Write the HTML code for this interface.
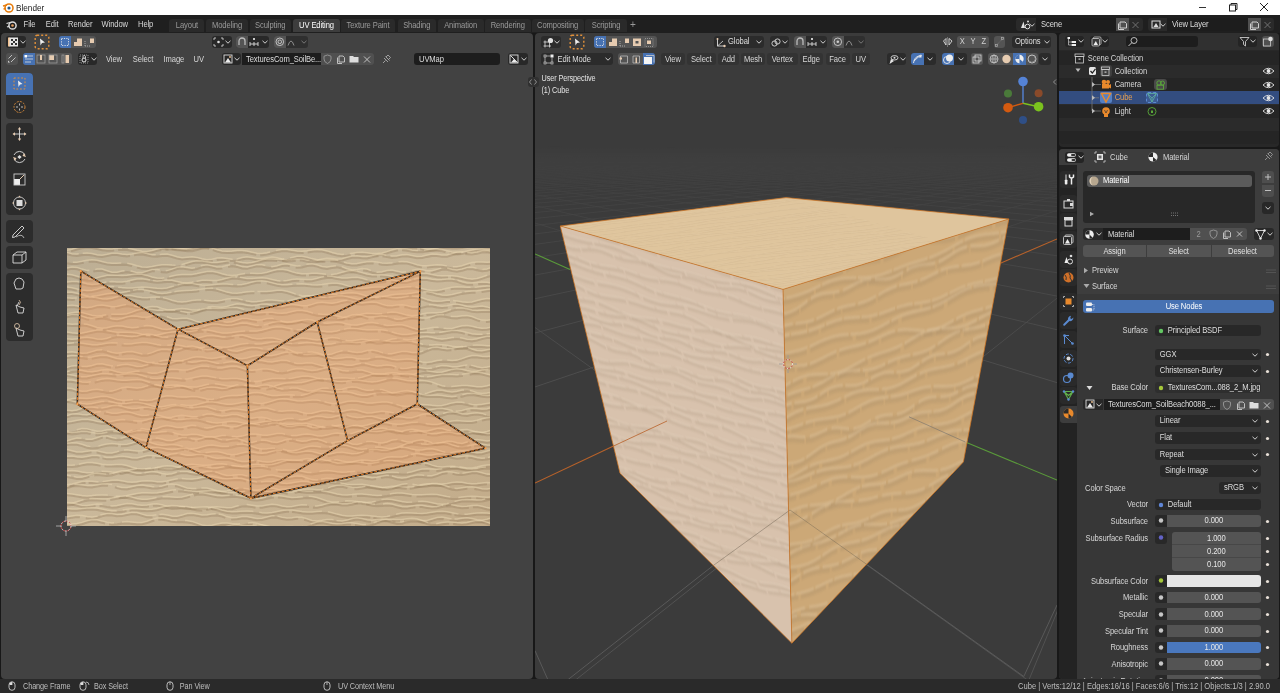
<!DOCTYPE html><html><head><meta charset="utf-8"><style>
html,body{margin:0;padding:0;width:1280px;height:693px;overflow:hidden;background:#181818}
#root{position:relative;width:1280px;height:693px;overflow:hidden;font-family:"Liberation Sans", sans-serif}
#root div{position:absolute;box-sizing:border-box}
.t{white-space:nowrap;font-family:"Liberation Sans", sans-serif;letter-spacing:-0.1px;transform:scaleY(1.13);transform-origin:50% 55%}
</style></head><body><div id="root">
<div style="left:0px;top:0px;width:1280px;height:15px;background:#ffffff;border-radius:0px;"></div>
<svg style="position:absolute;left:2px;top:2px;overflow:visible;" width="12" height="11" viewBox="0 0 12 11"><circle cx="7" cy="6" r="4" fill="none" stroke="#e87d0d" stroke-width="1.6"/><circle cx="7" cy="6" r="1.6" fill="#265787"/><path d="M1 4 L5 3 M1.5 7 L4 6.5" stroke="#e87d0d" stroke-width="1.4"/></svg>
<div class="t" style="left:16px;top:2.5px;height:11px;line-height:11px;font-size:8.2px;color:#1a1a1a;text-align:left;letter-spacing:0">Blender</div>
<div style="left:1199px;top:6.5px;width:7px;height:1px;background:#333;border-radius:0px;"></div>
<svg style="position:absolute;left:1228px;top:2px;overflow:visible;" width="10" height="10" viewBox="0 0 10 10"><rect x="1.5" y="3" width="6" height="6" fill="none" stroke="#222" stroke-width="1"/><path d="M3 3 V1.5 H9 V7.5 H7.5" fill="none" stroke="#222" stroke-width="1"/></svg>
<svg style="position:absolute;left:1259px;top:2px;overflow:visible;" width="10" height="10" viewBox="0 0 10 10"><path d="M1 1 L9 9 M9 1 L1 9" stroke="#222" stroke-width="1"/></svg>
<div style="left:0px;top:15px;width:1280px;height:18px;background:#1f1f1f;border-radius:0px;"></div>
<svg style="position:absolute;left:6px;top:19px;overflow:visible;" width="12" height="12" viewBox="0 0 12 12"><circle cx="6.5" cy="6.5" r="3.6" fill="none" stroke="#dcdcdc" stroke-width="1.5"/><circle cx="6.5" cy="6.5" r="1.3" fill="#e8a060"/><path d="M0.5 4.5 L4 3.5 M1 8 L3.5 7" stroke="#dcdcdc" stroke-width="1.3"/></svg>
<div class="t" style="left:23.6px;top:19.0px;height:12px;line-height:12px;font-size:7.6px;color:#d8d8d8;text-align:left;">File</div>
<div class="t" style="left:45.8px;top:19.0px;height:12px;line-height:12px;font-size:7.6px;color:#d8d8d8;text-align:left;">Edit</div>
<div class="t" style="left:68px;top:19.0px;height:12px;line-height:12px;font-size:7.6px;color:#d8d8d8;text-align:left;">Render</div>
<div class="t" style="left:101.6px;top:19.0px;height:12px;line-height:12px;font-size:7.6px;color:#d8d8d8;text-align:left;">Window</div>
<div class="t" style="left:138px;top:19.0px;height:12px;line-height:12px;font-size:7.6px;color:#d8d8d8;text-align:left;">Help</div>
<div style="left:169.4px;top:19.3px;width:35.099999999999994px;height:12.5px;background:#2a2a2a;border-radius:3px;border-bottom-left-radius:0;border-bottom-right-radius:0"></div>
<div class="t" style="left:169.4px;top:20.0px;width:35.099999999999994px;height:12.5px;line-height:12.5px;font-size:7.6px;color:#9a9a9a;text-align:center;">Layout</div>
<div style="left:206px;top:19.3px;width:42px;height:12.5px;background:#2a2a2a;border-radius:3px;border-bottom-left-radius:0;border-bottom-right-radius:0"></div>
<div class="t" style="left:206px;top:20.0px;width:42px;height:12.5px;line-height:12.5px;font-size:7.6px;color:#9a9a9a;text-align:center;">Modeling</div>
<div style="left:249.5px;top:19.3px;width:41.5px;height:12.5px;background:#2a2a2a;border-radius:3px;border-bottom-left-radius:0;border-bottom-right-radius:0"></div>
<div class="t" style="left:249.5px;top:20.0px;width:41.5px;height:12.5px;line-height:12.5px;font-size:7.6px;color:#9a9a9a;text-align:center;">Sculpting</div>
<div style="left:293px;top:19.3px;width:47px;height:12.5px;background:#3d3d3d;border-radius:3px;border-bottom-left-radius:0;border-bottom-right-radius:0"></div>
<div class="t" style="left:293px;top:20.0px;width:47px;height:12.5px;line-height:12.5px;font-size:7.6px;color:#ffffff;text-align:center;">UV Editing</div>
<div style="left:341px;top:19.3px;width:54px;height:12.5px;background:#2a2a2a;border-radius:3px;border-bottom-left-radius:0;border-bottom-right-radius:0"></div>
<div class="t" style="left:341px;top:20.0px;width:54px;height:12.5px;line-height:12.5px;font-size:7.6px;color:#9a9a9a;text-align:center;">Texture Paint</div>
<div style="left:398px;top:19.3px;width:37.5px;height:12.5px;background:#2a2a2a;border-radius:3px;border-bottom-left-radius:0;border-bottom-right-radius:0"></div>
<div class="t" style="left:398px;top:20.0px;width:37.5px;height:12.5px;line-height:12.5px;font-size:7.6px;color:#9a9a9a;text-align:center;">Shading</div>
<div style="left:437.5px;top:19.3px;width:46.19999999999999px;height:12.5px;background:#2a2a2a;border-radius:3px;border-bottom-left-radius:0;border-bottom-right-radius:0"></div>
<div class="t" style="left:437.5px;top:20.0px;width:46.19999999999999px;height:12.5px;line-height:12.5px;font-size:7.6px;color:#9a9a9a;text-align:center;">Animation</div>
<div style="left:485px;top:19.3px;width:45.5px;height:12.5px;background:#2a2a2a;border-radius:3px;border-bottom-left-radius:0;border-bottom-right-radius:0"></div>
<div class="t" style="left:485px;top:20.0px;width:45.5px;height:12.5px;line-height:12.5px;font-size:7.6px;color:#9a9a9a;text-align:center;">Rendering</div>
<div style="left:531.5px;top:19.3px;width:52.200000000000045px;height:12.5px;background:#2a2a2a;border-radius:3px;border-bottom-left-radius:0;border-bottom-right-radius:0"></div>
<div class="t" style="left:531.5px;top:20.0px;width:52.200000000000045px;height:12.5px;line-height:12.5px;font-size:7.6px;color:#9a9a9a;text-align:center;">Compositing</div>
<div style="left:585px;top:19.3px;width:42px;height:12.5px;background:#2a2a2a;border-radius:3px;border-bottom-left-radius:0;border-bottom-right-radius:0"></div>
<div class="t" style="left:585px;top:20.0px;width:42px;height:12.5px;line-height:12.5px;font-size:7.6px;color:#9a9a9a;text-align:center;">Scripting</div>
<div class="t" style="left:630px;top:19.0px;height:12px;line-height:12px;font-size:10px;color:#9a9a9a;text-align:left;">+</div>
<div style="left:1016px;top:18px;width:126.5px;height:12.5px;background:#2a2a2a;border-radius:3px;"></div>
<div style="left:1036.4px;top:18px;width:79.6px;height:12.5px;background:#1d1d1d;border-radius:0px;"></div>
<div style="left:1116px;top:18px;width:13px;height:12.5px;background:#505050;border-radius:0px;"></div>
<svg style="position:absolute;left:1019px;top:19px;overflow:visible;" width="14" height="11" viewBox="0 0 14 11"><path d="M2 9 L4.5 2.5 L6 9 Z" fill="#e0e0e0"/><circle cx="8.5" cy="7.5" r="2.3" fill="none" stroke="#e0e0e0" stroke-width="1"/><circle cx="9" cy="2.5" r="1" fill="#e0e0e0"/></svg>
<svg style="position:absolute;left:1029px;top:22.5px;overflow:visible;" width="6" height="4" viewBox="0 0 6 4"><path d="M0.5 0.8 L3 3.2 L5.5 0.8" fill="none" stroke="#cfcfcf" stroke-width="1"/></svg>
<div class="t" style="left:1041px;top:19.0px;height:12.5px;line-height:12.5px;font-size:7.6px;color:#dedede;text-align:left;">Scene</div>
<svg style="position:absolute;left:1117px;top:19px;overflow:visible;" width="11" height="11" viewBox="0 0 11 11"><path d="M3 3 H8 L9.5 4.5 V9 H3 Z" fill="none" stroke="#cfcfcf" stroke-width="1"/><path d="M1.5 4.5 V10.5 H7" fill="none" stroke="#cfcfcf" stroke-width="1"/></svg>
<svg style="position:absolute;left:1130px;top:19px;overflow:visible;" width="11" height="11" viewBox="0 0 11 11"><path d="M2.5 3 L8.5 9 M8.5 3 L2.5 9" stroke="#707070" stroke-width="1"/></svg>
<div style="left:1148px;top:18px;width:126px;height:12.5px;background:#2a2a2a;border-radius:3px;"></div>
<div style="left:1167px;top:18px;width:81px;height:12.5px;background:#1d1d1d;border-radius:0px;"></div>
<div style="left:1248px;top:18px;width:13px;height:12.5px;background:#505050;border-radius:0px;"></div>
<svg style="position:absolute;left:1150px;top:19px;overflow:visible;" width="14" height="11" viewBox="0 0 14 11"><rect x="2" y="2" width="8" height="7" fill="none" stroke="#dedede" stroke-width="1"/><path d="M3.5 8 L6 4 L8.5 8 Z" fill="#dedede"/></svg>
<svg style="position:absolute;left:1160px;top:22.5px;overflow:visible;" width="6" height="4" viewBox="0 0 6 4"><path d="M0.5 0.8 L3 3.2 L5.5 0.8" fill="none" stroke="#cfcfcf" stroke-width="1"/></svg>
<div class="t" style="left:1172px;top:19.0px;height:12.5px;line-height:12.5px;font-size:7.6px;color:#dedede;text-align:left;">View Layer</div>
<svg style="position:absolute;left:1249px;top:19px;overflow:visible;" width="11" height="11" viewBox="0 0 11 11"><path d="M3 3 H8 L9.5 4.5 V9 H3 Z" fill="none" stroke="#cfcfcf" stroke-width="1"/><path d="M1.5 4.5 V10.5 H7" fill="none" stroke="#cfcfcf" stroke-width="1"/></svg>
<svg style="position:absolute;left:1262px;top:19px;overflow:visible;" width="11" height="11" viewBox="0 0 11 11"><path d="M2.5 3 L8.5 9 M8.5 3 L2.5 9" stroke="#707070" stroke-width="1"/></svg>
<div style="left:1px;top:33px;width:532px;height:646px;background:#424242;border-radius:4px;"></div>
<div style="left:535px;top:33px;width:522px;height:646px;background:#3b3b3b;border-radius:4px;"></div>
<div style="left:1058.5px;top:33px;width:220.5px;height:113.5px;background:#282828;border-radius:4px;"></div>
<div style="left:1058.5px;top:148.5px;width:220.5px;height:530.5px;background:#3d3d3d;border-radius:4px;"></div>
<div style="left:0px;top:679px;width:1280px;height:14px;background:#2a2a2a;border-radius:0px;"></div>
<div style="left:6.4px;top:36px;width:19.4px;height:11.6px;background:#282828;border-radius:3px;"></div>
<svg style="position:absolute;left:8px;top:37px;overflow:visible;" width="11" height="10" viewBox="0 0 11 10"><rect x="1" y="0.5" width="9" height="9" fill="#e6e6e6"/><rect x="3" y="2" width="2" height="2" fill="#333"/><rect x="5" y="4" width="2" height="2" fill="#333"/><rect x="3" y="6" width="2" height="2" fill="#333"/><rect x="7" y="2" width="2" height="2" fill="#333"/><rect x="7" y="6" width="2" height="2" fill="#333"/><rect x="0" y="0.5" width="1.5" height="9" fill="#f0c090"/></svg>
<svg style="position:absolute;left:19.5px;top:40px;overflow:visible;" width="6" height="4" viewBox="0 0 6 4"><path d="M0.5 0.8 L3 3.2 L5.5 0.8" fill="none" stroke="#cfcfcf" stroke-width="1"/></svg>
<svg style="position:absolute;left:34px;top:34px;overflow:visible;" width="16" height="16" viewBox="0 0 16 16"><rect x="1.2" y="1.2" width="13.6" height="13.6" rx="2" fill="none" stroke="#e0903a" stroke-width="1.4" stroke-dasharray="2 2"/><path d="M6 4.5 L11 8.5 L8 9 L6.5 11.5 Z" fill="#eeeeee"/></svg>
<div style="left:59.3px;top:36px;width:37px;height:11.6px;background:#545454;border-radius:3px;"></div>
<div style="left:59.3px;top:36px;width:11.6px;height:11.6px;background:#4772b3;border-radius:3px;border-top-right-radius:0;border-bottom-right-radius:0"></div>
<svg style="position:absolute;left:59.3px;top:36px;overflow:visible;" width="37" height="12" viewBox="0 0 37 12"><rect x="2.5" y="2.5" width="7" height="7" fill="none" stroke="#e8e8e8" stroke-width="0.9" stroke-dasharray="1.2 1.2"/><path d="M15 10 V6 H18 V2.5 H23 V10 Z" fill="#e6cbb0"/><path d="M31 2.5 H35 V7 H31 Z" fill="#e6cbb0"/><path d="M26 10 H32 M26 5 V10" stroke="#bbb" stroke-width="0.8" stroke-dasharray="1 1"/></svg>
<div style="left:212px;top:36px;width:20px;height:11.6px;background:#282828;border-radius:3px;"></div>
<svg style="position:absolute;left:213px;top:37px;overflow:visible;" width="11" height="10" viewBox="0 0 11 10"><circle cx="5.5" cy="5" r="1.3" fill="#ddd"/><path d="M1 3 V1 H3 M8 1 H10 V3 M10 7 V9 H8 M3 9 H1 V7" fill="none" stroke="#ccc" stroke-width="0.9"/></svg>
<svg style="position:absolute;left:225px;top:40px;overflow:visible;" width="6" height="4" viewBox="0 0 6 4"><path d="M0.5 0.8 L3 3.2 L5.5 0.8" fill="none" stroke="#cfcfcf" stroke-width="1"/></svg>
<div style="left:236px;top:36px;width:33px;height:11.6px;background:#282828;border-radius:3px;"></div>
<div style="left:236px;top:36px;width:11.5px;height:11.6px;background:#545454;border-radius:3px;border-top-right-radius:0;border-bottom-right-radius:0"></div>
<svg style="position:absolute;left:236px;top:36px;overflow:visible;" width="33" height="12" viewBox="0 0 33 12"><path d="M3 9 V5 A3 3 0 0 1 9 5 V9" fill="none" stroke="#bbb" stroke-width="1.3"/><path d="M14 8 H22 M14 6 V10 M18 6 V10 M22 6 V10" stroke="#ddd" stroke-width="0.9"/><circle cx="18" cy="3" r="1" fill="#fff"/></svg>
<svg style="position:absolute;left:262px;top:40px;overflow:visible;" width="6" height="4" viewBox="0 0 6 4"><path d="M0.5 0.8 L3 3.2 L5.5 0.8" fill="none" stroke="#cfcfcf" stroke-width="1"/></svg>
<div style="left:274px;top:36px;width:34px;height:11.6px;background:#2f2f2f;border-radius:3px;"></div>
<div style="left:274px;top:36px;width:11.5px;height:11.6px;background:#545454;border-radius:3px;border-top-right-radius:0;border-bottom-right-radius:0"></div>
<svg style="position:absolute;left:274px;top:36px;overflow:visible;" width="34" height="12" viewBox="0 0 34 12"><circle cx="5.8" cy="5.8" r="3.8" fill="none" stroke="#ccc" stroke-width="0.9"/><circle cx="5.8" cy="5.8" r="1.8" fill="none" stroke="#ccc" stroke-width="0.9"/><path d="M14 9.5 Q17 0.5 20 9.5" fill="none" stroke="#999" stroke-width="0.9"/></svg>
<svg style="position:absolute;left:301px;top:40px;overflow:visible;" width="6" height="4" viewBox="0 0 6 4"><path d="M0.5 0.8 L3 3.2 L5.5 0.8" fill="none" stroke="#777" stroke-width="1"/></svg>
<div style="left:6.4px;top:53.2px;width:11.2px;height:11.6px;background:#505050;border-radius:3px;"></div>
<svg style="position:absolute;left:6.4px;top:53.2px;overflow:visible;" width="12" height="12" viewBox="0 0 12 12"><path d="M2.5 5.5 L6 2 M5 9 L9.5 4.5" stroke="#ccc" stroke-width="0.9"/><path d="M2 9.5 L4 9.5 L2 7.5 Z" fill="#ddd"/></svg>
<div style="left:23.2px;top:53.2px;width:48.5px;height:11.6px;background:#545454;border-radius:3px;"></div>
<div style="left:23.2px;top:53.2px;width:11.6px;height:11.6px;background:#4772b3;border-radius:3px;border-top-right-radius:0;border-bottom-right-radius:0"></div>
<svg style="position:absolute;left:23.2px;top:53.2px;overflow:visible;" width="49" height="12" viewBox="0 0 49 12"><rect x="1.5" y="2" width="2.5" height="2.5" fill="#fff"/><path d="M4 3 H10 M2 6 H10 M2 9 H8" stroke="#ddd" stroke-width="0.8"/><rect x="14" y="2" width="8" height="8" fill="none" stroke="#999" stroke-width="0.8"/><rect x="17" y="2" width="2" height="5" fill="#e6cbb0"/><rect x="26" y="2" width="5" height="5" fill="#e6cbb0"/><rect x="26" y="2" width="8" height="8" fill="none" stroke="#999" stroke-width="0.8"/><rect x="39" y="2" width="2" height="8" fill="none" stroke="#999" stroke-width="0.8"/><rect x="42.5" y="2" width="3.5" height="8" fill="#e6cbb0"/></svg>
<div style="left:77.7px;top:53.2px;width:19px;height:11.6px;background:#282828;border-radius:3px;"></div>
<svg style="position:absolute;left:79px;top:54px;overflow:visible;" width="11" height="10" viewBox="0 0 11 10"><rect x="1" y="1" width="8" height="8" fill="none" stroke="#aaa" stroke-width="0.8" stroke-dasharray="1 1"/><circle cx="5" cy="6" r="2" fill="none" stroke="#eee" stroke-width="1"/><path d="M4 4 V2.5 A1.3 1.3 0 0 1 6.5 2.5 V4" fill="none" stroke="#eee" stroke-width="0.8"/></svg>
<svg style="position:absolute;left:90.5px;top:57px;overflow:visible;" width="6" height="4" viewBox="0 0 6 4"><path d="M0.5 0.8 L3 3.2 L5.5 0.8" fill="none" stroke="#cfcfcf" stroke-width="1"/></svg>
<div class="t" style="left:106px;top:53.5px;height:12px;line-height:12px;font-size:7.6px;color:#d8d8d8;text-align:left;">View</div>
<div class="t" style="left:132.8px;top:53.5px;height:12px;line-height:12px;font-size:7.6px;color:#d8d8d8;text-align:left;">Select</div>
<div class="t" style="left:163.6px;top:53.5px;height:12px;line-height:12px;font-size:7.6px;color:#d8d8d8;text-align:left;">Image</div>
<div class="t" style="left:193.6px;top:53.5px;height:12px;line-height:12px;font-size:7.6px;color:#d8d8d8;text-align:left;">UV</div>
<div style="left:221.8px;top:53.2px;width:19px;height:11.6px;background:#282828;border-radius:3px;"></div>
<svg style="position:absolute;left:222.5px;top:54px;overflow:visible;" width="11" height="10" viewBox="0 0 11 10"><rect x="1" y="1" width="8" height="8" fill="none" stroke="#ddd" stroke-width="0.9"/><path d="M2 8.5 L5 4 L8 8.5 Z" fill="#eee"/><circle cx="7" cy="3" r="0.9" fill="#f0c090"/></svg>
<svg style="position:absolute;left:234px;top:57px;overflow:visible;" width="6" height="4" viewBox="0 0 6 4"><path d="M0.5 0.8 L3 3.2 L5.5 0.8" fill="none" stroke="#cfcfcf" stroke-width="1"/></svg>
<div style="left:242px;top:53.2px;width:79px;height:11.6px;background:#1d1d1d;border-radius:0px;"></div>
<div class="t" style="left:246px;top:53.5px;height:12px;line-height:12px;font-size:7.6px;color:#dedede;text-align:left;">TexturesCom_SoilBe...</div>
<div style="left:321px;top:53.2px;width:53px;height:11.6px;background:#505050;border-radius:3px;border-top-left-radius:0;border-bottom-left-radius:0"></div>
<svg style="position:absolute;left:321px;top:53.2px;overflow:visible;" width="53" height="12" viewBox="0 0 53 12"><path d="M6.5 2 L10 3.2 V6 Q10 9 6.5 10.5 Q3 9 3 6 V3.2 Z" fill="none" stroke="#999" stroke-width="0.9"/><path d="M18 3 H22 L23.5 4.5 V9 H18 Z" fill="none" stroke="#ccc" stroke-width="0.9"/><path d="M16.5 4.5 V10.5 H21" fill="none" stroke="#ccc" stroke-width="0.9"/><path d="M28.5 3 H32 L33 4 H37.5 V9.5 H28.5 Z" fill="#dddddd"/><path d="M43 3.5 L49 9.5 M49 3.5 L43 9.5" stroke="#ccc" stroke-width="0.9"/></svg>
<svg style="position:absolute;left:380px;top:53px;overflow:visible;" width="12" height="12" viewBox="0 0 12 12"><path d="M3 10 L5.5 7.5 M4 5 L8 9 M5.5 3.5 L9.5 7.5 M6 4 L8 2 L10.5 4.5 L8.5 6.5" fill="none" stroke="#aaa" stroke-width="0.9"/></svg>
<div style="left:413.8px;top:53.2px;width:86.2px;height:11.6px;background:#1d1d1d;border-radius:3px;"></div>
<div class="t" style="left:419px;top:53.5px;height:12px;line-height:12px;font-size:7.6px;color:#dedede;text-align:left;">UVMap</div>
<div style="left:508px;top:53.2px;width:20px;height:11.6px;background:#282828;border-radius:3px;"></div>
<svg style="position:absolute;left:509px;top:54px;overflow:visible;" width="11" height="10" viewBox="0 0 11 10"><rect x="1" y="1" width="8" height="8" fill="none" stroke="#ddd" stroke-width="0.9"/><path d="M1.5 1.5 L8.5 8.5" stroke="#eee" stroke-width="0.9"/><path d="M2 8.5 L5 5 L8 8.5 Z" fill="#eee"/></svg>
<svg style="position:absolute;left:521px;top:57px;overflow:visible;" width="6" height="4" viewBox="0 0 6 4"><path d="M0.5 0.8 L3 3.2 L5.5 0.8" fill="none" stroke="#cfcfcf" stroke-width="1"/></svg>
<div style="left:5.8px;top:73.2px;width:27px;height:45.39999999999999px;background:#2c2c2c;border-radius:4px;"></div>
<div style="left:5.8px;top:123px;width:27px;height:92px;background:#2c2c2c;border-radius:4px;"></div>
<div style="left:5.8px;top:219.5px;width:27px;height:23.099999999999994px;background:#2c2c2c;border-radius:4px;"></div>
<div style="left:5.8px;top:246px;width:27px;height:22.5px;background:#2c2c2c;border-radius:4px;"></div>
<div style="left:5.8px;top:273px;width:27px;height:68px;background:#2c2c2c;border-radius:4px;"></div>
<div style="left:5.8px;top:73.2px;width:27px;height:22px;background:#4772b3;border-radius:4px;border-bottom-left-radius:0;border-bottom-right-radius:0"></div>
<svg style="position:absolute;left:5.8px;top:73.2px;overflow:visible;" width="27" height="22" viewBox="0 0 27 22"><rect x="8" y="5" width="11" height="11" fill="none" stroke="#e0903a" stroke-width="1" stroke-dasharray="1.8 1.8"/><path d="M12 7.5 L16.5 11 L14 11.5 L12.5 14 Z" fill="#eee"/></svg>
<svg style="position:absolute;left:5.8px;top:96px;overflow:visible;" width="27" height="23" viewBox="0 0 27 23"><circle cx="13.5" cy="11" r="5.5" fill="none" stroke="#d0863a" stroke-width="1" stroke-dasharray="2 1.2"/><path d="M13.5 7.5 V9.5 M13.5 12.5 V14.5 M10 11 H12 M15 11 H17" stroke="#ccc" stroke-width="0.9"/></svg>
<svg style="position:absolute;left:5.8px;top:123px;overflow:visible;" width="27" height="23" viewBox="0 0 27 23"><path d="M13.5 5 V17 M7.5 11 H19.5" stroke="#ddd" stroke-width="0.9"/><path d="M13.5 4 L11.8 6.5 H15.2 Z M13.5 18 L11.8 15.5 H15.2 Z M6.5 11 L9 9.3 V12.7 Z M20.5 11 L18 9.3 V12.7 Z" fill="#e6cbb0"/></svg>
<svg style="position:absolute;left:5.8px;top:146px;overflow:visible;" width="27" height="23" viewBox="0 0 27 23"><path d="M8 9 A6 6 0 0 1 19 9 M19 13 A6 6 0 0 1 8 13" fill="none" stroke="#ddd" stroke-width="0.9"/><rect x="12" y="9.5" width="3" height="3" transform="rotate(45 13.5 11)" fill="#ddd"/><path d="M18 7 L20 11 L16.5 10 Z M9 15 L7 11 L10.5 12 Z" fill="#e6cbb0"/></svg>
<svg style="position:absolute;left:5.8px;top:169px;overflow:visible;" width="27" height="23" viewBox="0 0 27 23"><rect x="8" y="10" width="6" height="6" fill="#eee"/><rect x="8" y="5" width="11" height="11" fill="none" stroke="#ccc" stroke-width="0.9"/><path d="M14 10 L18 6" stroke="#e6cbb0" stroke-width="1"/></svg>
<svg style="position:absolute;left:5.8px;top:192px;overflow:visible;" width="27" height="23" viewBox="0 0 27 23"><circle cx="13.5" cy="11" r="6" fill="none" stroke="#ccc" stroke-width="0.9"/><rect x="10.5" y="8" width="6" height="6" fill="#ddd"/><path d="M13.5 3.5 L12.3 5.3 H14.7 Z M13.5 18.5 L12.3 16.7 H14.7 Z M6 11 L7.8 9.8 V12.2 Z M21 11 L19.2 9.8 V12.2 Z" fill="#e6cbb0"/></svg>
<svg style="position:absolute;left:5.8px;top:219.5px;overflow:visible;" width="27" height="23" viewBox="0 0 27 23"><path d="M7 15 L16 6 L18 8 L9 17 L6.5 17.5 Z" fill="none" stroke="#ddd" stroke-width="0.9"/><path d="M10 17 Q16 13 18 18" fill="none" stroke="#ccc" stroke-width="0.8"/></svg>
<svg style="position:absolute;left:5.8px;top:246px;overflow:visible;" width="27" height="23" viewBox="0 0 27 23"><path d="M7 9 L11 6 H20 V14 L16 17 H7 Z M7 9 H16 V17 M16 9 L20 6" fill="none" stroke="#ddd" stroke-width="0.9"/></svg>
<svg style="position:absolute;left:5.8px;top:273px;overflow:visible;" width="27" height="23" viewBox="0 0 27 23"><path d="M10 16 L8 10 L10 6 L13 5 L16 6 L18 9 L17 15 L15 16 Z" fill="none" stroke="#ddd" stroke-width="0.9"/></svg>
<svg style="position:absolute;left:5.8px;top:296px;overflow:visible;" width="27" height="23" viewBox="0 0 27 23"><path d="M11 10 L13 6 M11 13 L10 9 L14 11 L18 12 L17 17 L12 17 Z" fill="none" stroke="#ddd" stroke-width="0.9"/><path d="M13 4 Q16 6 13 9" fill="none" stroke="#e6cbb0" stroke-width="0.8"/></svg>
<svg style="position:absolute;left:5.8px;top:319px;overflow:visible;" width="27" height="23" viewBox="0 0 27 23"><path d="M11 13 L10 9 L14 11 L18 12 L17 17 L12 17 Z" fill="none" stroke="#ddd" stroke-width="0.9"/><circle cx="11" cy="7" r="2.5" fill="none" stroke="#e6cbb0" stroke-width="0.8"/></svg>
<svg style="position:absolute;left:66.5px;top:248px;overflow:visible;overflow:hidden" width="423.5" height="278" viewBox="0 0 423.5 278"><defs>
<linearGradient id="vig" x1="0" y1="0" x2="1" y2="1">
<stop offset="0" stop-color="#bcae94"/><stop offset="0.5" stop-color="#cab89a"/><stop offset="1" stop-color="#c2ab89"/></linearGradient>
<clipPath id="texclip"><rect x="0" y="0" width="423.5" height="278"/></clipPath>
<filter id="soft" x="-5%" y="-5%" width="110%" height="110%"><feGaussianBlur stdDeviation="0.5"/></filter><g id="rip" filter="url(#soft)"><path d="M-5.0 -6.6 L0.0 -7.6 L5.0 -7.6 L10.0 -6.3 L15.0 -4.9 L20.0 -4.2 L25.0 -4.2 L30.0 -3.9 L35.0 -2.8 L40.0 -1.4 L45.0 -0.9 L50.0 -1.5 L55.0 -2.4 L60.0 -2.4 L65.0 -1.7 L70.0 -1.3 L75.0 -1.7 L80.0 -2.3 L85.0 -2.1 L90.0 -0.7 L95.0 0.8 L100.0 1.4 L105.0 1.2 L110.0 1.3 L115.0 2.1 L120.0 3.1 L125.0 3.1 L130.0 2.0 L135.0 0.5 L140.0 -0.1 L145.0 0.0 L150.0 -0.1 L155.0 -1.1 L160.0 -2.4 L165.0 -2.8 L170.0 -2.1 L175.0 -1.2 L180.0 -1.1 L185.0 -1.8 L190.0 -2.4 L195.0 -2.1 L200.0 -1.5 L205.0 -1.9 L210.0 -3.3 L215.0 -5.0 L220.0 -5.7 L225.0 -5.6 L230.0 -5.7 L235.0 -6.5 L240.0 -7.6 L245.0 -7.6 L250.0 -6.5 L255.0 -5.2 L260.0 -4.7 L265.0 -4.9 L270.0 -4.9 L275.0 -4.0 L280.0 -2.9 L285.0 -2.6 L290.0 -3.4 L295.0 -4.4 L300.0 -4.5 L305.0 -3.8 L310.0 -3.2 L315.0 -3.4 L320.0 -3.9 L325.0 -3.5 L330.0 -1.9 L335.0 -0.2 L340.0 0.6 L345.0 0.6 L350.0 0.7 L355.0 1.5 L360.0 2.6 L365.0 2.7 L370.0 1.7 L375.0 0.4 L380.0 -0.0 L385.0 0.3 L390.0 0.5 L395.0 -0.2 L400.0 -1.1 L405.0 -1.3 L410.0 -0.4 L415.0 0.7 L420.0 0.9 L425.0 0.2" fill="none" stroke="#8e7658" stroke-width="2.2" stroke-opacity="0.33" stroke-dasharray="81 3" stroke-dashoffset="57"/><path d="M-5.0 -8.3 L0.0 -9.3 L5.0 -9.3 L10.0 -8.0 L15.0 -6.6 L20.0 -5.9 L25.0 -5.9 L30.0 -5.6 L35.0 -4.5 L40.0 -3.1 L45.0 -2.6 L50.0 -3.2 L55.0 -4.1 L60.0 -4.1 L65.0 -3.4 L70.0 -3.0 L75.0 -3.4 L80.0 -4.0 L85.0 -3.8 L90.0 -2.4 L95.0 -0.9 L100.0 -0.3 L105.0 -0.5 L110.0 -0.4 L115.0 0.4 L120.0 1.4 L125.0 1.4 L130.0 0.3 L135.0 -1.2 L140.0 -1.8 L145.0 -1.7 L150.0 -1.8 L155.0 -2.8 L160.0 -4.1 L165.0 -4.5 L170.0 -3.8 L175.0 -2.9 L180.0 -2.8 L185.0 -3.5 L190.0 -4.1 L195.0 -3.8 L200.0 -3.2 L205.0 -3.6 L210.0 -5.0 L215.0 -6.7 L220.0 -7.4 L225.0 -7.3 L230.0 -7.4 L235.0 -8.2 L240.0 -9.3 L245.0 -9.3 L250.0 -8.2 L255.0 -6.9 L260.0 -6.4 L265.0 -6.6 L270.0 -6.6 L275.0 -5.7 L280.0 -4.6 L285.0 -4.3 L290.0 -5.1 L295.0 -6.1 L300.0 -6.2 L305.0 -5.5 L310.0 -4.9 L315.0 -5.1 L320.0 -5.6 L325.0 -5.2 L330.0 -3.6 L335.0 -1.9 L340.0 -1.1 L345.0 -1.1 L350.0 -1.0 L355.0 -0.2 L360.0 0.9 L365.0 1.0 L370.0 -0.0 L375.0 -1.3 L380.0 -1.7 L385.0 -1.4 L390.0 -1.2 L395.0 -1.9 L400.0 -2.8 L405.0 -3.0 L410.0 -2.1 L415.0 -1.0 L420.0 -0.8 L425.0 -1.5" fill="none" stroke="#e6d3ae" stroke-width="1.5" stroke-opacity="0.55" stroke-dasharray="40 3" stroke-dashoffset="23"/><path d="M-5.0 4.1 L0.0 3.9 L5.0 2.9 L10.0 1.4 L15.0 0.1 L20.0 -0.5 L25.0 -0.1 L30.0 0.9 L35.0 2.1 L40.0 2.7 L45.0 2.6 L50.0 2.0 L55.0 1.6 L60.0 1.8 L65.0 2.8 L70.0 4.0 L75.0 5.0 L80.0 5.1 L85.0 4.2 L90.0 2.8 L95.0 1.7 L100.0 1.2 L105.0 1.5 L110.0 2.1 L115.0 2.5 L120.0 2.2 L125.0 1.3 L130.0 0.4 L135.0 -0.1 L140.0 0.4 L145.0 1.8 L150.0 3.4 L155.0 4.6 L160.0 5.0 L165.0 4.8 L170.0 4.3 L175.0 4.2 L180.0 4.8 L185.0 5.9 L190.0 6.9 L195.0 7.2 L200.0 6.5 L205.0 5.2 L210.0 3.9 L215.0 3.1 L220.0 3.2 L225.0 3.9 L230.0 4.7 L235.0 5.0 L240.0 4.5 L245.0 3.7 L250.0 3.2 L255.0 3.5 L260.0 4.6 L265.0 6.2 L270.0 7.5 L275.0 8.1 L280.0 7.8 L285.0 6.9 L290.0 6.1 L295.0 6.0 L300.0 6.4 L305.0 7.1 L310.0 7.3 L315.0 6.7 L320.0 5.3 L325.0 3.6 L330.0 2.4 L335.0 2.1 L340.0 2.7 L345.0 3.6 L350.0 4.2 L355.0 4.1 L360.0 3.4 L365.0 2.7 L370.0 2.6 L375.0 3.2 L380.0 4.5 L385.0 5.7 L390.0 6.3 L395.0 6.0 L400.0 4.8 L405.0 3.6 L410.0 2.8 L415.0 2.7 L420.0 3.1 L425.0 3.4" fill="none" stroke="#8e7658" stroke-width="2.2" stroke-opacity="0.33" stroke-dasharray="44 4" stroke-dashoffset="39"/><path d="M-5.0 2.4 L0.0 2.2 L5.0 1.2 L10.0 -0.3 L15.0 -1.6 L20.0 -2.2 L25.0 -1.8 L30.0 -0.8 L35.0 0.4 L40.0 1.0 L45.0 0.9 L50.0 0.3 L55.0 -0.1 L60.0 0.1 L65.0 1.1 L70.0 2.3 L75.0 3.3 L80.0 3.4 L85.0 2.5 L90.0 1.1 L95.0 -0.0 L100.0 -0.5 L105.0 -0.2 L110.0 0.4 L115.0 0.8 L120.0 0.5 L125.0 -0.4 L130.0 -1.3 L135.0 -1.8 L140.0 -1.3 L145.0 0.1 L150.0 1.7 L155.0 2.9 L160.0 3.3 L165.0 3.1 L170.0 2.6 L175.0 2.5 L180.0 3.1 L185.0 4.2 L190.0 5.2 L195.0 5.5 L200.0 4.8 L205.0 3.5 L210.0 2.2 L215.0 1.4 L220.0 1.5 L225.0 2.2 L230.0 3.0 L235.0 3.3 L240.0 2.8 L245.0 2.0 L250.0 1.5 L255.0 1.8 L260.0 2.9 L265.0 4.5 L270.0 5.8 L275.0 6.4 L280.0 6.1 L285.0 5.2 L290.0 4.4 L295.0 4.3 L300.0 4.7 L305.0 5.4 L310.0 5.6 L315.0 5.0 L320.0 3.6 L325.0 1.9 L330.0 0.7 L335.0 0.4 L340.0 1.0 L345.0 1.9 L350.0 2.5 L355.0 2.4 L360.0 1.7 L365.0 1.0 L370.0 0.9 L375.0 1.5 L380.0 2.8 L385.0 4.0 L390.0 4.6 L395.0 4.3 L400.0 3.1 L405.0 1.9 L410.0 1.1 L415.0 1.0 L420.0 1.4 L425.0 1.7" fill="none" stroke="#e6d3ae" stroke-width="1.5" stroke-opacity="0.55" stroke-dasharray="69 6" stroke-dashoffset="8"/><path d="M-5.0 5.0 L0.0 6.1 L5.0 7.5 L10.0 7.8 L15.0 7.1 L20.0 6.6 L25.0 7.3 L30.0 8.5 L35.0 8.9 L40.0 8.0 L45.0 6.9 L50.0 6.9 L55.0 7.8 L60.0 8.3 L65.0 7.7 L70.0 6.6 L75.0 6.3 L80.0 7.3 L85.0 8.4 L90.0 8.6 L95.0 8.0 L100.0 7.8 L105.0 8.9 L110.0 10.5 L115.0 11.4 L120.0 11.0 L125.0 10.5 L130.0 11.1 L135.0 12.5 L140.0 13.4 L145.0 12.9 L150.0 11.8 L155.0 11.5 L160.0 12.3 L165.0 13.0 L170.0 12.6 L175.0 11.3 L180.0 10.5 L185.0 11.1 L190.0 12.1 L195.0 12.3 L200.0 11.5 L205.0 10.8 L210.0 11.4 L215.0 12.7 L220.0 13.6 L225.0 13.2 L230.0 12.4 L235.0 12.5 L240.0 13.6 L245.0 14.5 L250.0 14.0 L255.0 12.8 L260.0 12.0 L265.0 12.3 L270.0 12.9 L275.0 12.5 L280.0 10.9 L285.0 9.6 L290.0 9.5 L295.0 10.2 L300.0 10.3 L305.0 9.3 L310.0 8.1 L315.0 8.0 L320.0 9.0 L325.0 9.8 L330.0 9.5 L335.0 8.5 L340.0 8.2 L345.0 9.1 L350.0 10.1 L355.0 10.0 L360.0 8.8 L365.0 7.8 L370.0 8.0 L375.0 8.7 L380.0 8.6 L385.0 7.2 L390.0 5.8 L395.0 5.4 L400.0 6.1 L405.0 6.5 L410.0 5.7 L415.0 4.5 L420.0 4.2 L425.0 5.1" fill="none" stroke="#8e7658" stroke-width="2.2" stroke-opacity="0.33" stroke-dasharray="80 4" stroke-dashoffset="11"/><path d="M-5.0 3.3 L0.0 4.4 L5.0 5.8 L10.0 6.1 L15.0 5.4 L20.0 4.9 L25.0 5.6 L30.0 6.8 L35.0 7.2 L40.0 6.3 L45.0 5.2 L50.0 5.2 L55.0 6.1 L60.0 6.6 L65.0 6.0 L70.0 4.9 L75.0 4.6 L80.0 5.6 L85.0 6.7 L90.0 6.9 L95.0 6.3 L100.0 6.1 L105.0 7.2 L110.0 8.8 L115.0 9.7 L120.0 9.3 L125.0 8.8 L130.0 9.4 L135.0 10.8 L140.0 11.7 L145.0 11.2 L150.0 10.1 L155.0 9.8 L160.0 10.6 L165.0 11.3 L170.0 10.9 L175.0 9.6 L180.0 8.8 L185.0 9.4 L190.0 10.4 L195.0 10.6 L200.0 9.8 L205.0 9.1 L210.0 9.7 L215.0 11.0 L220.0 11.9 L225.0 11.5 L230.0 10.7 L235.0 10.8 L240.0 11.9 L245.0 12.8 L250.0 12.3 L255.0 11.1 L260.0 10.3 L265.0 10.6 L270.0 11.2 L275.0 10.8 L280.0 9.2 L285.0 7.9 L290.0 7.8 L295.0 8.5 L300.0 8.6 L305.0 7.6 L310.0 6.4 L315.0 6.3 L320.0 7.3 L325.0 8.1 L330.0 7.8 L335.0 6.8 L340.0 6.5 L345.0 7.4 L350.0 8.4 L355.0 8.3 L360.0 7.1 L365.0 6.1 L370.0 6.3 L375.0 7.0 L380.0 6.9 L385.0 5.5 L390.0 4.1 L395.0 3.7 L400.0 4.4 L405.0 4.8 L410.0 4.0 L415.0 2.8 L420.0 2.5 L425.0 3.4" fill="none" stroke="#e6d3ae" stroke-width="1.5" stroke-opacity="0.55" stroke-dasharray="74 4" stroke-dashoffset="57"/><path d="M-5.0 14.4 L0.0 15.3 L5.0 16.0 L10.0 15.9 L15.0 15.0 L20.0 13.9 L25.0 13.4 L30.0 13.9 L35.0 15.2 L40.0 16.4 L45.0 17.0 L50.0 16.9 L55.0 16.6 L60.0 16.9 L65.0 18.0 L70.0 19.5 L75.0 20.7 L80.0 20.9 L85.0 20.2 L90.0 19.1 L95.0 18.4 L100.0 18.4 L105.0 18.8 L110.0 18.9 L115.0 18.1 L120.0 16.7 L125.0 15.2 L130.0 14.4 L135.0 14.7 L140.0 15.5 L145.0 16.2 L150.0 16.2 L155.0 15.4 L160.0 14.7 L165.0 14.5 L170.0 15.2 L175.0 16.2 L180.0 16.7 L185.0 16.2 L190.0 14.9 L195.0 13.5 L200.0 12.6 L205.0 12.6 L210.0 13.0 L215.0 13.0 L220.0 12.3 L225.0 11.1 L230.0 10.0 L235.0 9.9 L240.0 10.9 L245.0 12.3 L250.0 13.5 L255.0 13.8 L260.0 13.6 L265.0 13.4 L270.0 14.0 L275.0 15.3 L280.0 16.7 L285.0 17.5 L290.0 17.3 L295.0 16.3 L300.0 15.4 L305.0 15.2 L310.0 15.7 L315.0 16.6 L320.0 16.9 L325.0 16.5 L330.0 15.7 L335.0 15.2 L340.0 15.5 L345.0 16.8 L350.0 18.4 L355.0 19.4 L360.0 19.5 L365.0 18.9 L370.0 18.5 L375.0 18.8 L380.0 19.6 L385.0 20.4 L390.0 20.4 L395.0 19.4 L400.0 17.7 L405.0 16.3 L410.0 15.6 L415.0 15.7 L420.0 16.0 L425.0 15.7" fill="none" stroke="#8e7658" stroke-width="2.2" stroke-opacity="0.33" stroke-dasharray="44 5" stroke-dashoffset="22"/><path d="M-5.0 12.7 L0.0 13.6 L5.0 14.3 L10.0 14.2 L15.0 13.3 L20.0 12.2 L25.0 11.7 L30.0 12.2 L35.0 13.5 L40.0 14.7 L45.0 15.3 L50.0 15.2 L55.0 14.9 L60.0 15.2 L65.0 16.3 L70.0 17.8 L75.0 19.0 L80.0 19.2 L85.0 18.5 L90.0 17.4 L95.0 16.7 L100.0 16.7 L105.0 17.1 L110.0 17.2 L115.0 16.4 L120.0 15.0 L125.0 13.5 L130.0 12.7 L135.0 13.0 L140.0 13.8 L145.0 14.5 L150.0 14.5 L155.0 13.7 L160.0 13.0 L165.0 12.8 L170.0 13.5 L175.0 14.5 L180.0 15.0 L185.0 14.5 L190.0 13.2 L195.0 11.8 L200.0 10.9 L205.0 10.9 L210.0 11.3 L215.0 11.3 L220.0 10.6 L225.0 9.4 L230.0 8.3 L235.0 8.2 L240.0 9.2 L245.0 10.6 L250.0 11.8 L255.0 12.1 L260.0 11.9 L265.0 11.7 L270.0 12.3 L275.0 13.6 L280.0 15.0 L285.0 15.8 L290.0 15.6 L295.0 14.6 L300.0 13.7 L305.0 13.5 L310.0 14.0 L315.0 14.9 L320.0 15.2 L325.0 14.8 L330.0 14.0 L335.0 13.5 L340.0 13.8 L345.0 15.1 L350.0 16.7 L355.0 17.7 L360.0 17.8 L365.0 17.2 L370.0 16.8 L375.0 17.1 L380.0 17.9 L385.0 18.7 L390.0 18.7 L395.0 17.7 L400.0 16.0 L405.0 14.6 L410.0 13.9 L415.0 14.0 L420.0 14.3 L425.0 14.0" fill="none" stroke="#e6d3ae" stroke-width="1.5" stroke-opacity="0.55" stroke-dasharray="49 6" stroke-dashoffset="44"/><path d="M-5.0 22.5 L0.0 21.6 L5.0 20.6 L10.0 21.1 L15.0 22.8 L20.0 24.1 L25.0 23.8 L30.0 22.8 L35.0 22.8 L40.0 24.4 L45.0 26.0 L50.0 26.0 L55.0 24.8 L60.0 24.1 L65.0 24.9 L70.0 26.3 L75.0 26.3 L80.0 24.8 L85.0 23.2 L90.0 23.2 L95.0 24.2 L100.0 24.3 L105.0 22.8 L110.0 20.9 L115.0 20.4 L120.0 21.2 L125.0 21.9 L130.0 21.0 L135.0 19.2 L140.0 18.4 L145.0 19.4 L150.0 20.6 L155.0 20.5 L160.0 19.1 L165.0 18.1 L170.0 18.8 L175.0 20.3 L180.0 20.7 L185.0 19.5 L190.0 18.2 L195.0 18.4 L200.0 19.7 L205.0 20.4 L210.0 19.5 L215.0 17.9 L220.0 17.5 L225.0 18.6 L230.0 19.7 L235.0 19.4 L240.0 18.0 L245.0 17.4 L250.0 18.5 L255.0 20.2 L260.0 20.8 L265.0 19.9 L270.0 19.3 L275.0 20.4 L280.0 22.4 L285.0 23.6 L290.0 23.1 L295.0 22.3 L300.0 22.8 L305.0 24.6 L310.0 25.9 L315.0 25.5 L320.0 24.2 L325.0 23.8 L330.0 24.9 L335.0 26.0 L340.0 25.7 L345.0 24.1 L350.0 22.9 L355.0 23.3 L360.0 24.5 L365.0 24.5 L370.0 23.1 L375.0 21.6 L380.0 21.7 L385.0 23.0 L390.0 23.6 L395.0 22.7 L400.0 21.2 L405.0 20.9 L410.0 22.1 L415.0 23.2 L420.0 22.6 L425.0 21.0" fill="none" stroke="#8e7658" stroke-width="2.2" stroke-opacity="0.33" stroke-dasharray="63 6" stroke-dashoffset="37"/><path d="M-5.0 20.8 L0.0 19.9 L5.0 18.9 L10.0 19.4 L15.0 21.1 L20.0 22.4 L25.0 22.1 L30.0 21.1 L35.0 21.1 L40.0 22.7 L45.0 24.3 L50.0 24.3 L55.0 23.1 L60.0 22.4 L65.0 23.2 L70.0 24.6 L75.0 24.6 L80.0 23.1 L85.0 21.5 L90.0 21.5 L95.0 22.5 L100.0 22.6 L105.0 21.1 L110.0 19.2 L115.0 18.7 L120.0 19.5 L125.0 20.2 L130.0 19.3 L135.0 17.5 L140.0 16.7 L145.0 17.7 L150.0 18.9 L155.0 18.8 L160.0 17.4 L165.0 16.4 L170.0 17.1 L175.0 18.6 L180.0 19.0 L185.0 17.8 L190.0 16.5 L195.0 16.7 L200.0 18.0 L205.0 18.7 L210.0 17.8 L215.0 16.2 L220.0 15.8 L225.0 16.9 L230.0 18.0 L235.0 17.7 L240.0 16.3 L245.0 15.7 L250.0 16.8 L255.0 18.5 L260.0 19.1 L265.0 18.2 L270.0 17.6 L275.0 18.7 L280.0 20.7 L285.0 21.9 L290.0 21.4 L295.0 20.6 L300.0 21.1 L305.0 22.9 L310.0 24.2 L315.0 23.8 L320.0 22.5 L325.0 22.1 L330.0 23.2 L335.0 24.3 L340.0 24.0 L345.0 22.4 L350.0 21.2 L355.0 21.6 L360.0 22.8 L365.0 22.8 L370.0 21.4 L375.0 19.9 L380.0 20.0 L385.0 21.3 L390.0 21.9 L395.0 21.0 L400.0 19.5 L405.0 19.2 L410.0 20.4 L415.0 21.5 L420.0 20.9 L425.0 19.3" fill="none" stroke="#e6d3ae" stroke-width="1.5" stroke-opacity="0.55" stroke-dasharray="30 6" stroke-dashoffset="2"/><path d="M-5.0 28.0 L0.0 28.0 L5.0 28.5 L10.0 29.9 L15.0 31.5 L20.0 32.6 L25.0 32.6 L30.0 31.5 L35.0 30.1 L40.0 29.0 L45.0 28.8 L50.0 29.0 L55.0 29.2 L60.0 28.9 L65.0 28.2 L70.0 27.6 L75.0 27.9 L80.0 29.1 L85.0 30.7 L90.0 31.8 L95.0 31.9 L100.0 31.0 L105.0 29.7 L110.0 28.7 L115.0 28.3 L120.0 28.3 L125.0 28.1 L130.0 27.3 L135.0 26.1 L140.0 25.1 L145.0 25.0 L150.0 25.9 L155.0 27.5 L160.0 28.7 L165.0 29.1 L170.0 28.6 L175.0 27.6 L180.0 27.0 L185.0 26.9 L190.0 27.1 L195.0 26.9 L200.0 26.0 L205.0 24.5 L210.0 23.3 L215.0 23.0 L220.0 23.8 L225.0 25.4 L230.0 26.8 L235.0 27.5 L240.0 27.4 L245.0 27.0 L250.0 27.0 L255.0 27.5 L260.0 28.1 L265.0 28.2 L270.0 27.4 L275.0 26.0 L280.0 24.7 L285.0 24.2 L290.0 24.9 L295.0 26.3 L300.0 27.7 L305.0 28.4 L310.0 28.5 L315.0 28.5 L320.0 28.9 L325.0 29.9 L330.0 30.9 L335.0 31.3 L340.0 30.7 L345.0 29.2 L350.0 27.7 L355.0 26.9 L360.0 27.2 L365.0 28.2 L370.0 29.1 L375.0 29.5 L380.0 29.4 L385.0 29.4 L390.0 29.9 L395.0 31.0 L400.0 32.2 L405.0 32.8 L410.0 32.2 L415.0 30.7 L420.0 29.0 L425.0 27.9" fill="none" stroke="#8e7658" stroke-width="2.2" stroke-opacity="0.33" stroke-dasharray="69 3" stroke-dashoffset="37"/><path d="M-5.0 26.3 L0.0 26.3 L5.0 26.8 L10.0 28.2 L15.0 29.8 L20.0 30.9 L25.0 30.9 L30.0 29.8 L35.0 28.4 L40.0 27.3 L45.0 27.1 L50.0 27.3 L55.0 27.5 L60.0 27.2 L65.0 26.5 L70.0 25.9 L75.0 26.2 L80.0 27.4 L85.0 29.0 L90.0 30.1 L95.0 30.2 L100.0 29.3 L105.0 28.0 L110.0 27.0 L115.0 26.6 L120.0 26.6 L125.0 26.4 L130.0 25.6 L135.0 24.4 L140.0 23.4 L145.0 23.3 L150.0 24.2 L155.0 25.8 L160.0 27.0 L165.0 27.4 L170.0 26.9 L175.0 25.9 L180.0 25.3 L185.0 25.2 L190.0 25.4 L195.0 25.2 L200.0 24.3 L205.0 22.8 L210.0 21.6 L215.0 21.3 L220.0 22.1 L225.0 23.7 L230.0 25.1 L235.0 25.8 L240.0 25.7 L245.0 25.3 L250.0 25.3 L255.0 25.8 L260.0 26.4 L265.0 26.5 L270.0 25.7 L275.0 24.3 L280.0 23.0 L285.0 22.5 L290.0 23.2 L295.0 24.6 L300.0 26.0 L305.0 26.7 L310.0 26.8 L315.0 26.8 L320.0 27.2 L325.0 28.2 L330.0 29.2 L335.0 29.6 L340.0 29.0 L345.0 27.5 L350.0 26.0 L355.0 25.2 L360.0 25.5 L365.0 26.5 L370.0 27.4 L375.0 27.8 L380.0 27.7 L385.0 27.7 L390.0 28.2 L395.0 29.3 L400.0 30.5 L405.0 31.1 L410.0 30.5 L415.0 29.0 L420.0 27.3 L425.0 26.2" fill="none" stroke="#e6d3ae" stroke-width="1.5" stroke-opacity="0.55" stroke-dasharray="77 5" stroke-dashoffset="55"/><path d="M-5.0 35.6 L0.0 35.6 L5.0 35.2 L10.0 35.3 L15.0 36.2 L20.0 37.5 L25.0 38.1 L30.0 37.7 L35.0 36.6 L40.0 35.6 L45.0 35.3 L50.0 35.6 L55.0 35.7 L60.0 35.0 L65.0 33.7 L70.0 32.6 L75.0 32.4 L80.0 33.2 L85.0 34.2 L90.0 34.6 L95.0 34.3 L100.0 33.8 L105.0 34.0 L110.0 35.1 L115.0 36.2 L120.0 36.7 L125.0 36.0 L130.0 34.9 L135.0 34.0 L140.0 33.9 L145.0 34.3 L150.0 34.1 L155.0 33.1 L160.0 31.7 L165.0 30.6 L170.0 30.6 L175.0 31.3 L180.0 32.1 L185.0 32.2 L190.0 31.8 L195.0 31.4 L200.0 31.9 L205.0 33.1 L210.0 34.3 L215.0 34.7 L220.0 34.1 L225.0 33.1 L230.0 32.6 L235.0 32.9 L240.0 33.3 L245.0 33.1 L250.0 32.0 L255.0 30.6 L260.0 29.8 L265.0 30.0 L270.0 30.9 L275.0 31.6 L280.0 31.6 L285.0 31.1 L290.0 31.0 L295.0 31.9 L300.0 33.4 L305.0 34.6 L310.0 35.0 L315.0 34.4 L320.0 33.8 L325.0 33.8 L330.0 34.4 L335.0 34.9 L340.0 34.6 L345.0 33.5 L350.0 32.2 L355.0 31.6 L360.0 32.0 L365.0 32.9 L370.0 33.4 L375.0 33.1 L380.0 32.6 L385.0 32.7 L390.0 33.8 L395.0 35.4 L400.0 36.6 L405.0 36.7 L410.0 36.2 L415.0 35.8 L420.0 36.0 L425.0 36.8" fill="none" stroke="#8e7658" stroke-width="2.2" stroke-opacity="0.33" stroke-dasharray="83 5" stroke-dashoffset="19"/><path d="M-5.0 33.9 L0.0 33.9 L5.0 33.5 L10.0 33.6 L15.0 34.5 L20.0 35.8 L25.0 36.4 L30.0 36.0 L35.0 34.9 L40.0 33.9 L45.0 33.6 L50.0 33.9 L55.0 34.0 L60.0 33.3 L65.0 32.0 L70.0 30.9 L75.0 30.7 L80.0 31.5 L85.0 32.5 L90.0 32.9 L95.0 32.6 L100.0 32.1 L105.0 32.3 L110.0 33.4 L115.0 34.5 L120.0 35.0 L125.0 34.3 L130.0 33.2 L135.0 32.3 L140.0 32.2 L145.0 32.6 L150.0 32.4 L155.0 31.4 L160.0 30.0 L165.0 28.9 L170.0 28.9 L175.0 29.6 L180.0 30.4 L185.0 30.5 L190.0 30.1 L195.0 29.7 L200.0 30.2 L205.0 31.4 L210.0 32.6 L215.0 33.0 L220.0 32.4 L225.0 31.4 L230.0 30.9 L235.0 31.2 L240.0 31.6 L245.0 31.4 L250.0 30.3 L255.0 28.9 L260.0 28.1 L265.0 28.3 L270.0 29.2 L275.0 29.9 L280.0 29.9 L285.0 29.4 L290.0 29.3 L295.0 30.2 L300.0 31.7 L305.0 32.9 L310.0 33.3 L315.0 32.7 L320.0 32.1 L325.0 32.1 L330.0 32.7 L335.0 33.2 L340.0 32.9 L345.0 31.8 L350.0 30.5 L355.0 29.9 L360.0 30.3 L365.0 31.2 L370.0 31.7 L375.0 31.4 L380.0 30.9 L385.0 31.0 L390.0 32.1 L395.0 33.7 L400.0 34.9 L405.0 35.0 L410.0 34.5 L415.0 34.1 L420.0 34.3 L425.0 35.1" fill="none" stroke="#e6d3ae" stroke-width="1.5" stroke-opacity="0.55" stroke-dasharray="41 3" stroke-dashoffset="40"/><path d="M-5.0 40.6 L0.0 40.7 L5.0 41.4 L10.0 42.6 L15.0 43.7 L20.0 44.3 L25.0 44.0 L30.0 42.9 L35.0 41.5 L40.0 40.5 L45.0 40.3 L50.0 40.7 L55.0 41.3 L60.0 41.7 L65.0 41.6 L70.0 41.2 L75.0 40.8 L80.0 40.9 L85.0 41.4 L90.0 42.0 L95.0 42.2 L100.0 41.6 L105.0 40.3 L110.0 38.7 L115.0 37.4 L120.0 36.9 L125.0 37.2 L130.0 38.0 L135.0 38.7 L140.0 38.9 L145.0 38.5 L150.0 38.0 L155.0 37.6 L160.0 37.7 L165.0 38.1 L170.0 38.4 L175.0 38.1 L180.0 37.1 L185.0 35.8 L190.0 34.7 L195.0 34.5 L200.0 35.1 L205.0 36.4 L210.0 37.6 L215.0 38.4 L220.0 38.4 L225.0 38.0 L230.0 37.6 L235.0 37.5 L240.0 38.0 L245.0 38.5 L250.0 38.6 L255.0 38.3 L260.0 37.5 L265.0 36.9 L270.0 36.9 L275.0 37.8 L280.0 39.3 L285.0 40.9 L290.0 41.9 L295.0 42.1 L300.0 41.6 L305.0 41.0 L310.0 40.6 L315.0 40.7 L320.0 41.2 L325.0 41.5 L330.0 41.5 L335.0 41.0 L340.0 40.5 L345.0 40.4 L350.0 40.9 L355.0 42.2 L360.0 43.5 L365.0 44.3 L370.0 44.2 L375.0 43.3 L380.0 42.0 L385.0 41.0 L390.0 40.5 L395.0 40.7 L400.0 41.0 L405.0 41.0 L410.0 40.7 L415.0 40.1 L420.0 39.6 L425.0 39.7" fill="none" stroke="#8e7658" stroke-width="2.2" stroke-opacity="0.33" stroke-dasharray="56 6" stroke-dashoffset="41"/><path d="M-5.0 38.9 L0.0 39.0 L5.0 39.7 L10.0 40.9 L15.0 42.0 L20.0 42.6 L25.0 42.3 L30.0 41.2 L35.0 39.8 L40.0 38.8 L45.0 38.6 L50.0 39.0 L55.0 39.6 L60.0 40.0 L65.0 39.9 L70.0 39.5 L75.0 39.1 L80.0 39.2 L85.0 39.7 L90.0 40.3 L95.0 40.5 L100.0 39.9 L105.0 38.6 L110.0 37.0 L115.0 35.7 L120.0 35.2 L125.0 35.5 L130.0 36.3 L135.0 37.0 L140.0 37.2 L145.0 36.8 L150.0 36.3 L155.0 35.9 L160.0 36.0 L165.0 36.4 L170.0 36.7 L175.0 36.4 L180.0 35.4 L185.0 34.1 L190.0 33.0 L195.0 32.8 L200.0 33.4 L205.0 34.7 L210.0 35.9 L215.0 36.7 L220.0 36.7 L225.0 36.3 L230.0 35.9 L235.0 35.8 L240.0 36.3 L245.0 36.8 L250.0 36.9 L255.0 36.6 L260.0 35.8 L265.0 35.2 L270.0 35.2 L275.0 36.1 L280.0 37.6 L285.0 39.2 L290.0 40.2 L295.0 40.4 L300.0 39.9 L305.0 39.3 L310.0 38.9 L315.0 39.0 L320.0 39.5 L325.0 39.8 L330.0 39.8 L335.0 39.3 L340.0 38.8 L345.0 38.7 L350.0 39.2 L355.0 40.5 L360.0 41.8 L365.0 42.6 L370.0 42.5 L375.0 41.6 L380.0 40.3 L385.0 39.3 L390.0 38.8 L395.0 39.0 L400.0 39.3 L405.0 39.3 L410.0 39.0 L415.0 38.4 L420.0 37.9 L425.0 38.0" fill="none" stroke="#e6d3ae" stroke-width="1.5" stroke-opacity="0.55" stroke-dasharray="56 4" stroke-dashoffset="3"/><path d="M-5.0 46.6 L0.0 45.9 L5.0 46.0 L10.0 47.0 L15.0 48.5 L20.0 49.6 L25.0 49.9 L30.0 49.4 L35.0 48.4 L40.0 47.5 L45.0 47.0 L50.0 46.7 L55.0 46.2 L60.0 45.3 L65.0 44.2 L70.0 43.3 L75.0 43.2 L80.0 44.0 L85.0 45.3 L90.0 46.6 L95.0 47.1 L100.0 46.7 L105.0 45.8 L110.0 44.9 L115.0 44.4 L120.0 44.1 L125.0 43.9 L130.0 43.4 L135.0 42.6 L140.0 41.9 L145.0 41.8 L150.0 42.7 L155.0 44.2 L160.0 45.8 L165.0 46.8 L170.0 46.9 L175.0 46.3 L180.0 45.5 L185.0 45.1 L190.0 45.1 L195.0 45.2 L200.0 45.1 L205.0 44.6 L210.0 44.0 L215.0 44.0 L220.0 44.9 L225.0 46.5 L230.0 48.3 L235.0 49.5 L240.0 49.8 L245.0 49.3 L250.0 48.6 L255.0 48.0 L260.0 47.9 L265.0 48.0 L270.0 47.8 L275.0 47.3 L280.0 46.7 L285.0 46.4 L290.0 46.9 L295.0 48.2 L300.0 49.8 L305.0 51.0 L310.0 51.2 L315.0 50.5 L320.0 49.4 L325.0 48.5 L330.0 47.9 L335.0 47.7 L340.0 47.4 L345.0 46.8 L350.0 45.9 L355.0 45.3 L360.0 45.4 L365.0 46.3 L370.0 47.7 L375.0 48.7 L380.0 48.9 L385.0 48.2 L390.0 47.0 L395.0 45.8 L400.0 45.1 L405.0 44.7 L410.0 44.5 L415.0 43.9 L420.0 43.2 L425.0 42.5" fill="none" stroke="#8e7658" stroke-width="2.2" stroke-opacity="0.33" stroke-dasharray="50 6" stroke-dashoffset="23"/><path d="M-5.0 44.9 L0.0 44.2 L5.0 44.3 L10.0 45.3 L15.0 46.8 L20.0 47.9 L25.0 48.2 L30.0 47.7 L35.0 46.7 L40.0 45.8 L45.0 45.3 L50.0 45.0 L55.0 44.5 L60.0 43.6 L65.0 42.5 L70.0 41.6 L75.0 41.5 L80.0 42.3 L85.0 43.6 L90.0 44.9 L95.0 45.4 L100.0 45.0 L105.0 44.1 L110.0 43.2 L115.0 42.7 L120.0 42.4 L125.0 42.2 L130.0 41.7 L135.0 40.9 L140.0 40.2 L145.0 40.1 L150.0 41.0 L155.0 42.5 L160.0 44.1 L165.0 45.1 L170.0 45.2 L175.0 44.6 L180.0 43.8 L185.0 43.4 L190.0 43.4 L195.0 43.5 L200.0 43.4 L205.0 42.9 L210.0 42.3 L215.0 42.3 L220.0 43.2 L225.0 44.8 L230.0 46.6 L235.0 47.8 L240.0 48.1 L245.0 47.6 L250.0 46.9 L255.0 46.3 L260.0 46.2 L265.0 46.3 L270.0 46.1 L275.0 45.6 L280.0 45.0 L285.0 44.7 L290.0 45.2 L295.0 46.5 L300.0 48.1 L305.0 49.3 L310.0 49.5 L315.0 48.8 L320.0 47.7 L325.0 46.8 L330.0 46.2 L335.0 46.0 L340.0 45.7 L345.0 45.1 L350.0 44.2 L355.0 43.6 L360.0 43.7 L365.0 44.6 L370.0 46.0 L375.0 47.0 L380.0 47.2 L385.0 46.5 L390.0 45.3 L395.0 44.1 L400.0 43.4 L405.0 43.0 L410.0 42.8 L415.0 42.2 L420.0 41.5 L425.0 40.8" fill="none" stroke="#e6d3ae" stroke-width="1.5" stroke-opacity="0.55" stroke-dasharray="39 3" stroke-dashoffset="54"/><path d="M-5.0 50.3 L0.0 51.4 L5.0 51.9 L10.0 51.6 L15.0 50.9 L20.0 50.4 L25.0 50.7 L30.0 51.5 L35.0 52.4 L40.0 52.6 L45.0 51.9 L50.0 50.5 L55.0 49.3 L60.0 48.9 L65.0 49.4 L70.0 50.5 L75.0 51.3 L80.0 51.4 L85.0 51.0 L90.0 50.7 L95.0 51.1 L100.0 52.3 L105.0 54.0 L110.0 55.3 L115.0 55.7 L120.0 55.2 L125.0 54.2 L130.0 53.6 L135.0 53.7 L140.0 54.3 L145.0 54.8 L150.0 54.8 L155.0 53.9 L160.0 52.8 L165.0 52.1 L170.0 52.3 L175.0 53.4 L180.0 54.7 L185.0 55.5 L190.0 55.3 L195.0 54.6 L200.0 53.8 L205.0 53.6 L210.0 54.1 L215.0 54.7 L220.0 54.7 L225.0 53.8 L230.0 52.2 L235.0 50.5 L240.0 49.6 L245.0 49.7 L250.0 50.4 L255.0 51.0 L260.0 51.0 L265.0 50.4 L270.0 49.7 L275.0 49.5 L280.0 50.3 L285.0 51.5 L290.0 52.6 L295.0 52.9 L300.0 52.2 L305.0 51.1 L310.0 50.1 L315.0 50.0 L320.0 50.5 L325.0 51.2 L330.0 51.5 L335.0 51.0 L340.0 50.2 L345.0 49.7 L350.0 50.2 L355.0 51.5 L360.0 53.2 L365.0 54.5 L370.0 54.9 L375.0 54.6 L380.0 54.0 L385.0 54.0 L390.0 54.6 L395.0 55.5 L400.0 56.0 L405.0 55.6 L410.0 54.3 L415.0 53.0 L420.0 52.2 L425.0 52.4" fill="none" stroke="#8e7658" stroke-width="2.2" stroke-opacity="0.33" stroke-dasharray="70 6" stroke-dashoffset="57"/><path d="M-5.0 48.6 L0.0 49.7 L5.0 50.2 L10.0 49.9 L15.0 49.2 L20.0 48.7 L25.0 49.0 L30.0 49.8 L35.0 50.7 L40.0 50.9 L45.0 50.2 L50.0 48.8 L55.0 47.6 L60.0 47.2 L65.0 47.7 L70.0 48.8 L75.0 49.6 L80.0 49.7 L85.0 49.3 L90.0 49.0 L95.0 49.4 L100.0 50.6 L105.0 52.3 L110.0 53.6 L115.0 54.0 L120.0 53.5 L125.0 52.5 L130.0 51.9 L135.0 52.0 L140.0 52.6 L145.0 53.1 L150.0 53.1 L155.0 52.2 L160.0 51.1 L165.0 50.4 L170.0 50.6 L175.0 51.7 L180.0 53.0 L185.0 53.8 L190.0 53.6 L195.0 52.9 L200.0 52.1 L205.0 51.9 L210.0 52.4 L215.0 53.0 L220.0 53.0 L225.0 52.1 L230.0 50.5 L235.0 48.8 L240.0 47.9 L245.0 48.0 L250.0 48.7 L255.0 49.3 L260.0 49.3 L265.0 48.7 L270.0 48.0 L275.0 47.8 L280.0 48.6 L285.0 49.8 L290.0 50.9 L295.0 51.2 L300.0 50.5 L305.0 49.4 L310.0 48.4 L315.0 48.3 L320.0 48.8 L325.0 49.5 L330.0 49.8 L335.0 49.3 L340.0 48.5 L345.0 48.0 L350.0 48.5 L355.0 49.8 L360.0 51.5 L365.0 52.8 L370.0 53.2 L375.0 52.9 L380.0 52.3 L385.0 52.3 L390.0 52.9 L395.0 53.8 L400.0 54.3 L405.0 53.9 L410.0 52.6 L415.0 51.3 L420.0 50.5 L425.0 50.7" fill="none" stroke="#e6d3ae" stroke-width="1.5" stroke-opacity="0.55" stroke-dasharray="39 3" stroke-dashoffset="24"/><path d="M-5.0 60.1 L0.0 59.4 L5.0 58.9 L10.0 59.5 L15.0 60.8 L20.0 61.4 L25.0 60.6 L30.0 59.2 L35.0 58.8 L40.0 59.5 L45.0 60.4 L50.0 60.1 L55.0 58.9 L60.0 58.2 L65.0 58.8 L70.0 60.3 L75.0 61.2 L80.0 60.9 L85.0 60.2 L90.0 60.5 L95.0 62.1 L100.0 63.5 L105.0 63.7 L110.0 62.8 L115.0 62.1 L120.0 62.6 L125.0 63.6 L130.0 63.7 L135.0 62.5 L140.0 60.8 L145.0 60.1 L150.0 60.6 L155.0 61.0 L160.0 60.2 L165.0 58.6 L170.0 57.5 L175.0 57.9 L180.0 59.0 L185.0 59.4 L190.0 58.7 L195.0 57.7 L200.0 57.9 L205.0 59.2 L210.0 60.3 L215.0 60.1 L220.0 58.9 L225.0 58.2 L230.0 58.6 L235.0 59.5 L240.0 59.5 L245.0 58.1 L250.0 56.5 L255.0 56.0 L260.0 56.5 L265.0 57.0 L270.0 56.2 L275.0 54.8 L280.0 54.0 L285.0 54.7 L290.0 56.1 L295.0 56.7 L300.0 56.2 L305.0 55.6 L310.0 56.2 L315.0 57.9 L320.0 59.3 L325.0 59.4 L330.0 58.6 L335.0 58.4 L340.0 59.3 L345.0 60.6 L350.0 60.8 L355.0 59.7 L360.0 58.5 L365.0 58.4 L370.0 59.3 L375.0 60.0 L380.0 59.4 L385.0 58.1 L390.0 57.7 L395.0 58.7 L400.0 60.2 L405.0 60.8 L410.0 60.3 L415.0 59.8 L420.0 60.6 L425.0 62.3" fill="none" stroke="#8e7658" stroke-width="2.2" stroke-opacity="0.33" stroke-dasharray="44 5" stroke-dashoffset="44"/><path d="M-5.0 58.4 L0.0 57.7 L5.0 57.2 L10.0 57.8 L15.0 59.1 L20.0 59.7 L25.0 58.9 L30.0 57.5 L35.0 57.1 L40.0 57.8 L45.0 58.7 L50.0 58.4 L55.0 57.2 L60.0 56.5 L65.0 57.1 L70.0 58.6 L75.0 59.5 L80.0 59.2 L85.0 58.5 L90.0 58.8 L95.0 60.4 L100.0 61.8 L105.0 62.0 L110.0 61.1 L115.0 60.4 L120.0 60.9 L125.0 61.9 L130.0 62.0 L135.0 60.8 L140.0 59.1 L145.0 58.4 L150.0 58.9 L155.0 59.3 L160.0 58.5 L165.0 56.9 L170.0 55.8 L175.0 56.2 L180.0 57.3 L185.0 57.7 L190.0 57.0 L195.0 56.0 L200.0 56.2 L205.0 57.5 L210.0 58.6 L215.0 58.4 L220.0 57.2 L225.0 56.5 L230.0 56.9 L235.0 57.8 L240.0 57.8 L245.0 56.4 L250.0 54.8 L255.0 54.3 L260.0 54.8 L265.0 55.3 L270.0 54.5 L275.0 53.1 L280.0 52.3 L285.0 53.0 L290.0 54.4 L295.0 55.0 L300.0 54.5 L305.0 53.9 L310.0 54.5 L315.0 56.2 L320.0 57.6 L325.0 57.7 L330.0 56.9 L335.0 56.7 L340.0 57.6 L345.0 58.9 L350.0 59.1 L355.0 58.0 L360.0 56.8 L365.0 56.7 L370.0 57.6 L375.0 58.3 L380.0 57.7 L385.0 56.4 L390.0 56.0 L395.0 57.0 L400.0 58.5 L405.0 59.1 L410.0 58.6 L415.0 58.1 L420.0 58.9 L425.0 60.6" fill="none" stroke="#e6d3ae" stroke-width="1.5" stroke-opacity="0.55" stroke-dasharray="67 8" stroke-dashoffset="2"/><path d="M-5.0 68.0 L0.0 67.4 L5.0 66.4 L10.0 65.8 L15.0 66.2 L20.0 67.6 L25.0 69.0 L30.0 69.6 L35.0 69.3 L40.0 68.4 L45.0 67.9 L50.0 68.0 L55.0 68.0 L60.0 67.4 L65.0 65.8 L70.0 63.9 L75.0 62.6 L80.0 62.4 L85.0 63.2 L90.0 63.9 L95.0 64.0 L100.0 63.7 L105.0 63.5 L110.0 64.1 L115.0 65.2 L120.0 66.0 L125.0 65.8 L130.0 64.6 L135.0 63.0 L140.0 62.0 L145.0 61.9 L150.0 62.2 L155.0 62.3 L160.0 61.7 L165.0 61.1 L170.0 61.3 L175.0 62.6 L180.0 64.5 L185.0 66.1 L190.0 66.6 L195.0 66.3 L200.0 65.9 L205.0 66.0 L210.0 66.6 L215.0 67.0 L220.0 66.5 L225.0 65.3 L230.0 64.2 L235.0 64.1 L240.0 65.0 L245.0 66.5 L250.0 67.7 L255.0 68.0 L260.0 68.1 L265.0 68.5 L270.0 69.6 L275.0 70.8 L280.0 71.3 L285.0 70.7 L290.0 69.1 L295.0 67.7 L300.0 67.0 L305.0 67.2 L310.0 67.4 L315.0 67.1 L320.0 66.4 L325.0 65.8 L330.0 66.1 L335.0 67.4 L340.0 68.8 L345.0 69.4 L350.0 68.9 L355.0 67.8 L360.0 66.8 L365.0 66.5 L370.0 66.4 L375.0 65.9 L380.0 64.5 L385.0 62.8 L390.0 61.6 L395.0 61.5 L400.0 62.5 L405.0 63.6 L410.0 64.1 L415.0 63.9 L420.0 63.6 L425.0 63.9" fill="none" stroke="#8e7658" stroke-width="2.2" stroke-opacity="0.33" stroke-dasharray="77 3" stroke-dashoffset="30"/><path d="M-5.0 66.3 L0.0 65.7 L5.0 64.7 L10.0 64.1 L15.0 64.5 L20.0 65.9 L25.0 67.3 L30.0 67.9 L35.0 67.6 L40.0 66.7 L45.0 66.2 L50.0 66.3 L55.0 66.3 L60.0 65.7 L65.0 64.1 L70.0 62.2 L75.0 60.9 L80.0 60.7 L85.0 61.5 L90.0 62.2 L95.0 62.3 L100.0 62.0 L105.0 61.8 L110.0 62.4 L115.0 63.5 L120.0 64.3 L125.0 64.1 L130.0 62.9 L135.0 61.3 L140.0 60.3 L145.0 60.2 L150.0 60.5 L155.0 60.6 L160.0 60.0 L165.0 59.4 L170.0 59.6 L175.0 60.9 L180.0 62.8 L185.0 64.4 L190.0 64.9 L195.0 64.6 L200.0 64.2 L205.0 64.3 L210.0 64.9 L215.0 65.3 L220.0 64.8 L225.0 63.6 L230.0 62.5 L235.0 62.4 L240.0 63.3 L245.0 64.8 L250.0 66.0 L255.0 66.3 L260.0 66.4 L265.0 66.8 L270.0 67.9 L275.0 69.1 L280.0 69.6 L285.0 69.0 L290.0 67.4 L295.0 66.0 L300.0 65.3 L305.0 65.5 L310.0 65.7 L315.0 65.4 L320.0 64.7 L325.0 64.1 L330.0 64.4 L335.0 65.7 L340.0 67.1 L345.0 67.7 L350.0 67.2 L355.0 66.1 L360.0 65.1 L365.0 64.8 L370.0 64.7 L375.0 64.2 L380.0 62.8 L385.0 61.1 L390.0 59.9 L395.0 59.8 L400.0 60.8 L405.0 61.9 L410.0 62.4 L415.0 62.2 L420.0 61.9 L425.0 62.2" fill="none" stroke="#e6d3ae" stroke-width="1.5" stroke-opacity="0.55" stroke-dasharray="65 5" stroke-dashoffset="20"/><path d="M-5.0 70.1 L0.0 69.1 L5.0 68.1 L10.0 68.3 L15.0 69.8 L20.0 71.5 L25.0 71.9 L30.0 71.1 L35.0 70.5 L40.0 71.1 L45.0 72.5 L50.0 73.1 L55.0 72.2 L60.0 70.5 L65.0 69.6 L70.0 70.0 L75.0 70.9 L80.0 70.9 L85.0 69.7 L90.0 68.5 L95.0 68.8 L100.0 70.5 L105.0 72.1 L110.0 72.4 L115.0 71.9 L120.0 71.9 L125.0 73.3 L130.0 75.3 L135.0 76.3 L140.0 75.8 L145.0 74.6 L150.0 74.3 L155.0 75.1 L160.0 75.9 L165.0 75.4 L170.0 73.7 L175.0 72.2 L180.0 72.1 L185.0 73.1 L190.0 73.9 L195.0 73.4 L200.0 72.3 L205.0 72.0 L210.0 73.2 L215.0 75.0 L220.0 75.8 L225.0 75.1 L230.0 74.1 L235.0 74.1 L240.0 75.2 L245.0 75.9 L250.0 75.2 L255.0 73.3 L260.0 71.6 L265.0 71.3 L270.0 71.9 L275.0 71.8 L280.0 70.4 L285.0 68.7 L290.0 68.1 L295.0 69.0 L300.0 70.4 L305.0 70.8 L310.0 70.1 L315.0 69.5 L320.0 70.1 L325.0 71.7 L330.0 73.0 L335.0 72.6 L340.0 71.3 L345.0 70.5 L350.0 70.9 L355.0 71.8 L360.0 71.7 L365.0 70.3 L370.0 68.6 L375.0 68.1 L380.0 69.1 L385.0 70.2 L390.0 70.3 L395.0 69.5 L400.0 69.1 L405.0 70.2 L410.0 72.3 L415.0 73.8 L420.0 73.9 L425.0 73.3" fill="none" stroke="#8e7658" stroke-width="2.2" stroke-opacity="0.33" stroke-dasharray="51 6" stroke-dashoffset="23"/><path d="M-5.0 68.4 L0.0 67.4 L5.0 66.4 L10.0 66.6 L15.0 68.1 L20.0 69.8 L25.0 70.2 L30.0 69.4 L35.0 68.8 L40.0 69.4 L45.0 70.8 L50.0 71.4 L55.0 70.5 L60.0 68.8 L65.0 67.9 L70.0 68.3 L75.0 69.2 L80.0 69.2 L85.0 68.0 L90.0 66.8 L95.0 67.1 L100.0 68.8 L105.0 70.4 L110.0 70.7 L115.0 70.2 L120.0 70.2 L125.0 71.6 L130.0 73.6 L135.0 74.6 L140.0 74.1 L145.0 72.9 L150.0 72.6 L155.0 73.4 L160.0 74.2 L165.0 73.7 L170.0 72.0 L175.0 70.5 L180.0 70.4 L185.0 71.4 L190.0 72.2 L195.0 71.7 L200.0 70.6 L205.0 70.3 L210.0 71.5 L215.0 73.3 L220.0 74.1 L225.0 73.4 L230.0 72.4 L235.0 72.4 L240.0 73.5 L245.0 74.2 L250.0 73.5 L255.0 71.6 L260.0 69.9 L265.0 69.6 L270.0 70.2 L275.0 70.1 L280.0 68.7 L285.0 67.0 L290.0 66.4 L295.0 67.3 L300.0 68.7 L305.0 69.1 L310.0 68.4 L315.0 67.8 L320.0 68.4 L325.0 70.0 L330.0 71.3 L335.0 70.9 L340.0 69.6 L345.0 68.8 L350.0 69.2 L355.0 70.1 L360.0 70.0 L365.0 68.6 L370.0 66.9 L375.0 66.4 L380.0 67.4 L385.0 68.5 L390.0 68.6 L395.0 67.8 L400.0 67.4 L405.0 68.5 L410.0 70.6 L415.0 72.1 L420.0 72.2 L425.0 71.6" fill="none" stroke="#e6d3ae" stroke-width="1.5" stroke-opacity="0.55" stroke-dasharray="51 7" stroke-dashoffset="9"/><path d="M-5.0 75.9 L0.0 77.4 L5.0 78.0 L10.0 77.8 L15.0 77.5 L20.0 78.0 L25.0 79.5 L30.0 81.2 L35.0 82.0 L40.0 81.4 L45.0 80.3 L50.0 79.5 L55.0 79.8 L60.0 80.8 L65.0 81.4 L70.0 81.0 L75.0 80.0 L80.0 79.3 L85.0 79.8 L90.0 81.2 L95.0 82.7 L100.0 83.2 L105.0 82.5 L110.0 81.5 L115.0 81.2 L120.0 81.7 L125.0 82.4 L130.0 82.3 L135.0 80.9 L140.0 79.0 L145.0 77.7 L150.0 77.7 L155.0 78.5 L160.0 79.0 L165.0 78.6 L170.0 77.6 L175.0 76.8 L180.0 77.0 L185.0 78.1 L190.0 79.1 L195.0 79.0 L200.0 77.8 L205.0 76.2 L210.0 75.3 L215.0 75.5 L220.0 76.1 L225.0 76.0 L230.0 75.1 L235.0 73.7 L240.0 73.1 L245.0 73.8 L250.0 75.4 L255.0 76.7 L260.0 77.0 L265.0 76.5 L270.0 76.0 L275.0 76.4 L280.0 77.6 L285.0 78.7 L290.0 78.8 L295.0 77.7 L300.0 76.5 L305.0 76.1 L310.0 76.9 L315.0 78.2 L320.0 79.1 L325.0 79.0 L330.0 78.5 L335.0 78.5 L340.0 79.7 L345.0 81.5 L350.0 82.9 L355.0 83.0 L360.0 82.1 L365.0 81.1 L370.0 81.0 L375.0 81.7 L380.0 82.3 L385.0 82.1 L390.0 80.8 L395.0 79.5 L400.0 79.1 L405.0 79.9 L410.0 81.2 L415.0 82.0 L420.0 81.7 L425.0 80.7" fill="none" stroke="#8e7658" stroke-width="2.2" stroke-opacity="0.33" stroke-dasharray="77 7" stroke-dashoffset="42"/><path d="M-5.0 74.2 L0.0 75.7 L5.0 76.3 L10.0 76.1 L15.0 75.8 L20.0 76.3 L25.0 77.8 L30.0 79.5 L35.0 80.3 L40.0 79.7 L45.0 78.6 L50.0 77.8 L55.0 78.1 L60.0 79.1 L65.0 79.7 L70.0 79.3 L75.0 78.3 L80.0 77.6 L85.0 78.1 L90.0 79.5 L95.0 81.0 L100.0 81.5 L105.0 80.8 L110.0 79.8 L115.0 79.5 L120.0 80.0 L125.0 80.7 L130.0 80.6 L135.0 79.2 L140.0 77.3 L145.0 76.0 L150.0 76.0 L155.0 76.8 L160.0 77.3 L165.0 76.9 L170.0 75.9 L175.0 75.1 L180.0 75.3 L185.0 76.4 L190.0 77.4 L195.0 77.3 L200.0 76.1 L205.0 74.5 L210.0 73.6 L215.0 73.8 L220.0 74.4 L225.0 74.3 L230.0 73.4 L235.0 72.0 L240.0 71.4 L245.0 72.1 L250.0 73.7 L255.0 75.0 L260.0 75.3 L265.0 74.8 L270.0 74.3 L275.0 74.7 L280.0 75.9 L285.0 77.0 L290.0 77.1 L295.0 76.0 L300.0 74.8 L305.0 74.4 L310.0 75.2 L315.0 76.5 L320.0 77.4 L325.0 77.3 L330.0 76.8 L335.0 76.8 L340.0 78.0 L345.0 79.8 L350.0 81.2 L355.0 81.3 L360.0 80.4 L365.0 79.4 L370.0 79.3 L375.0 80.0 L380.0 80.6 L385.0 80.4 L390.0 79.1 L395.0 77.8 L400.0 77.4 L405.0 78.2 L410.0 79.5 L415.0 80.3 L420.0 80.0 L425.0 79.0" fill="none" stroke="#e6d3ae" stroke-width="1.5" stroke-opacity="0.55" stroke-dasharray="56 5" stroke-dashoffset="39"/><path d="M-5.0 85.4 L0.0 85.8 L5.0 86.5 L10.0 87.0 L15.0 86.8 L20.0 85.8 L25.0 84.6 L30.0 83.7 L35.0 83.6 L40.0 84.3 L45.0 85.2 L50.0 85.9 L55.0 86.0 L60.0 86.0 L65.0 86.1 L70.0 86.7 L75.0 87.9 L80.0 88.9 L85.0 89.3 L90.0 88.8 L95.0 87.6 L100.0 86.4 L105.0 85.6 L110.0 85.4 L115.0 85.5 L120.0 85.4 L125.0 84.9 L130.0 84.1 L135.0 83.5 L140.0 83.6 L145.0 84.5 L150.0 85.7 L155.0 86.6 L160.0 86.8 L165.0 86.3 L170.0 85.5 L175.0 84.9 L180.0 84.7 L185.0 84.8 L190.0 84.6 L195.0 83.8 L200.0 82.5 L205.0 81.2 L210.0 80.5 L215.0 80.7 L220.0 81.7 L225.0 82.7 L230.0 83.4 L235.0 83.5 L240.0 83.3 L245.0 83.4 L250.0 83.9 L255.0 84.8 L260.0 85.5 L265.0 85.4 L270.0 84.6 L275.0 83.3 L280.0 82.3 L285.0 81.9 L290.0 82.3 L295.0 83.0 L300.0 83.5 L305.0 83.5 L310.0 83.4 L315.0 83.5 L320.0 84.3 L325.0 85.7 L330.0 87.2 L335.0 88.1 L340.0 88.2 L345.0 87.5 L350.0 86.6 L355.0 86.1 L360.0 86.1 L365.0 86.4 L370.0 86.4 L375.0 85.8 L380.0 85.0 L385.0 84.2 L390.0 84.2 L395.0 85.0 L400.0 86.3 L405.0 87.5 L410.0 88.0 L415.0 87.9 L420.0 87.4 L425.0 87.1" fill="none" stroke="#8e7658" stroke-width="2.2" stroke-opacity="0.33" stroke-dasharray="85 3" stroke-dashoffset="30"/><path d="M-5.0 83.7 L0.0 84.1 L5.0 84.8 L10.0 85.3 L15.0 85.1 L20.0 84.1 L25.0 82.9 L30.0 82.0 L35.0 81.9 L40.0 82.6 L45.0 83.5 L50.0 84.2 L55.0 84.3 L60.0 84.3 L65.0 84.4 L70.0 85.0 L75.0 86.2 L80.0 87.2 L85.0 87.6 L90.0 87.1 L95.0 85.9 L100.0 84.7 L105.0 83.9 L110.0 83.7 L115.0 83.8 L120.0 83.7 L125.0 83.2 L130.0 82.4 L135.0 81.8 L140.0 81.9 L145.0 82.8 L150.0 84.0 L155.0 84.9 L160.0 85.1 L165.0 84.6 L170.0 83.8 L175.0 83.2 L180.0 83.0 L185.0 83.1 L190.0 82.9 L195.0 82.1 L200.0 80.8 L205.0 79.5 L210.0 78.8 L215.0 79.0 L220.0 80.0 L225.0 81.0 L230.0 81.7 L235.0 81.8 L240.0 81.6 L245.0 81.7 L250.0 82.2 L255.0 83.1 L260.0 83.8 L265.0 83.7 L270.0 82.9 L275.0 81.6 L280.0 80.6 L285.0 80.2 L290.0 80.6 L295.0 81.3 L300.0 81.8 L305.0 81.8 L310.0 81.7 L315.0 81.8 L320.0 82.6 L325.0 84.0 L330.0 85.5 L335.0 86.4 L340.0 86.5 L345.0 85.8 L350.0 84.9 L355.0 84.4 L360.0 84.4 L365.0 84.7 L370.0 84.7 L375.0 84.1 L380.0 83.3 L385.0 82.5 L390.0 82.5 L395.0 83.3 L400.0 84.6 L405.0 85.8 L410.0 86.3 L415.0 86.2 L420.0 85.7 L425.0 85.4" fill="none" stroke="#e6d3ae" stroke-width="1.5" stroke-opacity="0.55" stroke-dasharray="44 4" stroke-dashoffset="3"/><path d="M-5.0 91.1 L0.0 92.4 L5.0 93.0 L10.0 92.5 L15.0 91.4 L20.0 91.0 L25.0 91.6 L30.0 92.6 L35.0 92.9 L40.0 92.0 L45.0 90.3 L50.0 89.2 L55.0 89.2 L60.0 89.9 L65.0 90.3 L70.0 89.7 L75.0 88.5 L80.0 87.7 L85.0 88.1 L90.0 89.5 L95.0 90.7 L100.0 90.9 L105.0 90.1 L110.0 89.5 L115.0 89.8 L120.0 90.9 L125.0 91.9 L130.0 91.9 L135.0 90.7 L140.0 89.4 L145.0 89.1 L150.0 89.8 L155.0 90.7 L160.0 90.8 L165.0 89.9 L170.0 88.9 L175.0 88.8 L180.0 90.0 L185.0 91.6 L190.0 92.5 L195.0 92.3 L200.0 91.6 L205.0 91.5 L210.0 92.5 L215.0 93.9 L220.0 94.6 L225.0 94.0 L230.0 92.7 L235.0 91.8 L240.0 92.1 L245.0 93.0 L250.0 93.6 L255.0 93.1 L260.0 91.9 L265.0 91.1 L270.0 91.6 L275.0 93.0 L280.0 94.2 L285.0 94.4 L290.0 93.7 L295.0 93.0 L300.0 93.4 L305.0 94.6 L310.0 95.6 L315.0 95.4 L320.0 94.2 L325.0 92.8 L330.0 92.3 L335.0 92.8 L340.0 93.4 L345.0 93.2 L350.0 92.0 L355.0 90.6 L360.0 90.2 L365.0 91.0 L370.0 92.2 L375.0 92.8 L380.0 92.2 L385.0 91.3 L390.0 91.0 L395.0 91.7 L400.0 92.9 L405.0 93.3 L410.0 92.5 L415.0 91.0 L420.0 89.9 L425.0 90.0" fill="none" stroke="#8e7658" stroke-width="2.2" stroke-opacity="0.33" stroke-dasharray="85 5" stroke-dashoffset="0"/><path d="M-5.0 89.4 L0.0 90.7 L5.0 91.3 L10.0 90.8 L15.0 89.7 L20.0 89.3 L25.0 89.9 L30.0 90.9 L35.0 91.2 L40.0 90.3 L45.0 88.6 L50.0 87.5 L55.0 87.5 L60.0 88.2 L65.0 88.6 L70.0 88.0 L75.0 86.8 L80.0 86.0 L85.0 86.4 L90.0 87.8 L95.0 89.0 L100.0 89.2 L105.0 88.4 L110.0 87.8 L115.0 88.1 L120.0 89.2 L125.0 90.2 L130.0 90.2 L135.0 89.0 L140.0 87.7 L145.0 87.4 L150.0 88.1 L155.0 89.0 L160.0 89.1 L165.0 88.2 L170.0 87.2 L175.0 87.1 L180.0 88.3 L185.0 89.9 L190.0 90.8 L195.0 90.6 L200.0 89.9 L205.0 89.8 L210.0 90.8 L215.0 92.2 L220.0 92.9 L225.0 92.3 L230.0 91.0 L235.0 90.1 L240.0 90.4 L245.0 91.3 L250.0 91.9 L255.0 91.4 L260.0 90.2 L265.0 89.4 L270.0 89.9 L275.0 91.3 L280.0 92.5 L285.0 92.7 L290.0 92.0 L295.0 91.3 L300.0 91.7 L305.0 92.9 L310.0 93.9 L315.0 93.7 L320.0 92.5 L325.0 91.1 L330.0 90.6 L335.0 91.1 L340.0 91.7 L345.0 91.5 L350.0 90.3 L355.0 88.9 L360.0 88.5 L365.0 89.3 L370.0 90.5 L375.0 91.1 L380.0 90.5 L385.0 89.6 L390.0 89.3 L395.0 90.0 L400.0 91.2 L405.0 91.6 L410.0 90.8 L415.0 89.3 L420.0 88.2 L425.0 88.3" fill="none" stroke="#e6d3ae" stroke-width="1.5" stroke-opacity="0.55" stroke-dasharray="52 6" stroke-dashoffset="60"/><path d="M-5.0 97.0 L0.0 97.1 L5.0 96.6 L10.0 96.4 L15.0 96.9 L20.0 97.7 L25.0 98.4 L30.0 98.5 L35.0 97.8 L40.0 96.9 L45.0 96.4 L50.0 96.7 L55.0 97.3 L60.0 97.7 L65.0 97.4 L70.0 96.6 L75.0 96.1 L80.0 96.3 L85.0 97.2 L90.0 98.3 L95.0 99.0 L100.0 99.0 L105.0 98.7 L110.0 98.7 L115.0 99.5 L120.0 100.7 L125.0 101.6 L130.0 101.8 L135.0 101.2 L140.0 100.5 L145.0 100.2 L150.0 100.5 L155.0 100.9 L160.0 100.9 L165.0 100.0 L170.0 98.7 L175.0 97.6 L180.0 97.2 L185.0 97.4 L190.0 97.7 L195.0 97.4 L200.0 96.6 L205.0 95.7 L210.0 95.3 L215.0 95.7 L220.0 96.6 L225.0 97.3 L230.0 97.3 L235.0 96.8 L240.0 96.3 L245.0 96.4 L250.0 97.1 L255.0 97.8 L260.0 98.0 L265.0 97.5 L270.0 96.5 L275.0 95.7 L280.0 95.6 L285.0 95.9 L290.0 96.2 L295.0 95.8 L300.0 94.8 L305.0 93.8 L310.0 93.4 L315.0 93.8 L320.0 94.6 L325.0 95.2 L330.0 95.1 L335.0 94.8 L340.0 94.6 L345.0 95.2 L350.0 96.5 L355.0 97.8 L360.0 98.6 L365.0 98.6 L370.0 98.3 L375.0 98.4 L380.0 99.0 L385.0 100.0 L390.0 100.7 L395.0 100.6 L400.0 99.8 L405.0 98.9 L410.0 98.6 L415.0 98.9 L420.0 99.4 L425.0 99.4" fill="none" stroke="#8e7658" stroke-width="2.2" stroke-opacity="0.33" stroke-dasharray="77 5" stroke-dashoffset="22"/><path d="M-5.0 95.3 L0.0 95.4 L5.0 94.9 L10.0 94.7 L15.0 95.2 L20.0 96.0 L25.0 96.7 L30.0 96.8 L35.0 96.1 L40.0 95.2 L45.0 94.7 L50.0 95.0 L55.0 95.6 L60.0 96.0 L65.0 95.7 L70.0 94.9 L75.0 94.4 L80.0 94.6 L85.0 95.5 L90.0 96.6 L95.0 97.3 L100.0 97.3 L105.0 97.0 L110.0 97.0 L115.0 97.8 L120.0 99.0 L125.0 99.9 L130.0 100.1 L135.0 99.5 L140.0 98.8 L145.0 98.5 L150.0 98.8 L155.0 99.2 L160.0 99.2 L165.0 98.3 L170.0 97.0 L175.0 95.9 L180.0 95.5 L185.0 95.7 L190.0 96.0 L195.0 95.7 L200.0 94.9 L205.0 94.0 L210.0 93.6 L215.0 94.0 L220.0 94.9 L225.0 95.6 L230.0 95.6 L235.0 95.1 L240.0 94.6 L245.0 94.7 L250.0 95.4 L255.0 96.1 L260.0 96.3 L265.0 95.8 L270.0 94.8 L275.0 94.0 L280.0 93.9 L285.0 94.2 L290.0 94.5 L295.0 94.1 L300.0 93.1 L305.0 92.1 L310.0 91.7 L315.0 92.1 L320.0 92.9 L325.0 93.5 L330.0 93.4 L335.0 93.1 L340.0 92.9 L345.0 93.5 L350.0 94.8 L355.0 96.1 L360.0 96.9 L365.0 96.9 L370.0 96.6 L375.0 96.7 L380.0 97.3 L385.0 98.3 L390.0 99.0 L395.0 98.9 L400.0 98.1 L405.0 97.2 L410.0 96.9 L415.0 97.2 L420.0 97.7 L425.0 97.7" fill="none" stroke="#e6d3ae" stroke-width="1.5" stroke-opacity="0.55" stroke-dasharray="38 6" stroke-dashoffset="26"/><path d="M-5.0 107.4 L0.0 106.0 L5.0 105.5 L10.0 106.1 L15.0 106.9 L20.0 106.7 L25.0 105.3 L30.0 103.8 L35.0 103.4 L40.0 104.6 L45.0 106.2 L50.0 106.9 L55.0 106.3 L60.0 105.4 L65.0 105.3 L70.0 106.4 L75.0 107.6 L80.0 107.7 L85.0 106.3 L90.0 104.2 L95.0 103.0 L100.0 103.1 L105.0 103.6 L110.0 103.4 L115.0 102.0 L120.0 100.3 L125.0 99.7 L130.0 100.7 L135.0 102.4 L140.0 103.4 L145.0 103.0 L150.0 102.1 L155.0 102.0 L160.0 103.0 L165.0 104.4 L170.0 104.9 L175.0 103.8 L180.0 102.1 L185.0 101.1 L190.0 101.4 L195.0 102.5 L200.0 103.0 L205.0 102.4 L210.0 101.4 L215.0 101.2 L220.0 102.6 L225.0 104.7 L230.0 106.3 L235.0 106.5 L240.0 105.8 L245.0 105.6 L250.0 106.5 L255.0 107.9 L260.0 108.5 L265.0 107.6 L270.0 105.8 L275.0 104.5 L280.0 104.6 L285.0 105.5 L290.0 106.1 L295.0 105.6 L300.0 104.3 L305.0 103.7 L310.0 104.6 L315.0 106.3 L320.0 107.6 L325.0 107.4 L330.0 106.2 L335.0 105.2 L340.0 105.3 L345.0 106.1 L350.0 106.3 L355.0 105.1 L360.0 103.0 L365.0 101.2 L370.0 100.8 L375.0 101.7 L380.0 102.4 L385.0 102.0 L390.0 100.9 L395.0 100.2 L400.0 100.9 L405.0 102.7 L410.0 104.2 L415.0 104.4 L420.0 103.4 L425.0 102.4" fill="none" stroke="#8e7658" stroke-width="2.2" stroke-opacity="0.33" stroke-dasharray="82 3" stroke-dashoffset="24"/><path d="M-5.0 105.7 L0.0 104.3 L5.0 103.8 L10.0 104.4 L15.0 105.2 L20.0 105.0 L25.0 103.6 L30.0 102.1 L35.0 101.7 L40.0 102.9 L45.0 104.5 L50.0 105.2 L55.0 104.6 L60.0 103.7 L65.0 103.6 L70.0 104.7 L75.0 105.9 L80.0 106.0 L85.0 104.6 L90.0 102.5 L95.0 101.3 L100.0 101.4 L105.0 101.9 L110.0 101.7 L115.0 100.3 L120.0 98.6 L125.0 98.0 L130.0 99.0 L135.0 100.7 L140.0 101.7 L145.0 101.3 L150.0 100.4 L155.0 100.3 L160.0 101.3 L165.0 102.7 L170.0 103.2 L175.0 102.1 L180.0 100.4 L185.0 99.4 L190.0 99.7 L195.0 100.8 L200.0 101.3 L205.0 100.7 L210.0 99.7 L215.0 99.5 L220.0 100.9 L225.0 103.0 L230.0 104.6 L235.0 104.8 L240.0 104.1 L245.0 103.9 L250.0 104.8 L255.0 106.2 L260.0 106.8 L265.0 105.9 L270.0 104.1 L275.0 102.8 L280.0 102.9 L285.0 103.8 L290.0 104.4 L295.0 103.9 L300.0 102.6 L305.0 102.0 L310.0 102.9 L315.0 104.6 L320.0 105.9 L325.0 105.7 L330.0 104.5 L335.0 103.5 L340.0 103.6 L345.0 104.4 L350.0 104.6 L355.0 103.4 L360.0 101.3 L365.0 99.5 L370.0 99.1 L375.0 100.0 L380.0 100.7 L385.0 100.3 L390.0 99.2 L395.0 98.5 L400.0 99.2 L405.0 101.0 L410.0 102.5 L415.0 102.7 L420.0 101.7 L425.0 100.7" fill="none" stroke="#e6d3ae" stroke-width="1.5" stroke-opacity="0.55" stroke-dasharray="36 5" stroke-dashoffset="36"/><path d="M-5.0 111.0 L0.0 110.0 L5.0 109.2 L10.0 109.4 L15.0 110.2 L20.0 110.9 L25.0 110.6 L30.0 109.6 L35.0 108.9 L40.0 109.3 L45.0 110.7 L50.0 112.2 L55.0 112.8 L60.0 112.6 L65.0 112.4 L70.0 113.1 L75.0 114.6 L80.0 116.0 L85.0 116.3 L90.0 115.5 L95.0 114.4 L100.0 113.8 L105.0 114.1 L110.0 114.6 L115.0 114.2 L120.0 112.8 L125.0 111.2 L130.0 110.4 L135.0 110.8 L140.0 111.7 L145.0 112.1 L150.0 111.5 L155.0 110.5 L160.0 110.2 L165.0 110.9 L170.0 112.0 L175.0 112.4 L180.0 111.6 L185.0 110.2 L190.0 109.1 L195.0 108.9 L200.0 109.4 L205.0 109.3 L210.0 108.3 L215.0 106.7 L220.0 105.7 L225.0 105.9 L230.0 107.1 L235.0 108.1 L240.0 108.2 L245.0 107.8 L250.0 107.7 L255.0 108.7 L260.0 110.4 L265.0 111.9 L270.0 112.2 L275.0 111.6 L280.0 111.0 L285.0 111.1 L290.0 112.1 L295.0 112.8 L300.0 112.7 L305.0 111.6 L310.0 110.6 L315.0 110.6 L320.0 111.6 L325.0 112.9 L330.0 113.5 L335.0 113.1 L340.0 112.7 L345.0 113.0 L350.0 114.3 L355.0 115.7 L360.0 116.2 L365.0 115.5 L370.0 114.3 L375.0 113.6 L380.0 113.8 L385.0 114.1 L390.0 113.8 L395.0 112.3 L400.0 110.5 L405.0 109.3 L410.0 109.3 L415.0 110.0 L420.0 110.3 L425.0 109.7" fill="none" stroke="#8e7658" stroke-width="2.2" stroke-opacity="0.33" stroke-dasharray="64 4" stroke-dashoffset="38"/><path d="M-5.0 109.3 L0.0 108.3 L5.0 107.5 L10.0 107.7 L15.0 108.5 L20.0 109.2 L25.0 108.9 L30.0 107.9 L35.0 107.2 L40.0 107.6 L45.0 109.0 L50.0 110.5 L55.0 111.1 L60.0 110.9 L65.0 110.7 L70.0 111.4 L75.0 112.9 L80.0 114.3 L85.0 114.6 L90.0 113.8 L95.0 112.7 L100.0 112.1 L105.0 112.4 L110.0 112.9 L115.0 112.5 L120.0 111.1 L125.0 109.5 L130.0 108.7 L135.0 109.1 L140.0 110.0 L145.0 110.4 L150.0 109.8 L155.0 108.8 L160.0 108.5 L165.0 109.2 L170.0 110.3 L175.0 110.7 L180.0 109.9 L185.0 108.5 L190.0 107.4 L195.0 107.2 L200.0 107.7 L205.0 107.6 L210.0 106.6 L215.0 105.0 L220.0 104.0 L225.0 104.2 L230.0 105.4 L235.0 106.4 L240.0 106.5 L245.0 106.1 L250.0 106.0 L255.0 107.0 L260.0 108.7 L265.0 110.2 L270.0 110.5 L275.0 109.9 L280.0 109.3 L285.0 109.4 L290.0 110.4 L295.0 111.1 L300.0 111.0 L305.0 109.9 L310.0 108.9 L315.0 108.9 L320.0 109.9 L325.0 111.2 L330.0 111.8 L335.0 111.4 L340.0 111.0 L345.0 111.3 L350.0 112.6 L355.0 114.0 L360.0 114.5 L365.0 113.8 L370.0 112.6 L375.0 111.9 L380.0 112.1 L385.0 112.4 L390.0 112.1 L395.0 110.6 L400.0 108.8 L405.0 107.6 L410.0 107.6 L415.0 108.3 L420.0 108.6 L425.0 108.0" fill="none" stroke="#e6d3ae" stroke-width="1.5" stroke-opacity="0.55" stroke-dasharray="68 5" stroke-dashoffset="47"/><path d="M-5.0 122.5 L0.0 121.1 L5.0 119.6 L10.0 119.3 L15.0 120.0 L20.0 120.3 L25.0 119.2 L30.0 117.8 L35.0 117.5 L40.0 118.6 L45.0 119.6 L50.0 119.4 L55.0 118.4 L60.0 118.0 L65.0 118.9 L70.0 120.1 L75.0 119.9 L80.0 118.5 L85.0 117.3 L90.0 117.3 L95.0 117.9 L100.0 117.7 L105.0 116.2 L110.0 114.7 L115.0 114.4 L120.0 115.4 L125.0 116.0 L130.0 115.4 L135.0 114.4 L140.0 114.4 L145.0 115.7 L150.0 117.0 L155.0 116.9 L160.0 115.9 L165.0 115.3 L170.0 116.0 L175.0 117.0 L180.0 116.8 L185.0 115.4 L190.0 114.2 L195.0 114.3 L200.0 115.3 L205.0 115.6 L210.0 114.8 L215.0 113.9 L220.0 114.3 L225.0 115.9 L230.0 117.2 L235.0 117.1 L240.0 116.5 L245.0 116.7 L250.0 118.1 L255.0 119.4 L260.0 119.3 L265.0 118.2 L270.0 117.4 L275.0 118.0 L280.0 119.0 L285.0 119.0 L290.0 117.8 L295.0 116.9 L300.0 117.4 L305.0 118.8 L310.0 119.7 L315.0 119.3 L320.0 118.7 L325.0 119.3 L330.0 120.9 L335.0 122.2 L340.0 122.0 L345.0 121.0 L350.0 120.6 L355.0 121.5 L360.0 122.3 L365.0 121.8 L370.0 120.3 L375.0 119.2 L380.0 119.5 L385.0 120.4 L390.0 120.5 L395.0 119.5 L400.0 118.6 L405.0 119.1 L410.0 120.5 L415.0 121.4 L420.0 120.8 L425.0 119.8" fill="none" stroke="#8e7658" stroke-width="2.2" stroke-opacity="0.33" stroke-dasharray="68 4" stroke-dashoffset="18"/><path d="M-5.0 120.8 L0.0 119.4 L5.0 117.9 L10.0 117.6 L15.0 118.3 L20.0 118.6 L25.0 117.5 L30.0 116.1 L35.0 115.8 L40.0 116.9 L45.0 117.9 L50.0 117.7 L55.0 116.7 L60.0 116.3 L65.0 117.2 L70.0 118.4 L75.0 118.2 L80.0 116.8 L85.0 115.6 L90.0 115.6 L95.0 116.2 L100.0 116.0 L105.0 114.5 L110.0 113.0 L115.0 112.7 L120.0 113.7 L125.0 114.3 L130.0 113.7 L135.0 112.7 L140.0 112.7 L145.0 114.0 L150.0 115.3 L155.0 115.2 L160.0 114.2 L165.0 113.6 L170.0 114.3 L175.0 115.3 L180.0 115.1 L185.0 113.7 L190.0 112.5 L195.0 112.6 L200.0 113.6 L205.0 113.9 L210.0 113.1 L215.0 112.2 L220.0 112.6 L225.0 114.2 L230.0 115.5 L235.0 115.4 L240.0 114.8 L245.0 115.0 L250.0 116.4 L255.0 117.7 L260.0 117.6 L265.0 116.5 L270.0 115.7 L275.0 116.3 L280.0 117.3 L285.0 117.3 L290.0 116.1 L295.0 115.2 L300.0 115.7 L305.0 117.1 L310.0 118.0 L315.0 117.6 L320.0 117.0 L325.0 117.6 L330.0 119.2 L335.0 120.5 L340.0 120.3 L345.0 119.3 L350.0 118.9 L355.0 119.8 L360.0 120.6 L365.0 120.1 L370.0 118.6 L375.0 117.5 L380.0 117.8 L385.0 118.7 L390.0 118.8 L395.0 117.8 L400.0 116.9 L405.0 117.4 L410.0 118.8 L415.0 119.7 L420.0 119.1 L425.0 118.1" fill="none" stroke="#e6d3ae" stroke-width="1.5" stroke-opacity="0.55" stroke-dasharray="32 4" stroke-dashoffset="52"/><path d="M-5.0 127.1 L0.0 125.6 L5.0 124.1 L10.0 123.5 L15.0 124.1 L20.0 125.1 L25.0 125.5 L30.0 124.8 L35.0 123.7 L40.0 123.2 L45.0 124.0 L50.0 125.5 L55.0 126.6 L60.0 126.5 L65.0 125.6 L70.0 124.8 L75.0 125.0 L80.0 126.0 L85.0 127.0 L90.0 126.8 L95.0 125.4 L100.0 123.8 L105.0 123.0 L110.0 123.2 L115.0 123.8 L120.0 123.7 L125.0 122.5 L130.0 120.8 L135.0 119.7 L140.0 119.9 L145.0 120.9 L150.0 121.7 L155.0 121.6 L160.0 120.6 L165.0 119.9 L170.0 120.3 L175.0 121.8 L180.0 123.4 L185.0 124.0 L190.0 123.5 L195.0 122.7 L200.0 122.6 L205.0 123.5 L210.0 124.9 L215.0 125.4 L220.0 124.7 L225.0 123.3 L230.0 122.3 L235.0 122.4 L240.0 123.4 L245.0 124.1 L250.0 123.7 L255.0 122.4 L260.0 121.3 L265.0 121.4 L270.0 122.6 L275.0 124.1 L280.0 124.7 L285.0 124.3 L290.0 123.6 L295.0 123.8 L300.0 125.1 L305.0 126.9 L310.0 128.0 L315.0 127.9 L320.0 127.0 L325.0 126.4 L330.0 126.8 L335.0 128.0 L340.0 128.7 L345.0 128.3 L350.0 126.8 L355.0 125.3 L360.0 124.7 L365.0 125.3 L370.0 125.9 L375.0 125.8 L380.0 124.5 L385.0 123.1 L390.0 122.4 L395.0 123.0 L400.0 124.3 L405.0 125.1 L410.0 124.7 L415.0 123.7 L420.0 123.1 L425.0 123.7" fill="none" stroke="#8e7658" stroke-width="2.2" stroke-opacity="0.33" stroke-dasharray="71 7" stroke-dashoffset="30"/><path d="M-5.0 125.4 L0.0 123.9 L5.0 122.4 L10.0 121.8 L15.0 122.4 L20.0 123.4 L25.0 123.8 L30.0 123.1 L35.0 122.0 L40.0 121.5 L45.0 122.3 L50.0 123.8 L55.0 124.9 L60.0 124.8 L65.0 123.9 L70.0 123.1 L75.0 123.3 L80.0 124.3 L85.0 125.3 L90.0 125.1 L95.0 123.7 L100.0 122.1 L105.0 121.3 L110.0 121.5 L115.0 122.1 L120.0 122.0 L125.0 120.8 L130.0 119.1 L135.0 118.0 L140.0 118.2 L145.0 119.2 L150.0 120.0 L155.0 119.9 L160.0 118.9 L165.0 118.2 L170.0 118.6 L175.0 120.1 L180.0 121.7 L185.0 122.3 L190.0 121.8 L195.0 121.0 L200.0 120.9 L205.0 121.8 L210.0 123.2 L215.0 123.7 L220.0 123.0 L225.0 121.6 L230.0 120.6 L235.0 120.7 L240.0 121.7 L245.0 122.4 L250.0 122.0 L255.0 120.7 L260.0 119.6 L265.0 119.7 L270.0 120.9 L275.0 122.4 L280.0 123.0 L285.0 122.6 L290.0 121.9 L295.0 122.1 L300.0 123.4 L305.0 125.2 L310.0 126.3 L315.0 126.2 L320.0 125.3 L325.0 124.7 L330.0 125.1 L335.0 126.3 L340.0 127.0 L345.0 126.6 L350.0 125.1 L355.0 123.6 L360.0 123.0 L365.0 123.6 L370.0 124.2 L375.0 124.1 L380.0 122.8 L385.0 121.4 L390.0 120.7 L395.0 121.3 L400.0 122.6 L405.0 123.4 L410.0 123.0 L415.0 122.0 L420.0 121.4 L425.0 122.0" fill="none" stroke="#e6d3ae" stroke-width="1.5" stroke-opacity="0.55" stroke-dasharray="63 8" stroke-dashoffset="55"/><path d="M-5.0 128.0 L0.0 128.0 L5.0 128.7 L10.0 129.8 L15.0 130.5 L20.0 130.3 L25.0 129.3 L30.0 128.1 L35.0 127.3 L40.0 127.4 L45.0 128.0 L50.0 128.4 L55.0 128.3 L60.0 127.7 L65.0 127.4 L70.0 127.8 L75.0 129.1 L80.0 130.7 L85.0 131.9 L90.0 132.2 L95.0 131.8 L100.0 131.4 L105.0 131.4 L110.0 132.0 L115.0 132.6 L120.0 132.6 L125.0 131.8 L130.0 130.7 L135.0 129.8 L140.0 129.8 L145.0 130.7 L150.0 131.7 L155.0 132.4 L160.0 132.4 L165.0 132.1 L170.0 132.2 L175.0 133.0 L180.0 134.2 L185.0 135.2 L190.0 135.3 L195.0 134.4 L200.0 133.2 L205.0 132.3 L210.0 132.1 L215.0 132.3 L220.0 132.4 L225.0 131.9 L230.0 130.9 L235.0 130.0 L240.0 129.8 L245.0 130.5 L250.0 131.7 L255.0 132.6 L260.0 132.7 L265.0 132.2 L270.0 131.6 L275.0 131.4 L280.0 131.7 L285.0 132.1 L290.0 132.0 L295.0 130.9 L300.0 129.4 L305.0 128.0 L310.0 127.4 L315.0 127.6 L320.0 128.2 L325.0 128.4 L330.0 128.1 L335.0 127.5 L340.0 127.3 L345.0 127.9 L350.0 129.1 L355.0 130.2 L360.0 130.5 L365.0 130.0 L370.0 128.9 L375.0 128.1 L380.0 127.9 L385.0 128.2 L390.0 128.4 L395.0 128.0 L400.0 127.1 L405.0 126.1 L410.0 125.8 L415.0 126.4 L420.0 127.8 L425.0 129.0" fill="none" stroke="#8e7658" stroke-width="2.2" stroke-opacity="0.33" stroke-dasharray="63 7" stroke-dashoffset="8"/><path d="M-5.0 126.3 L0.0 126.3 L5.0 127.0 L10.0 128.1 L15.0 128.8 L20.0 128.6 L25.0 127.6 L30.0 126.4 L35.0 125.6 L40.0 125.7 L45.0 126.3 L50.0 126.7 L55.0 126.6 L60.0 126.0 L65.0 125.7 L70.0 126.1 L75.0 127.4 L80.0 129.0 L85.0 130.2 L90.0 130.5 L95.0 130.1 L100.0 129.7 L105.0 129.7 L110.0 130.3 L115.0 130.9 L120.0 130.9 L125.0 130.1 L130.0 129.0 L135.0 128.1 L140.0 128.1 L145.0 129.0 L150.0 130.0 L155.0 130.7 L160.0 130.7 L165.0 130.4 L170.0 130.5 L175.0 131.3 L180.0 132.5 L185.0 133.5 L190.0 133.6 L195.0 132.7 L200.0 131.5 L205.0 130.6 L210.0 130.4 L215.0 130.6 L220.0 130.7 L225.0 130.2 L230.0 129.2 L235.0 128.3 L240.0 128.1 L245.0 128.8 L250.0 130.0 L255.0 130.9 L260.0 131.0 L265.0 130.5 L270.0 129.9 L275.0 129.7 L280.0 130.0 L285.0 130.4 L290.0 130.3 L295.0 129.2 L300.0 127.7 L305.0 126.3 L310.0 125.7 L315.0 125.9 L320.0 126.5 L325.0 126.7 L330.0 126.4 L335.0 125.8 L340.0 125.6 L345.0 126.2 L350.0 127.4 L355.0 128.5 L360.0 128.8 L365.0 128.3 L370.0 127.2 L375.0 126.4 L380.0 126.2 L385.0 126.5 L390.0 126.7 L395.0 126.3 L400.0 125.4 L405.0 124.4 L410.0 124.1 L415.0 124.7 L420.0 126.1 L425.0 127.3" fill="none" stroke="#e6d3ae" stroke-width="1.5" stroke-opacity="0.55" stroke-dasharray="32 3" stroke-dashoffset="16"/><path d="M-5.0 133.9 L0.0 133.5 L5.0 133.8 L10.0 134.7 L15.0 135.7 L20.0 136.0 L25.0 135.3 L30.0 134.0 L35.0 132.8 L40.0 132.2 L45.0 132.6 L50.0 133.4 L55.0 134.0 L60.0 133.9 L65.0 133.5 L70.0 133.2 L75.0 133.7 L80.0 135.2 L85.0 137.1 L90.0 138.7 L95.0 139.4 L100.0 139.3 L105.0 138.9 L110.0 138.8 L115.0 139.4 L120.0 140.3 L125.0 140.8 L130.0 140.6 L135.0 139.5 L140.0 138.2 L145.0 137.4 L150.0 137.6 L155.0 138.5 L160.0 139.5 L165.0 139.9 L170.0 139.7 L175.0 139.1 L180.0 138.9 L185.0 139.4 L190.0 140.4 L195.0 141.3 L200.0 141.5 L205.0 140.6 L210.0 139.0 L215.0 137.5 L220.0 136.6 L225.0 136.4 L230.0 136.5 L235.0 136.1 L240.0 135.0 L245.0 133.5 L250.0 132.4 L255.0 132.1 L260.0 132.9 L265.0 134.1 L270.0 135.0 L275.0 135.1 L280.0 134.6 L285.0 133.9 L290.0 133.8 L295.0 134.4 L300.0 135.2 L305.0 135.7 L310.0 135.2 L315.0 134.0 L320.0 132.7 L325.0 131.9 L330.0 132.2 L335.0 133.1 L340.0 134.1 L345.0 134.6 L350.0 134.4 L355.0 134.2 L360.0 134.6 L365.0 135.8 L370.0 137.7 L375.0 139.4 L380.0 140.3 L385.0 140.2 L390.0 139.6 L395.0 139.1 L400.0 139.2 L405.0 139.8 L410.0 140.4 L415.0 140.4 L420.0 139.5 L425.0 138.3" fill="none" stroke="#8e7658" stroke-width="2.2" stroke-opacity="0.33" stroke-dasharray="81 6" stroke-dashoffset="54"/><path d="M-5.0 132.2 L0.0 131.8 L5.0 132.1 L10.0 133.0 L15.0 134.0 L20.0 134.3 L25.0 133.6 L30.0 132.3 L35.0 131.1 L40.0 130.5 L45.0 130.9 L50.0 131.7 L55.0 132.3 L60.0 132.2 L65.0 131.8 L70.0 131.5 L75.0 132.0 L80.0 133.5 L85.0 135.4 L90.0 137.0 L95.0 137.7 L100.0 137.6 L105.0 137.2 L110.0 137.1 L115.0 137.7 L120.0 138.6 L125.0 139.1 L130.0 138.9 L135.0 137.8 L140.0 136.5 L145.0 135.7 L150.0 135.9 L155.0 136.8 L160.0 137.8 L165.0 138.2 L170.0 138.0 L175.0 137.4 L180.0 137.2 L185.0 137.7 L190.0 138.7 L195.0 139.6 L200.0 139.8 L205.0 138.9 L210.0 137.3 L215.0 135.8 L220.0 134.9 L225.0 134.7 L230.0 134.8 L235.0 134.4 L240.0 133.3 L245.0 131.8 L250.0 130.7 L255.0 130.4 L260.0 131.2 L265.0 132.4 L270.0 133.3 L275.0 133.4 L280.0 132.9 L285.0 132.2 L290.0 132.1 L295.0 132.7 L300.0 133.5 L305.0 134.0 L310.0 133.5 L315.0 132.3 L320.0 131.0 L325.0 130.2 L330.0 130.5 L335.0 131.4 L340.0 132.4 L345.0 132.9 L350.0 132.7 L355.0 132.5 L360.0 132.9 L365.0 134.1 L370.0 136.0 L375.0 137.7 L380.0 138.6 L385.0 138.5 L390.0 137.9 L395.0 137.4 L400.0 137.5 L405.0 138.1 L410.0 138.7 L415.0 138.7 L420.0 137.8 L425.0 136.6" fill="none" stroke="#e6d3ae" stroke-width="1.5" stroke-opacity="0.55" stroke-dasharray="54 6" stroke-dashoffset="25"/><path d="M-5.0 142.3 L0.0 141.6 L5.0 142.3 L10.0 144.0 L15.0 145.0 L20.0 144.6 L25.0 143.5 L30.0 143.0 L35.0 143.8 L40.0 144.9 L45.0 144.8 L50.0 143.3 L55.0 141.5 L60.0 140.8 L65.0 141.3 L70.0 141.8 L75.0 141.2 L80.0 139.6 L85.0 138.4 L90.0 138.7 L95.0 140.0 L100.0 141.1 L105.0 140.9 L110.0 139.9 L115.0 139.7 L120.0 140.8 L125.0 142.5 L130.0 143.1 L135.0 142.3 L140.0 141.0 L145.0 140.6 L150.0 141.3 L155.0 142.1 L160.0 141.7 L165.0 140.0 L170.0 138.5 L175.0 138.4 L180.0 139.5 L185.0 140.3 L190.0 140.0 L195.0 138.9 L200.0 138.5 L205.0 139.7 L210.0 141.6 L215.0 142.7 L220.0 142.5 L225.0 141.7 L230.0 141.8 L235.0 143.1 L240.0 144.5 L245.0 144.6 L250.0 143.4 L255.0 142.0 L260.0 141.8 L265.0 142.7 L270.0 143.4 L275.0 142.9 L280.0 141.4 L285.0 140.6 L290.0 141.2 L295.0 142.9 L300.0 144.0 L305.0 143.8 L310.0 143.1 L315.0 143.2 L320.0 144.8 L325.0 146.6 L330.0 147.3 L335.0 146.6 L340.0 145.6 L345.0 145.5 L350.0 146.6 L355.0 147.4 L360.0 146.9 L365.0 145.2 L370.0 143.9 L375.0 143.9 L380.0 145.0 L385.0 145.6 L390.0 145.0 L395.0 143.8 L400.0 143.4 L405.0 144.6 L410.0 146.4 L415.0 147.2 L420.0 146.7 L425.0 145.9" fill="none" stroke="#8e7658" stroke-width="2.2" stroke-opacity="0.33" stroke-dasharray="70 5" stroke-dashoffset="9"/><path d="M-5.0 140.6 L0.0 139.9 L5.0 140.6 L10.0 142.3 L15.0 143.3 L20.0 142.9 L25.0 141.8 L30.0 141.3 L35.0 142.1 L40.0 143.2 L45.0 143.1 L50.0 141.6 L55.0 139.8 L60.0 139.1 L65.0 139.6 L70.0 140.1 L75.0 139.5 L80.0 137.9 L85.0 136.7 L90.0 137.0 L95.0 138.3 L100.0 139.4 L105.0 139.2 L110.0 138.2 L115.0 138.0 L120.0 139.1 L125.0 140.8 L130.0 141.4 L135.0 140.6 L140.0 139.3 L145.0 138.9 L150.0 139.6 L155.0 140.4 L160.0 140.0 L165.0 138.3 L170.0 136.8 L175.0 136.7 L180.0 137.8 L185.0 138.6 L190.0 138.3 L195.0 137.2 L200.0 136.8 L205.0 138.0 L210.0 139.9 L215.0 141.0 L220.0 140.8 L225.0 140.0 L230.0 140.1 L235.0 141.4 L240.0 142.8 L245.0 142.9 L250.0 141.7 L255.0 140.3 L260.0 140.1 L265.0 141.0 L270.0 141.7 L275.0 141.2 L280.0 139.7 L285.0 138.9 L290.0 139.5 L295.0 141.2 L300.0 142.3 L305.0 142.1 L310.0 141.4 L315.0 141.5 L320.0 143.1 L325.0 144.9 L330.0 145.6 L335.0 144.9 L340.0 143.9 L345.0 143.8 L350.0 144.9 L355.0 145.7 L360.0 145.2 L365.0 143.5 L370.0 142.2 L375.0 142.2 L380.0 143.3 L385.0 143.9 L390.0 143.3 L395.0 142.1 L400.0 141.7 L405.0 142.9 L410.0 144.7 L415.0 145.5 L420.0 145.0 L425.0 144.2" fill="none" stroke="#e6d3ae" stroke-width="1.5" stroke-opacity="0.55" stroke-dasharray="40 6" stroke-dashoffset="44"/><path d="M-5.0 154.5 L0.0 153.6 L5.0 152.4 L10.0 151.8 L15.0 151.9 L20.0 152.1 L25.0 151.7 L30.0 150.8 L35.0 150.0 L40.0 150.2 L45.0 151.6 L50.0 153.1 L55.0 154.0 L60.0 153.9 L65.0 153.4 L70.0 153.3 L75.0 153.8 L80.0 154.2 L85.0 153.7 L90.0 152.2 L95.0 150.5 L100.0 149.5 L105.0 149.7 L110.0 150.4 L115.0 150.8 L120.0 150.6 L125.0 150.2 L130.0 150.4 L135.0 151.5 L140.0 152.8 L145.0 153.1 L150.0 152.3 L155.0 150.8 L160.0 149.6 L165.0 149.3 L170.0 149.3 L175.0 148.8 L180.0 147.7 L185.0 146.5 L190.0 146.1 L195.0 146.8 L200.0 148.2 L205.0 149.3 L210.0 149.3 L215.0 148.8 L220.0 148.4 L225.0 148.7 L230.0 149.2 L235.0 149.0 L240.0 147.8 L245.0 146.0 L250.0 144.7 L255.0 144.5 L260.0 145.1 L265.0 145.8 L270.0 145.8 L275.0 145.5 L280.0 145.6 L285.0 146.5 L290.0 148.0 L295.0 149.0 L300.0 148.9 L305.0 147.8 L310.0 146.6 L315.0 146.2 L320.0 146.4 L325.0 146.5 L330.0 145.9 L335.0 144.9 L340.0 144.3 L345.0 145.0 L350.0 146.5 L355.0 148.1 L360.0 148.9 L365.0 148.9 L370.0 148.7 L375.0 149.1 L380.0 149.9 L385.0 150.4 L390.0 149.9 L395.0 148.6 L400.0 147.3 L405.0 146.9 L410.0 147.6 L415.0 148.6 L420.0 149.1 L425.0 149.0" fill="none" stroke="#8e7658" stroke-width="2.2" stroke-opacity="0.33" stroke-dasharray="82 3" stroke-dashoffset="21"/><path d="M-5.0 152.8 L0.0 151.9 L5.0 150.7 L10.0 150.1 L15.0 150.2 L20.0 150.4 L25.0 150.0 L30.0 149.1 L35.0 148.3 L40.0 148.5 L45.0 149.9 L50.0 151.4 L55.0 152.3 L60.0 152.2 L65.0 151.7 L70.0 151.6 L75.0 152.1 L80.0 152.5 L85.0 152.0 L90.0 150.5 L95.0 148.8 L100.0 147.8 L105.0 148.0 L110.0 148.7 L115.0 149.1 L120.0 148.9 L125.0 148.5 L130.0 148.7 L135.0 149.8 L140.0 151.1 L145.0 151.4 L150.0 150.6 L155.0 149.1 L160.0 147.9 L165.0 147.6 L170.0 147.6 L175.0 147.1 L180.0 146.0 L185.0 144.8 L190.0 144.4 L195.0 145.1 L200.0 146.5 L205.0 147.6 L210.0 147.6 L215.0 147.1 L220.0 146.7 L225.0 147.0 L230.0 147.5 L235.0 147.3 L240.0 146.1 L245.0 144.3 L250.0 143.0 L255.0 142.8 L260.0 143.4 L265.0 144.1 L270.0 144.1 L275.0 143.8 L280.0 143.9 L285.0 144.8 L290.0 146.3 L295.0 147.3 L300.0 147.2 L305.0 146.1 L310.0 144.9 L315.0 144.5 L320.0 144.7 L325.0 144.8 L330.0 144.2 L335.0 143.2 L340.0 142.6 L345.0 143.3 L350.0 144.8 L355.0 146.4 L360.0 147.2 L365.0 147.2 L370.0 147.0 L375.0 147.4 L380.0 148.2 L385.0 148.7 L390.0 148.2 L395.0 146.9 L400.0 145.6 L405.0 145.2 L410.0 145.9 L415.0 146.9 L420.0 147.4 L425.0 147.3" fill="none" stroke="#e6d3ae" stroke-width="1.5" stroke-opacity="0.55" stroke-dasharray="76 6" stroke-dashoffset="4"/><path d="M-5.0 154.1 L0.0 153.9 L5.0 154.6 L10.0 155.9 L15.0 157.2 L20.0 157.8 L25.0 157.3 L30.0 156.1 L35.0 155.2 L40.0 155.1 L45.0 155.8 L50.0 156.8 L55.0 157.3 L60.0 157.0 L65.0 156.3 L70.0 156.0 L75.0 156.6 L80.0 158.0 L85.0 159.5 L90.0 160.5 L95.0 160.4 L100.0 159.5 L105.0 158.5 L110.0 158.2 L115.0 158.5 L120.0 159.1 L125.0 159.1 L130.0 158.3 L135.0 156.9 L140.0 155.7 L145.0 155.4 L150.0 156.1 L155.0 157.2 L160.0 158.0 L165.0 157.9 L170.0 157.1 L175.0 156.2 L180.0 155.9 L185.0 156.3 L190.0 156.9 L195.0 157.1 L200.0 156.3 L205.0 154.8 L210.0 153.2 L215.0 152.5 L220.0 152.8 L225.0 153.7 L230.0 154.5 L235.0 154.7 L240.0 154.1 L245.0 153.6 L250.0 153.8 L255.0 154.8 L260.0 156.2 L265.0 157.2 L270.0 157.3 L275.0 156.4 L280.0 155.2 L285.0 154.6 L290.0 154.9 L295.0 155.8 L300.0 156.6 L305.0 156.8 L310.0 156.2 L315.0 155.6 L320.0 155.7 L325.0 156.7 L330.0 158.3 L335.0 159.8 L340.0 160.3 L345.0 159.8 L350.0 158.9 L355.0 158.3 L360.0 158.4 L365.0 159.0 L370.0 159.4 L375.0 159.1 L380.0 158.0 L385.0 156.6 L390.0 155.8 L395.0 156.0 L400.0 157.0 L405.0 158.1 L410.0 158.5 L415.0 158.0 L420.0 157.1 L425.0 156.4" fill="none" stroke="#8e7658" stroke-width="2.2" stroke-opacity="0.33" stroke-dasharray="68 4" stroke-dashoffset="11"/><path d="M-5.0 152.4 L0.0 152.2 L5.0 152.9 L10.0 154.2 L15.0 155.5 L20.0 156.1 L25.0 155.6 L30.0 154.4 L35.0 153.5 L40.0 153.4 L45.0 154.1 L50.0 155.1 L55.0 155.6 L60.0 155.3 L65.0 154.6 L70.0 154.3 L75.0 154.9 L80.0 156.3 L85.0 157.8 L90.0 158.8 L95.0 158.7 L100.0 157.8 L105.0 156.8 L110.0 156.5 L115.0 156.8 L120.0 157.4 L125.0 157.4 L130.0 156.6 L135.0 155.2 L140.0 154.0 L145.0 153.7 L150.0 154.4 L155.0 155.5 L160.0 156.3 L165.0 156.2 L170.0 155.4 L175.0 154.5 L180.0 154.2 L185.0 154.6 L190.0 155.2 L195.0 155.4 L200.0 154.6 L205.0 153.1 L210.0 151.5 L215.0 150.8 L220.0 151.1 L225.0 152.0 L230.0 152.8 L235.0 153.0 L240.0 152.4 L245.0 151.9 L250.0 152.1 L255.0 153.1 L260.0 154.5 L265.0 155.5 L270.0 155.6 L275.0 154.7 L280.0 153.5 L285.0 152.9 L290.0 153.2 L295.0 154.1 L300.0 154.9 L305.0 155.1 L310.0 154.5 L315.0 153.9 L320.0 154.0 L325.0 155.0 L330.0 156.6 L335.0 158.1 L340.0 158.6 L345.0 158.1 L350.0 157.2 L355.0 156.6 L360.0 156.7 L365.0 157.3 L370.0 157.7 L375.0 157.4 L380.0 156.3 L385.0 154.9 L390.0 154.1 L395.0 154.3 L400.0 155.3 L405.0 156.4 L410.0 156.8 L415.0 156.3 L420.0 155.4 L425.0 154.7" fill="none" stroke="#e6d3ae" stroke-width="1.5" stroke-opacity="0.55" stroke-dasharray="69 4" stroke-dashoffset="26"/><path d="M-5.0 162.7 L0.0 163.9 L5.0 164.4 L10.0 163.6 L15.0 162.0 L20.0 160.8 L25.0 160.8 L30.0 161.4 L35.0 161.6 L40.0 160.7 L45.0 159.4 L50.0 159.0 L55.0 159.9 L60.0 161.4 L65.0 162.3 L70.0 162.0 L75.0 161.1 L80.0 160.8 L85.0 161.6 L90.0 162.5 L95.0 162.6 L100.0 161.4 L105.0 159.9 L110.0 159.3 L115.0 160.0 L120.0 161.0 L125.0 161.5 L130.0 160.9 L135.0 160.3 L140.0 160.7 L145.0 162.2 L150.0 163.8 L155.0 164.4 L160.0 163.7 L165.0 162.7 L170.0 162.6 L175.0 163.4 L180.0 164.2 L185.0 163.9 L190.0 162.7 L195.0 161.7 L200.0 161.8 L205.0 163.1 L210.0 164.5 L215.0 164.9 L220.0 164.4 L225.0 164.1 L230.0 164.7 L235.0 166.2 L240.0 167.2 L245.0 167.0 L250.0 165.7 L255.0 164.5 L260.0 164.4 L265.0 165.2 L270.0 165.6 L275.0 165.1 L280.0 164.0 L285.0 163.3 L290.0 164.0 L295.0 165.5 L300.0 166.6 L305.0 166.5 L310.0 165.6 L315.0 165.0 L320.0 165.4 L325.0 166.3 L330.0 166.5 L335.0 165.4 L340.0 163.7 L345.0 162.5 L350.0 162.7 L355.0 163.5 L360.0 163.9 L365.0 163.2 L370.0 162.2 L375.0 162.0 L380.0 163.0 L385.0 164.3 L390.0 164.9 L395.0 164.1 L400.0 162.7 L405.0 162.0 L410.0 162.3 L415.0 162.8 L420.0 162.5 L425.0 161.2" fill="none" stroke="#8e7658" stroke-width="2.2" stroke-opacity="0.33" stroke-dasharray="79 4" stroke-dashoffset="0"/><path d="M-5.0 161.0 L0.0 162.2 L5.0 162.7 L10.0 161.9 L15.0 160.3 L20.0 159.1 L25.0 159.1 L30.0 159.7 L35.0 159.9 L40.0 159.0 L45.0 157.7 L50.0 157.3 L55.0 158.2 L60.0 159.7 L65.0 160.6 L70.0 160.3 L75.0 159.4 L80.0 159.1 L85.0 159.9 L90.0 160.8 L95.0 160.9 L100.0 159.7 L105.0 158.2 L110.0 157.6 L115.0 158.3 L120.0 159.3 L125.0 159.8 L130.0 159.2 L135.0 158.6 L140.0 159.0 L145.0 160.5 L150.0 162.1 L155.0 162.7 L160.0 162.0 L165.0 161.0 L170.0 160.9 L175.0 161.7 L180.0 162.5 L185.0 162.2 L190.0 161.0 L195.0 160.0 L200.0 160.1 L205.0 161.4 L210.0 162.8 L215.0 163.2 L220.0 162.7 L225.0 162.4 L230.0 163.0 L235.0 164.5 L240.0 165.5 L245.0 165.3 L250.0 164.0 L255.0 162.8 L260.0 162.7 L265.0 163.5 L270.0 163.9 L275.0 163.4 L280.0 162.3 L285.0 161.6 L290.0 162.3 L295.0 163.8 L300.0 164.9 L305.0 164.8 L310.0 163.9 L315.0 163.3 L320.0 163.7 L325.0 164.6 L330.0 164.8 L335.0 163.7 L340.0 162.0 L345.0 160.8 L350.0 161.0 L355.0 161.8 L360.0 162.2 L365.0 161.5 L370.0 160.5 L375.0 160.3 L380.0 161.3 L385.0 162.6 L390.0 163.2 L395.0 162.4 L400.0 161.0 L405.0 160.3 L410.0 160.6 L415.0 161.1 L420.0 160.8 L425.0 159.5" fill="none" stroke="#e6d3ae" stroke-width="1.5" stroke-opacity="0.55" stroke-dasharray="57 3" stroke-dashoffset="20"/><path d="M-5.0 170.6 L0.0 169.3 L5.0 167.8 L10.0 167.5 L15.0 168.2 L20.0 168.5 L25.0 167.4 L30.0 165.7 L35.0 165.0 L40.0 165.8 L45.0 166.9 L50.0 166.9 L55.0 166.0 L60.0 165.5 L65.0 166.4 L70.0 168.1 L75.0 169.2 L80.0 168.9 L85.0 168.2 L90.0 168.6 L95.0 170.0 L100.0 171.3 L105.0 171.0 L110.0 169.8 L115.0 169.0 L120.0 169.6 L125.0 170.5 L130.0 170.4 L135.0 169.1 L140.0 167.8 L145.0 167.8 L150.0 169.0 L155.0 169.7 L160.0 169.2 L165.0 168.2 L170.0 168.3 L175.0 169.7 L180.0 171.4 L185.0 171.9 L190.0 171.2 L195.0 170.9 L200.0 171.9 L205.0 173.6 L210.0 174.3 L215.0 173.5 L220.0 172.3 L225.0 172.1 L230.0 173.0 L235.0 173.5 L240.0 172.7 L245.0 170.9 L250.0 169.9 L255.0 170.2 L260.0 171.1 L265.0 170.9 L270.0 169.7 L275.0 168.6 L280.0 169.0 L285.0 170.4 L290.0 171.3 L295.0 170.9 L300.0 170.0 L305.0 170.0 L310.0 171.3 L315.0 172.6 L320.0 172.5 L325.0 171.3 L330.0 170.3 L335.0 170.6 L340.0 171.5 L345.0 171.4 L350.0 169.9 L355.0 168.1 L360.0 167.5 L365.0 168.1 L370.0 168.5 L375.0 167.6 L380.0 166.0 L385.0 165.4 L390.0 166.2 L395.0 167.5 L400.0 167.8 L405.0 166.9 L410.0 166.4 L415.0 167.1 L420.0 168.8 L425.0 169.8" fill="none" stroke="#8e7658" stroke-width="2.2" stroke-opacity="0.33" stroke-dasharray="75 7" stroke-dashoffset="39"/><path d="M-5.0 168.9 L0.0 167.6 L5.0 166.1 L10.0 165.8 L15.0 166.5 L20.0 166.8 L25.0 165.7 L30.0 164.0 L35.0 163.3 L40.0 164.1 L45.0 165.2 L50.0 165.2 L55.0 164.3 L60.0 163.8 L65.0 164.7 L70.0 166.4 L75.0 167.5 L80.0 167.2 L85.0 166.5 L90.0 166.9 L95.0 168.3 L100.0 169.6 L105.0 169.3 L110.0 168.1 L115.0 167.3 L120.0 167.9 L125.0 168.8 L130.0 168.7 L135.0 167.4 L140.0 166.1 L145.0 166.1 L150.0 167.3 L155.0 168.0 L160.0 167.5 L165.0 166.5 L170.0 166.6 L175.0 168.0 L180.0 169.7 L185.0 170.2 L190.0 169.5 L195.0 169.2 L200.0 170.2 L205.0 171.9 L210.0 172.6 L215.0 171.8 L220.0 170.6 L225.0 170.4 L230.0 171.3 L235.0 171.8 L240.0 171.0 L245.0 169.2 L250.0 168.2 L255.0 168.5 L260.0 169.4 L265.0 169.2 L270.0 168.0 L275.0 166.9 L280.0 167.3 L285.0 168.7 L290.0 169.6 L295.0 169.2 L300.0 168.3 L305.0 168.3 L310.0 169.6 L315.0 170.9 L320.0 170.8 L325.0 169.6 L330.0 168.6 L335.0 168.9 L340.0 169.8 L345.0 169.7 L350.0 168.2 L355.0 166.4 L360.0 165.8 L365.0 166.4 L370.0 166.8 L375.0 165.9 L380.0 164.3 L385.0 163.7 L390.0 164.5 L395.0 165.8 L400.0 166.1 L405.0 165.2 L410.0 164.7 L415.0 165.4 L420.0 167.1 L425.0 168.1" fill="none" stroke="#e6d3ae" stroke-width="1.5" stroke-opacity="0.55" stroke-dasharray="44 5" stroke-dashoffset="4"/><path d="M-5.0 175.6 L0.0 175.7 L5.0 175.0 L10.0 174.0 L15.0 173.1 L20.0 173.0 L25.0 173.8 L30.0 175.0 L35.0 175.8 L40.0 175.8 L45.0 174.9 L50.0 173.9 L55.0 173.3 L60.0 173.5 L65.0 174.2 L70.0 174.8 L75.0 174.6 L80.0 173.5 L85.0 172.1 L90.0 171.1 L95.0 171.0 L100.0 171.7 L105.0 172.7 L110.0 173.3 L115.0 173.2 L120.0 172.5 L125.0 172.1 L130.0 172.4 L135.0 173.5 L140.0 175.0 L145.0 176.2 L150.0 176.6 L155.0 176.1 L160.0 175.4 L165.0 175.0 L170.0 175.4 L175.0 176.4 L180.0 177.2 L185.0 177.4 L190.0 176.7 L195.0 175.6 L200.0 174.8 L205.0 174.9 L210.0 175.8 L215.0 177.1 L220.0 177.9 L225.0 178.0 L230.0 177.5 L235.0 177.1 L240.0 177.3 L245.0 178.3 L250.0 179.7 L255.0 180.8 L260.0 181.0 L265.0 180.4 L270.0 179.3 L275.0 178.6 L280.0 178.6 L285.0 179.2 L290.0 179.7 L295.0 179.6 L300.0 178.7 L305.0 177.3 L310.0 176.1 L315.0 175.9 L320.0 176.4 L325.0 177.4 L330.0 178.0 L335.0 177.8 L340.0 177.0 L345.0 176.2 L350.0 175.9 L355.0 176.5 L360.0 177.5 L365.0 178.2 L370.0 178.1 L375.0 177.1 L380.0 175.7 L385.0 174.6 L390.0 174.3 L395.0 174.6 L400.0 175.0 L405.0 174.9 L410.0 173.9 L415.0 172.5 L420.0 171.4 L425.0 171.1" fill="none" stroke="#8e7658" stroke-width="2.2" stroke-opacity="0.33" stroke-dasharray="81 5" stroke-dashoffset="5"/><path d="M-5.0 173.9 L0.0 174.0 L5.0 173.3 L10.0 172.3 L15.0 171.4 L20.0 171.3 L25.0 172.1 L30.0 173.3 L35.0 174.1 L40.0 174.1 L45.0 173.2 L50.0 172.2 L55.0 171.6 L60.0 171.8 L65.0 172.5 L70.0 173.1 L75.0 172.9 L80.0 171.8 L85.0 170.4 L90.0 169.4 L95.0 169.3 L100.0 170.0 L105.0 171.0 L110.0 171.6 L115.0 171.5 L120.0 170.8 L125.0 170.4 L130.0 170.7 L135.0 171.8 L140.0 173.3 L145.0 174.5 L150.0 174.9 L155.0 174.4 L160.0 173.7 L165.0 173.3 L170.0 173.7 L175.0 174.7 L180.0 175.5 L185.0 175.7 L190.0 175.0 L195.0 173.9 L200.0 173.1 L205.0 173.2 L210.0 174.1 L215.0 175.4 L220.0 176.2 L225.0 176.3 L230.0 175.8 L235.0 175.4 L240.0 175.6 L245.0 176.6 L250.0 178.0 L255.0 179.1 L260.0 179.3 L265.0 178.7 L270.0 177.6 L275.0 176.9 L280.0 176.9 L285.0 177.5 L290.0 178.0 L295.0 177.9 L300.0 177.0 L305.0 175.6 L310.0 174.4 L315.0 174.2 L320.0 174.7 L325.0 175.7 L330.0 176.3 L335.0 176.1 L340.0 175.3 L345.0 174.5 L350.0 174.2 L355.0 174.8 L360.0 175.8 L365.0 176.5 L370.0 176.4 L375.0 175.4 L380.0 174.0 L385.0 172.9 L390.0 172.6 L395.0 172.9 L400.0 173.3 L405.0 173.2 L410.0 172.2 L415.0 170.8 L420.0 169.7 L425.0 169.4" fill="none" stroke="#e6d3ae" stroke-width="1.5" stroke-opacity="0.55" stroke-dasharray="66 8" stroke-dashoffset="2"/><path d="M-5.0 183.7 L0.0 184.7 L5.0 184.8 L10.0 183.5 L15.0 182.2 L20.0 182.4 L25.0 183.8 L30.0 185.0 L35.0 184.6 L40.0 183.5 L45.0 183.1 L50.0 184.1 L55.0 185.4 L60.0 185.5 L65.0 184.0 L70.0 182.5 L75.0 182.3 L80.0 183.1 L85.0 183.3 L90.0 182.1 L95.0 180.2 L100.0 179.3 L105.0 180.0 L110.0 181.1 L115.0 181.1 L120.0 179.9 L125.0 179.0 L130.0 179.5 L135.0 181.0 L140.0 181.8 L145.0 181.0 L150.0 179.5 L155.0 179.0 L160.0 179.8 L165.0 180.6 L170.0 180.1 L175.0 178.3 L180.0 176.9 L185.0 177.1 L190.0 178.2 L195.0 178.8 L200.0 177.9 L205.0 176.8 L210.0 176.8 L215.0 178.4 L220.0 180.0 L225.0 180.2 L230.0 179.2 L235.0 178.7 L240.0 179.5 L245.0 181.1 L250.0 181.6 L255.0 180.5 L260.0 179.1 L265.0 178.9 L270.0 180.0 L275.0 181.0 L280.0 180.7 L285.0 179.4 L290.0 178.9 L295.0 180.1 L300.0 181.9 L305.0 182.9 L310.0 182.4 L315.0 181.7 L320.0 182.3 L325.0 184.0 L330.0 185.3 L335.0 185.0 L340.0 183.7 L345.0 183.0 L350.0 183.6 L355.0 184.8 L360.0 184.8 L365.0 183.5 L370.0 182.2 L375.0 182.3 L380.0 183.7 L385.0 184.8 L390.0 184.4 L395.0 183.4 L400.0 183.1 L405.0 184.4 L410.0 186.0 L415.0 186.2 L420.0 185.1 L425.0 183.8" fill="none" stroke="#8e7658" stroke-width="2.2" stroke-opacity="0.33" stroke-dasharray="43 4" stroke-dashoffset="60"/><path d="M-5.0 182.0 L0.0 183.0 L5.0 183.1 L10.0 181.8 L15.0 180.5 L20.0 180.7 L25.0 182.1 L30.0 183.3 L35.0 182.9 L40.0 181.8 L45.0 181.4 L50.0 182.4 L55.0 183.7 L60.0 183.8 L65.0 182.3 L70.0 180.8 L75.0 180.6 L80.0 181.4 L85.0 181.6 L90.0 180.4 L95.0 178.5 L100.0 177.6 L105.0 178.3 L110.0 179.4 L115.0 179.4 L120.0 178.2 L125.0 177.3 L130.0 177.8 L135.0 179.3 L140.0 180.1 L145.0 179.3 L150.0 177.8 L155.0 177.3 L160.0 178.1 L165.0 178.9 L170.0 178.4 L175.0 176.6 L180.0 175.2 L185.0 175.4 L190.0 176.5 L195.0 177.1 L200.0 176.2 L205.0 175.1 L210.0 175.1 L215.0 176.7 L220.0 178.3 L225.0 178.5 L230.0 177.5 L235.0 177.0 L240.0 177.8 L245.0 179.4 L250.0 179.9 L255.0 178.8 L260.0 177.4 L265.0 177.2 L270.0 178.3 L275.0 179.3 L280.0 179.0 L285.0 177.7 L290.0 177.2 L295.0 178.4 L300.0 180.2 L305.0 181.2 L310.0 180.7 L315.0 180.0 L320.0 180.6 L325.0 182.3 L330.0 183.6 L335.0 183.3 L340.0 182.0 L345.0 181.3 L350.0 181.9 L355.0 183.1 L360.0 183.1 L365.0 181.8 L370.0 180.5 L375.0 180.6 L380.0 182.0 L385.0 183.1 L390.0 182.7 L395.0 181.7 L400.0 181.4 L405.0 182.7 L410.0 184.3 L415.0 184.5 L420.0 183.4 L425.0 182.1" fill="none" stroke="#e6d3ae" stroke-width="1.5" stroke-opacity="0.55" stroke-dasharray="57 8" stroke-dashoffset="50"/><path d="M-5.0 184.5 L0.0 185.8 L5.0 186.4 L10.0 185.8 L15.0 185.0 L20.0 185.2 L25.0 186.3 L30.0 187.2 L35.0 187.0 L40.0 185.9 L45.0 185.1 L50.0 185.4 L55.0 186.3 L60.0 186.5 L65.0 185.6 L70.0 184.4 L75.0 184.1 L80.0 185.0 L85.0 186.1 L90.0 186.2 L95.0 185.5 L100.0 185.1 L105.0 185.9 L110.0 187.4 L115.0 188.6 L120.0 188.6 L125.0 188.0 L130.0 188.1 L135.0 189.3 L140.0 190.6 L145.0 190.9 L150.0 190.1 L155.0 189.2 L160.0 189.2 L165.0 190.0 L170.0 190.5 L175.0 189.8 L180.0 188.4 L185.0 187.6 L190.0 188.0 L195.0 188.8 L200.0 189.0 L205.0 188.1 L210.0 187.1 L215.0 187.2 L220.0 188.3 L225.0 189.3 L230.0 189.2 L235.0 188.3 L240.0 187.8 L245.0 188.3 L250.0 189.4 L255.0 189.7 L260.0 188.8 L265.0 187.4 L270.0 186.8 L275.0 187.3 L280.0 187.7 L285.0 187.1 L290.0 185.5 L295.0 184.3 L300.0 184.2 L305.0 184.9 L310.0 185.2 L315.0 184.5 L320.0 183.4 L325.0 183.1 L330.0 184.1 L335.0 185.4 L340.0 185.8 L345.0 185.2 L350.0 184.7 L355.0 185.2 L360.0 186.6 L365.0 187.5 L370.0 187.3 L375.0 186.3 L380.0 185.8 L385.0 186.4 L390.0 187.4 L395.0 187.5 L400.0 186.5 L405.0 185.4 L410.0 185.3 L415.0 186.3 L420.0 187.2 L425.0 187.0" fill="none" stroke="#8e7658" stroke-width="2.2" stroke-opacity="0.33" stroke-dasharray="79 5" stroke-dashoffset="50"/><path d="M-5.0 182.8 L0.0 184.1 L5.0 184.7 L10.0 184.1 L15.0 183.3 L20.0 183.5 L25.0 184.6 L30.0 185.5 L35.0 185.3 L40.0 184.2 L45.0 183.4 L50.0 183.7 L55.0 184.6 L60.0 184.8 L65.0 183.9 L70.0 182.7 L75.0 182.4 L80.0 183.3 L85.0 184.4 L90.0 184.5 L95.0 183.8 L100.0 183.4 L105.0 184.2 L110.0 185.7 L115.0 186.9 L120.0 186.9 L125.0 186.3 L130.0 186.4 L135.0 187.6 L140.0 188.9 L145.0 189.2 L150.0 188.4 L155.0 187.5 L160.0 187.5 L165.0 188.3 L170.0 188.8 L175.0 188.1 L180.0 186.7 L185.0 185.9 L190.0 186.3 L195.0 187.1 L200.0 187.3 L205.0 186.4 L210.0 185.4 L215.0 185.5 L220.0 186.6 L225.0 187.6 L230.0 187.5 L235.0 186.6 L240.0 186.1 L245.0 186.6 L250.0 187.7 L255.0 188.0 L260.0 187.1 L265.0 185.7 L270.0 185.1 L275.0 185.6 L280.0 186.0 L285.0 185.4 L290.0 183.8 L295.0 182.6 L300.0 182.5 L305.0 183.2 L310.0 183.5 L315.0 182.8 L320.0 181.7 L325.0 181.4 L330.0 182.4 L335.0 183.7 L340.0 184.1 L345.0 183.5 L350.0 183.0 L355.0 183.5 L360.0 184.9 L365.0 185.8 L370.0 185.6 L375.0 184.6 L380.0 184.1 L385.0 184.7 L390.0 185.7 L395.0 185.8 L400.0 184.8 L405.0 183.7 L410.0 183.6 L415.0 184.6 L420.0 185.5 L425.0 185.3" fill="none" stroke="#e6d3ae" stroke-width="1.5" stroke-opacity="0.55" stroke-dasharray="54 6" stroke-dashoffset="8"/><path d="M-5.0 194.9 L0.0 194.7 L5.0 192.9 L10.0 191.6 L15.0 191.9 L20.0 193.0 L25.0 193.0 L30.0 191.4 L35.0 189.7 L40.0 189.8 L45.0 191.2 L50.0 192.2 L55.0 191.6 L60.0 190.3 L65.0 190.3 L70.0 192.0 L75.0 193.7 L80.0 193.8 L85.0 192.5 L90.0 191.8 L95.0 192.8 L100.0 194.2 L105.0 194.3 L110.0 192.8 L115.0 191.2 L120.0 191.3 L125.0 192.5 L130.0 193.1 L135.0 192.0 L140.0 190.5 L145.0 190.4 L150.0 192.0 L155.0 193.6 L160.0 193.6 L165.0 192.6 L170.0 192.3 L175.0 193.8 L180.0 195.7 L185.0 196.1 L190.0 194.9 L195.0 193.8 L200.0 194.3 L205.0 195.7 L210.0 196.1 L215.0 194.7 L220.0 193.0 L225.0 192.7 L230.0 194.0 L235.0 195.0 L240.0 194.5 L245.0 193.1 L250.0 192.8 L255.0 194.3 L260.0 196.2 L265.0 196.6 L270.0 195.6 L275.0 194.9 L280.0 195.8 L285.0 197.6 L290.0 198.1 L295.0 196.9 L300.0 195.3 L305.0 195.1 L310.0 196.2 L315.0 196.8 L320.0 195.7 L325.0 193.8 L330.0 193.2 L335.0 194.3 L340.0 195.6 L345.0 195.5 L350.0 194.2 L355.0 193.5 L360.0 194.7 L365.0 196.5 L370.0 197.1 L375.0 196.1 L380.0 194.9 L385.0 195.1 L390.0 196.5 L395.0 197.1 L400.0 195.8 L405.0 193.9 L410.0 193.1 L415.0 193.9 L420.0 194.7 L425.0 194.0" fill="none" stroke="#8e7658" stroke-width="2.2" stroke-opacity="0.33" stroke-dasharray="44 3" stroke-dashoffset="2"/><path d="M-5.0 193.2 L0.0 193.0 L5.0 191.2 L10.0 189.9 L15.0 190.2 L20.0 191.3 L25.0 191.3 L30.0 189.7 L35.0 188.0 L40.0 188.1 L45.0 189.5 L50.0 190.5 L55.0 189.9 L60.0 188.6 L65.0 188.6 L70.0 190.3 L75.0 192.0 L80.0 192.1 L85.0 190.8 L90.0 190.1 L95.0 191.1 L100.0 192.5 L105.0 192.6 L110.0 191.1 L115.0 189.5 L120.0 189.6 L125.0 190.8 L130.0 191.4 L135.0 190.3 L140.0 188.8 L145.0 188.7 L150.0 190.3 L155.0 191.9 L160.0 191.9 L165.0 190.9 L170.0 190.6 L175.0 192.1 L180.0 194.0 L185.0 194.4 L190.0 193.2 L195.0 192.1 L200.0 192.6 L205.0 194.0 L210.0 194.4 L215.0 193.0 L220.0 191.3 L225.0 191.0 L230.0 192.3 L235.0 193.3 L240.0 192.8 L245.0 191.4 L250.0 191.1 L255.0 192.6 L260.0 194.5 L265.0 194.9 L270.0 193.9 L275.0 193.2 L280.0 194.1 L285.0 195.9 L290.0 196.4 L295.0 195.2 L300.0 193.6 L305.0 193.4 L310.0 194.5 L315.0 195.1 L320.0 194.0 L325.0 192.1 L330.0 191.5 L335.0 192.6 L340.0 193.9 L345.0 193.8 L350.0 192.5 L355.0 191.8 L360.0 193.0 L365.0 194.8 L370.0 195.4 L375.0 194.4 L380.0 193.2 L385.0 193.4 L390.0 194.8 L395.0 195.4 L400.0 194.1 L405.0 192.2 L410.0 191.4 L415.0 192.2 L420.0 193.0 L425.0 192.3" fill="none" stroke="#e6d3ae" stroke-width="1.5" stroke-opacity="0.55" stroke-dasharray="32 4" stroke-dashoffset="12"/><path d="M-5.0 197.6 L0.0 197.0 L5.0 196.4 L10.0 196.7 L15.0 198.0 L20.0 199.7 L25.0 200.6 L30.0 200.2 L35.0 198.8 L40.0 197.6 L45.0 197.2 L50.0 197.6 L55.0 198.2 L60.0 197.9 L65.0 196.7 L70.0 195.2 L75.0 194.5 L80.0 195.1 L85.0 196.7 L90.0 198.2 L95.0 198.9 L100.0 198.6 L105.0 198.2 L110.0 198.6 L115.0 199.9 L120.0 201.5 L125.0 202.4 L130.0 202.0 L135.0 200.6 L140.0 199.3 L145.0 198.8 L150.0 199.4 L155.0 200.1 L160.0 200.2 L165.0 199.3 L170.0 198.1 L175.0 197.6 L180.0 198.5 L185.0 200.2 L190.0 201.9 L195.0 202.7 L200.0 202.4 L205.0 201.9 L210.0 201.9 L215.0 202.8 L220.0 204.0 L225.0 204.6 L230.0 203.8 L235.0 202.1 L240.0 200.5 L245.0 199.7 L250.0 200.1 L255.0 200.8 L260.0 200.9 L265.0 200.2 L270.0 199.0 L275.0 198.5 L280.0 199.2 L285.0 200.8 L290.0 202.4 L295.0 202.9 L300.0 202.3 L305.0 201.3 L310.0 200.8 L315.0 201.1 L320.0 201.9 L325.0 202.1 L330.0 201.1 L335.0 199.2 L340.0 197.3 L345.0 196.4 L350.0 196.8 L355.0 197.6 L360.0 198.0 L365.0 197.5 L370.0 196.6 L375.0 196.1 L380.0 196.8 L385.0 198.5 L390.0 200.0 L395.0 200.5 L400.0 199.9 L405.0 198.6 L410.0 197.9 L415.0 198.0 L420.0 198.7 L425.0 199.0" fill="none" stroke="#8e7658" stroke-width="2.2" stroke-opacity="0.33" stroke-dasharray="69 3" stroke-dashoffset="12"/><path d="M-5.0 195.9 L0.0 195.3 L5.0 194.7 L10.0 195.0 L15.0 196.3 L20.0 198.0 L25.0 198.9 L30.0 198.5 L35.0 197.1 L40.0 195.9 L45.0 195.5 L50.0 195.9 L55.0 196.5 L60.0 196.2 L65.0 195.0 L70.0 193.5 L75.0 192.8 L80.0 193.4 L85.0 195.0 L90.0 196.5 L95.0 197.2 L100.0 196.9 L105.0 196.5 L110.0 196.9 L115.0 198.2 L120.0 199.8 L125.0 200.7 L130.0 200.3 L135.0 198.9 L140.0 197.6 L145.0 197.1 L150.0 197.7 L155.0 198.4 L160.0 198.5 L165.0 197.6 L170.0 196.4 L175.0 195.9 L180.0 196.8 L185.0 198.5 L190.0 200.2 L195.0 201.0 L200.0 200.7 L205.0 200.2 L210.0 200.2 L215.0 201.1 L220.0 202.3 L225.0 202.9 L230.0 202.1 L235.0 200.4 L240.0 198.8 L245.0 198.0 L250.0 198.4 L255.0 199.1 L260.0 199.2 L265.0 198.5 L270.0 197.3 L275.0 196.8 L280.0 197.5 L285.0 199.1 L290.0 200.7 L295.0 201.2 L300.0 200.6 L305.0 199.6 L310.0 199.1 L315.0 199.4 L320.0 200.2 L325.0 200.4 L330.0 199.4 L335.0 197.5 L340.0 195.6 L345.0 194.7 L350.0 195.1 L355.0 195.9 L360.0 196.3 L365.0 195.8 L370.0 194.9 L375.0 194.4 L380.0 195.1 L385.0 196.8 L390.0 198.3 L395.0 198.8 L400.0 198.2 L405.0 196.9 L410.0 196.2 L415.0 196.3 L420.0 197.0 L425.0 197.3" fill="none" stroke="#e6d3ae" stroke-width="1.5" stroke-opacity="0.55" stroke-dasharray="39 8" stroke-dashoffset="10"/><path d="M-5.0 202.8 L0.0 203.2 L5.0 204.5 L10.0 205.7 L15.0 205.7 L20.0 204.9 L25.0 204.2 L30.0 204.4 L35.0 205.6 L40.0 206.7 L45.0 206.6 L50.0 205.4 L55.0 204.0 L60.0 203.5 L65.0 204.1 L70.0 204.7 L75.0 204.4 L80.0 203.1 L85.0 201.5 L90.0 201.0 L95.0 201.7 L100.0 202.8 L105.0 203.3 L110.0 202.8 L115.0 201.9 L120.0 201.9 L125.0 203.2 L130.0 205.0 L135.0 206.2 L140.0 206.2 L145.0 205.5 L150.0 205.3 L155.0 206.2 L160.0 207.6 L165.0 208.5 L170.0 208.0 L175.0 206.6 L180.0 205.6 L185.0 205.6 L190.0 206.5 L195.0 207.0 L200.0 206.4 L205.0 205.0 L210.0 203.8 L215.0 203.9 L220.0 205.0 L225.0 206.1 L230.0 206.3 L235.0 205.4 L240.0 204.7 L245.0 205.1 L250.0 206.4 L255.0 207.8 L260.0 208.2 L265.0 207.3 L270.0 206.2 L275.0 205.9 L280.0 206.6 L285.0 207.4 L290.0 207.2 L295.0 205.8 L300.0 204.0 L305.0 203.0 L310.0 203.2 L315.0 203.9 L320.0 203.9 L325.0 202.8 L330.0 201.4 L335.0 200.7 L340.0 201.4 L345.0 202.8 L350.0 203.7 L355.0 203.6 L360.0 202.8 L365.0 202.5 L370.0 203.5 L375.0 205.1 L380.0 206.3 L385.0 206.2 L390.0 205.2 L395.0 204.5 L400.0 204.7 L405.0 205.7 L410.0 206.5 L415.0 206.1 L420.0 204.7 L425.0 203.4" fill="none" stroke="#8e7658" stroke-width="2.2" stroke-opacity="0.33" stroke-dasharray="42 5" stroke-dashoffset="59"/><path d="M-5.0 201.1 L0.0 201.5 L5.0 202.8 L10.0 204.0 L15.0 204.0 L20.0 203.2 L25.0 202.5 L30.0 202.7 L35.0 203.9 L40.0 205.0 L45.0 204.9 L50.0 203.7 L55.0 202.3 L60.0 201.8 L65.0 202.4 L70.0 203.0 L75.0 202.7 L80.0 201.4 L85.0 199.8 L90.0 199.3 L95.0 200.0 L100.0 201.1 L105.0 201.6 L110.0 201.1 L115.0 200.2 L120.0 200.2 L125.0 201.5 L130.0 203.3 L135.0 204.5 L140.0 204.5 L145.0 203.8 L150.0 203.6 L155.0 204.5 L160.0 205.9 L165.0 206.8 L170.0 206.3 L175.0 204.9 L180.0 203.9 L185.0 203.9 L190.0 204.8 L195.0 205.3 L200.0 204.7 L205.0 203.3 L210.0 202.1 L215.0 202.2 L220.0 203.3 L225.0 204.4 L230.0 204.6 L235.0 203.7 L240.0 203.0 L245.0 203.4 L250.0 204.7 L255.0 206.1 L260.0 206.5 L265.0 205.6 L270.0 204.5 L275.0 204.2 L280.0 204.9 L285.0 205.7 L290.0 205.5 L295.0 204.1 L300.0 202.3 L305.0 201.3 L310.0 201.5 L315.0 202.2 L320.0 202.2 L325.0 201.1 L330.0 199.7 L335.0 199.0 L340.0 199.7 L345.0 201.1 L350.0 202.0 L355.0 201.9 L360.0 201.1 L365.0 200.8 L370.0 201.8 L375.0 203.4 L380.0 204.6 L385.0 204.5 L390.0 203.5 L395.0 202.8 L400.0 203.0 L405.0 204.0 L410.0 204.8 L415.0 204.4 L420.0 203.0 L425.0 201.7" fill="none" stroke="#e6d3ae" stroke-width="1.5" stroke-opacity="0.55" stroke-dasharray="78 5" stroke-dashoffset="20"/><path d="M-5.0 211.5 L0.0 210.0 L5.0 209.8 L10.0 210.5 L15.0 210.9 L20.0 210.2 L25.0 209.2 L30.0 209.1 L35.0 210.1 L40.0 211.2 L45.0 211.2 L50.0 210.4 L55.0 209.9 L60.0 210.5 L65.0 211.5 L70.0 211.6 L75.0 210.5 L80.0 209.3 L85.0 209.1 L90.0 209.8 L95.0 210.0 L100.0 209.0 L105.0 207.6 L110.0 207.2 L115.0 208.0 L120.0 209.0 L125.0 208.9 L130.0 208.2 L135.0 208.1 L140.0 209.3 L145.0 211.0 L150.0 212.0 L155.0 211.8 L160.0 211.7 L165.0 212.6 L170.0 214.2 L175.0 215.3 L180.0 215.1 L185.0 214.3 L190.0 214.2 L195.0 215.1 L200.0 215.8 L205.0 215.4 L210.0 214.0 L215.0 213.1 L220.0 213.4 L225.0 214.2 L230.0 214.2 L235.0 213.2 L240.0 212.3 L245.0 212.6 L250.0 213.8 L255.0 214.6 L260.0 214.3 L265.0 213.5 L270.0 213.5 L275.0 214.7 L280.0 215.7 L285.0 215.6 L290.0 214.4 L295.0 213.6 L300.0 213.9 L305.0 214.5 L310.0 214.1 L315.0 212.6 L320.0 211.0 L325.0 210.4 L330.0 210.7 L335.0 210.6 L340.0 209.4 L345.0 207.9 L350.0 207.3 L355.0 208.0 L360.0 208.8 L365.0 208.6 L370.0 207.8 L375.0 207.5 L380.0 208.4 L385.0 209.9 L390.0 210.6 L395.0 210.1 L400.0 209.5 L405.0 210.0 L410.0 211.3 L415.0 212.0 L420.0 211.4 L425.0 210.3" fill="none" stroke="#8e7658" stroke-width="2.2" stroke-opacity="0.33" stroke-dasharray="50 3" stroke-dashoffset="12"/><path d="M-5.0 209.8 L0.0 208.3 L5.0 208.1 L10.0 208.8 L15.0 209.2 L20.0 208.5 L25.0 207.5 L30.0 207.4 L35.0 208.4 L40.0 209.5 L45.0 209.5 L50.0 208.7 L55.0 208.2 L60.0 208.8 L65.0 209.8 L70.0 209.9 L75.0 208.8 L80.0 207.6 L85.0 207.4 L90.0 208.1 L95.0 208.3 L100.0 207.3 L105.0 205.9 L110.0 205.5 L115.0 206.3 L120.0 207.3 L125.0 207.2 L130.0 206.5 L135.0 206.4 L140.0 207.6 L145.0 209.3 L150.0 210.3 L155.0 210.1 L160.0 210.0 L165.0 210.9 L170.0 212.5 L175.0 213.6 L180.0 213.4 L185.0 212.6 L190.0 212.5 L195.0 213.4 L200.0 214.1 L205.0 213.7 L210.0 212.3 L215.0 211.4 L220.0 211.7 L225.0 212.5 L230.0 212.5 L235.0 211.5 L240.0 210.6 L245.0 210.9 L250.0 212.1 L255.0 212.9 L260.0 212.6 L265.0 211.8 L270.0 211.8 L275.0 213.0 L280.0 214.0 L285.0 213.9 L290.0 212.7 L295.0 211.9 L300.0 212.2 L305.0 212.8 L310.0 212.4 L315.0 210.9 L320.0 209.3 L325.0 208.7 L330.0 209.0 L335.0 208.9 L340.0 207.7 L345.0 206.2 L350.0 205.6 L355.0 206.3 L360.0 207.1 L365.0 206.9 L370.0 206.1 L375.0 205.8 L380.0 206.7 L385.0 208.2 L390.0 208.9 L395.0 208.4 L400.0 207.8 L405.0 208.3 L410.0 209.6 L415.0 210.3 L420.0 209.7 L425.0 208.6" fill="none" stroke="#e6d3ae" stroke-width="1.5" stroke-opacity="0.55" stroke-dasharray="75 3" stroke-dashoffset="36"/><path d="M-5.0 217.9 L0.0 218.6 L5.0 218.9 L10.0 218.4 L15.0 217.3 L20.0 216.3 L25.0 216.3 L30.0 217.0 L35.0 218.0 L40.0 218.5 L45.0 218.4 L50.0 218.1 L55.0 218.3 L60.0 219.3 L65.0 220.9 L70.0 222.2 L75.0 222.6 L80.0 222.2 L85.0 221.5 L90.0 221.3 L95.0 221.7 L100.0 222.2 L105.0 222.1 L110.0 221.2 L115.0 219.7 L120.0 218.5 L125.0 218.0 L130.0 218.4 L135.0 218.9 L140.0 219.0 L145.0 218.4 L150.0 217.7 L155.0 217.5 L160.0 218.2 L165.0 219.3 L170.0 220.2 L175.0 220.2 L180.0 219.5 L185.0 218.5 L190.0 218.1 L195.0 218.2 L200.0 218.5 L205.0 218.2 L210.0 217.0 L215.0 215.4 L220.0 214.0 L225.0 213.6 L230.0 213.9 L235.0 214.4 L240.0 214.4 L245.0 213.8 L250.0 213.2 L255.0 213.2 L260.0 214.1 L265.0 215.5 L270.0 216.6 L275.0 216.8 L280.0 216.3 L285.0 215.8 L290.0 215.7 L295.0 216.3 L300.0 216.9 L305.0 217.0 L310.0 216.2 L315.0 214.9 L320.0 214.1 L325.0 214.1 L330.0 214.8 L335.0 215.7 L340.0 216.0 L345.0 215.8 L350.0 215.5 L355.0 215.9 L360.0 217.1 L365.0 218.8 L370.0 220.2 L375.0 220.6 L380.0 220.3 L385.0 220.0 L390.0 220.2 L395.0 220.9 L400.0 221.6 L405.0 221.6 L410.0 220.8 L415.0 219.5 L420.0 218.6 L425.0 218.5" fill="none" stroke="#8e7658" stroke-width="2.2" stroke-opacity="0.33" stroke-dasharray="50 4" stroke-dashoffset="11"/><path d="M-5.0 216.2 L0.0 216.9 L5.0 217.2 L10.0 216.7 L15.0 215.6 L20.0 214.6 L25.0 214.6 L30.0 215.3 L35.0 216.3 L40.0 216.8 L45.0 216.7 L50.0 216.4 L55.0 216.6 L60.0 217.6 L65.0 219.2 L70.0 220.5 L75.0 220.9 L80.0 220.5 L85.0 219.8 L90.0 219.6 L95.0 220.0 L100.0 220.5 L105.0 220.4 L110.0 219.5 L115.0 218.0 L120.0 216.8 L125.0 216.3 L130.0 216.7 L135.0 217.2 L140.0 217.3 L145.0 216.7 L150.0 216.0 L155.0 215.8 L160.0 216.5 L165.0 217.6 L170.0 218.5 L175.0 218.5 L180.0 217.8 L185.0 216.8 L190.0 216.4 L195.0 216.5 L200.0 216.8 L205.0 216.5 L210.0 215.3 L215.0 213.7 L220.0 212.3 L225.0 211.9 L230.0 212.2 L235.0 212.7 L240.0 212.7 L245.0 212.1 L250.0 211.5 L255.0 211.5 L260.0 212.4 L265.0 213.8 L270.0 214.9 L275.0 215.1 L280.0 214.6 L285.0 214.1 L290.0 214.0 L295.0 214.6 L300.0 215.2 L305.0 215.3 L310.0 214.5 L315.0 213.2 L320.0 212.4 L325.0 212.4 L330.0 213.1 L335.0 214.0 L340.0 214.3 L345.0 214.1 L350.0 213.8 L355.0 214.2 L360.0 215.4 L365.0 217.1 L370.0 218.5 L375.0 218.9 L380.0 218.6 L385.0 218.3 L390.0 218.5 L395.0 219.2 L400.0 219.9 L405.0 219.9 L410.0 219.1 L415.0 217.8 L420.0 216.9 L425.0 216.8" fill="none" stroke="#e6d3ae" stroke-width="1.5" stroke-opacity="0.55" stroke-dasharray="73 4" stroke-dashoffset="60"/><path d="M-5.0 225.7 L0.0 224.7 L5.0 224.3 L10.0 224.8 L15.0 225.8 L20.0 226.4 L25.0 226.2 L30.0 225.5 L35.0 225.0 L40.0 225.1 L45.0 225.8 L50.0 226.2 L55.0 225.8 L60.0 224.5 L65.0 223.1 L70.0 222.3 L75.0 222.3 L80.0 222.5 L85.0 222.2 L90.0 221.2 L95.0 220.0 L100.0 219.4 L105.0 219.7 L110.0 220.6 L115.0 221.3 L120.0 221.2 L125.0 220.6 L130.0 220.1 L135.0 220.2 L140.0 221.0 L145.0 221.7 L150.0 221.7 L155.0 220.8 L160.0 219.8 L165.0 219.3 L170.0 219.6 L175.0 220.4 L180.0 220.8 L185.0 220.5 L190.0 219.9 L195.0 219.8 L200.0 220.6 L205.0 222.1 L210.0 223.4 L215.0 223.9 L220.0 223.8 L225.0 223.6 L230.0 224.0 L235.0 225.0 L240.0 226.0 L245.0 226.3 L250.0 225.7 L255.0 224.8 L260.0 224.3 L265.0 224.7 L270.0 225.4 L275.0 225.9 L280.0 225.7 L285.0 225.1 L290.0 224.7 L295.0 225.1 L300.0 226.2 L305.0 227.2 L310.0 227.5 L315.0 226.9 L320.0 226.2 L325.0 225.9 L330.0 226.2 L335.0 226.7 L340.0 226.5 L345.0 225.4 L350.0 223.9 L355.0 222.8 L360.0 222.5 L365.0 222.8 L370.0 223.0 L375.0 222.5 L380.0 221.5 L385.0 220.8 L390.0 220.8 L395.0 221.6 L400.0 222.4 L405.0 222.6 L410.0 221.9 L415.0 221.0 L420.0 220.5 L425.0 220.8" fill="none" stroke="#8e7658" stroke-width="2.2" stroke-opacity="0.33" stroke-dasharray="73 7" stroke-dashoffset="22"/><path d="M-5.0 224.0 L0.0 223.0 L5.0 222.6 L10.0 223.1 L15.0 224.1 L20.0 224.7 L25.0 224.5 L30.0 223.8 L35.0 223.3 L40.0 223.4 L45.0 224.1 L50.0 224.5 L55.0 224.1 L60.0 222.8 L65.0 221.4 L70.0 220.6 L75.0 220.6 L80.0 220.8 L85.0 220.5 L90.0 219.5 L95.0 218.3 L100.0 217.7 L105.0 218.0 L110.0 218.9 L115.0 219.6 L120.0 219.5 L125.0 218.9 L130.0 218.4 L135.0 218.5 L140.0 219.3 L145.0 220.0 L150.0 220.0 L155.0 219.1 L160.0 218.1 L165.0 217.6 L170.0 217.9 L175.0 218.7 L180.0 219.1 L185.0 218.8 L190.0 218.2 L195.0 218.1 L200.0 218.9 L205.0 220.4 L210.0 221.7 L215.0 222.2 L220.0 222.1 L225.0 221.9 L230.0 222.3 L235.0 223.3 L240.0 224.3 L245.0 224.6 L250.0 224.0 L255.0 223.1 L260.0 222.6 L265.0 223.0 L270.0 223.7 L275.0 224.2 L280.0 224.0 L285.0 223.4 L290.0 223.0 L295.0 223.4 L300.0 224.5 L305.0 225.5 L310.0 225.8 L315.0 225.2 L320.0 224.5 L325.0 224.2 L330.0 224.5 L335.0 225.0 L340.0 224.8 L345.0 223.7 L350.0 222.2 L355.0 221.1 L360.0 220.8 L365.0 221.1 L370.0 221.3 L375.0 220.8 L380.0 219.8 L385.0 219.1 L390.0 219.1 L395.0 219.9 L400.0 220.7 L405.0 220.9 L410.0 220.2 L415.0 219.3 L420.0 218.8 L425.0 219.1" fill="none" stroke="#e6d3ae" stroke-width="1.5" stroke-opacity="0.55" stroke-dasharray="36 8" stroke-dashoffset="4"/><path d="M-5.0 229.1 L0.0 228.9 L5.0 229.9 L10.0 230.9 L15.0 230.8 L20.0 229.4 L25.0 227.6 L30.0 227.0 L35.0 227.4 L40.0 227.9 L45.0 227.3 L50.0 225.7 L55.0 224.4 L60.0 224.4 L65.0 225.7 L70.0 226.9 L75.0 226.9 L80.0 226.0 L85.0 225.3 L90.0 225.8 L95.0 227.2 L100.0 228.0 L105.0 227.4 L110.0 225.9 L115.0 224.9 L120.0 225.1 L125.0 226.2 L130.0 226.8 L135.0 226.2 L140.0 225.1 L145.0 224.9 L150.0 226.1 L155.0 228.0 L160.0 229.2 L165.0 229.0 L170.0 228.4 L175.0 228.4 L180.0 229.6 L185.0 231.0 L190.0 231.4 L195.0 230.4 L200.0 229.1 L205.0 228.7 L210.0 229.7 L215.0 230.9 L220.0 231.2 L225.0 230.4 L230.0 229.6 L235.0 230.0 L240.0 231.7 L245.0 233.3 L250.0 233.7 L255.0 232.8 L260.0 232.0 L265.0 232.1 L270.0 233.1 L275.0 233.8 L280.0 233.1 L285.0 231.4 L290.0 230.0 L295.0 229.9 L300.0 230.8 L305.0 231.5 L310.0 230.9 L315.0 229.7 L320.0 229.0 L325.0 229.7 L330.0 231.1 L335.0 231.8 L340.0 231.1 L345.0 229.6 L350.0 228.6 L355.0 228.8 L360.0 229.5 L365.0 229.4 L370.0 227.9 L375.0 226.0 L380.0 225.1 L385.0 225.6 L390.0 226.7 L395.0 227.0 L400.0 226.1 L405.0 225.1 L410.0 225.1 L415.0 226.4 L420.0 227.8 L425.0 228.0" fill="none" stroke="#8e7658" stroke-width="2.2" stroke-opacity="0.33" stroke-dasharray="68 5" stroke-dashoffset="40"/><path d="M-5.0 227.4 L0.0 227.2 L5.0 228.2 L10.0 229.2 L15.0 229.1 L20.0 227.7 L25.0 225.9 L30.0 225.3 L35.0 225.7 L40.0 226.2 L45.0 225.6 L50.0 224.0 L55.0 222.7 L60.0 222.7 L65.0 224.0 L70.0 225.2 L75.0 225.2 L80.0 224.3 L85.0 223.6 L90.0 224.1 L95.0 225.5 L100.0 226.3 L105.0 225.7 L110.0 224.2 L115.0 223.2 L120.0 223.4 L125.0 224.5 L130.0 225.1 L135.0 224.5 L140.0 223.4 L145.0 223.2 L150.0 224.4 L155.0 226.3 L160.0 227.5 L165.0 227.3 L170.0 226.7 L175.0 226.7 L180.0 227.9 L185.0 229.3 L190.0 229.7 L195.0 228.7 L200.0 227.4 L205.0 227.0 L210.0 228.0 L215.0 229.2 L220.0 229.5 L225.0 228.7 L230.0 227.9 L235.0 228.3 L240.0 230.0 L245.0 231.6 L250.0 232.0 L255.0 231.1 L260.0 230.3 L265.0 230.4 L270.0 231.4 L275.0 232.1 L280.0 231.4 L285.0 229.7 L290.0 228.3 L295.0 228.2 L300.0 229.1 L305.0 229.8 L310.0 229.2 L315.0 228.0 L320.0 227.3 L325.0 228.0 L330.0 229.4 L335.0 230.1 L340.0 229.4 L345.0 227.9 L350.0 226.9 L355.0 227.1 L360.0 227.8 L365.0 227.7 L370.0 226.2 L375.0 224.3 L380.0 223.4 L385.0 223.9 L390.0 225.0 L395.0 225.3 L400.0 224.4 L405.0 223.4 L410.0 223.4 L415.0 224.7 L420.0 226.1 L425.0 226.3" fill="none" stroke="#e6d3ae" stroke-width="1.5" stroke-opacity="0.55" stroke-dasharray="33 3" stroke-dashoffset="60"/><path d="M-5.0 238.4 L0.0 238.5 L5.0 237.8 L10.0 236.5 L15.0 235.2 L20.0 234.7 L25.0 235.0 L30.0 235.5 L35.0 235.4 L40.0 234.7 L45.0 233.9 L50.0 233.8 L55.0 234.5 L60.0 235.5 L65.0 235.9 L70.0 235.5 L75.0 234.7 L80.0 234.4 L85.0 234.7 L90.0 235.4 L95.0 235.5 L100.0 234.8 L105.0 233.5 L110.0 232.5 L115.0 232.3 L120.0 232.6 L125.0 232.8 L130.0 232.2 L135.0 231.1 L140.0 230.3 L145.0 230.3 L150.0 231.2 L155.0 232.1 L160.0 232.4 L165.0 232.1 L170.0 231.8 L175.0 232.3 L180.0 233.6 L185.0 234.9 L190.0 235.6 L195.0 235.5 L200.0 235.0 L205.0 235.1 L210.0 235.8 L215.0 236.8 L220.0 237.1 L225.0 236.5 L230.0 235.6 L235.0 235.0 L240.0 235.3 L245.0 236.1 L250.0 236.5 L255.0 236.2 L260.0 235.4 L265.0 235.1 L270.0 235.7 L275.0 236.9 L280.0 238.0 L285.0 238.3 L290.0 238.1 L295.0 238.0 L300.0 238.6 L305.0 239.9 L310.0 241.0 L315.0 241.3 L320.0 240.7 L325.0 240.0 L330.0 239.9 L335.0 240.3 L340.0 240.8 L345.0 240.5 L350.0 239.5 L355.0 238.2 L360.0 237.4 L365.0 237.5 L370.0 237.9 L375.0 237.8 L380.0 237.1 L385.0 236.1 L390.0 235.6 L395.0 236.0 L400.0 236.9 L405.0 237.5 L410.0 237.3 L415.0 236.7 L420.0 236.2 L425.0 236.5" fill="none" stroke="#8e7658" stroke-width="2.2" stroke-opacity="0.33" stroke-dasharray="78 3" stroke-dashoffset="54"/><path d="M-5.0 236.7 L0.0 236.8 L5.0 236.1 L10.0 234.8 L15.0 233.5 L20.0 233.0 L25.0 233.3 L30.0 233.8 L35.0 233.7 L40.0 233.0 L45.0 232.2 L50.0 232.1 L55.0 232.8 L60.0 233.8 L65.0 234.2 L70.0 233.8 L75.0 233.0 L80.0 232.7 L85.0 233.0 L90.0 233.7 L95.0 233.8 L100.0 233.1 L105.0 231.8 L110.0 230.8 L115.0 230.6 L120.0 230.9 L125.0 231.1 L130.0 230.5 L135.0 229.4 L140.0 228.6 L145.0 228.6 L150.0 229.5 L155.0 230.4 L160.0 230.7 L165.0 230.4 L170.0 230.1 L175.0 230.6 L180.0 231.9 L185.0 233.2 L190.0 233.9 L195.0 233.8 L200.0 233.3 L205.0 233.4 L210.0 234.1 L215.0 235.1 L220.0 235.4 L225.0 234.8 L230.0 233.9 L235.0 233.3 L240.0 233.6 L245.0 234.4 L250.0 234.8 L255.0 234.5 L260.0 233.7 L265.0 233.4 L270.0 234.0 L275.0 235.2 L280.0 236.3 L285.0 236.6 L290.0 236.4 L295.0 236.3 L300.0 236.9 L305.0 238.2 L310.0 239.3 L315.0 239.6 L320.0 239.0 L325.0 238.3 L330.0 238.2 L335.0 238.6 L340.0 239.1 L345.0 238.8 L350.0 237.8 L355.0 236.5 L360.0 235.7 L365.0 235.8 L370.0 236.2 L375.0 236.1 L380.0 235.4 L385.0 234.4 L390.0 233.9 L395.0 234.3 L400.0 235.2 L405.0 235.8 L410.0 235.6 L415.0 235.0 L420.0 234.5 L425.0 234.8" fill="none" stroke="#e6d3ae" stroke-width="1.5" stroke-opacity="0.55" stroke-dasharray="76 4" stroke-dashoffset="39"/><path d="M-5.0 242.0 L0.0 240.1 L5.0 238.4 L10.0 237.9 L15.0 238.5 L20.0 239.2 L25.0 239.3 L30.0 238.5 L35.0 237.6 L40.0 237.4 L45.0 238.3 L50.0 240.0 L55.0 241.2 L60.0 241.3 L65.0 240.2 L70.0 239.1 L75.0 238.8 L80.0 239.5 L85.0 240.3 L90.0 240.5 L95.0 239.6 L100.0 238.3 L105.0 237.7 L110.0 238.3 L115.0 239.9 L120.0 241.6 L125.0 242.3 L130.0 242.1 L135.0 241.6 L140.0 241.8 L145.0 243.0 L150.0 244.4 L155.0 245.2 L160.0 244.6 L165.0 243.2 L170.0 241.9 L175.0 241.6 L180.0 242.4 L185.0 243.4 L190.0 243.7 L195.0 243.0 L200.0 242.0 L205.0 241.8 L210.0 242.8 L215.0 244.4 L220.0 245.6 L225.0 245.6 L230.0 244.5 L235.0 243.2 L240.0 242.6 L245.0 242.9 L250.0 243.5 L255.0 243.3 L260.0 242.0 L265.0 240.1 L270.0 238.9 L275.0 238.8 L280.0 239.9 L285.0 241.0 L290.0 241.2 L295.0 240.5 L300.0 239.6 L305.0 239.4 L310.0 240.1 L315.0 241.3 L320.0 241.8 L325.0 241.1 L330.0 239.4 L335.0 237.9 L340.0 237.4 L345.0 237.9 L350.0 238.8 L355.0 239.0 L360.0 238.3 L365.0 237.3 L370.0 237.1 L375.0 238.2 L380.0 240.0 L385.0 241.6 L390.0 242.1 L395.0 241.4 L400.0 240.6 L405.0 240.5 L410.0 241.3 L415.0 242.4 L420.0 242.7 L425.0 241.9" fill="none" stroke="#8e7658" stroke-width="2.2" stroke-opacity="0.33" stroke-dasharray="54 7" stroke-dashoffset="7"/><path d="M-5.0 240.3 L0.0 238.4 L5.0 236.7 L10.0 236.2 L15.0 236.8 L20.0 237.5 L25.0 237.6 L30.0 236.8 L35.0 235.9 L40.0 235.7 L45.0 236.6 L50.0 238.3 L55.0 239.5 L60.0 239.6 L65.0 238.5 L70.0 237.4 L75.0 237.1 L80.0 237.8 L85.0 238.6 L90.0 238.8 L95.0 237.9 L100.0 236.6 L105.0 236.0 L110.0 236.6 L115.0 238.2 L120.0 239.9 L125.0 240.6 L130.0 240.4 L135.0 239.9 L140.0 240.1 L145.0 241.3 L150.0 242.7 L155.0 243.5 L160.0 242.9 L165.0 241.5 L170.0 240.2 L175.0 239.9 L180.0 240.7 L185.0 241.7 L190.0 242.0 L195.0 241.3 L200.0 240.3 L205.0 240.1 L210.0 241.1 L215.0 242.7 L220.0 243.9 L225.0 243.9 L230.0 242.8 L235.0 241.5 L240.0 240.9 L245.0 241.2 L250.0 241.8 L255.0 241.6 L260.0 240.3 L265.0 238.4 L270.0 237.2 L275.0 237.1 L280.0 238.2 L285.0 239.3 L290.0 239.5 L295.0 238.8 L300.0 237.9 L305.0 237.7 L310.0 238.4 L315.0 239.6 L320.0 240.1 L325.0 239.4 L330.0 237.7 L335.0 236.2 L340.0 235.7 L345.0 236.2 L350.0 237.1 L355.0 237.3 L360.0 236.6 L365.0 235.6 L370.0 235.4 L375.0 236.5 L380.0 238.3 L385.0 239.9 L390.0 240.4 L395.0 239.7 L400.0 238.9 L405.0 238.8 L410.0 239.6 L415.0 240.7 L420.0 241.0 L425.0 240.2" fill="none" stroke="#e6d3ae" stroke-width="1.5" stroke-opacity="0.55" stroke-dasharray="38 5" stroke-dashoffset="30"/><path d="M-5.0 247.3 L0.0 247.2 L5.0 247.7 L10.0 248.5 L15.0 249.3 L20.0 249.6 L25.0 249.3 L30.0 248.8 L35.0 248.6 L40.0 248.8 L45.0 249.4 L50.0 250.0 L55.0 250.0 L60.0 249.3 L65.0 248.2 L70.0 247.1 L75.0 246.5 L80.0 246.5 L85.0 246.6 L90.0 246.5 L95.0 245.8 L100.0 244.8 L105.0 243.8 L110.0 243.3 L115.0 243.5 L120.0 244.2 L125.0 244.8 L130.0 245.1 L135.0 244.8 L140.0 244.4 L145.0 244.2 L150.0 244.5 L155.0 245.3 L160.0 246.1 L165.0 246.5 L170.0 246.2 L175.0 245.5 L180.0 244.7 L185.0 244.3 L190.0 244.4 L195.0 244.8 L200.0 245.0 L205.0 244.6 L210.0 243.8 L215.0 242.9 L220.0 242.5 L225.0 242.7 L230.0 243.5 L235.0 244.4 L240.0 244.9 L245.0 244.9 L250.0 244.7 L255.0 244.7 L260.0 245.3 L265.0 246.4 L270.0 247.6 L275.0 248.5 L280.0 248.6 L285.0 248.3 L290.0 247.8 L295.0 247.7 L300.0 248.1 L305.0 248.7 L310.0 249.1 L315.0 248.9 L320.0 248.2 L325.0 247.3 L330.0 246.7 L335.0 246.8 L340.0 247.4 L345.0 248.1 L350.0 248.5 L355.0 248.4 L360.0 248.1 L365.0 247.9 L370.0 248.2 L375.0 249.1 L380.0 250.2 L385.0 251.0 L390.0 251.2 L395.0 250.8 L400.0 250.3 L405.0 250.0 L410.0 250.2 L415.0 250.6 L420.0 250.9 L425.0 250.6" fill="none" stroke="#8e7658" stroke-width="2.2" stroke-opacity="0.33" stroke-dasharray="55 5" stroke-dashoffset="3"/><path d="M-5.0 245.6 L0.0 245.5 L5.0 246.0 L10.0 246.8 L15.0 247.6 L20.0 247.9 L25.0 247.6 L30.0 247.1 L35.0 246.9 L40.0 247.1 L45.0 247.7 L50.0 248.3 L55.0 248.3 L60.0 247.6 L65.0 246.5 L70.0 245.4 L75.0 244.8 L80.0 244.8 L85.0 244.9 L90.0 244.8 L95.0 244.1 L100.0 243.1 L105.0 242.1 L110.0 241.6 L115.0 241.8 L120.0 242.5 L125.0 243.1 L130.0 243.4 L135.0 243.1 L140.0 242.7 L145.0 242.5 L150.0 242.8 L155.0 243.6 L160.0 244.4 L165.0 244.8 L170.0 244.5 L175.0 243.8 L180.0 243.0 L185.0 242.6 L190.0 242.7 L195.0 243.1 L200.0 243.3 L205.0 242.9 L210.0 242.1 L215.0 241.2 L220.0 240.8 L225.0 241.0 L230.0 241.8 L235.0 242.7 L240.0 243.2 L245.0 243.2 L250.0 243.0 L255.0 243.0 L260.0 243.6 L265.0 244.7 L270.0 245.9 L275.0 246.8 L280.0 246.9 L285.0 246.6 L290.0 246.1 L295.0 246.0 L300.0 246.4 L305.0 247.0 L310.0 247.4 L315.0 247.2 L320.0 246.5 L325.0 245.6 L330.0 245.0 L335.0 245.1 L340.0 245.7 L345.0 246.4 L350.0 246.8 L355.0 246.7 L360.0 246.4 L365.0 246.2 L370.0 246.5 L375.0 247.4 L380.0 248.5 L385.0 249.3 L390.0 249.5 L395.0 249.1 L400.0 248.6 L405.0 248.3 L410.0 248.5 L415.0 248.9 L420.0 249.2 L425.0 248.9" fill="none" stroke="#e6d3ae" stroke-width="1.5" stroke-opacity="0.55" stroke-dasharray="61 8" stroke-dashoffset="15"/><path d="M-5.0 256.9 L0.0 257.4 L5.0 256.9 L10.0 255.5 L15.0 253.8 L20.0 252.6 L25.0 252.2 L30.0 252.4 L35.0 252.7 L40.0 252.6 L45.0 251.7 L50.0 250.6 L55.0 249.8 L60.0 249.9 L65.0 250.8 L70.0 252.1 L75.0 253.0 L80.0 253.0 L85.0 252.2 L90.0 251.1 L95.0 250.4 L100.0 250.3 L105.0 250.7 L110.0 251.0 L115.0 250.6 L120.0 249.4 L125.0 247.9 L130.0 246.7 L135.0 246.4 L140.0 247.1 L145.0 248.2 L150.0 249.2 L155.0 249.5 L160.0 249.2 L165.0 248.8 L170.0 248.9 L175.0 249.7 L180.0 251.0 L185.0 252.2 L190.0 252.5 L195.0 251.8 L200.0 250.6 L205.0 249.6 L210.0 249.2 L215.0 249.7 L220.0 250.5 L225.0 251.1 L230.0 251.0 L235.0 250.5 L240.0 249.9 L245.0 250.1 L250.0 251.2 L255.0 252.9 L260.0 254.6 L265.0 255.6 L270.0 255.6 L275.0 255.0 L280.0 254.5 L285.0 254.6 L290.0 255.2 L295.0 256.0 L300.0 256.3 L305.0 255.8 L310.0 254.5 L315.0 253.3 L320.0 252.7 L325.0 253.1 L330.0 254.2 L335.0 255.3 L340.0 255.9 L345.0 255.8 L350.0 255.3 L355.0 255.0 L360.0 255.4 L365.0 256.4 L370.0 257.5 L375.0 257.9 L380.0 257.4 L385.0 256.0 L390.0 254.5 L395.0 253.4 L400.0 253.1 L405.0 253.4 L410.0 253.7 L415.0 253.4 L420.0 252.4 L425.0 251.2" fill="none" stroke="#8e7658" stroke-width="2.2" stroke-opacity="0.33" stroke-dasharray="81 4" stroke-dashoffset="36"/><path d="M-5.0 255.2 L0.0 255.7 L5.0 255.2 L10.0 253.8 L15.0 252.1 L20.0 250.9 L25.0 250.5 L30.0 250.7 L35.0 251.0 L40.0 250.9 L45.0 250.0 L50.0 248.9 L55.0 248.1 L60.0 248.2 L65.0 249.1 L70.0 250.4 L75.0 251.3 L80.0 251.3 L85.0 250.5 L90.0 249.4 L95.0 248.7 L100.0 248.6 L105.0 249.0 L110.0 249.3 L115.0 248.9 L120.0 247.7 L125.0 246.2 L130.0 245.0 L135.0 244.7 L140.0 245.4 L145.0 246.5 L150.0 247.5 L155.0 247.8 L160.0 247.5 L165.0 247.1 L170.0 247.2 L175.0 248.0 L180.0 249.3 L185.0 250.5 L190.0 250.8 L195.0 250.1 L200.0 248.9 L205.0 247.9 L210.0 247.5 L215.0 248.0 L220.0 248.8 L225.0 249.4 L230.0 249.3 L235.0 248.8 L240.0 248.2 L245.0 248.4 L250.0 249.5 L255.0 251.2 L260.0 252.9 L265.0 253.9 L270.0 253.9 L275.0 253.3 L280.0 252.8 L285.0 252.9 L290.0 253.5 L295.0 254.3 L300.0 254.6 L305.0 254.1 L310.0 252.8 L315.0 251.6 L320.0 251.0 L325.0 251.4 L330.0 252.5 L335.0 253.6 L340.0 254.2 L345.0 254.1 L350.0 253.6 L355.0 253.3 L360.0 253.7 L365.0 254.7 L370.0 255.8 L375.0 256.2 L380.0 255.7 L385.0 254.3 L390.0 252.8 L395.0 251.7 L400.0 251.4 L405.0 251.7 L410.0 252.0 L415.0 251.7 L420.0 250.7 L425.0 249.5" fill="none" stroke="#e6d3ae" stroke-width="1.5" stroke-opacity="0.55" stroke-dasharray="31 6" stroke-dashoffset="9"/><path d="M-5.0 256.9 L0.0 256.2 L5.0 256.5 L10.0 257.8 L15.0 259.0 L20.0 259.2 L25.0 258.5 L30.0 257.8 L35.0 258.0 L40.0 259.0 L45.0 259.7 L50.0 259.3 L55.0 258.1 L60.0 257.2 L65.0 257.4 L70.0 258.4 L75.0 259.0 L80.0 258.6 L85.0 257.8 L90.0 257.5 L95.0 258.4 L100.0 259.9 L105.0 260.8 L110.0 260.7 L115.0 260.1 L120.0 260.1 L125.0 261.2 L130.0 262.4 L135.0 262.7 L140.0 261.9 L145.0 260.8 L150.0 260.4 L155.0 260.9 L160.0 261.4 L165.0 261.1 L170.0 259.8 L175.0 258.5 L180.0 258.3 L185.0 259.0 L190.0 259.8 L195.0 259.6 L200.0 258.6 L205.0 258.0 L210.0 258.4 L215.0 259.6 L220.0 260.4 L225.0 260.1 L230.0 259.1 L235.0 258.4 L240.0 258.7 L245.0 259.5 L250.0 259.7 L255.0 258.8 L260.0 257.3 L265.0 256.4 L270.0 256.7 L275.0 257.4 L280.0 257.5 L285.0 256.6 L290.0 255.5 L295.0 255.4 L300.0 256.4 L305.0 257.7 L310.0 258.2 L315.0 257.8 L320.0 257.3 L325.0 257.8 L330.0 259.1 L335.0 260.3 L340.0 260.5 L345.0 259.7 L350.0 258.9 L355.0 259.0 L360.0 259.9 L365.0 260.5 L370.0 260.1 L375.0 258.9 L380.0 258.1 L385.0 258.4 L390.0 259.5 L395.0 260.2 L400.0 259.9 L405.0 259.2 L410.0 259.0 L415.0 259.9 L420.0 261.3 L425.0 262.1" fill="none" stroke="#8e7658" stroke-width="2.2" stroke-opacity="0.33" stroke-dasharray="50 4" stroke-dashoffset="16"/><path d="M-5.0 255.2 L0.0 254.5 L5.0 254.8 L10.0 256.1 L15.0 257.3 L20.0 257.5 L25.0 256.8 L30.0 256.1 L35.0 256.3 L40.0 257.3 L45.0 258.0 L50.0 257.6 L55.0 256.4 L60.0 255.5 L65.0 255.7 L70.0 256.7 L75.0 257.3 L80.0 256.9 L85.0 256.1 L90.0 255.8 L95.0 256.7 L100.0 258.2 L105.0 259.1 L110.0 259.0 L115.0 258.4 L120.0 258.4 L125.0 259.5 L130.0 260.7 L135.0 261.0 L140.0 260.2 L145.0 259.1 L150.0 258.7 L155.0 259.2 L160.0 259.7 L165.0 259.4 L170.0 258.1 L175.0 256.8 L180.0 256.6 L185.0 257.3 L190.0 258.1 L195.0 257.9 L200.0 256.9 L205.0 256.3 L210.0 256.7 L215.0 257.9 L220.0 258.7 L225.0 258.4 L230.0 257.4 L235.0 256.7 L240.0 257.0 L245.0 257.8 L250.0 258.0 L255.0 257.1 L260.0 255.6 L265.0 254.7 L270.0 255.0 L275.0 255.7 L280.0 255.8 L285.0 254.9 L290.0 253.8 L295.0 253.7 L300.0 254.7 L305.0 256.0 L310.0 256.5 L315.0 256.1 L320.0 255.6 L325.0 256.1 L330.0 257.4 L335.0 258.6 L340.0 258.8 L345.0 258.0 L350.0 257.2 L355.0 257.3 L360.0 258.2 L365.0 258.8 L370.0 258.4 L375.0 257.2 L380.0 256.4 L385.0 256.7 L390.0 257.8 L395.0 258.5 L400.0 258.2 L405.0 257.5 L410.0 257.3 L415.0 258.2 L420.0 259.6 L425.0 260.4" fill="none" stroke="#e6d3ae" stroke-width="1.5" stroke-opacity="0.55" stroke-dasharray="61 8" stroke-dashoffset="20"/><path d="M-5.0 261.7 L0.0 262.2 L5.0 262.7 L10.0 262.7 L15.0 262.2 L20.0 261.6 L25.0 261.4 L30.0 261.8 L35.0 262.8 L40.0 263.8 L45.0 264.5 L50.0 264.4 L55.0 263.8 L60.0 262.9 L65.0 262.4 L70.0 262.4 L75.0 262.8 L80.0 263.1 L85.0 262.9 L90.0 262.1 L95.0 260.8 L100.0 259.7 L105.0 259.2 L110.0 259.4 L115.0 260.1 L120.0 260.8 L125.0 261.1 L130.0 260.9 L135.0 260.6 L140.0 260.5 L145.0 261.1 L150.0 262.3 L155.0 263.7 L160.0 264.9 L165.0 265.4 L170.0 265.3 L175.0 264.9 L180.0 264.7 L185.0 265.0 L190.0 265.7 L195.0 266.4 L200.0 266.6 L205.0 266.2 L210.0 265.3 L215.0 264.3 L220.0 263.7 L225.0 263.8 L230.0 264.5 L235.0 265.3 L240.0 265.7 L245.0 265.6 L250.0 265.2 L255.0 265.0 L260.0 265.3 L265.0 266.4 L270.0 267.8 L275.0 269.0 L280.0 269.7 L285.0 269.7 L290.0 269.3 L295.0 269.0 L300.0 269.1 L305.0 269.6 L310.0 270.3 L315.0 270.6 L320.0 270.2 L325.0 269.1 L330.0 267.8 L335.0 266.8 L340.0 266.4 L345.0 266.6 L350.0 267.0 L355.0 267.1 L360.0 266.7 L365.0 265.9 L370.0 265.1 L375.0 264.9 L380.0 265.4 L385.0 266.4 L390.0 267.4 L395.0 268.0 L400.0 267.9 L405.0 267.3 L410.0 266.7 L415.0 266.5 L420.0 266.8 L425.0 267.3" fill="none" stroke="#8e7658" stroke-width="2.2" stroke-opacity="0.33" stroke-dasharray="79 3" stroke-dashoffset="14"/><path d="M-5.0 260.0 L0.0 260.5 L5.0 261.0 L10.0 261.0 L15.0 260.5 L20.0 259.9 L25.0 259.7 L30.0 260.1 L35.0 261.1 L40.0 262.1 L45.0 262.8 L50.0 262.7 L55.0 262.1 L60.0 261.2 L65.0 260.7 L70.0 260.7 L75.0 261.1 L80.0 261.4 L85.0 261.2 L90.0 260.4 L95.0 259.1 L100.0 258.0 L105.0 257.5 L110.0 257.7 L115.0 258.4 L120.0 259.1 L125.0 259.4 L130.0 259.2 L135.0 258.9 L140.0 258.8 L145.0 259.4 L150.0 260.6 L155.0 262.0 L160.0 263.2 L165.0 263.7 L170.0 263.6 L175.0 263.2 L180.0 263.0 L185.0 263.3 L190.0 264.0 L195.0 264.7 L200.0 264.9 L205.0 264.5 L210.0 263.6 L215.0 262.6 L220.0 262.0 L225.0 262.1 L230.0 262.8 L235.0 263.6 L240.0 264.0 L245.0 263.9 L250.0 263.5 L255.0 263.3 L260.0 263.6 L265.0 264.7 L270.0 266.1 L275.0 267.3 L280.0 268.0 L285.0 268.0 L290.0 267.6 L295.0 267.3 L300.0 267.4 L305.0 267.9 L310.0 268.6 L315.0 268.9 L320.0 268.5 L325.0 267.4 L330.0 266.1 L335.0 265.1 L340.0 264.7 L345.0 264.9 L350.0 265.3 L355.0 265.4 L360.0 265.0 L365.0 264.2 L370.0 263.4 L375.0 263.2 L380.0 263.7 L385.0 264.7 L390.0 265.7 L395.0 266.3 L400.0 266.2 L405.0 265.6 L410.0 265.0 L415.0 264.8 L420.0 265.1 L425.0 265.6" fill="none" stroke="#e6d3ae" stroke-width="1.5" stroke-opacity="0.55" stroke-dasharray="63 6" stroke-dashoffset="8"/><path d="M-5.0 270.1 L0.0 270.5 L5.0 269.7 L10.0 268.9 L15.0 269.2 L20.0 270.3 L25.0 270.8 L30.0 269.9 L35.0 268.2 L40.0 267.1 L45.0 267.3 L50.0 268.1 L55.0 268.0 L60.0 266.9 L65.0 266.0 L70.0 266.3 L75.0 267.8 L80.0 269.2 L85.0 269.3 L90.0 268.4 L95.0 268.0 L100.0 268.7 L105.0 269.8 L110.0 270.0 L115.0 268.8 L120.0 267.3 L125.0 266.9 L130.0 267.7 L135.0 268.6 L140.0 268.5 L145.0 267.7 L150.0 267.4 L155.0 268.4 L160.0 270.3 L165.0 271.4 L170.0 271.1 L175.0 270.3 L180.0 270.3 L185.0 271.3 L190.0 272.2 L195.0 271.9 L200.0 270.6 L205.0 269.4 L210.0 269.7 L215.0 270.9 L220.0 271.7 L225.0 271.4 L230.0 270.7 L235.0 271.0 L240.0 272.5 L245.0 274.2 L250.0 274.7 L255.0 274.0 L260.0 273.1 L265.0 273.3 L270.0 274.2 L275.0 274.7 L280.0 273.8 L285.0 272.3 L290.0 271.5 L295.0 272.2 L300.0 273.4 L305.0 273.9 L310.0 273.3 L315.0 272.6 L320.0 273.2 L325.0 274.7 L330.0 275.8 L335.0 275.6 L340.0 274.3 L345.0 273.4 L350.0 273.6 L355.0 274.3 L360.0 274.1 L365.0 272.7 L370.0 271.2 L375.0 270.8 L380.0 271.7 L385.0 272.8 L390.0 272.8 L395.0 271.9 L400.0 271.4 L405.0 272.1 L410.0 273.4 L415.0 273.9 L420.0 272.9 L425.0 271.3" fill="none" stroke="#8e7658" stroke-width="2.2" stroke-opacity="0.33" stroke-dasharray="68 6" stroke-dashoffset="50"/><path d="M-5.0 268.4 L0.0 268.8 L5.0 268.0 L10.0 267.2 L15.0 267.5 L20.0 268.6 L25.0 269.1 L30.0 268.2 L35.0 266.5 L40.0 265.4 L45.0 265.6 L50.0 266.4 L55.0 266.3 L60.0 265.2 L65.0 264.3 L70.0 264.6 L75.0 266.1 L80.0 267.5 L85.0 267.6 L90.0 266.7 L95.0 266.3 L100.0 267.0 L105.0 268.1 L110.0 268.3 L115.0 267.1 L120.0 265.6 L125.0 265.2 L130.0 266.0 L135.0 266.9 L140.0 266.8 L145.0 266.0 L150.0 265.7 L155.0 266.7 L160.0 268.6 L165.0 269.7 L170.0 269.4 L175.0 268.6 L180.0 268.6 L185.0 269.6 L190.0 270.5 L195.0 270.2 L200.0 268.9 L205.0 267.7 L210.0 268.0 L215.0 269.2 L220.0 270.0 L225.0 269.7 L230.0 269.0 L235.0 269.3 L240.0 270.8 L245.0 272.5 L250.0 273.0 L255.0 272.3 L260.0 271.4 L265.0 271.6 L270.0 272.5 L275.0 273.0 L280.0 272.1 L285.0 270.6 L290.0 269.8 L295.0 270.5 L300.0 271.7 L305.0 272.2 L310.0 271.6 L315.0 270.9 L320.0 271.5 L325.0 273.0 L330.0 274.1 L335.0 273.9 L340.0 272.6 L345.0 271.7 L350.0 271.9 L355.0 272.6 L360.0 272.4 L365.0 271.0 L370.0 269.5 L375.0 269.1 L380.0 270.0 L385.0 271.1 L390.0 271.1 L395.0 270.2 L400.0 269.7 L405.0 270.4 L410.0 271.7 L415.0 272.2 L420.0 271.2 L425.0 269.6" fill="none" stroke="#e6d3ae" stroke-width="1.5" stroke-opacity="0.55" stroke-dasharray="57 3" stroke-dashoffset="21"/><path d="M-5.0 278.2 L0.0 277.8 L5.0 277.7 L10.0 277.3 L15.0 276.1 L20.0 274.4 L25.0 273.3 L30.0 273.4 L35.0 274.6 L40.0 276.0 L45.0 276.6 L50.0 276.3 L55.0 275.6 L60.0 275.3 L65.0 275.8 L70.0 276.3 L75.0 276.1 L80.0 274.9 L85.0 273.1 L90.0 271.7 L95.0 271.6 L100.0 272.5 L105.0 273.7 L110.0 274.2 L115.0 274.2 L120.0 274.3 L125.0 275.1 L130.0 276.8 L135.0 278.6 L140.0 279.4 L145.0 278.9 L150.0 277.7 L155.0 276.8 L160.0 276.7 L165.0 277.3 L170.0 277.7 L175.0 277.4 L180.0 276.7 L185.0 276.3 L190.0 276.9 L195.0 278.6 L200.0 280.5 L205.0 281.6 L210.0 281.5 L215.0 280.8 L220.0 280.2 L225.0 280.3 L230.0 280.7 L235.0 280.4 L240.0 279.1 L245.0 277.2 L250.0 275.7 L255.0 275.2 L260.0 276.0 L265.0 277.0 L270.0 277.4 L275.0 277.1 L280.0 276.5 L285.0 276.5 L290.0 277.3 L295.0 278.2 L300.0 278.3 L305.0 277.1 L310.0 275.2 L315.0 273.5 L320.0 272.8 L325.0 273.0 L330.0 273.3 L335.0 273.1 L340.0 272.5 L345.0 272.0 L350.0 272.5 L355.0 274.1 L360.0 276.0 L365.0 277.2 L370.0 277.2 L375.0 276.3 L380.0 275.7 L385.0 275.8 L390.0 276.3 L395.0 276.6 L400.0 276.1 L405.0 274.9 L410.0 274.1 L415.0 274.4 L420.0 275.8 L425.0 277.7" fill="none" stroke="#8e7658" stroke-width="2.2" stroke-opacity="0.33" stroke-dasharray="46 4" stroke-dashoffset="52"/><path d="M-5.0 276.5 L0.0 276.1 L5.0 276.0 L10.0 275.6 L15.0 274.4 L20.0 272.7 L25.0 271.6 L30.0 271.7 L35.0 272.9 L40.0 274.3 L45.0 274.9 L50.0 274.6 L55.0 273.9 L60.0 273.6 L65.0 274.1 L70.0 274.6 L75.0 274.4 L80.0 273.2 L85.0 271.4 L90.0 270.0 L95.0 269.9 L100.0 270.8 L105.0 272.0 L110.0 272.5 L115.0 272.5 L120.0 272.6 L125.0 273.4 L130.0 275.1 L135.0 276.9 L140.0 277.7 L145.0 277.2 L150.0 276.0 L155.0 275.1 L160.0 275.0 L165.0 275.6 L170.0 276.0 L175.0 275.7 L180.0 275.0 L185.0 274.6 L190.0 275.2 L195.0 276.9 L200.0 278.8 L205.0 279.9 L210.0 279.8 L215.0 279.1 L220.0 278.5 L225.0 278.6 L230.0 279.0 L235.0 278.7 L240.0 277.4 L245.0 275.5 L250.0 274.0 L255.0 273.5 L260.0 274.3 L265.0 275.3 L270.0 275.7 L275.0 275.4 L280.0 274.8 L285.0 274.8 L290.0 275.6 L295.0 276.5 L300.0 276.6 L305.0 275.4 L310.0 273.5 L315.0 271.8 L320.0 271.1 L325.0 271.3 L330.0 271.6 L335.0 271.4 L340.0 270.8 L345.0 270.3 L350.0 270.8 L355.0 272.4 L360.0 274.3 L365.0 275.5 L370.0 275.5 L375.0 274.6 L380.0 274.0 L385.0 274.1 L390.0 274.6 L395.0 274.9 L400.0 274.4 L405.0 273.2 L410.0 272.4 L415.0 272.7 L420.0 274.1 L425.0 276.0" fill="none" stroke="#e6d3ae" stroke-width="1.5" stroke-opacity="0.55" stroke-dasharray="56 8" stroke-dashoffset="3"/><path d="M-5.0 282.3 L0.0 283.6 L5.0 285.0 L10.0 285.5 L15.0 285.2 L20.0 284.9 L25.0 285.3 L30.0 286.4 L35.0 287.0 L40.0 286.5 L45.0 285.1 L50.0 283.9 L55.0 283.6 L60.0 283.8 L65.0 283.6 L70.0 282.5 L75.0 281.1 L80.0 280.2 L85.0 280.6 L90.0 281.5 L95.0 282.1 L100.0 281.7 L105.0 281.2 L110.0 281.3 L115.0 282.4 L120.0 283.5 L125.0 283.9 L130.0 283.1 L135.0 282.1 L140.0 281.6 L145.0 281.9 L150.0 282.2 L155.0 281.5 L160.0 280.0 L165.0 278.6 L170.0 278.3 L175.0 278.9 L180.0 279.5 L185.0 279.3 L190.0 278.7 L195.0 278.5 L200.0 279.4 L205.0 281.0 L210.0 282.2 L215.0 282.4 L220.0 282.0 L225.0 281.9 L230.0 282.6 L235.0 283.6 L240.0 283.9 L245.0 283.0 L250.0 281.7 L255.0 281.0 L260.0 281.3 L265.0 281.9 L270.0 281.9 L275.0 281.2 L280.0 280.5 L285.0 280.7 L290.0 282.0 L295.0 283.5 L300.0 284.2 L305.0 284.1 L310.0 284.0 L315.0 284.7 L320.0 286.0 L325.0 287.0 L330.0 286.9 L335.0 285.9 L340.0 284.9 L345.0 284.7 L350.0 285.1 L355.0 285.1 L360.0 284.2 L365.0 282.8 L370.0 281.9 L375.0 282.2 L380.0 283.1 L385.0 283.7 L390.0 283.4 L395.0 282.8 L400.0 282.9 L405.0 284.0 L410.0 285.3 L415.0 285.8 L420.0 285.2 L425.0 284.2" fill="none" stroke="#8e7658" stroke-width="2.2" stroke-opacity="0.33" stroke-dasharray="73 5" stroke-dashoffset="48"/><path d="M-5.0 280.6 L0.0 281.9 L5.0 283.3 L10.0 283.8 L15.0 283.5 L20.0 283.2 L25.0 283.6 L30.0 284.7 L35.0 285.3 L40.0 284.8 L45.0 283.4 L50.0 282.2 L55.0 281.9 L60.0 282.1 L65.0 281.9 L70.0 280.8 L75.0 279.4 L80.0 278.5 L85.0 278.9 L90.0 279.8 L95.0 280.4 L100.0 280.0 L105.0 279.5 L110.0 279.6 L115.0 280.7 L120.0 281.8 L125.0 282.2 L130.0 281.4 L135.0 280.4 L140.0 279.9 L145.0 280.2 L150.0 280.5 L155.0 279.8 L160.0 278.3 L165.0 276.9 L170.0 276.6 L175.0 277.2 L180.0 277.8 L185.0 277.6 L190.0 277.0 L195.0 276.8 L200.0 277.7 L205.0 279.3 L210.0 280.5 L215.0 280.7 L220.0 280.3 L225.0 280.2 L230.0 280.9 L235.0 281.9 L240.0 282.2 L245.0 281.3 L250.0 280.0 L255.0 279.3 L260.0 279.6 L265.0 280.2 L270.0 280.2 L275.0 279.5 L280.0 278.8 L285.0 279.0 L290.0 280.3 L295.0 281.8 L300.0 282.5 L305.0 282.4 L310.0 282.3 L315.0 283.0 L320.0 284.3 L325.0 285.3 L330.0 285.2 L335.0 284.2 L340.0 283.2 L345.0 283.0 L350.0 283.4 L355.0 283.4 L360.0 282.5 L365.0 281.1 L370.0 280.2 L375.0 280.5 L380.0 281.4 L385.0 282.0 L390.0 281.7 L395.0 281.1 L400.0 281.2 L405.0 282.3 L410.0 283.6 L415.0 284.1 L420.0 283.5 L425.0 282.5" fill="none" stroke="#e6d3ae" stroke-width="1.5" stroke-opacity="0.55" stroke-dasharray="78 4" stroke-dashoffset="23"/></g>
</defs>
<g clip-path="url(#texclip)">
<rect x="0" y="0" width="423.5" height="278" fill="url(#vig)"/>
<use href="#rip"/>
<polygon points="13.8,23.2 111.0,81.2 79.0,199.6 10.3,156.2" fill="#ff9c5c" fill-opacity="0.32"/><polygon points="111.0,81.2 180.4,117.7 183.9,250.3 79.0,199.6" fill="#ff9c5c" fill-opacity="0.32"/><polygon points="111.0,81.2 353.3,23.3 250.2,74.0 180.4,117.7" fill="#ff9c5c" fill-opacity="0.32"/><polygon points="180.4,117.7 250.2,74.0 280.6,192.6 183.9,250.3" fill="#ff9c5c" fill-opacity="0.32"/><polygon points="250.2,74.0 353.3,23.3 350.3,156.0 280.6,192.6" fill="#ff9c5c" fill-opacity="0.32"/><polygon points="183.9,250.3 280.6,192.6 350.3,156.0 418.4,200.2" fill="#ff9c5c" fill-opacity="0.32"/><line x1="280.6" y1="192.6" x2="350.3" y2="156.0" stroke="#222222" stroke-width="1.5"/><line x1="280.6" y1="192.6" x2="350.3" y2="156.0" stroke="#e07820" stroke-width="1.0" stroke-dasharray="3 1.5"/><line x1="180.4" y1="117.7" x2="183.9" y2="250.3" stroke="#222222" stroke-width="1.5"/><line x1="180.4" y1="117.7" x2="183.9" y2="250.3" stroke="#e07820" stroke-width="1.0" stroke-dasharray="3 1.5"/><line x1="13.8" y1="23.2" x2="111.0" y2="81.2" stroke="#222222" stroke-width="1.5"/><line x1="13.8" y1="23.2" x2="111.0" y2="81.2" stroke="#e07820" stroke-width="1.0" stroke-dasharray="3 1.5"/><line x1="350.3" y1="156.0" x2="418.4" y2="200.2" stroke="#222222" stroke-width="1.5"/><line x1="350.3" y1="156.0" x2="418.4" y2="200.2" stroke="#e07820" stroke-width="1.0" stroke-dasharray="3 1.5"/><line x1="180.4" y1="117.7" x2="250.2" y2="74.0" stroke="#222222" stroke-width="1.5"/><line x1="180.4" y1="117.7" x2="250.2" y2="74.0" stroke="#e07820" stroke-width="1.0" stroke-dasharray="3 1.5"/><line x1="111.0" y1="81.2" x2="79.0" y2="199.6" stroke="#222222" stroke-width="1.5"/><line x1="111.0" y1="81.2" x2="79.0" y2="199.6" stroke="#e07820" stroke-width="1.0" stroke-dasharray="3 1.5"/><line x1="250.2" y1="74.0" x2="280.6" y2="192.6" stroke="#222222" stroke-width="1.5"/><line x1="250.2" y1="74.0" x2="280.6" y2="192.6" stroke="#e07820" stroke-width="1.0" stroke-dasharray="3 1.5"/><line x1="111.0" y1="81.2" x2="180.4" y2="117.7" stroke="#222222" stroke-width="1.5"/><line x1="111.0" y1="81.2" x2="180.4" y2="117.7" stroke="#e07820" stroke-width="1.0" stroke-dasharray="3 1.5"/><line x1="10.3" y1="156.2" x2="79.0" y2="199.6" stroke="#222222" stroke-width="1.5"/><line x1="10.3" y1="156.2" x2="79.0" y2="199.6" stroke="#e07820" stroke-width="1.0" stroke-dasharray="3 1.5"/><line x1="250.2" y1="74.0" x2="353.3" y2="23.3" stroke="#222222" stroke-width="1.5"/><line x1="250.2" y1="74.0" x2="353.3" y2="23.3" stroke="#e07820" stroke-width="1.0" stroke-dasharray="3 1.5"/><line x1="183.9" y1="250.3" x2="280.6" y2="192.6" stroke="#222222" stroke-width="1.5"/><line x1="183.9" y1="250.3" x2="280.6" y2="192.6" stroke="#e07820" stroke-width="1.0" stroke-dasharray="3 1.5"/><line x1="353.3" y1="23.3" x2="350.3" y2="156.0" stroke="#222222" stroke-width="1.5"/><line x1="353.3" y1="23.3" x2="350.3" y2="156.0" stroke="#e07820" stroke-width="1.0" stroke-dasharray="3 1.5"/><line x1="183.9" y1="250.3" x2="418.4" y2="200.2" stroke="#222222" stroke-width="1.5"/><line x1="183.9" y1="250.3" x2="418.4" y2="200.2" stroke="#e07820" stroke-width="1.0" stroke-dasharray="3 1.5"/><line x1="13.8" y1="23.2" x2="10.3" y2="156.2" stroke="#222222" stroke-width="1.5"/><line x1="13.8" y1="23.2" x2="10.3" y2="156.2" stroke="#e07820" stroke-width="1.0" stroke-dasharray="3 1.5"/><line x1="111.0" y1="81.2" x2="353.3" y2="23.3" stroke="#222222" stroke-width="1.5"/><line x1="111.0" y1="81.2" x2="353.3" y2="23.3" stroke="#e07820" stroke-width="1.0" stroke-dasharray="3 1.5"/><line x1="79.0" y1="199.6" x2="183.9" y2="250.3" stroke="#222222" stroke-width="1.5"/><line x1="79.0" y1="199.6" x2="183.9" y2="250.3" stroke="#e07820" stroke-width="1.0" stroke-dasharray="3 1.5"/><circle cx="13.8" cy="23.2" r="1.1" fill="#f5a050"/><circle cx="111.0" cy="81.2" r="1.1" fill="#f5a050"/><circle cx="180.4" cy="117.7" r="1.1" fill="#f5a050"/><circle cx="250.2" cy="74.0" r="1.1" fill="#f5a050"/><circle cx="353.3" cy="23.3" r="1.1" fill="#f5a050"/><circle cx="10.3" cy="156.2" r="1.1" fill="#f5a050"/><circle cx="79.0" cy="199.6" r="1.1" fill="#f5a050"/><circle cx="183.9" cy="250.3" r="1.1" fill="#f5a050"/><circle cx="280.6" cy="192.6" r="1.1" fill="#f5a050"/><circle cx="350.3" cy="156.0" r="1.1" fill="#f5a050"/><circle cx="418.4" cy="200.2" r="1.1" fill="#f5a050"/></g></svg>
<svg style="position:absolute;left:52px;top:512px;overflow:visible;" width="28" height="28" viewBox="0 0 28 28"><circle cx="14" cy="14" r="5" fill="none" stroke="#e8e8e8" stroke-width="0.9" stroke-dasharray="2 1.5"/><circle cx="14" cy="14" r="5" fill="none" stroke="#d04040" stroke-width="0.9" stroke-dasharray="2 1.5" stroke-dashoffset="2"/><path d="M14 4 V9 M14 19 V24 M4 14 H9 M19 14 H24" stroke="#bbb" stroke-width="0.8"/></svg>
<div style="left:527.5px;top:76.5px;width:11px;height:10px;background:#303030;border-radius:3px;"></div>
<svg style="position:absolute;left:528px;top:77px;overflow:visible;" width="10" height="10" viewBox="0 0 10 10"><path d="M3.5 2.5 L1.5 5 L3.5 7.5 M6.5 2.5 L8.5 5 L6.5 7.5" fill="none" stroke="#999" stroke-width="0.9"/></svg>
<div style="left:541.3px;top:36px;width:19.3px;height:11.5px;background:#2b2b2b;border-radius:3px;"></div>
<svg style="position:absolute;left:542px;top:36.5px;overflow:visible;" width="13" height="11" viewBox="0 0 13 11"><path d="M1.5 5 H9 M1.5 9 H9 M3 3.5 V10.5 M7.5 3.5 V10.5" stroke="#ddd" stroke-width="0.8"/><circle cx="8.5" cy="3.5" r="2.6" fill="#e0e0e0"/></svg>
<svg style="position:absolute;left:554px;top:40px;overflow:visible;" width="6" height="4" viewBox="0 0 6 4"><path d="M0.5 0.8 L3 3.2 L5.5 0.8" fill="none" stroke="#cfcfcf" stroke-width="1"/></svg>
<svg style="position:absolute;left:568.8px;top:34.2px;overflow:visible;" width="16" height="16" viewBox="0 0 16 16"><rect x="1.2" y="1.2" width="13.6" height="13.6" rx="2" fill="none" stroke="#e0903a" stroke-width="1.4" stroke-dasharray="2 2"/><path d="M6 4.5 L11 8.5 L8 9 L6.5 11.5 Z" fill="#eeeeee"/></svg>
<div style="left:594px;top:36px;width:63px;height:11.5px;background:#545454;border-radius:3px;"></div>
<div style="left:594px;top:36px;width:12px;height:11.5px;background:#4772b3;border-radius:3px;border-top-right-radius:0;border-bottom-right-radius:0"></div>
<svg style="position:absolute;left:594px;top:36px;overflow:visible;" width="63" height="12" viewBox="0 0 63 12"><rect x="2.5" y="2.5" width="7" height="7" fill="none" stroke="#e8e8e8" stroke-width="0.9" stroke-dasharray="1.2 1.2"/><path d="M15 10 V6 H18 V2.5 H23 V10 Z" fill="#e6cbb0"/><path d="M31 2.5 H35 V7 H31 Z" fill="#e6cbb0"/><path d="M26 10 H32 M26 5 V10" stroke="#bbb" stroke-width="0.8" stroke-dasharray="1 1"/><path d="M39 2.5 H47 V10 H39 Z M41.5 5 V7.5 H44.5 V5 Z" fill="#e6cbb0" fill-rule="evenodd"/><rect x="53" y="4.5" width="4" height="3.5" fill="#e6cbb0"/><rect x="51" y="2.5" width="8" height="8" fill="none" stroke="#aaa" stroke-width="0.7" stroke-dasharray="1 1"/></svg>
<div style="left:713.5px;top:36px;width:50.5px;height:11.5px;background:#2b2b2b;border-radius:3px;"></div>
<svg style="position:absolute;left:715px;top:36.5px;overflow:visible;" width="12" height="11" viewBox="0 0 12 11"><path d="M2.5 1.5 V9 H10" fill="none" stroke="#ddd" stroke-width="0.9"/><path d="M2.5 9 L8 4" stroke="#ddd" stroke-width="0.8"/><circle cx="9.5" cy="9" r="1.2" fill="#e6cbb0"/><circle cx="2.5" cy="2" r="1" fill="#e6cbb0"/></svg>
<div class="t" style="left:728px;top:36.3px;height:12px;line-height:12px;font-size:7.6px;color:#dedede;text-align:left;">Global</div>
<svg style="position:absolute;left:756px;top:40px;overflow:visible;" width="6" height="4" viewBox="0 0 6 4"><path d="M0.5 0.8 L3 3.2 L5.5 0.8" fill="none" stroke="#cfcfcf" stroke-width="1"/></svg>
<div style="left:769.5px;top:36px;width:19.5px;height:11.5px;background:#2b2b2b;border-radius:3px;"></div>
<svg style="position:absolute;left:770px;top:36.5px;overflow:visible;" width="13" height="11" viewBox="0 0 13 11"><circle cx="4.5" cy="6.5" r="2.6" fill="none" stroke="#ddd" stroke-width="0.9"/><circle cx="7.5" cy="4.5" r="2.6" fill="none" stroke="#ddd" stroke-width="0.9"/></svg>
<svg style="position:absolute;left:782px;top:40px;overflow:visible;" width="6" height="4" viewBox="0 0 6 4"><path d="M0.5 0.8 L3 3.2 L5.5 0.8" fill="none" stroke="#cfcfcf" stroke-width="1"/></svg>
<div style="left:794px;top:36px;width:33px;height:11.5px;background:#2b2b2b;border-radius:3px;"></div>
<div style="left:794px;top:36px;width:11.5px;height:11.5px;background:#545454;border-radius:3px;border-top-right-radius:0;border-bottom-right-radius:0"></div>
<svg style="position:absolute;left:794px;top:36px;overflow:visible;" width="33" height="12" viewBox="0 0 33 12"><path d="M3 9 V5 A3 3 0 0 1 9 5 V9" fill="none" stroke="#bbb" stroke-width="1.3"/><path d="M14 8 H22 M14 6 V10 M18 6 V10 M22 6 V10" stroke="#ddd" stroke-width="0.9"/><circle cx="18" cy="3" r="1" fill="#fff"/></svg>
<svg style="position:absolute;left:820px;top:40px;overflow:visible;" width="6" height="4" viewBox="0 0 6 4"><path d="M0.5 0.8 L3 3.2 L5.5 0.8" fill="none" stroke="#cfcfcf" stroke-width="1"/></svg>
<div style="left:832px;top:36px;width:33px;height:11.5px;background:#2f2f2f;border-radius:3px;"></div>
<div style="left:832px;top:36px;width:11.5px;height:11.5px;background:#545454;border-radius:3px;border-top-right-radius:0;border-bottom-right-radius:0"></div>
<svg style="position:absolute;left:832px;top:36px;overflow:visible;" width="33" height="12" viewBox="0 0 33 12"><circle cx="5.8" cy="5.8" r="3.8" fill="none" stroke="#ccc" stroke-width="0.9"/><circle cx="5.8" cy="5.8" r="1.3" fill="#ccc"/><path d="M14 9.5 Q17 0.5 20 9.5" fill="none" stroke="#999" stroke-width="0.9"/></svg>
<svg style="position:absolute;left:858px;top:40px;overflow:visible;" width="6" height="4" viewBox="0 0 6 4"><path d="M0.5 0.8 L3 3.2 L5.5 0.8" fill="none" stroke="#777" stroke-width="1"/></svg>
<svg style="position:absolute;left:942px;top:36px;overflow:visible;" width="12" height="12" viewBox="0 0 12 12"><path d="M5.5 1.5 V10.5" stroke="#ddd" stroke-width="0.7" stroke-dasharray="1 1"/><path d="M4 2.5 L1.5 5 L4 9 Z M7 2.5 L10 5 L7 9 Z" fill="none" stroke="#ddd" stroke-width="0.9"/></svg>
<div style="left:957px;top:36px;width:32px;height:11.5px;background:#545454;border-radius:3px;"></div>
<div class="t" style="left:957.0px;top:36.3px;width:10.7px;height:12px;line-height:12px;font-size:7.6px;color:#d0d0d0;text-align:center;">X</div>
<div class="t" style="left:967.7px;top:36.3px;width:10.7px;height:12px;line-height:12px;font-size:7.6px;color:#d0d0d0;text-align:center;">Y</div>
<div class="t" style="left:978.4px;top:36.3px;width:10.7px;height:12px;line-height:12px;font-size:7.6px;color:#d0d0d0;text-align:center;">Z</div>
<div style="left:994px;top:36px;width:11px;height:11.5px;background:#545454;border-radius:3px;"></div>
<svg style="position:absolute;left:994px;top:36px;overflow:visible;" width="11" height="12" viewBox="0 0 11 12"><path d="M2 9.5 L9 2.5" stroke="#888" stroke-width="0.8" stroke-dasharray="1 1.2"/><rect x="7.5" y="1.5" width="2" height="2" fill="none" stroke="#aaa" stroke-width="0.7"/><rect x="1.5" y="8.5" width="2" height="2" fill="none" stroke="#aaa" stroke-width="0.7"/></svg>
<div style="left:1011.5px;top:36px;width:39.5px;height:11.5px;background:#2b2b2b;border-radius:3px;"></div>
<div class="t" style="left:1015px;top:36.3px;height:12px;line-height:12px;font-size:7.6px;color:#dedede;text-align:left;">Options</div>
<svg style="position:absolute;left:1044px;top:40px;overflow:visible;" width="6" height="4" viewBox="0 0 6 4"><path d="M0.5 0.8 L3 3.2 L5.5 0.8" fill="none" stroke="#cfcfcf" stroke-width="1"/></svg>
<div style="left:541.3px;top:53.2px;width:71.3px;height:11.6px;background:#2b2b2b;border-radius:3px;"></div>
<svg style="position:absolute;left:543px;top:54px;overflow:visible;" width="12" height="11" viewBox="0 0 12 11"><rect x="1" y="1" width="2" height="2" fill="none" stroke="#ccc" stroke-width="0.7"/><rect x="1" y="8" width="2" height="2" fill="none" stroke="#ccc" stroke-width="0.7"/><rect x="8" y="8" width="2" height="2" fill="none" stroke="#ccc" stroke-width="0.7"/><rect x="7.5" y="0.5" width="3" height="3" fill="#eee"/><path d="M2 3 V8 M3 9 H8 M9 3.5 V8 M3 2 H7.5" stroke="#ccc" stroke-width="0.7"/></svg>
<div class="t" style="left:557.5px;top:53.5px;height:12px;line-height:12px;font-size:7.6px;color:#dedede;text-align:left;">Edit Mode</div>
<svg style="position:absolute;left:605px;top:57px;overflow:visible;" width="6" height="4" viewBox="0 0 6 4"><path d="M0.5 0.8 L3 3.2 L5.5 0.8" fill="none" stroke="#cfcfcf" stroke-width="1"/></svg>
<div style="left:618px;top:53.2px;width:37.3px;height:11.6px;background:#545454;border-radius:3px;"></div>
<div style="left:643.2px;top:53.2px;width:12.1px;height:11.6px;background:#4772b3;border-radius:3px;border-top-left-radius:0;border-bottom-left-radius:0"></div>
<svg style="position:absolute;left:618px;top:53.2px;overflow:visible;" width="38" height="12" viewBox="0 0 38 12"><path d="M2.5 3 H9.5 V10 H2.5 Z" fill="none" stroke="#bbb" stroke-width="0.8"/><rect x="1.5" y="4.5" width="2.5" height="2" fill="#e6cbb0"/><path d="M15 3 H21.5 V10 H15 Z" fill="none" stroke="#bbb" stroke-width="0.8"/><rect x="17.5" y="4.5" width="1.5" height="5.5" fill="#e6cbb0"/><path d="M28 2.5 H36 V9.5" fill="none" stroke="#ccc" stroke-width="0.8"/><rect x="26" y="4" width="8" height="7" fill="#f5f5f5"/></svg>
<div style="left:660.8px;top:53.2px;width:24.200000000000045px;height:11.6px;background:#333333;border-radius:3px;"></div>
<div class="t" style="left:660.8px;top:53.5px;width:24.200000000000045px;height:12px;line-height:12px;font-size:7.6px;color:#d8d8d8;text-align:center;">View</div>
<div style="left:687px;top:53.2px;width:28.600000000000023px;height:11.6px;background:#333333;border-radius:3px;"></div>
<div class="t" style="left:687px;top:53.5px;width:28.600000000000023px;height:12px;line-height:12px;font-size:7.6px;color:#d8d8d8;text-align:center;">Select</div>
<div style="left:717.8px;top:53.2px;width:21.200000000000045px;height:11.6px;background:#333333;border-radius:3px;"></div>
<div class="t" style="left:717.8px;top:53.5px;width:21.200000000000045px;height:12px;line-height:12px;font-size:7.6px;color:#d8d8d8;text-align:center;">Add</div>
<div style="left:741px;top:53.2px;width:24px;height:11.6px;background:#333333;border-radius:3px;"></div>
<div class="t" style="left:741px;top:53.5px;width:24px;height:12px;line-height:12px;font-size:7.6px;color:#d8d8d8;text-align:center;">Mesh</div>
<div style="left:767px;top:53.2px;width:30.5px;height:11.6px;background:#333333;border-radius:3px;"></div>
<div class="t" style="left:767px;top:53.5px;width:30.5px;height:12px;line-height:12px;font-size:7.6px;color:#d8d8d8;text-align:center;">Vertex</div>
<div style="left:799.7px;top:53.2px;width:23.0px;height:11.6px;background:#333333;border-radius:3px;"></div>
<div class="t" style="left:799.7px;top:53.5px;width:23.0px;height:12px;line-height:12px;font-size:7.6px;color:#d8d8d8;text-align:center;">Edge</div>
<div style="left:825.5px;top:53.2px;width:24.100000000000023px;height:11.6px;background:#333333;border-radius:3px;"></div>
<div class="t" style="left:825.5px;top:53.5px;width:24.100000000000023px;height:12px;line-height:12px;font-size:7.6px;color:#d8d8d8;text-align:center;">Face</div>
<div style="left:851.8px;top:53.2px;width:17.90000000000009px;height:11.6px;background:#333333;border-radius:3px;"></div>
<div class="t" style="left:851.8px;top:53.5px;width:17.90000000000009px;height:12px;line-height:12px;font-size:7.6px;color:#d8d8d8;text-align:center;">UV</div>
<div style="left:887px;top:53.2px;width:19.4px;height:11.6px;background:#2b2b2b;border-radius:3px;"></div>
<svg style="position:absolute;left:888px;top:54px;overflow:visible;" width="12" height="11" viewBox="0 0 12 11"><path d="M1.5 10 L3 5 L6 7 Z" fill="#e6e6e6"/><ellipse cx="6.5" cy="3.8" rx="3.5" ry="2.2" fill="none" stroke="#ddd" stroke-width="0.9"/><circle cx="6.5" cy="3.8" r="1" fill="#ddd"/></svg>
<svg style="position:absolute;left:899.5px;top:57px;overflow:visible;" width="6" height="4" viewBox="0 0 6 4"><path d="M0.5 0.8 L3 3.2 L5.5 0.8" fill="none" stroke="#cfcfcf" stroke-width="1"/></svg>
<div style="left:911px;top:53.2px;width:25.4px;height:11.6px;background:#2b2b2b;border-radius:3px;"></div>
<div style="left:911px;top:53.2px;width:12.5px;height:11.6px;background:#4772b3;border-radius:3px;border-top-right-radius:0;border-bottom-right-radius:0"></div>
<svg style="position:absolute;left:911px;top:53.2px;overflow:visible;" width="13" height="12" viewBox="0 0 13 12"><path d="M2.5 10 Q3 3 10.5 2.5" fill="none" stroke="#eee" stroke-width="0.9"/><path d="M3 8 L9.5 2" stroke="#eee" stroke-width="0.9"/><path d="M10.5 1.5 V4.5 H7.5 Z" fill="#eee"/></svg>
<svg style="position:absolute;left:927px;top:57px;overflow:visible;" width="6" height="4" viewBox="0 0 6 4"><path d="M0.5 0.8 L3 3.2 L5.5 0.8" fill="none" stroke="#cfcfcf" stroke-width="1"/></svg>
<div style="left:941.5px;top:53.2px;width:25px;height:11.6px;background:#2b2b2b;border-radius:3px;"></div>
<div style="left:941.5px;top:53.2px;width:12.5px;height:11.6px;background:#4772b3;border-radius:3px;border-top-right-radius:0;border-bottom-right-radius:0"></div>
<svg style="position:absolute;left:941.5px;top:53.2px;overflow:visible;" width="13" height="12" viewBox="0 0 13 12"><circle cx="5" cy="7" r="3.5" fill="none" stroke="#eee" stroke-width="0.9"/><circle cx="7.5" cy="5" r="3.5" fill="#eee"/></svg>
<svg style="position:absolute;left:957.5px;top:57px;overflow:visible;" width="6" height="4" viewBox="0 0 6 4"><path d="M0.5 0.8 L3 3.2 L5.5 0.8" fill="none" stroke="#cfcfcf" stroke-width="1"/></svg>
<div style="left:971.4px;top:53.2px;width:11.6px;height:11.6px;background:#545454;border-radius:3px;"></div>
<svg style="position:absolute;left:971.4px;top:53.2px;overflow:visible;" width="12" height="12" viewBox="0 0 12 12"><rect x="2" y="4" width="6" height="6" fill="none" stroke="#ddd" stroke-width="0.8"/><rect x="4" y="2" width="6" height="6" fill="none" stroke="#ddd" stroke-width="0.8"/></svg>
<div style="left:987.8px;top:53.2px;width:50.2px;height:11.6px;background:#545454;border-radius:3px;"></div>
<div style="left:1013px;top:53.2px;width:12.5px;height:11.6px;background:#4772b3;border-radius:0px;"></div>
<svg style="position:absolute;left:987.8px;top:53.2px;overflow:visible;" width="51" height="12" viewBox="0 0 51 12"><circle cx="6" cy="6" r="4" fill="none" stroke="#ccc" stroke-width="0.8"/><path d="M2 6 H10 M6 2 V10" stroke="#ccc" stroke-width="0.6"/><ellipse cx="6" cy="6" rx="2" ry="4" fill="none" stroke="#ccc" stroke-width="0.6"/><circle cx="18.5" cy="6" r="4.2" fill="#e6cbb0"/><circle cx="31.5" cy="6" r="4.2" fill="#eee"/><path d="M31.5 1.8 A4.2 4.2 0 0 0 27.3 6 H31.5 Z M31.5 6 L35 9 A4.2 4.2 0 0 1 31.5 10.2 Z" fill="#4772b3"/><circle cx="44" cy="6" r="4" fill="none" stroke="#ccc" stroke-width="0.9"/><path d="M41.5 8 A3 3 0 0 0 46.5 3.5" fill="none" stroke="#999" stroke-width="0.8"/></svg>
<div style="left:1039px;top:53.2px;width:12px;height:11.6px;background:#2b2b2b;border-radius:3px;"></div>
<svg style="position:absolute;left:1042px;top:57px;overflow:visible;" width="6" height="4" viewBox="0 0 6 4"><path d="M0.5 0.8 L3 3.2 L5.5 0.8" fill="none" stroke="#cfcfcf" stroke-width="1"/></svg>
<div class="t" style="left:541.5px;top:73.0px;height:11px;line-height:11px;font-size:7.3px;color:#e4e4e4;text-align:left;">User Perspective</div>
<div class="t" style="left:541.5px;top:85.0px;height:11px;line-height:11px;font-size:7.3px;color:#e4e4e4;text-align:left;">(1) Cube</div>
<svg style="position:absolute;left:1051px;top:77px;overflow:visible;" width="8" height="10" viewBox="0 0 8 10"><path d="M5 2.5 L2.5 5 L5 7.5" fill="none" stroke="#999" stroke-width="0.9"/></svg>
<svg style="position:absolute;left:535px;top:33px;overflow:visible;" width="522" height="646" viewBox="0 0 522 646"><defs><clipPath id="vpclip"><rect x="0" y="0" width="522" height="646" rx="4"/></clipPath><clipPath id="fL"><polygon points="25.3,193.0 248.0,256.4 256.9,610.2 85.0,440.2"/></clipPath><clipPath id="fR"><polygon points="248.0,256.4 473.8,186.0 428.4,428.9 256.9,610.2"/></clipPath><clipPath id="fT"><polygon points="25.3,193.0 251.0,164.6 473.8,186.0 248.0,256.4"/></clipPath></defs><g clip-path="url(#vpclip)"><defs><linearGradient id="gfade" gradientUnits="userSpaceOnUse" x1="0" y1="112" x2="0" y2="527">
<stop offset="0" stop-color="#fff" stop-opacity="0"/><stop offset="0.03" stop-color="#fff" stop-opacity="0.12"/><stop offset="0.25" stop-color="#fff" stop-opacity="0.45"/><stop offset="0.6" stop-color="#fff" stop-opacity="0.85"/><stop offset="1" stop-color="#fff" stop-opacity="1"/></linearGradient>
<mask id="gmask" maskUnits="userSpaceOnUse" x="0" y="0" width="522" height="646"><rect x="0" y="0" width="522" height="646" fill="url(#gfade)"/></mask></defs>
<path d="M583.7 1932.0L-253.7 114.8M-37.1 1932.0L713.9 114.6M786.0 857.1L-251.0 114.8M-339.4 948.4L711.8 114.6M744.1 417.6L-245.8 114.8M-289.3 451.8L707.5 114.6M737.5 348.0L-243.2 114.8M-281.4 374.0L705.3 114.5M733.3 304.2L-240.6 114.8M-276.5 325.2L703.2 114.5M730.4 274.1L-238.0 114.8M-273.1 291.7L701.1 114.5M728.3 252.2L-235.5 114.8M-270.7 267.3L698.9 114.5M726.8 235.5L-232.9 114.8M-268.8 248.8L696.8 114.5M725.5 222.3L-230.4 114.8M-267.3 234.2L694.7 114.5M724.5 211.7L-227.8 114.8M-266.1 222.4L692.7 114.5M723.7 203.0L-225.3 114.8M-265.2 212.7L690.6 114.5M723.0 195.6L-222.8 114.7M-264.3 204.5L688.5 114.5M722.4 189.4L-220.4 114.7M-263.6 197.6L686.4 114.5M721.9 184.0L-217.9 114.7M-263.0 191.7L684.4 114.5M721.4 179.3L-215.4 114.7M-262.5 186.5L682.4 114.5M721.0 175.2L-213.0 114.7M-262.1 181.9L680.3 114.5M720.7 171.6L-210.6 114.7M-261.7 177.9L678.3 114.5M720.4 168.3L-208.1 114.7M-261.3 174.3L676.3 114.5M720.1 165.4L-205.7 114.7M-261.0 171.1L674.3 114.5M719.8 162.8L-203.3 114.7M-260.7 168.2L672.3 114.5M719.6 160.4L-201.0 114.7M-260.4 165.6L670.3 114.5M719.4 158.3L-198.6 114.7M-260.2 163.2L668.3 114.5M719.2 156.3L-196.2 114.7M-259.9 161.0L666.3 114.4M719.0 154.5L-193.9 114.7M-259.7 159.0L664.4 114.4M718.9 152.8L-191.6 114.7M-259.6 157.1L662.4 114.4M718.7 151.3L-189.2 114.7M-259.4 155.4L660.5 114.4M718.6 149.8L-186.9 114.6M-259.2 153.8L658.5 114.4M718.5 148.5L-184.6 114.6M-259.1 152.3L656.6 114.4M718.4 147.3L-182.4 114.6M-258.9 151.0L654.7 114.4M718.2 146.1L-180.1 114.6M-258.8 149.7L652.8 114.4M718.1 145.0L-177.8 114.6M-258.7 148.5L650.9 114.4M718.0 144.0L-175.6 114.6M-258.6 147.4L649.0 114.4M718.0 143.0L-173.3 114.6M-258.5 146.3L647.1 114.4M717.9 142.1L-171.1 114.6M-258.4 145.3L645.2 114.4M717.8 141.3L-168.9 114.6M-258.3 144.4L643.3 114.4M717.7 140.5L-166.7 114.6M-258.2 143.5L641.4 114.4M717.6 139.7L-164.5 114.6M-258.1 142.6L639.6 114.4M717.6 139.0L-162.3 114.6M-258.0 141.8L637.7 114.4M717.5 138.3L-160.1 114.6M-257.9 141.1L635.9 114.4M717.4 137.7L-158.0 114.6M-257.9 140.4L634.1 114.4M717.4 137.0L-155.8 114.6M-257.8 139.7L632.2 114.4M717.3 136.4L-153.7 114.5M-257.7 139.0L630.4 114.3M717.3 135.9L-151.5 114.5M-257.7 138.4L628.6 114.3M717.2 135.3L-149.4 114.5M-257.6 137.8L626.8 114.3M717.2 134.8L-147.3 114.5M-257.5 137.2L625.0 114.3M717.1 134.3L-145.2 114.5M-257.5 136.7L623.2 114.3M717.1 133.9L-143.1 114.5M-257.4 136.2L621.4 114.3M717.0 133.4L-141.1 114.5M-257.4 135.7L619.6 114.3M717.0 133.0L-139.0 114.5M-257.3 135.2L617.9 114.3M717.0 132.6L-136.9 114.5M-257.3 134.7L616.1 114.3M716.9 132.2L-134.9 114.5M-257.2 134.3L614.3 114.3M716.9 131.8L-132.8 114.5M-257.2 133.9L612.6 114.3M716.8 131.4L-130.8 114.5M-257.2 133.4L610.9 114.3M716.8 131.0L-128.8 114.5M-257.1 133.1L609.1 114.3M716.8 130.7L-126.8 114.5M-257.1 132.7L607.4 114.3M716.7 130.4L-124.8 114.5M-257.0 132.3L605.7 114.3M716.7 130.1L-122.8 114.5M-257.0 132.0L604.0 114.3M716.7 129.7L-120.8 114.5M-257.0 131.6L602.2 114.3M716.7 129.4L-118.8 114.4M-256.9 131.3L600.5 114.3M716.6 129.2L-116.9 114.4M-256.9 131.0L598.9 114.3M716.6 128.9L-114.9 114.4M-256.9 130.7L597.2 114.3M716.6 128.6L-113.0 114.4M-256.9 130.4L595.5 114.3M716.6 128.3L-111.0 114.4M-256.8 130.1L593.8 114.3M716.5 128.1L-109.1 114.4M-256.8 129.8L592.1 114.2M716.5 127.8L-107.2 114.4M-256.8 129.5L590.5 114.2M716.5 127.6L-105.3 114.4M-256.7 129.2L588.8 114.2M716.5 127.4L-103.4 114.4M-256.7 129.0L587.2 114.2M716.4 127.1L-101.5 114.4M-256.7 128.7L585.5 114.2M716.4 126.9L-99.6 114.4M-256.7 128.5L583.9 114.2M716.4 126.7L-97.7 114.4M-256.6 128.3L582.3 114.2M716.4 126.5L-95.9 114.4M-256.6 128.0L580.7 114.2M716.4 126.3L-94.0 114.4M-256.6 127.8L579.0 114.2M716.3 126.1L-92.2 114.4M-256.6 127.6L577.4 114.2M716.3 125.9L-90.3 114.4M-256.6 127.4L575.8 114.2M716.3 125.7L-88.5 114.4M-256.5 127.2L574.2 114.2M716.3 125.6L-86.7 114.4M-256.5 127.0L572.6 114.2M716.3 125.4L-84.9 114.3M-256.5 126.8L571.1 114.2M716.3 125.2L-83.1 114.3M-256.5 126.6L569.5 114.2M716.2 125.1L-81.3 114.3M-256.5 126.4L567.9 114.2M716.2 124.9L-79.5 114.3M-256.4 126.2L566.3 114.2M716.2 124.7L-77.7 114.3M-256.4 126.1L564.8 114.2M716.2 124.6L-75.9 114.3M-256.4 125.9L563.2 114.2M716.2 124.4L-74.1 114.3M-256.4 125.7L561.7 114.2M716.2 124.3L-72.4 114.3M-256.4 125.6L560.1 114.2M716.2 124.1L-70.6 114.3M-256.4 125.4L558.6 114.2M716.1 124.0L-68.9 114.3M-256.3 125.3L557.1 114.2M716.1 123.9L-67.2 114.3M-256.3 125.1L555.5 114.2M716.1 123.7L-65.4 114.3M-256.3 125.0L554.0 114.1M716.1 123.6L-63.7 114.3M-256.3 124.8L552.5 114.1M716.1 123.5L-62.0 114.3M-256.3 124.7L551.0 114.1M716.1 123.3L-60.3 114.3M-256.3 124.5L549.5 114.1M716.1 123.2L-58.6 114.3M-256.3 124.4L548.0 114.1M716.1 123.1L-56.9 114.3M-256.2 124.3L546.5 114.1M716.0 123.0L-55.2 114.3M-256.2 124.1L545.0 114.1M716.0 122.9L-53.5 114.3M-256.2 124.0L543.5 114.1M716.0 122.7L-51.9 114.2M-256.2 123.9L542.1 114.1M716.0 122.6L-50.2 114.2M-256.2 123.8L540.6 114.1M716.0 122.5L-48.6 114.2M-256.2 123.6L539.1 114.1M716.0 122.4L-46.9 114.2M-256.2 123.5L537.7 114.1M716.0 122.3L-45.3 114.2M-256.2 123.4L536.2 114.1M716.0 122.2L-43.6 114.2M-256.1 123.3L534.8 114.1M716.0 122.1L-42.0 114.2M-256.1 123.2L533.3 114.1M716.0 122.0L-40.4 114.2M-256.1 123.1L531.9 114.1M715.9 121.9L-38.8 114.2M-256.1 123.0L530.4 114.1M715.9 121.8L-37.2 114.2M-256.1 122.9L529.0 114.1M715.9 121.7L-35.6 114.2M-256.1 122.8L527.6 114.1M715.9 121.6L-34.0 114.2M-256.1 122.7L526.2 114.1M715.9 121.6L-32.4 114.2M-256.1 122.6L524.8 114.1M715.9 121.5L-30.8 114.2M-256.1 122.5L523.4 114.1M715.9 121.4L-29.3 114.2M-256.0 122.4L522.0 114.1M715.9 121.3L-27.7 114.2M-256.0 122.3L520.6 114.1M715.9 121.2L-26.1 114.2M-256.0 122.2L519.2 114.1M715.9 121.1L-24.6 114.2M-256.0 122.1L517.8 114.1M715.9 121.1L-23.0 114.2M-256.0 122.0L516.4 114.0M715.9 121.0L-21.5 114.2M-256.0 121.9L515.0 114.0M715.8 120.9L-20.0 114.2M-256.0 121.8L513.6 114.0M715.8 120.8L-18.5 114.2M-256.0 121.8L512.3 114.0M715.8 120.8L-16.9 114.1M-256.0 121.7L510.9 114.0M715.8 120.7L-15.4 114.1M-256.0 121.6L509.6 114.0M715.8 120.6L-13.9 114.1M-256.0 121.5L508.2 114.0M715.8 120.5L-12.4 114.1M-256.0 121.4L506.9 114.0" stroke="#585858" stroke-width="0.8" fill="none" mask="url(#gmask)"/><line x1="32.5" y1="647.0" x2="177.6" y2="533.0" stroke="#5c5c5c" stroke-width="0.9"/><line x1="333.0" y1="532.3" x2="488.8" y2="643.5" stroke="#5c5c5c" stroke-width="0.9"/><line x1="488.8" y1="643.5" x2="522.0" y2="572.0" stroke="#5c5c5c" stroke-width="0.9"/><line x1="0.0" y1="617.7" x2="13.0" y2="647.0" stroke="#5c5c5c" stroke-width="0.9"/><line x1="0" y1="450" x2="78" y2="413.3" stroke="#b8622a" stroke-width="1.1"/><line x1="466" y1="230" x2="522" y2="206" stroke="#b8622a" stroke-width="1.1"/><line x1="430.29999999999995" y1="409" x2="522" y2="447" stroke="#5a9a3a" stroke-width="1.1"/><line x1="0" y1="220.9" x2="35" y2="236.5" stroke="#5a9a3a" stroke-width="1.1"/><polygon points="25.3,193.0 248.0,256.4 256.9,610.2 85.0,440.2" fill="#d8c2ad"/><polygon points="248.0,256.4 473.8,186.0 428.4,428.9 256.9,610.2" fill="#cca877"/><polygon points="25.3,193.0 251.0,164.6 473.8,186.0 248.0,256.4" fill="#dfc59d"/><defs><filter id="soft2" x="-5%" y="-5%" width="110%" height="110%"><feGaussianBlur stdDeviation="0.8"/></filter><g id="rip2" filter="url(#soft2)"><path d="M-5.0 -3.1 L0.0 -3.3 L5.0 -3.6 L10.0 -3.8 L15.0 -3.9 L20.0 -3.9 L25.0 -3.8 L30.0 -3.6 L35.0 -3.3 L40.0 -2.8 L45.0 -2.4 L50.0 -1.8 L55.0 -1.3 L60.0 -0.7 L65.0 -0.2 L70.0 0.3 L75.0 0.7 L80.0 0.9 L85.0 1.1 L90.0 1.2 L95.0 1.1 L100.0 1.0 L105.0 0.8 L110.0 0.5 L115.0 0.2 L120.0 -0.1 L125.0 -0.4 L130.0 -0.6 L135.0 -0.8 L140.0 -0.9 L145.0 -0.9 L150.0 -0.8 L155.0 -0.7 L160.0 -0.5 L165.0 -0.2 L170.0 0.0 L175.0 0.3 L180.0 0.5 L185.0 0.6 L190.0 0.7 L195.0 0.7 L200.0 0.6 L205.0 0.4 L210.0 0.1 L215.0 -0.2 L220.0 -0.6 L225.0 -1.0 L230.0 -1.4 L235.0 -1.8 L240.0 -2.1 L245.0 -2.3 L250.0 -2.4 L255.0 -2.4 L260.0 -2.3 L265.0 -2.1 L270.0 -1.8 L275.0 -1.4 L280.0 -0.9 L285.0 -0.5 L290.0 0.0 L295.0 0.5 L300.0 0.9 L305.0 1.2 L310.0 1.4 L315.0 1.5 L320.0 1.6 L325.0 1.5 L330.0 1.3 L335.0 1.1 L340.0 0.9 L345.0 0.6 L350.0 0.3 L355.0 0.1 L360.0 -0.1 L365.0 -0.2 L370.0 -0.2 L375.0 -0.2 L380.0 -0.1 L385.0 0.1 L390.0 0.4 L395.0 0.6 L400.0 0.9 L405.0 1.1 L410.0 1.2 L415.0 1.3 L420.0 1.3 L425.0 1.2" fill="none" stroke="#8f7a5e" stroke-width="3.2" stroke-opacity="0.38" stroke-dasharray="64 6" stroke-dashoffset="16"/><path d="M-5.0 -5.5 L0.0 -5.7 L5.0 -6.0 L10.0 -6.2 L15.0 -6.3 L20.0 -6.3 L25.0 -6.2 L30.0 -6.0 L35.0 -5.7 L40.0 -5.2 L45.0 -4.8 L50.0 -4.2 L55.0 -3.7 L60.0 -3.1 L65.0 -2.6 L70.0 -2.1 L75.0 -1.7 L80.0 -1.5 L85.0 -1.3 L90.0 -1.2 L95.0 -1.3 L100.0 -1.4 L105.0 -1.6 L110.0 -1.9 L115.0 -2.2 L120.0 -2.5 L125.0 -2.8 L130.0 -3.0 L135.0 -3.2 L140.0 -3.3 L145.0 -3.3 L150.0 -3.2 L155.0 -3.1 L160.0 -2.9 L165.0 -2.6 L170.0 -2.4 L175.0 -2.1 L180.0 -1.9 L185.0 -1.8 L190.0 -1.7 L195.0 -1.7 L200.0 -1.8 L205.0 -2.0 L210.0 -2.3 L215.0 -2.6 L220.0 -3.0 L225.0 -3.4 L230.0 -3.8 L235.0 -4.2 L240.0 -4.5 L245.0 -4.7 L250.0 -4.8 L255.0 -4.8 L260.0 -4.7 L265.0 -4.5 L270.0 -4.2 L275.0 -3.8 L280.0 -3.3 L285.0 -2.9 L290.0 -2.4 L295.0 -1.9 L300.0 -1.5 L305.0 -1.2 L310.0 -1.0 L315.0 -0.9 L320.0 -0.8 L325.0 -0.9 L330.0 -1.1 L335.0 -1.3 L340.0 -1.5 L345.0 -1.8 L350.0 -2.1 L355.0 -2.3 L360.0 -2.5 L365.0 -2.6 L370.0 -2.6 L375.0 -2.6 L380.0 -2.5 L385.0 -2.3 L390.0 -2.0 L395.0 -1.8 L400.0 -1.5 L405.0 -1.3 L410.0 -1.2 L415.0 -1.1 L420.0 -1.1 L425.0 -1.2" fill="none" stroke="#f4ead8" stroke-width="1.8" stroke-opacity="0.4" stroke-dasharray="62 5" stroke-dashoffset="40"/><path d="M-5.0 8.0 L0.0 8.2 L5.0 8.3 L10.0 8.4 L15.0 8.6 L20.0 8.6 L25.0 8.7 L30.0 8.7 L35.0 8.6 L40.0 8.5 L45.0 8.4 L50.0 8.2 L55.0 7.9 L60.0 7.7 L65.0 7.4 L70.0 7.1 L75.0 6.9 L80.0 6.7 L85.0 6.5 L90.0 6.4 L95.0 6.4 L100.0 6.5 L105.0 6.7 L110.0 6.9 L115.0 7.2 L120.0 7.6 L125.0 8.1 L130.0 8.5 L135.0 9.1 L140.0 9.6 L145.0 10.1 L150.0 10.5 L155.0 11.0 L160.0 11.3 L165.0 11.6 L170.0 11.9 L175.0 12.0 L180.0 12.1 L185.0 12.2 L190.0 12.1 L195.0 12.0 L200.0 11.9 L205.0 11.8 L210.0 11.6 L215.0 11.5 L220.0 11.3 L225.0 11.2 L230.0 11.1 L235.0 11.0 L240.0 11.0 L245.0 11.0 L250.0 11.0 L255.0 11.0 L260.0 11.1 L265.0 11.1 L270.0 11.0 L275.0 11.0 L280.0 10.9 L285.0 10.7 L290.0 10.5 L295.0 10.2 L300.0 9.9 L305.0 9.6 L310.0 9.2 L315.0 8.8 L320.0 8.3 L325.0 7.9 L330.0 7.5 L335.0 7.2 L340.0 6.9 L345.0 6.7 L350.0 6.5 L355.0 6.5 L360.0 6.5 L365.0 6.6 L370.0 6.8 L375.0 7.0 L380.0 7.3 L385.0 7.7 L390.0 8.0 L395.0 8.4 L400.0 8.7 L405.0 9.0 L410.0 9.3 L415.0 9.5 L420.0 9.7 L425.0 9.8" fill="none" stroke="#8f7a5e" stroke-width="3.2" stroke-opacity="0.38" stroke-dasharray="83 4" stroke-dashoffset="21"/><path d="M-5.0 5.6 L0.0 5.8 L5.0 5.9 L10.0 6.0 L15.0 6.2 L20.0 6.2 L25.0 6.3 L30.0 6.3 L35.0 6.2 L40.0 6.1 L45.0 6.0 L50.0 5.8 L55.0 5.5 L60.0 5.3 L65.0 5.0 L70.0 4.7 L75.0 4.5 L80.0 4.3 L85.0 4.1 L90.0 4.0 L95.0 4.0 L100.0 4.1 L105.0 4.3 L110.0 4.5 L115.0 4.8 L120.0 5.2 L125.0 5.7 L130.0 6.1 L135.0 6.7 L140.0 7.2 L145.0 7.7 L150.0 8.1 L155.0 8.6 L160.0 8.9 L165.0 9.2 L170.0 9.5 L175.0 9.6 L180.0 9.7 L185.0 9.8 L190.0 9.7 L195.0 9.6 L200.0 9.5 L205.0 9.4 L210.0 9.2 L215.0 9.1 L220.0 8.9 L225.0 8.8 L230.0 8.7 L235.0 8.6 L240.0 8.6 L245.0 8.6 L250.0 8.6 L255.0 8.6 L260.0 8.7 L265.0 8.7 L270.0 8.6 L275.0 8.6 L280.0 8.5 L285.0 8.3 L290.0 8.1 L295.0 7.8 L300.0 7.5 L305.0 7.2 L310.0 6.8 L315.0 6.4 L320.0 5.9 L325.0 5.5 L330.0 5.1 L335.0 4.8 L340.0 4.5 L345.0 4.3 L350.0 4.1 L355.0 4.1 L360.0 4.1 L365.0 4.2 L370.0 4.4 L375.0 4.6 L380.0 4.9 L385.0 5.3 L390.0 5.6 L395.0 6.0 L400.0 6.3 L405.0 6.6 L410.0 6.9 L415.0 7.1 L420.0 7.3 L425.0 7.4" fill="none" stroke="#f4ead8" stroke-width="1.8" stroke-opacity="0.4" stroke-dasharray="64 3" stroke-dashoffset="56"/><path d="M-5.0 17.4 L0.0 17.6 L5.0 17.7 L10.0 17.7 L15.0 17.6 L20.0 17.3 L25.0 16.9 L30.0 16.3 L35.0 15.7 L40.0 15.0 L45.0 14.3 L50.0 13.7 L55.0 13.2 L60.0 12.8 L65.0 12.6 L70.0 12.6 L75.0 12.7 L80.0 13.0 L85.0 13.3 L90.0 13.7 L95.0 14.0 L100.0 14.2 L105.0 14.4 L110.0 14.4 L115.0 14.3 L120.0 14.0 L125.0 13.7 L130.0 13.3 L135.0 12.9 L140.0 12.6 L145.0 12.4 L150.0 12.3 L155.0 12.4 L160.0 12.6 L165.0 13.0 L170.0 13.5 L175.0 14.1 L180.0 14.7 L185.0 15.2 L190.0 15.7 L195.0 16.0 L200.0 16.2 L205.0 16.2 L210.0 16.0 L215.0 15.7 L220.0 15.3 L225.0 14.9 L230.0 14.5 L235.0 14.1 L240.0 13.8 L245.0 13.7 L250.0 13.7 L255.0 13.8 L260.0 14.1 L265.0 14.4 L270.0 14.7 L275.0 15.0 L280.0 15.3 L285.0 15.4 L290.0 15.3 L295.0 15.1 L300.0 14.8 L305.0 14.3 L310.0 13.8 L315.0 13.2 L320.0 12.6 L325.0 12.1 L330.0 11.7 L335.0 11.5 L340.0 11.4 L345.0 11.5 L350.0 11.7 L355.0 12.1 L360.0 12.5 L365.0 13.0 L370.0 13.4 L375.0 13.8 L380.0 14.0 L385.0 14.1 L390.0 14.1 L395.0 14.0 L400.0 13.8 L405.0 13.5 L410.0 13.2 L415.0 13.0 L420.0 12.9 L425.0 13.0" fill="none" stroke="#8f7a5e" stroke-width="3.2" stroke-opacity="0.38" stroke-dasharray="61 3" stroke-dashoffset="27"/><path d="M-5.0 15.0 L0.0 15.2 L5.0 15.3 L10.0 15.3 L15.0 15.2 L20.0 14.9 L25.0 14.5 L30.0 13.9 L35.0 13.3 L40.0 12.6 L45.0 11.9 L50.0 11.3 L55.0 10.8 L60.0 10.4 L65.0 10.2 L70.0 10.2 L75.0 10.3 L80.0 10.6 L85.0 10.9 L90.0 11.3 L95.0 11.6 L100.0 11.8 L105.0 12.0 L110.0 12.0 L115.0 11.9 L120.0 11.6 L125.0 11.3 L130.0 10.9 L135.0 10.5 L140.0 10.2 L145.0 10.0 L150.0 9.9 L155.0 10.0 L160.0 10.2 L165.0 10.6 L170.0 11.1 L175.0 11.7 L180.0 12.3 L185.0 12.8 L190.0 13.3 L195.0 13.6 L200.0 13.8 L205.0 13.8 L210.0 13.6 L215.0 13.3 L220.0 12.9 L225.0 12.5 L230.0 12.1 L235.0 11.7 L240.0 11.4 L245.0 11.3 L250.0 11.3 L255.0 11.4 L260.0 11.7 L265.0 12.0 L270.0 12.3 L275.0 12.6 L280.0 12.9 L285.0 13.0 L290.0 12.9 L295.0 12.7 L300.0 12.4 L305.0 11.9 L310.0 11.4 L315.0 10.8 L320.0 10.2 L325.0 9.7 L330.0 9.3 L335.0 9.1 L340.0 9.0 L345.0 9.1 L350.0 9.3 L355.0 9.7 L360.0 10.1 L365.0 10.6 L370.0 11.0 L375.0 11.4 L380.0 11.6 L385.0 11.7 L390.0 11.7 L395.0 11.6 L400.0 11.4 L405.0 11.1 L410.0 10.8 L415.0 10.6 L420.0 10.5 L425.0 10.6" fill="none" stroke="#f4ead8" stroke-width="1.8" stroke-opacity="0.4" stroke-dasharray="53 7" stroke-dashoffset="3"/><path d="M-5.0 25.2 L0.0 25.2 L5.0 25.3 L10.0 25.4 L15.0 25.6 L20.0 25.9 L25.0 26.2 L30.0 26.5 L35.0 26.8 L40.0 27.1 L45.0 27.2 L50.0 27.3 L55.0 27.3 L60.0 27.2 L65.0 27.0 L70.0 26.7 L75.0 26.4 L80.0 26.0 L85.0 25.7 L90.0 25.4 L95.0 25.1 L100.0 25.0 L105.0 24.9 L110.0 24.9 L115.0 25.0 L120.0 25.1 L125.0 25.3 L130.0 25.5 L135.0 25.6 L140.0 25.8 L145.0 25.8 L150.0 25.8 L155.0 25.7 L160.0 25.5 L165.0 25.2 L170.0 24.8 L175.0 24.4 L180.0 24.0 L185.0 23.5 L190.0 23.1 L195.0 22.8 L200.0 22.6 L205.0 22.4 L210.0 22.3 L215.0 22.3 L220.0 22.4 L225.0 22.6 L230.0 22.8 L235.0 23.0 L240.0 23.1 L245.0 23.2 L250.0 23.3 L255.0 23.2 L260.0 23.1 L265.0 22.9 L270.0 22.6 L275.0 22.3 L280.0 22.0 L285.0 21.7 L290.0 21.4 L295.0 21.2 L300.0 21.0 L305.0 21.0 L310.0 21.0 L315.0 21.2 L320.0 21.4 L325.0 21.7 L330.0 22.1 L335.0 22.4 L340.0 22.7 L345.0 23.0 L350.0 23.3 L355.0 23.4 L360.0 23.5 L365.0 23.5 L370.0 23.4 L375.0 23.3 L380.0 23.1 L385.0 22.9 L390.0 22.7 L395.0 22.6 L400.0 22.6 L405.0 22.6 L410.0 22.8 L415.0 23.0 L420.0 23.3 L425.0 23.6" fill="none" stroke="#8f7a5e" stroke-width="3.2" stroke-opacity="0.38" stroke-dasharray="63 3" stroke-dashoffset="17"/><path d="M-5.0 22.8 L0.0 22.8 L5.0 22.9 L10.0 23.0 L15.0 23.2 L20.0 23.5 L25.0 23.8 L30.0 24.1 L35.0 24.4 L40.0 24.7 L45.0 24.8 L50.0 24.9 L55.0 24.9 L60.0 24.8 L65.0 24.6 L70.0 24.3 L75.0 24.0 L80.0 23.6 L85.0 23.3 L90.0 23.0 L95.0 22.7 L100.0 22.6 L105.0 22.5 L110.0 22.5 L115.0 22.6 L120.0 22.7 L125.0 22.9 L130.0 23.1 L135.0 23.2 L140.0 23.4 L145.0 23.4 L150.0 23.4 L155.0 23.3 L160.0 23.1 L165.0 22.8 L170.0 22.4 L175.0 22.0 L180.0 21.6 L185.0 21.1 L190.0 20.7 L195.0 20.4 L200.0 20.2 L205.0 20.0 L210.0 19.9 L215.0 19.9 L220.0 20.0 L225.0 20.2 L230.0 20.4 L235.0 20.6 L240.0 20.7 L245.0 20.8 L250.0 20.9 L255.0 20.8 L260.0 20.7 L265.0 20.5 L270.0 20.2 L275.0 19.9 L280.0 19.6 L285.0 19.3 L290.0 19.0 L295.0 18.8 L300.0 18.6 L305.0 18.6 L310.0 18.6 L315.0 18.8 L320.0 19.0 L325.0 19.3 L330.0 19.7 L335.0 20.0 L340.0 20.3 L345.0 20.6 L350.0 20.9 L355.0 21.0 L360.0 21.1 L365.0 21.1 L370.0 21.0 L375.0 20.9 L380.0 20.7 L385.0 20.5 L390.0 20.3 L395.0 20.2 L400.0 20.2 L405.0 20.2 L410.0 20.4 L415.0 20.6 L420.0 20.9 L425.0 21.2" fill="none" stroke="#f4ead8" stroke-width="1.8" stroke-opacity="0.4" stroke-dasharray="34 5" stroke-dashoffset="12"/><path d="M-5.0 31.5 L0.0 31.5 L5.0 31.6 L10.0 31.8 L15.0 32.0 L20.0 32.2 L25.0 32.5 L30.0 32.7 L35.0 32.9 L40.0 33.0 L45.0 33.1 L50.0 33.2 L55.0 33.1 L60.0 33.1 L65.0 32.9 L70.0 32.8 L75.0 32.6 L80.0 32.4 L85.0 32.2 L90.0 32.1 L95.0 32.0 L100.0 32.0 L105.0 32.1 L110.0 32.2 L115.0 32.4 L120.0 32.7 L125.0 33.1 L130.0 33.5 L135.0 33.9 L140.0 34.4 L145.0 34.8 L150.0 35.2 L155.0 35.6 L160.0 35.8 L165.0 36.1 L170.0 36.2 L175.0 36.3 L180.0 36.3 L185.0 36.3 L190.0 36.2 L195.0 36.1 L200.0 36.0 L205.0 35.9 L210.0 35.8 L215.0 35.8 L220.0 35.8 L225.0 35.9 L230.0 36.0 L235.0 36.2 L240.0 36.5 L245.0 36.8 L250.0 37.1 L255.0 37.4 L260.0 37.6 L265.0 37.9 L270.0 38.1 L275.0 38.2 L280.0 38.2 L285.0 38.2 L290.0 38.1 L295.0 37.9 L300.0 37.6 L305.0 37.3 L310.0 37.0 L315.0 36.7 L320.0 36.4 L325.0 36.1 L330.0 35.8 L335.0 35.7 L340.0 35.6 L345.0 35.5 L350.0 35.6 L355.0 35.7 L360.0 35.8 L365.0 36.0 L370.0 36.2 L375.0 36.4 L380.0 36.6 L385.0 36.8 L390.0 36.9 L395.0 37.0 L400.0 37.0 L405.0 36.9 L410.0 36.8 L415.0 36.6 L420.0 36.4 L425.0 36.2" fill="none" stroke="#8f7a5e" stroke-width="3.2" stroke-opacity="0.38" stroke-dasharray="90 5" stroke-dashoffset="21"/><path d="M-5.0 29.1 L0.0 29.1 L5.0 29.2 L10.0 29.4 L15.0 29.6 L20.0 29.8 L25.0 30.1 L30.0 30.3 L35.0 30.5 L40.0 30.6 L45.0 30.7 L50.0 30.8 L55.0 30.7 L60.0 30.7 L65.0 30.5 L70.0 30.4 L75.0 30.2 L80.0 30.0 L85.0 29.8 L90.0 29.7 L95.0 29.6 L100.0 29.6 L105.0 29.7 L110.0 29.8 L115.0 30.0 L120.0 30.3 L125.0 30.7 L130.0 31.1 L135.0 31.5 L140.0 32.0 L145.0 32.4 L150.0 32.8 L155.0 33.2 L160.0 33.4 L165.0 33.7 L170.0 33.8 L175.0 33.9 L180.0 33.9 L185.0 33.9 L190.0 33.8 L195.0 33.7 L200.0 33.6 L205.0 33.5 L210.0 33.4 L215.0 33.4 L220.0 33.4 L225.0 33.5 L230.0 33.6 L235.0 33.8 L240.0 34.1 L245.0 34.4 L250.0 34.7 L255.0 35.0 L260.0 35.2 L265.0 35.5 L270.0 35.7 L275.0 35.8 L280.0 35.8 L285.0 35.8 L290.0 35.7 L295.0 35.5 L300.0 35.2 L305.0 34.9 L310.0 34.6 L315.0 34.3 L320.0 34.0 L325.0 33.7 L330.0 33.4 L335.0 33.3 L340.0 33.2 L345.0 33.1 L350.0 33.2 L355.0 33.3 L360.0 33.4 L365.0 33.6 L370.0 33.8 L375.0 34.0 L380.0 34.2 L385.0 34.4 L390.0 34.5 L395.0 34.6 L400.0 34.6 L405.0 34.5 L410.0 34.4 L415.0 34.2 L420.0 34.0 L425.0 33.8" fill="none" stroke="#f4ead8" stroke-width="1.8" stroke-opacity="0.4" stroke-dasharray="30 3" stroke-dashoffset="48"/><path d="M-5.0 42.1 L0.0 42.3 L5.0 42.6 L10.0 42.9 L15.0 43.1 L20.0 43.2 L25.0 43.4 L30.0 43.4 L35.0 43.4 L40.0 43.3 L45.0 43.1 L50.0 42.9 L55.0 42.7 L60.0 42.4 L65.0 42.1 L70.0 41.9 L75.0 41.7 L80.0 41.6 L85.0 41.5 L90.0 41.5 L95.0 41.6 L100.0 41.8 L105.0 42.0 L110.0 42.3 L115.0 42.7 L120.0 43.1 L125.0 43.5 L130.0 44.0 L135.0 44.3 L140.0 44.7 L145.0 44.9 L150.0 45.1 L155.0 45.2 L160.0 45.2 L165.0 45.2 L170.0 45.0 L175.0 44.7 L180.0 44.4 L185.0 44.0 L190.0 43.6 L195.0 43.2 L200.0 42.8 L205.0 42.5 L210.0 42.2 L215.0 41.9 L220.0 41.7 L225.0 41.6 L230.0 41.6 L235.0 41.6 L240.0 41.7 L245.0 41.8 L250.0 41.9 L255.0 42.1 L260.0 42.2 L265.0 42.3 L270.0 42.4 L275.0 42.4 L280.0 42.3 L285.0 42.1 L290.0 41.9 L295.0 41.6 L300.0 41.2 L305.0 40.8 L310.0 40.3 L315.0 39.8 L320.0 39.4 L325.0 38.9 L330.0 38.5 L335.0 38.2 L340.0 37.9 L345.0 37.8 L350.0 37.7 L355.0 37.8 L360.0 37.9 L365.0 38.1 L370.0 38.4 L375.0 38.7 L380.0 39.1 L385.0 39.5 L390.0 39.9 L395.0 40.2 L400.0 40.5 L405.0 40.8 L410.0 41.0 L415.0 41.1 L420.0 41.2 L425.0 41.1" fill="none" stroke="#8f7a5e" stroke-width="3.2" stroke-opacity="0.38" stroke-dasharray="79 7" stroke-dashoffset="33"/><path d="M-5.0 39.7 L0.0 39.9 L5.0 40.2 L10.0 40.5 L15.0 40.7 L20.0 40.8 L25.0 41.0 L30.0 41.0 L35.0 41.0 L40.0 40.9 L45.0 40.7 L50.0 40.5 L55.0 40.3 L60.0 40.0 L65.0 39.7 L70.0 39.5 L75.0 39.3 L80.0 39.2 L85.0 39.1 L90.0 39.1 L95.0 39.2 L100.0 39.4 L105.0 39.6 L110.0 39.9 L115.0 40.3 L120.0 40.7 L125.0 41.1 L130.0 41.6 L135.0 41.9 L140.0 42.3 L145.0 42.5 L150.0 42.7 L155.0 42.8 L160.0 42.8 L165.0 42.8 L170.0 42.6 L175.0 42.3 L180.0 42.0 L185.0 41.6 L190.0 41.2 L195.0 40.8 L200.0 40.4 L205.0 40.1 L210.0 39.8 L215.0 39.5 L220.0 39.3 L225.0 39.2 L230.0 39.2 L235.0 39.2 L240.0 39.3 L245.0 39.4 L250.0 39.5 L255.0 39.7 L260.0 39.8 L265.0 39.9 L270.0 40.0 L275.0 40.0 L280.0 39.9 L285.0 39.7 L290.0 39.5 L295.0 39.2 L300.0 38.8 L305.0 38.4 L310.0 37.9 L315.0 37.4 L320.0 37.0 L325.0 36.5 L330.0 36.1 L335.0 35.8 L340.0 35.5 L345.0 35.4 L350.0 35.3 L355.0 35.4 L360.0 35.5 L365.0 35.7 L370.0 36.0 L375.0 36.3 L380.0 36.7 L385.0 37.1 L390.0 37.5 L395.0 37.8 L400.0 38.1 L405.0 38.4 L410.0 38.6 L415.0 38.7 L420.0 38.8 L425.0 38.7" fill="none" stroke="#f4ead8" stroke-width="1.8" stroke-opacity="0.4" stroke-dasharray="73 4" stroke-dashoffset="25"/><path d="M-5.0 49.2 L0.0 49.8 L5.0 50.4 L10.0 51.1 L15.0 51.7 L20.0 52.3 L25.0 52.8 L30.0 53.2 L35.0 53.6 L40.0 53.7 L45.0 53.8 L50.0 53.8 L55.0 53.6 L60.0 53.4 L65.0 53.1 L70.0 52.8 L75.0 52.5 L80.0 52.1 L85.0 51.8 L90.0 51.6 L95.0 51.4 L100.0 51.2 L105.0 51.2 L110.0 51.2 L115.0 51.2 L120.0 51.3 L125.0 51.4 L130.0 51.6 L135.0 51.7 L140.0 51.8 L145.0 51.8 L150.0 51.8 L155.0 51.7 L160.0 51.6 L165.0 51.4 L170.0 51.2 L175.0 50.9 L180.0 50.7 L185.0 50.4 L190.0 50.2 L195.0 50.0 L200.0 49.9 L205.0 49.9 L210.0 50.0 L215.0 50.3 L220.0 50.6 L225.0 51.0 L230.0 51.5 L235.0 52.2 L240.0 52.8 L245.0 53.5 L250.0 54.1 L255.0 54.8 L260.0 55.4 L265.0 55.8 L270.0 56.2 L275.0 56.5 L280.0 56.7 L285.0 56.7 L290.0 56.6 L295.0 56.4 L300.0 56.1 L305.0 55.7 L310.0 55.3 L315.0 54.9 L320.0 54.5 L325.0 54.1 L330.0 53.8 L335.0 53.5 L340.0 53.3 L345.0 53.2 L350.0 53.1 L355.0 53.1 L360.0 53.2 L365.0 53.2 L370.0 53.3 L375.0 53.4 L380.0 53.4 L385.0 53.4 L390.0 53.4 L395.0 53.3 L400.0 53.1 L405.0 52.9 L410.0 52.7 L415.0 52.4 L420.0 52.1 L425.0 51.8" fill="none" stroke="#8f7a5e" stroke-width="3.2" stroke-opacity="0.38" stroke-dasharray="74 5" stroke-dashoffset="51"/><path d="M-5.0 46.8 L0.0 47.4 L5.0 48.0 L10.0 48.7 L15.0 49.3 L20.0 49.9 L25.0 50.4 L30.0 50.8 L35.0 51.2 L40.0 51.3 L45.0 51.4 L50.0 51.4 L55.0 51.2 L60.0 51.0 L65.0 50.7 L70.0 50.4 L75.0 50.1 L80.0 49.7 L85.0 49.4 L90.0 49.2 L95.0 49.0 L100.0 48.8 L105.0 48.8 L110.0 48.8 L115.0 48.8 L120.0 48.9 L125.0 49.0 L130.0 49.2 L135.0 49.3 L140.0 49.4 L145.0 49.4 L150.0 49.4 L155.0 49.3 L160.0 49.2 L165.0 49.0 L170.0 48.8 L175.0 48.5 L180.0 48.3 L185.0 48.0 L190.0 47.8 L195.0 47.6 L200.0 47.5 L205.0 47.5 L210.0 47.6 L215.0 47.9 L220.0 48.2 L225.0 48.6 L230.0 49.1 L235.0 49.8 L240.0 50.4 L245.0 51.1 L250.0 51.7 L255.0 52.4 L260.0 53.0 L265.0 53.4 L270.0 53.8 L275.0 54.1 L280.0 54.3 L285.0 54.3 L290.0 54.2 L295.0 54.0 L300.0 53.7 L305.0 53.3 L310.0 52.9 L315.0 52.5 L320.0 52.1 L325.0 51.7 L330.0 51.4 L335.0 51.1 L340.0 50.9 L345.0 50.8 L350.0 50.7 L355.0 50.7 L360.0 50.8 L365.0 50.8 L370.0 50.9 L375.0 51.0 L380.0 51.0 L385.0 51.0 L390.0 51.0 L395.0 50.9 L400.0 50.7 L405.0 50.5 L410.0 50.3 L415.0 50.0 L420.0 49.7 L425.0 49.4" fill="none" stroke="#f4ead8" stroke-width="1.8" stroke-opacity="0.4" stroke-dasharray="50 5" stroke-dashoffset="3"/><path d="M-5.0 63.0 L0.0 62.6 L5.0 62.2 L10.0 61.8 L15.0 61.4 L20.0 61.1 L25.0 60.8 L30.0 60.6 L35.0 60.6 L40.0 60.7 L45.0 60.8 L50.0 61.1 L55.0 61.5 L60.0 61.9 L65.0 62.4 L70.0 62.8 L75.0 63.3 L80.0 63.8 L85.0 64.1 L90.0 64.4 L95.0 64.6 L100.0 64.7 L105.0 64.7 L110.0 64.5 L115.0 64.3 L120.0 64.0 L125.0 63.6 L130.0 63.2 L135.0 62.8 L140.0 62.4 L145.0 62.0 L150.0 61.7 L155.0 61.4 L160.0 61.2 L165.0 61.1 L170.0 61.0 L175.0 60.9 L180.0 60.9 L185.0 60.9 L190.0 60.9 L195.0 60.9 L200.0 60.8 L205.0 60.7 L210.0 60.5 L215.0 60.2 L220.0 59.8 L225.0 59.4 L230.0 59.0 L235.0 58.5 L240.0 58.0 L245.0 57.6 L250.0 57.1 L255.0 56.8 L260.0 56.5 L265.0 56.4 L270.0 56.3 L275.0 56.4 L280.0 56.6 L285.0 56.9 L290.0 57.2 L295.0 57.7 L300.0 58.1 L305.0 58.6 L310.0 59.0 L315.0 59.4 L320.0 59.8 L325.0 60.0 L330.0 60.1 L335.0 60.2 L340.0 60.1 L345.0 59.9 L350.0 59.6 L355.0 59.3 L360.0 58.9 L365.0 58.5 L370.0 58.2 L375.0 57.8 L380.0 57.5 L385.0 57.2 L390.0 57.0 L395.0 56.9 L400.0 56.8 L405.0 56.8 L410.0 56.8 L415.0 56.9 L420.0 56.9 L425.0 57.0" fill="none" stroke="#8f7a5e" stroke-width="3.2" stroke-opacity="0.38" stroke-dasharray="54 7" stroke-dashoffset="16"/><path d="M-5.0 60.6 L0.0 60.2 L5.0 59.8 L10.0 59.4 L15.0 59.0 L20.0 58.7 L25.0 58.4 L30.0 58.2 L35.0 58.2 L40.0 58.3 L45.0 58.4 L50.0 58.7 L55.0 59.1 L60.0 59.5 L65.0 60.0 L70.0 60.4 L75.0 60.9 L80.0 61.4 L85.0 61.7 L90.0 62.0 L95.0 62.2 L100.0 62.3 L105.0 62.3 L110.0 62.1 L115.0 61.9 L120.0 61.6 L125.0 61.2 L130.0 60.8 L135.0 60.4 L140.0 60.0 L145.0 59.6 L150.0 59.3 L155.0 59.0 L160.0 58.8 L165.0 58.7 L170.0 58.6 L175.0 58.5 L180.0 58.5 L185.0 58.5 L190.0 58.5 L195.0 58.5 L200.0 58.4 L205.0 58.3 L210.0 58.1 L215.0 57.8 L220.0 57.4 L225.0 57.0 L230.0 56.6 L235.0 56.1 L240.0 55.6 L245.0 55.2 L250.0 54.7 L255.0 54.4 L260.0 54.1 L265.0 54.0 L270.0 53.9 L275.0 54.0 L280.0 54.2 L285.0 54.5 L290.0 54.8 L295.0 55.3 L300.0 55.7 L305.0 56.2 L310.0 56.6 L315.0 57.0 L320.0 57.4 L325.0 57.6 L330.0 57.7 L335.0 57.8 L340.0 57.7 L345.0 57.5 L350.0 57.2 L355.0 56.9 L360.0 56.5 L365.0 56.1 L370.0 55.8 L375.0 55.4 L380.0 55.1 L385.0 54.8 L390.0 54.6 L395.0 54.5 L400.0 54.4 L405.0 54.4 L410.0 54.4 L415.0 54.5 L420.0 54.5 L425.0 54.6" fill="none" stroke="#f4ead8" stroke-width="1.8" stroke-opacity="0.4" stroke-dasharray="66 4" stroke-dashoffset="51"/><path d="M-5.0 69.7 L0.0 69.3 L5.0 69.0 L10.0 68.8 L15.0 68.7 L20.0 68.6 L25.0 68.7 L30.0 68.7 L35.0 68.8 L40.0 68.9 L45.0 68.9 L50.0 68.8 L55.0 68.6 L60.0 68.4 L65.0 68.1 L70.0 67.8 L75.0 67.3 L80.0 66.9 L85.0 66.5 L90.0 66.1 L95.0 65.9 L100.0 65.7 L105.0 65.6 L110.0 65.6 L115.0 65.8 L120.0 66.1 L125.0 66.4 L130.0 66.9 L135.0 67.4 L140.0 67.8 L145.0 68.3 L150.0 68.7 L155.0 69.0 L160.0 69.2 L165.0 69.3 L170.0 69.3 L175.0 69.1 L180.0 69.0 L185.0 68.7 L190.0 68.4 L195.0 68.1 L200.0 67.9 L205.0 67.7 L210.0 67.6 L215.0 67.5 L220.0 67.6 L225.0 67.7 L230.0 67.8 L235.0 68.0 L240.0 68.2 L245.0 68.4 L250.0 68.5 L255.0 68.5 L260.0 68.4 L265.0 68.3 L270.0 68.0 L275.0 67.6 L280.0 67.1 L285.0 66.5 L290.0 65.9 L295.0 65.2 L300.0 64.6 L305.0 64.1 L310.0 63.6 L315.0 63.2 L320.0 62.9 L325.0 62.8 L330.0 62.7 L335.0 62.8 L340.0 63.0 L345.0 63.2 L350.0 63.4 L355.0 63.6 L360.0 63.8 L365.0 63.9 L370.0 64.0 L375.0 64.0 L380.0 63.9 L385.0 63.7 L390.0 63.5 L395.0 63.3 L400.0 63.1 L405.0 62.9 L410.0 62.8 L415.0 62.8 L420.0 62.9 L425.0 63.1" fill="none" stroke="#8f7a5e" stroke-width="3.2" stroke-opacity="0.38" stroke-dasharray="54 6" stroke-dashoffset="20"/><path d="M-5.0 67.3 L0.0 66.9 L5.0 66.6 L10.0 66.4 L15.0 66.3 L20.0 66.2 L25.0 66.3 L30.0 66.3 L35.0 66.4 L40.0 66.5 L45.0 66.5 L50.0 66.4 L55.0 66.2 L60.0 66.0 L65.0 65.7 L70.0 65.4 L75.0 64.9 L80.0 64.5 L85.0 64.1 L90.0 63.7 L95.0 63.5 L100.0 63.3 L105.0 63.2 L110.0 63.2 L115.0 63.4 L120.0 63.7 L125.0 64.0 L130.0 64.5 L135.0 65.0 L140.0 65.4 L145.0 65.9 L150.0 66.3 L155.0 66.6 L160.0 66.8 L165.0 66.9 L170.0 66.9 L175.0 66.7 L180.0 66.6 L185.0 66.3 L190.0 66.0 L195.0 65.7 L200.0 65.5 L205.0 65.3 L210.0 65.2 L215.0 65.1 L220.0 65.2 L225.0 65.3 L230.0 65.4 L235.0 65.6 L240.0 65.8 L245.0 66.0 L250.0 66.1 L255.0 66.1 L260.0 66.0 L265.0 65.9 L270.0 65.6 L275.0 65.2 L280.0 64.7 L285.0 64.1 L290.0 63.5 L295.0 62.8 L300.0 62.2 L305.0 61.7 L310.0 61.2 L315.0 60.8 L320.0 60.5 L325.0 60.4 L330.0 60.3 L335.0 60.4 L340.0 60.6 L345.0 60.8 L350.0 61.0 L355.0 61.2 L360.0 61.4 L365.0 61.5 L370.0 61.6 L375.0 61.6 L380.0 61.5 L385.0 61.3 L390.0 61.1 L395.0 60.9 L400.0 60.7 L405.0 60.5 L410.0 60.4 L415.0 60.4 L420.0 60.5 L425.0 60.7" fill="none" stroke="#f4ead8" stroke-width="1.8" stroke-opacity="0.4" stroke-dasharray="42 5" stroke-dashoffset="38"/><path d="M-5.0 75.5 L0.0 75.2 L5.0 75.0 L10.0 75.0 L15.0 75.2 L20.0 75.5 L25.0 75.8 L30.0 76.1 L35.0 76.4 L40.0 76.5 L45.0 76.5 L50.0 76.3 L55.0 76.0 L60.0 75.5 L65.0 74.9 L70.0 74.3 L75.0 73.8 L80.0 73.3 L85.0 73.0 L90.0 72.9 L95.0 73.0 L100.0 73.2 L105.0 73.6 L110.0 74.1 L115.0 74.7 L120.0 75.2 L125.0 75.7 L130.0 76.1 L135.0 76.3 L140.0 76.3 L145.0 76.2 L150.0 75.9 L155.0 75.5 L160.0 75.1 L165.0 74.6 L170.0 74.3 L175.0 74.1 L180.0 74.0 L185.0 74.0 L190.0 74.3 L195.0 74.7 L200.0 75.2 L205.0 75.7 L210.0 76.2 L215.0 76.6 L220.0 76.8 L225.0 76.9 L230.0 76.9 L235.0 76.6 L240.0 76.1 L245.0 75.6 L250.0 75.0 L255.0 74.3 L260.0 73.8 L265.0 73.3 L270.0 73.0 L275.0 72.8 L280.0 72.9 L285.0 73.0 L290.0 73.3 L295.0 73.6 L300.0 73.9 L305.0 74.2 L310.0 74.3 L315.0 74.3 L320.0 74.1 L325.0 73.8 L330.0 73.3 L335.0 72.7 L340.0 72.0 L345.0 71.4 L350.0 70.8 L355.0 70.4 L360.0 70.1 L365.0 70.0 L370.0 70.1 L375.0 70.4 L380.0 70.8 L385.0 71.3 L390.0 71.8 L395.0 72.3 L400.0 72.7 L405.0 72.9 L410.0 73.0 L415.0 72.9 L420.0 72.7 L425.0 72.4" fill="none" stroke="#8f7a5e" stroke-width="3.2" stroke-opacity="0.38" stroke-dasharray="63 4" stroke-dashoffset="48"/><path d="M-5.0 73.1 L0.0 72.8 L5.0 72.6 L10.0 72.6 L15.0 72.8 L20.0 73.1 L25.0 73.4 L30.0 73.7 L35.0 74.0 L40.0 74.1 L45.0 74.1 L50.0 73.9 L55.0 73.6 L60.0 73.1 L65.0 72.5 L70.0 71.9 L75.0 71.4 L80.0 70.9 L85.0 70.6 L90.0 70.5 L95.0 70.6 L100.0 70.8 L105.0 71.2 L110.0 71.7 L115.0 72.3 L120.0 72.8 L125.0 73.3 L130.0 73.7 L135.0 73.9 L140.0 73.9 L145.0 73.8 L150.0 73.5 L155.0 73.1 L160.0 72.7 L165.0 72.2 L170.0 71.9 L175.0 71.7 L180.0 71.6 L185.0 71.6 L190.0 71.9 L195.0 72.3 L200.0 72.8 L205.0 73.3 L210.0 73.8 L215.0 74.2 L220.0 74.4 L225.0 74.5 L230.0 74.5 L235.0 74.2 L240.0 73.7 L245.0 73.2 L250.0 72.6 L255.0 71.9 L260.0 71.4 L265.0 70.9 L270.0 70.6 L275.0 70.4 L280.0 70.5 L285.0 70.6 L290.0 70.9 L295.0 71.2 L300.0 71.5 L305.0 71.8 L310.0 71.9 L315.0 71.9 L320.0 71.7 L325.0 71.4 L330.0 70.9 L335.0 70.3 L340.0 69.6 L345.0 69.0 L350.0 68.4 L355.0 68.0 L360.0 67.7 L365.0 67.6 L370.0 67.7 L375.0 68.0 L380.0 68.4 L385.0 68.9 L390.0 69.4 L395.0 69.9 L400.0 70.3 L405.0 70.5 L410.0 70.6 L415.0 70.5 L420.0 70.3 L425.0 70.0" fill="none" stroke="#f4ead8" stroke-width="1.8" stroke-opacity="0.4" stroke-dasharray="43 5" stroke-dashoffset="27"/><path d="M-5.0 83.5 L0.0 82.9 L5.0 82.4 L10.0 81.9 L15.0 81.6 L20.0 81.3 L25.0 81.2 L30.0 81.1 L35.0 81.1 L40.0 81.3 L45.0 81.4 L50.0 81.7 L55.0 81.9 L60.0 82.1 L65.0 82.3 L70.0 82.4 L75.0 82.5 L80.0 82.5 L85.0 82.4 L90.0 82.3 L95.0 82.1 L100.0 81.8 L105.0 81.5 L110.0 81.2 L115.0 81.0 L120.0 80.8 L125.0 80.6 L130.0 80.5 L135.0 80.5 L140.0 80.7 L145.0 80.9 L150.0 81.2 L155.0 81.5 L160.0 82.0 L165.0 82.4 L170.0 82.9 L175.0 83.4 L180.0 83.8 L185.0 84.1 L190.0 84.4 L195.0 84.5 L200.0 84.6 L205.0 84.5 L210.0 84.3 L215.0 84.1 L220.0 83.7 L225.0 83.3 L230.0 82.9 L235.0 82.5 L240.0 82.1 L245.0 81.7 L250.0 81.4 L255.0 81.2 L260.0 81.0 L265.0 81.0 L270.0 81.0 L275.0 81.1 L280.0 81.3 L285.0 81.5 L290.0 81.7 L295.0 81.9 L300.0 82.1 L305.0 82.2 L310.0 82.3 L315.0 82.3 L320.0 82.3 L325.0 82.1 L330.0 81.9 L335.0 81.6 L340.0 81.3 L345.0 80.9 L350.0 80.6 L355.0 80.3 L360.0 80.1 L365.0 79.9 L370.0 79.9 L375.0 79.9 L380.0 80.1 L385.0 80.4 L390.0 80.7 L395.0 81.2 L400.0 81.7 L405.0 82.3 L410.0 82.9 L415.0 83.5 L420.0 84.1 L425.0 84.6" fill="none" stroke="#8f7a5e" stroke-width="3.2" stroke-opacity="0.38" stroke-dasharray="72 4" stroke-dashoffset="34"/><path d="M-5.0 81.1 L0.0 80.5 L5.0 80.0 L10.0 79.5 L15.0 79.2 L20.0 78.9 L25.0 78.8 L30.0 78.7 L35.0 78.7 L40.0 78.9 L45.0 79.0 L50.0 79.3 L55.0 79.5 L60.0 79.7 L65.0 79.9 L70.0 80.0 L75.0 80.1 L80.0 80.1 L85.0 80.0 L90.0 79.9 L95.0 79.7 L100.0 79.4 L105.0 79.1 L110.0 78.8 L115.0 78.6 L120.0 78.4 L125.0 78.2 L130.0 78.1 L135.0 78.1 L140.0 78.3 L145.0 78.5 L150.0 78.8 L155.0 79.1 L160.0 79.6 L165.0 80.0 L170.0 80.5 L175.0 81.0 L180.0 81.4 L185.0 81.7 L190.0 82.0 L195.0 82.1 L200.0 82.2 L205.0 82.1 L210.0 81.9 L215.0 81.7 L220.0 81.3 L225.0 80.9 L230.0 80.5 L235.0 80.1 L240.0 79.7 L245.0 79.3 L250.0 79.0 L255.0 78.8 L260.0 78.6 L265.0 78.6 L270.0 78.6 L275.0 78.7 L280.0 78.9 L285.0 79.1 L290.0 79.3 L295.0 79.5 L300.0 79.7 L305.0 79.8 L310.0 79.9 L315.0 79.9 L320.0 79.9 L325.0 79.7 L330.0 79.5 L335.0 79.2 L340.0 78.9 L345.0 78.5 L350.0 78.2 L355.0 77.9 L360.0 77.7 L365.0 77.5 L370.0 77.5 L375.0 77.5 L380.0 77.7 L385.0 78.0 L390.0 78.3 L395.0 78.8 L400.0 79.3 L405.0 79.9 L410.0 80.5 L415.0 81.1 L420.0 81.7 L425.0 82.2" fill="none" stroke="#f4ead8" stroke-width="1.8" stroke-opacity="0.4" stroke-dasharray="65 6" stroke-dashoffset="28"/><path d="M-5.0 89.8 L0.0 90.0 L5.0 90.2 L10.0 90.3 L15.0 90.3 L20.0 90.2 L25.0 90.1 L30.0 90.0 L35.0 89.9 L40.0 89.9 L45.0 89.9 L50.0 90.0 L55.0 90.1 L60.0 90.3 L65.0 90.6 L70.0 90.9 L75.0 91.2 L80.0 91.5 L85.0 91.8 L90.0 92.0 L95.0 92.2 L100.0 92.3 L105.0 92.2 L110.0 92.1 L115.0 91.8 L120.0 91.5 L125.0 91.1 L130.0 90.6 L135.0 90.2 L140.0 89.7 L145.0 89.4 L150.0 89.1 L155.0 88.8 L160.0 88.7 L165.0 88.7 L170.0 88.8 L175.0 89.0 L180.0 89.3 L185.0 89.6 L190.0 89.9 L195.0 90.2 L200.0 90.5 L205.0 90.7 L210.0 90.9 L215.0 91.0 L220.0 91.0 L225.0 91.0 L230.0 90.9 L235.0 90.8 L240.0 90.7 L245.0 90.7 L250.0 90.7 L255.0 90.8 L260.0 90.9 L265.0 91.2 L270.0 91.5 L275.0 91.9 L280.0 92.4 L285.0 92.9 L290.0 93.5 L295.0 94.0 L300.0 94.5 L305.0 94.9 L310.0 95.3 L315.0 95.5 L320.0 95.6 L325.0 95.6 L330.0 95.5 L335.0 95.3 L340.0 95.1 L345.0 94.8 L350.0 94.4 L355.0 94.1 L360.0 93.9 L365.0 93.7 L370.0 93.5 L375.0 93.4 L380.0 93.5 L385.0 93.5 L390.0 93.7 L395.0 93.8 L400.0 94.0 L405.0 94.1 L410.0 94.3 L415.0 94.3 L420.0 94.3 L425.0 94.2" fill="none" stroke="#8f7a5e" stroke-width="3.2" stroke-opacity="0.38" stroke-dasharray="41 3" stroke-dashoffset="30"/><path d="M-5.0 87.4 L0.0 87.6 L5.0 87.8 L10.0 87.9 L15.0 87.9 L20.0 87.8 L25.0 87.7 L30.0 87.6 L35.0 87.5 L40.0 87.5 L45.0 87.5 L50.0 87.6 L55.0 87.7 L60.0 87.9 L65.0 88.2 L70.0 88.5 L75.0 88.8 L80.0 89.1 L85.0 89.4 L90.0 89.6 L95.0 89.8 L100.0 89.9 L105.0 89.8 L110.0 89.7 L115.0 89.4 L120.0 89.1 L125.0 88.7 L130.0 88.2 L135.0 87.8 L140.0 87.3 L145.0 87.0 L150.0 86.7 L155.0 86.4 L160.0 86.3 L165.0 86.3 L170.0 86.4 L175.0 86.6 L180.0 86.9 L185.0 87.2 L190.0 87.5 L195.0 87.8 L200.0 88.1 L205.0 88.3 L210.0 88.5 L215.0 88.6 L220.0 88.6 L225.0 88.6 L230.0 88.5 L235.0 88.4 L240.0 88.3 L245.0 88.3 L250.0 88.3 L255.0 88.4 L260.0 88.5 L265.0 88.8 L270.0 89.1 L275.0 89.5 L280.0 90.0 L285.0 90.5 L290.0 91.1 L295.0 91.6 L300.0 92.1 L305.0 92.5 L310.0 92.9 L315.0 93.1 L320.0 93.2 L325.0 93.2 L330.0 93.1 L335.0 92.9 L340.0 92.7 L345.0 92.4 L350.0 92.0 L355.0 91.7 L360.0 91.5 L365.0 91.3 L370.0 91.1 L375.0 91.0 L380.0 91.1 L385.0 91.1 L390.0 91.3 L395.0 91.4 L400.0 91.6 L405.0 91.7 L410.0 91.9 L415.0 91.9 L420.0 91.9 L425.0 91.8" fill="none" stroke="#f4ead8" stroke-width="1.8" stroke-opacity="0.4" stroke-dasharray="75 5" stroke-dashoffset="39"/><path d="M-5.0 94.9 L0.0 94.9 L5.0 95.2 L10.0 95.6 L15.0 96.2 L20.0 96.9 L25.0 97.6 L30.0 98.2 L35.0 98.7 L40.0 99.0 L45.0 99.2 L50.0 99.2 L55.0 99.1 L60.0 98.8 L65.0 98.6 L70.0 98.3 L75.0 98.1 L80.0 98.1 L85.0 98.3 L90.0 98.6 L95.0 99.1 L100.0 99.8 L105.0 100.5 L110.0 101.2 L115.0 101.9 L120.0 102.4 L125.0 102.8 L130.0 103.0 L135.0 103.0 L140.0 102.8 L145.0 102.4 L150.0 101.9 L155.0 101.4 L160.0 101.0 L165.0 100.6 L170.0 100.4 L175.0 100.3 L180.0 100.4 L185.0 100.6 L190.0 101.0 L195.0 101.4 L200.0 101.8 L205.0 102.1 L210.0 102.3 L215.0 102.3 L220.0 102.1 L225.0 101.7 L230.0 101.2 L235.0 100.6 L240.0 99.9 L245.0 99.3 L250.0 98.7 L255.0 98.3 L260.0 98.1 L265.0 98.0 L270.0 98.2 L275.0 98.6 L280.0 99.0 L285.0 99.5 L290.0 100.0 L295.0 100.4 L300.0 100.7 L305.0 100.8 L310.0 100.8 L315.0 100.6 L320.0 100.3 L325.0 99.9 L330.0 99.5 L335.0 99.2 L340.0 99.0 L345.0 98.9 L350.0 99.1 L355.0 99.5 L360.0 100.0 L365.0 100.7 L370.0 101.4 L375.0 102.2 L380.0 102.9 L385.0 103.4 L390.0 103.8 L395.0 104.0 L400.0 103.9 L405.0 103.8 L410.0 103.4 L415.0 103.1 L420.0 102.7 L425.0 102.4" fill="none" stroke="#8f7a5e" stroke-width="3.2" stroke-opacity="0.38" stroke-dasharray="65 3" stroke-dashoffset="27"/><path d="M-5.0 92.5 L0.0 92.5 L5.0 92.8 L10.0 93.2 L15.0 93.8 L20.0 94.5 L25.0 95.2 L30.0 95.8 L35.0 96.3 L40.0 96.6 L45.0 96.8 L50.0 96.8 L55.0 96.7 L60.0 96.4 L65.0 96.2 L70.0 95.9 L75.0 95.7 L80.0 95.7 L85.0 95.9 L90.0 96.2 L95.0 96.7 L100.0 97.4 L105.0 98.1 L110.0 98.8 L115.0 99.5 L120.0 100.0 L125.0 100.4 L130.0 100.6 L135.0 100.6 L140.0 100.4 L145.0 100.0 L150.0 99.5 L155.0 99.0 L160.0 98.6 L165.0 98.2 L170.0 98.0 L175.0 97.9 L180.0 98.0 L185.0 98.2 L190.0 98.6 L195.0 99.0 L200.0 99.4 L205.0 99.7 L210.0 99.9 L215.0 99.9 L220.0 99.7 L225.0 99.3 L230.0 98.8 L235.0 98.2 L240.0 97.5 L245.0 96.9 L250.0 96.3 L255.0 95.9 L260.0 95.7 L265.0 95.6 L270.0 95.8 L275.0 96.2 L280.0 96.6 L285.0 97.1 L290.0 97.6 L295.0 98.0 L300.0 98.3 L305.0 98.4 L310.0 98.4 L315.0 98.2 L320.0 97.9 L325.0 97.5 L330.0 97.1 L335.0 96.8 L340.0 96.6 L345.0 96.5 L350.0 96.7 L355.0 97.1 L360.0 97.6 L365.0 98.3 L370.0 99.0 L375.0 99.8 L380.0 100.5 L385.0 101.0 L390.0 101.4 L395.0 101.6 L400.0 101.5 L405.0 101.4 L410.0 101.0 L415.0 100.7 L420.0 100.3 L425.0 100.0" fill="none" stroke="#f4ead8" stroke-width="1.8" stroke-opacity="0.4" stroke-dasharray="33 8" stroke-dashoffset="34"/><path d="M-5.0 111.6 L0.0 111.9 L5.0 112.2 L10.0 112.4 L15.0 112.6 L20.0 112.6 L25.0 112.5 L30.0 112.2 L35.0 111.7 L40.0 111.1 L45.0 110.4 L50.0 109.7 L55.0 109.1 L60.0 108.4 L65.0 107.9 L70.0 107.6 L75.0 107.3 L80.0 107.2 L85.0 107.2 L90.0 107.3 L95.0 107.4 L100.0 107.5 L105.0 107.5 L110.0 107.4 L115.0 107.2 L120.0 106.9 L125.0 106.5 L130.0 106.0 L135.0 105.4 L140.0 104.9 L145.0 104.5 L150.0 104.1 L155.0 103.9 L160.0 103.9 L165.0 104.0 L170.0 104.3 L175.0 104.7 L180.0 105.2 L185.0 105.7 L190.0 106.2 L195.0 106.6 L200.0 106.8 L205.0 107.0 L210.0 107.0 L215.0 106.9 L220.0 106.7 L225.0 106.4 L230.0 106.2 L235.0 106.0 L240.0 105.8 L245.0 105.8 L250.0 105.9 L255.0 106.1 L260.0 106.5 L265.0 106.9 L270.0 107.3 L275.0 107.7 L280.0 108.0 L285.0 108.3 L290.0 108.3 L295.0 108.2 L300.0 108.0 L305.0 107.6 L310.0 107.1 L315.0 106.5 L320.0 105.9 L325.0 105.4 L330.0 105.0 L335.0 104.7 L340.0 104.5 L345.0 104.5 L350.0 104.5 L355.0 104.7 L360.0 104.9 L365.0 105.1 L370.0 105.2 L375.0 105.3 L380.0 105.2 L385.0 105.0 L390.0 104.7 L395.0 104.3 L400.0 103.8 L405.0 103.3 L410.0 102.9 L415.0 102.6 L420.0 102.4 L425.0 102.4" fill="none" stroke="#8f7a5e" stroke-width="3.2" stroke-opacity="0.38" stroke-dasharray="61 3" stroke-dashoffset="48"/><path d="M-5.0 109.2 L0.0 109.5 L5.0 109.8 L10.0 110.0 L15.0 110.2 L20.0 110.2 L25.0 110.1 L30.0 109.8 L35.0 109.3 L40.0 108.7 L45.0 108.0 L50.0 107.3 L55.0 106.7 L60.0 106.0 L65.0 105.5 L70.0 105.2 L75.0 104.9 L80.0 104.8 L85.0 104.8 L90.0 104.9 L95.0 105.0 L100.0 105.1 L105.0 105.1 L110.0 105.0 L115.0 104.8 L120.0 104.5 L125.0 104.1 L130.0 103.6 L135.0 103.0 L140.0 102.5 L145.0 102.1 L150.0 101.7 L155.0 101.5 L160.0 101.5 L165.0 101.6 L170.0 101.9 L175.0 102.3 L180.0 102.8 L185.0 103.3 L190.0 103.8 L195.0 104.2 L200.0 104.4 L205.0 104.6 L210.0 104.6 L215.0 104.5 L220.0 104.3 L225.0 104.0 L230.0 103.8 L235.0 103.6 L240.0 103.4 L245.0 103.4 L250.0 103.5 L255.0 103.7 L260.0 104.1 L265.0 104.5 L270.0 104.9 L275.0 105.3 L280.0 105.6 L285.0 105.9 L290.0 105.9 L295.0 105.8 L300.0 105.6 L305.0 105.2 L310.0 104.7 L315.0 104.1 L320.0 103.5 L325.0 103.0 L330.0 102.6 L335.0 102.3 L340.0 102.1 L345.0 102.1 L350.0 102.1 L355.0 102.3 L360.0 102.5 L365.0 102.7 L370.0 102.8 L375.0 102.9 L380.0 102.8 L385.0 102.6 L390.0 102.3 L395.0 101.9 L400.0 101.4 L405.0 100.9 L410.0 100.5 L415.0 100.2 L420.0 100.0 L425.0 100.0" fill="none" stroke="#f4ead8" stroke-width="1.8" stroke-opacity="0.4" stroke-dasharray="77 3" stroke-dashoffset="40"/><path d="M-5.0 120.8 L0.0 120.7 L5.0 120.5 L10.0 120.2 L15.0 119.8 L20.0 119.4 L25.0 119.0 L30.0 118.5 L35.0 118.1 L40.0 117.8 L45.0 117.5 L50.0 117.4 L55.0 117.3 L60.0 117.3 L65.0 117.4 L70.0 117.6 L75.0 117.7 L80.0 117.9 L85.0 118.0 L90.0 118.1 L95.0 118.1 L100.0 118.0 L105.0 117.8 L110.0 117.5 L115.0 117.1 L120.0 116.7 L125.0 116.3 L130.0 115.9 L135.0 115.5 L140.0 115.2 L145.0 114.9 L150.0 114.8 L155.0 114.8 L160.0 114.9 L165.0 115.0 L170.0 115.3 L175.0 115.6 L180.0 115.9 L185.0 116.2 L190.0 116.5 L195.0 116.7 L200.0 116.8 L205.0 116.8 L210.0 116.8 L215.0 116.6 L220.0 116.4 L225.0 116.1 L230.0 115.9 L235.0 115.6 L240.0 115.4 L245.0 115.2 L250.0 115.1 L255.0 115.2 L260.0 115.3 L265.0 115.5 L270.0 115.7 L275.0 116.1 L280.0 116.4 L285.0 116.8 L290.0 117.1 L295.0 117.3 L300.0 117.5 L305.0 117.5 L310.0 117.5 L315.0 117.4 L320.0 117.1 L325.0 116.8 L330.0 116.4 L335.0 116.1 L340.0 115.7 L345.0 115.4 L350.0 115.1 L355.0 114.9 L360.0 114.8 L365.0 114.8 L370.0 114.9 L375.0 115.0 L380.0 115.2 L385.0 115.4 L390.0 115.6 L395.0 115.7 L400.0 115.8 L405.0 115.8 L410.0 115.7 L415.0 115.5 L420.0 115.2 L425.0 114.9" fill="none" stroke="#8f7a5e" stroke-width="3.2" stroke-opacity="0.38" stroke-dasharray="83 6" stroke-dashoffset="19"/><path d="M-5.0 118.4 L0.0 118.3 L5.0 118.1 L10.0 117.8 L15.0 117.4 L20.0 117.0 L25.0 116.6 L30.0 116.1 L35.0 115.7 L40.0 115.4 L45.0 115.1 L50.0 115.0 L55.0 114.9 L60.0 114.9 L65.0 115.0 L70.0 115.2 L75.0 115.3 L80.0 115.5 L85.0 115.6 L90.0 115.7 L95.0 115.7 L100.0 115.6 L105.0 115.4 L110.0 115.1 L115.0 114.7 L120.0 114.3 L125.0 113.9 L130.0 113.5 L135.0 113.1 L140.0 112.8 L145.0 112.5 L150.0 112.4 L155.0 112.4 L160.0 112.5 L165.0 112.6 L170.0 112.9 L175.0 113.2 L180.0 113.5 L185.0 113.8 L190.0 114.1 L195.0 114.3 L200.0 114.4 L205.0 114.4 L210.0 114.4 L215.0 114.2 L220.0 114.0 L225.0 113.7 L230.0 113.5 L235.0 113.2 L240.0 113.0 L245.0 112.8 L250.0 112.7 L255.0 112.8 L260.0 112.9 L265.0 113.1 L270.0 113.3 L275.0 113.7 L280.0 114.0 L285.0 114.4 L290.0 114.7 L295.0 114.9 L300.0 115.1 L305.0 115.1 L310.0 115.1 L315.0 115.0 L320.0 114.7 L325.0 114.4 L330.0 114.0 L335.0 113.7 L340.0 113.3 L345.0 113.0 L350.0 112.7 L355.0 112.5 L360.0 112.4 L365.0 112.4 L370.0 112.5 L375.0 112.6 L380.0 112.8 L385.0 113.0 L390.0 113.2 L395.0 113.3 L400.0 113.4 L405.0 113.4 L410.0 113.3 L415.0 113.1 L420.0 112.8 L425.0 112.5" fill="none" stroke="#f4ead8" stroke-width="1.8" stroke-opacity="0.4" stroke-dasharray="73 4" stroke-dashoffset="30"/><path d="M-5.0 123.0 L0.0 123.2 L5.0 123.4 L10.0 123.6 L15.0 123.6 L20.0 123.5 L25.0 123.5 L30.0 123.3 L35.0 123.2 L40.0 123.0 L45.0 122.8 L50.0 122.7 L55.0 122.7 L60.0 122.7 L65.0 122.7 L70.0 122.9 L75.0 123.1 L80.0 123.3 L85.0 123.6 L90.0 124.0 L95.0 124.3 L100.0 124.7 L105.0 125.0 L110.0 125.3 L115.0 125.5 L120.0 125.6 L125.0 125.6 L130.0 125.6 L135.0 125.4 L140.0 125.2 L145.0 124.9 L150.0 124.6 L155.0 124.2 L160.0 123.8 L165.0 123.4 L170.0 123.1 L175.0 122.8 L180.0 122.6 L185.0 122.4 L190.0 122.4 L195.0 122.4 L200.0 122.5 L205.0 122.7 L210.0 122.9 L215.0 123.2 L220.0 123.5 L225.0 123.8 L230.0 124.0 L235.0 124.3 L240.0 124.4 L245.0 124.6 L250.0 124.6 L255.0 124.6 L260.0 124.5 L265.0 124.4 L270.0 124.2 L275.0 124.0 L280.0 123.8 L285.0 123.6 L290.0 123.5 L295.0 123.4 L300.0 123.4 L305.0 123.5 L310.0 123.6 L315.0 123.9 L320.0 124.2 L325.0 124.6 L330.0 125.1 L335.0 125.6 L340.0 126.1 L345.0 126.6 L350.0 127.1 L355.0 127.6 L360.0 128.0 L365.0 128.3 L370.0 128.5 L375.0 128.6 L380.0 128.7 L385.0 128.6 L390.0 128.5 L395.0 128.4 L400.0 128.2 L405.0 128.0 L410.0 127.8 L415.0 127.7 L420.0 127.5 L425.0 127.5" fill="none" stroke="#8f7a5e" stroke-width="3.2" stroke-opacity="0.38" stroke-dasharray="88 4" stroke-dashoffset="42"/><path d="M-5.0 120.6 L0.0 120.8 L5.0 121.0 L10.0 121.2 L15.0 121.2 L20.0 121.1 L25.0 121.1 L30.0 120.9 L35.0 120.8 L40.0 120.6 L45.0 120.4 L50.0 120.3 L55.0 120.3 L60.0 120.3 L65.0 120.3 L70.0 120.5 L75.0 120.7 L80.0 120.9 L85.0 121.2 L90.0 121.6 L95.0 121.9 L100.0 122.3 L105.0 122.6 L110.0 122.9 L115.0 123.1 L120.0 123.2 L125.0 123.2 L130.0 123.2 L135.0 123.0 L140.0 122.8 L145.0 122.5 L150.0 122.2 L155.0 121.8 L160.0 121.4 L165.0 121.0 L170.0 120.7 L175.0 120.4 L180.0 120.2 L185.0 120.0 L190.0 120.0 L195.0 120.0 L200.0 120.1 L205.0 120.3 L210.0 120.5 L215.0 120.8 L220.0 121.1 L225.0 121.4 L230.0 121.6 L235.0 121.9 L240.0 122.0 L245.0 122.2 L250.0 122.2 L255.0 122.2 L260.0 122.1 L265.0 122.0 L270.0 121.8 L275.0 121.6 L280.0 121.4 L285.0 121.2 L290.0 121.1 L295.0 121.0 L300.0 121.0 L305.0 121.1 L310.0 121.2 L315.0 121.5 L320.0 121.8 L325.0 122.2 L330.0 122.7 L335.0 123.2 L340.0 123.7 L345.0 124.2 L350.0 124.7 L355.0 125.2 L360.0 125.6 L365.0 125.9 L370.0 126.1 L375.0 126.2 L380.0 126.3 L385.0 126.2 L390.0 126.1 L395.0 126.0 L400.0 125.8 L405.0 125.6 L410.0 125.4 L415.0 125.3 L420.0 125.1 L425.0 125.1" fill="none" stroke="#f4ead8" stroke-width="1.8" stroke-opacity="0.4" stroke-dasharray="65 4" stroke-dashoffset="10"/><path d="M-5.0 131.8 L0.0 131.8 L5.0 131.9 L10.0 131.9 L15.0 131.9 L20.0 132.0 L25.0 131.9 L30.0 131.9 L35.0 131.8 L40.0 131.6 L45.0 131.4 L50.0 131.2 L55.0 130.9 L60.0 130.7 L65.0 130.4 L70.0 130.2 L75.0 130.1 L80.0 130.0 L85.0 130.0 L90.0 130.1 L95.0 130.4 L100.0 130.7 L105.0 131.1 L110.0 131.6 L115.0 132.1 L120.0 132.7 L125.0 133.3 L130.0 133.9 L135.0 134.4 L140.0 134.9 L145.0 135.3 L150.0 135.6 L155.0 135.8 L160.0 135.9 L165.0 135.9 L170.0 135.8 L175.0 135.6 L180.0 135.4 L185.0 135.2 L190.0 134.9 L195.0 134.7 L200.0 134.4 L205.0 134.2 L210.0 134.1 L215.0 134.0 L220.0 134.0 L225.0 134.0 L230.0 134.0 L235.0 134.0 L240.0 134.1 L245.0 134.1 L250.0 134.1 L255.0 134.1 L260.0 134.0 L265.0 133.8 L270.0 133.6 L275.0 133.4 L280.0 133.1 L285.0 132.8 L290.0 132.4 L295.0 132.1 L300.0 131.9 L305.0 131.6 L310.0 131.5 L315.0 131.5 L320.0 131.5 L325.0 131.7 L330.0 132.0 L335.0 132.4 L340.0 132.8 L345.0 133.3 L350.0 133.9 L355.0 134.5 L360.0 135.0 L365.0 135.6 L370.0 136.1 L375.0 136.5 L380.0 136.8 L385.0 137.0 L390.0 137.2 L395.0 137.2 L400.0 137.2 L405.0 137.1 L410.0 136.9 L415.0 136.7 L420.0 136.5 L425.0 136.3" fill="none" stroke="#8f7a5e" stroke-width="3.2" stroke-opacity="0.38" stroke-dasharray="55 6" stroke-dashoffset="35"/><path d="M-5.0 129.4 L0.0 129.4 L5.0 129.5 L10.0 129.5 L15.0 129.5 L20.0 129.6 L25.0 129.5 L30.0 129.5 L35.0 129.4 L40.0 129.2 L45.0 129.0 L50.0 128.8 L55.0 128.5 L60.0 128.3 L65.0 128.0 L70.0 127.8 L75.0 127.7 L80.0 127.6 L85.0 127.6 L90.0 127.7 L95.0 128.0 L100.0 128.3 L105.0 128.7 L110.0 129.2 L115.0 129.7 L120.0 130.3 L125.0 130.9 L130.0 131.5 L135.0 132.0 L140.0 132.5 L145.0 132.9 L150.0 133.2 L155.0 133.4 L160.0 133.5 L165.0 133.5 L170.0 133.4 L175.0 133.2 L180.0 133.0 L185.0 132.8 L190.0 132.5 L195.0 132.3 L200.0 132.0 L205.0 131.8 L210.0 131.7 L215.0 131.6 L220.0 131.6 L225.0 131.6 L230.0 131.6 L235.0 131.6 L240.0 131.7 L245.0 131.7 L250.0 131.7 L255.0 131.7 L260.0 131.6 L265.0 131.4 L270.0 131.2 L275.0 131.0 L280.0 130.7 L285.0 130.4 L290.0 130.0 L295.0 129.7 L300.0 129.5 L305.0 129.2 L310.0 129.1 L315.0 129.1 L320.0 129.1 L325.0 129.3 L330.0 129.6 L335.0 130.0 L340.0 130.4 L345.0 130.9 L350.0 131.5 L355.0 132.1 L360.0 132.6 L365.0 133.2 L370.0 133.7 L375.0 134.1 L380.0 134.4 L385.0 134.6 L390.0 134.8 L395.0 134.8 L400.0 134.8 L405.0 134.7 L410.0 134.5 L415.0 134.3 L420.0 134.1 L425.0 133.9" fill="none" stroke="#f4ead8" stroke-width="1.8" stroke-opacity="0.4" stroke-dasharray="50 7" stroke-dashoffset="48"/><path d="M-5.0 142.6 L0.0 142.3 L5.0 142.1 L10.0 141.9 L15.0 141.7 L20.0 141.6 L25.0 141.6 L30.0 141.7 L35.0 141.9 L40.0 142.2 L45.0 142.6 L50.0 143.0 L55.0 143.3 L60.0 143.7 L65.0 144.0 L70.0 144.2 L75.0 144.2 L80.0 144.2 L85.0 144.0 L90.0 143.7 L95.0 143.3 L100.0 142.9 L105.0 142.4 L110.0 141.9 L115.0 141.5 L120.0 141.1 L125.0 140.8 L130.0 140.6 L135.0 140.5 L140.0 140.6 L145.0 140.8 L150.0 141.0 L155.0 141.3 L160.0 141.7 L165.0 142.0 L170.0 142.3 L175.0 142.6 L180.0 142.7 L185.0 142.7 L190.0 142.7 L195.0 142.6 L200.0 142.3 L205.0 142.1 L210.0 141.8 L215.0 141.5 L220.0 141.3 L225.0 141.2 L230.0 141.2 L235.0 141.2 L240.0 141.4 L245.0 141.8 L250.0 142.2 L255.0 142.7 L260.0 143.3 L265.0 143.8 L270.0 144.4 L275.0 144.9 L280.0 145.3 L285.0 145.6 L290.0 145.7 L295.0 145.8 L300.0 145.7 L305.0 145.5 L310.0 145.3 L315.0 145.0 L320.0 144.7 L325.0 144.4 L330.0 144.1 L335.0 144.0 L340.0 143.9 L345.0 143.9 L350.0 144.1 L355.0 144.3 L360.0 144.5 L365.0 144.8 L370.0 145.1 L375.0 145.4 L380.0 145.6 L385.0 145.7 L390.0 145.7 L395.0 145.5 L400.0 145.3 L405.0 144.9 L410.0 144.5 L415.0 144.0 L420.0 143.4 L425.0 142.9" fill="none" stroke="#8f7a5e" stroke-width="3.2" stroke-opacity="0.38" stroke-dasharray="45 7" stroke-dashoffset="24"/><path d="M-5.0 140.2 L0.0 139.9 L5.0 139.7 L10.0 139.5 L15.0 139.3 L20.0 139.2 L25.0 139.2 L30.0 139.3 L35.0 139.5 L40.0 139.8 L45.0 140.2 L50.0 140.6 L55.0 140.9 L60.0 141.3 L65.0 141.6 L70.0 141.8 L75.0 141.8 L80.0 141.8 L85.0 141.6 L90.0 141.3 L95.0 140.9 L100.0 140.5 L105.0 140.0 L110.0 139.5 L115.0 139.1 L120.0 138.7 L125.0 138.4 L130.0 138.2 L135.0 138.1 L140.0 138.2 L145.0 138.4 L150.0 138.6 L155.0 138.9 L160.0 139.3 L165.0 139.6 L170.0 139.9 L175.0 140.2 L180.0 140.3 L185.0 140.3 L190.0 140.3 L195.0 140.2 L200.0 139.9 L205.0 139.7 L210.0 139.4 L215.0 139.1 L220.0 138.9 L225.0 138.8 L230.0 138.8 L235.0 138.8 L240.0 139.0 L245.0 139.4 L250.0 139.8 L255.0 140.3 L260.0 140.9 L265.0 141.4 L270.0 142.0 L275.0 142.5 L280.0 142.9 L285.0 143.2 L290.0 143.3 L295.0 143.4 L300.0 143.3 L305.0 143.1 L310.0 142.9 L315.0 142.6 L320.0 142.3 L325.0 142.0 L330.0 141.7 L335.0 141.6 L340.0 141.5 L345.0 141.5 L350.0 141.7 L355.0 141.9 L360.0 142.1 L365.0 142.4 L370.0 142.7 L375.0 143.0 L380.0 143.2 L385.0 143.3 L390.0 143.3 L395.0 143.1 L400.0 142.9 L405.0 142.5 L410.0 142.1 L415.0 141.6 L420.0 141.0 L425.0 140.5" fill="none" stroke="#f4ead8" stroke-width="1.8" stroke-opacity="0.4" stroke-dasharray="45 4" stroke-dashoffset="4"/><path d="M-5.0 149.6 L0.0 149.7 L5.0 149.8 L10.0 149.8 L15.0 149.8 L20.0 149.6 L25.0 149.3 L30.0 149.0 L35.0 148.6 L40.0 148.1 L45.0 147.6 L50.0 147.0 L55.0 146.5 L60.0 146.1 L65.0 145.7 L70.0 145.5 L75.0 145.3 L80.0 145.2 L85.0 145.3 L90.0 145.5 L95.0 145.8 L100.0 146.1 L105.0 146.5 L110.0 147.0 L115.0 147.5 L120.0 147.9 L125.0 148.3 L130.0 148.7 L135.0 149.0 L140.0 149.3 L145.0 149.5 L150.0 149.7 L155.0 149.8 L160.0 149.8 L165.0 149.9 L170.0 150.0 L175.0 150.1 L180.0 150.3 L185.0 150.5 L190.0 150.8 L195.0 151.1 L200.0 151.5 L205.0 151.9 L210.0 152.3 L215.0 152.7 L220.0 153.1 L225.0 153.5 L230.0 153.8 L235.0 154.0 L240.0 154.1 L245.0 154.1 L250.0 154.0 L255.0 153.7 L260.0 153.4 L265.0 153.0 L270.0 152.6 L275.0 152.1 L280.0 151.7 L285.0 151.3 L290.0 150.9 L295.0 150.6 L300.0 150.4 L305.0 150.4 L310.0 150.4 L315.0 150.5 L320.0 150.7 L325.0 151.0 L330.0 151.4 L335.0 151.8 L340.0 152.1 L345.0 152.5 L350.0 152.9 L355.0 153.2 L360.0 153.5 L365.0 153.6 L370.0 153.8 L375.0 153.9 L380.0 153.9 L385.0 154.0 L390.0 154.0 L395.0 154.0 L400.0 154.1 L405.0 154.2 L410.0 154.4 L415.0 154.7 L420.0 155.0 L425.0 155.3" fill="none" stroke="#8f7a5e" stroke-width="3.2" stroke-opacity="0.38" stroke-dasharray="72 4" stroke-dashoffset="27"/><path d="M-5.0 147.2 L0.0 147.3 L5.0 147.4 L10.0 147.4 L15.0 147.4 L20.0 147.2 L25.0 146.9 L30.0 146.6 L35.0 146.2 L40.0 145.7 L45.0 145.2 L50.0 144.6 L55.0 144.1 L60.0 143.7 L65.0 143.3 L70.0 143.1 L75.0 142.9 L80.0 142.8 L85.0 142.9 L90.0 143.1 L95.0 143.4 L100.0 143.7 L105.0 144.1 L110.0 144.6 L115.0 145.1 L120.0 145.5 L125.0 145.9 L130.0 146.3 L135.0 146.6 L140.0 146.9 L145.0 147.1 L150.0 147.3 L155.0 147.4 L160.0 147.4 L165.0 147.5 L170.0 147.6 L175.0 147.7 L180.0 147.9 L185.0 148.1 L190.0 148.4 L195.0 148.7 L200.0 149.1 L205.0 149.5 L210.0 149.9 L215.0 150.3 L220.0 150.7 L225.0 151.1 L230.0 151.4 L235.0 151.6 L240.0 151.7 L245.0 151.7 L250.0 151.6 L255.0 151.3 L260.0 151.0 L265.0 150.6 L270.0 150.2 L275.0 149.7 L280.0 149.3 L285.0 148.9 L290.0 148.5 L295.0 148.2 L300.0 148.0 L305.0 148.0 L310.0 148.0 L315.0 148.1 L320.0 148.3 L325.0 148.6 L330.0 149.0 L335.0 149.4 L340.0 149.7 L345.0 150.1 L350.0 150.5 L355.0 150.8 L360.0 151.1 L365.0 151.2 L370.0 151.4 L375.0 151.5 L380.0 151.5 L385.0 151.6 L390.0 151.6 L395.0 151.6 L400.0 151.7 L405.0 151.8 L410.0 152.0 L415.0 152.3 L420.0 152.6 L425.0 152.9" fill="none" stroke="#f4ead8" stroke-width="1.8" stroke-opacity="0.4" stroke-dasharray="36 8" stroke-dashoffset="40"/><path d="M-5.0 162.7 L0.0 162.7 L5.0 162.9 L10.0 163.2 L15.0 163.5 L20.0 163.8 L25.0 164.1 L30.0 164.3 L35.0 164.4 L40.0 164.4 L45.0 164.3 L50.0 164.0 L55.0 163.6 L60.0 163.1 L65.0 162.6 L70.0 162.1 L75.0 161.6 L80.0 161.3 L85.0 161.0 L90.0 160.9 L95.0 160.8 L100.0 161.0 L105.0 161.2 L110.0 161.4 L115.0 161.7 L120.0 161.9 L125.0 162.1 L130.0 162.2 L135.0 162.2 L140.0 162.1 L145.0 161.9 L150.0 161.6 L155.0 161.3 L160.0 161.0 L165.0 160.8 L170.0 160.6 L175.0 160.6 L180.0 160.6 L185.0 160.8 L190.0 161.1 L195.0 161.5 L200.0 162.0 L205.0 162.4 L210.0 162.8 L215.0 163.2 L220.0 163.4 L225.0 163.5 L230.0 163.5 L235.0 163.3 L240.0 163.0 L245.0 162.6 L250.0 162.2 L255.0 161.9 L260.0 161.5 L265.0 161.2 L270.0 161.1 L275.0 161.0 L280.0 161.0 L285.0 161.1 L290.0 161.3 L295.0 161.5 L300.0 161.6 L305.0 161.7 L310.0 161.7 L315.0 161.5 L320.0 161.3 L325.0 160.9 L330.0 160.4 L335.0 159.9 L340.0 159.3 L345.0 158.8 L350.0 158.3 L355.0 158.0 L360.0 157.7 L365.0 157.6 L370.0 157.7 L375.0 157.8 L380.0 158.1 L385.0 158.4 L390.0 158.7 L395.0 159.0 L400.0 159.2 L405.0 159.4 L410.0 159.4 L415.0 159.3 L420.0 159.1 L425.0 158.9" fill="none" stroke="#8f7a5e" stroke-width="3.2" stroke-opacity="0.38" stroke-dasharray="81 4" stroke-dashoffset="56"/><path d="M-5.0 160.3 L0.0 160.3 L5.0 160.5 L10.0 160.8 L15.0 161.1 L20.0 161.4 L25.0 161.7 L30.0 161.9 L35.0 162.0 L40.0 162.0 L45.0 161.9 L50.0 161.6 L55.0 161.2 L60.0 160.7 L65.0 160.2 L70.0 159.7 L75.0 159.2 L80.0 158.9 L85.0 158.6 L90.0 158.5 L95.0 158.4 L100.0 158.6 L105.0 158.8 L110.0 159.0 L115.0 159.3 L120.0 159.5 L125.0 159.7 L130.0 159.8 L135.0 159.8 L140.0 159.7 L145.0 159.5 L150.0 159.2 L155.0 158.9 L160.0 158.6 L165.0 158.4 L170.0 158.2 L175.0 158.2 L180.0 158.2 L185.0 158.4 L190.0 158.7 L195.0 159.1 L200.0 159.6 L205.0 160.0 L210.0 160.4 L215.0 160.8 L220.0 161.0 L225.0 161.1 L230.0 161.1 L235.0 160.9 L240.0 160.6 L245.0 160.2 L250.0 159.8 L255.0 159.5 L260.0 159.1 L265.0 158.8 L270.0 158.7 L275.0 158.6 L280.0 158.6 L285.0 158.7 L290.0 158.9 L295.0 159.1 L300.0 159.2 L305.0 159.3 L310.0 159.3 L315.0 159.1 L320.0 158.9 L325.0 158.5 L330.0 158.0 L335.0 157.5 L340.0 156.9 L345.0 156.4 L350.0 155.9 L355.0 155.6 L360.0 155.3 L365.0 155.2 L370.0 155.3 L375.0 155.4 L380.0 155.7 L385.0 156.0 L390.0 156.3 L395.0 156.6 L400.0 156.8 L405.0 157.0 L410.0 157.0 L415.0 156.9 L420.0 156.7 L425.0 156.5" fill="none" stroke="#f4ead8" stroke-width="1.8" stroke-opacity="0.4" stroke-dasharray="50 3" stroke-dashoffset="2"/><path d="M-5.0 169.0 L0.0 168.6 L5.0 168.1 L10.0 167.7 L15.0 167.4 L20.0 167.2 L25.0 167.0 L30.0 167.0 L35.0 167.0 L40.0 167.0 L45.0 167.1 L50.0 167.2 L55.0 167.3 L60.0 167.4 L65.0 167.3 L70.0 167.2 L75.0 167.1 L80.0 166.8 L85.0 166.5 L90.0 166.1 L95.0 165.7 L100.0 165.3 L105.0 164.9 L110.0 164.6 L115.0 164.4 L120.0 164.2 L125.0 164.2 L130.0 164.3 L135.0 164.5 L140.0 164.8 L145.0 165.2 L150.0 165.7 L155.0 166.2 L160.0 166.8 L165.0 167.3 L170.0 167.8 L175.0 168.2 L180.0 168.5 L185.0 168.7 L190.0 168.9 L195.0 168.9 L200.0 168.9 L205.0 168.8 L210.0 168.7 L215.0 168.6 L220.0 168.5 L225.0 168.4 L230.0 168.4 L235.0 168.5 L240.0 168.6 L245.0 168.9 L250.0 169.1 L255.0 169.5 L260.0 169.8 L265.0 170.2 L270.0 170.5 L275.0 170.7 L280.0 170.9 L285.0 171.0 L290.0 170.9 L295.0 170.8 L300.0 170.5 L305.0 170.2 L310.0 169.8 L315.0 169.3 L320.0 168.8 L325.0 168.3 L330.0 167.9 L335.0 167.5 L340.0 167.2 L345.0 167.0 L350.0 167.0 L355.0 167.0 L360.0 167.1 L365.0 167.3 L370.0 167.6 L375.0 167.9 L380.0 168.2 L385.0 168.5 L390.0 168.8 L395.0 168.9 L400.0 169.1 L405.0 169.1 L410.0 169.1 L415.0 169.0 L420.0 168.9 L425.0 168.7" fill="none" stroke="#8f7a5e" stroke-width="3.2" stroke-opacity="0.38" stroke-dasharray="66 4" stroke-dashoffset="12"/><path d="M-5.0 166.6 L0.0 166.2 L5.0 165.7 L10.0 165.3 L15.0 165.0 L20.0 164.8 L25.0 164.6 L30.0 164.6 L35.0 164.6 L40.0 164.6 L45.0 164.7 L50.0 164.8 L55.0 164.9 L60.0 165.0 L65.0 164.9 L70.0 164.8 L75.0 164.7 L80.0 164.4 L85.0 164.1 L90.0 163.7 L95.0 163.3 L100.0 162.9 L105.0 162.5 L110.0 162.2 L115.0 162.0 L120.0 161.8 L125.0 161.8 L130.0 161.9 L135.0 162.1 L140.0 162.4 L145.0 162.8 L150.0 163.3 L155.0 163.8 L160.0 164.4 L165.0 164.9 L170.0 165.4 L175.0 165.8 L180.0 166.1 L185.0 166.3 L190.0 166.5 L195.0 166.5 L200.0 166.5 L205.0 166.4 L210.0 166.3 L215.0 166.2 L220.0 166.1 L225.0 166.0 L230.0 166.0 L235.0 166.1 L240.0 166.2 L245.0 166.5 L250.0 166.7 L255.0 167.1 L260.0 167.4 L265.0 167.8 L270.0 168.1 L275.0 168.3 L280.0 168.5 L285.0 168.6 L290.0 168.5 L295.0 168.4 L300.0 168.1 L305.0 167.8 L310.0 167.4 L315.0 166.9 L320.0 166.4 L325.0 165.9 L330.0 165.5 L335.0 165.1 L340.0 164.8 L345.0 164.6 L350.0 164.6 L355.0 164.6 L360.0 164.7 L365.0 164.9 L370.0 165.2 L375.0 165.5 L380.0 165.8 L385.0 166.1 L390.0 166.4 L395.0 166.5 L400.0 166.7 L405.0 166.7 L410.0 166.7 L415.0 166.6 L420.0 166.5 L425.0 166.3" fill="none" stroke="#f4ead8" stroke-width="1.8" stroke-opacity="0.4" stroke-dasharray="43 5" stroke-dashoffset="47"/><path d="M-5.0 176.7 L0.0 177.0 L5.0 177.3 L10.0 177.7 L15.0 178.0 L20.0 178.2 L25.0 178.3 L30.0 178.3 L35.0 178.2 L40.0 177.9 L45.0 177.6 L50.0 177.1 L55.0 176.6 L60.0 176.0 L65.0 175.4 L70.0 174.8 L75.0 174.2 L80.0 173.8 L85.0 173.4 L90.0 173.2 L95.0 173.0 L100.0 173.0 L105.0 173.0 L110.0 173.2 L115.0 173.4 L120.0 173.6 L125.0 173.8 L130.0 174.0 L135.0 174.1 L140.0 174.1 L145.0 174.1 L150.0 173.9 L155.0 173.7 L160.0 173.4 L165.0 173.1 L170.0 172.8 L175.0 172.4 L180.0 172.2 L185.0 171.9 L190.0 171.8 L195.0 171.8 L200.0 171.9 L205.0 172.2 L210.0 172.5 L215.0 173.0 L220.0 173.5 L225.0 174.1 L230.0 174.7 L235.0 175.3 L240.0 175.9 L245.0 176.3 L250.0 176.7 L255.0 176.9 L260.0 177.1 L265.0 177.1 L270.0 177.0 L275.0 176.9 L280.0 176.6 L285.0 176.4 L290.0 176.2 L295.0 176.0 L300.0 175.9 L305.0 175.8 L310.0 175.9 L315.0 176.0 L320.0 176.2 L325.0 176.5 L330.0 176.8 L335.0 177.2 L340.0 177.5 L345.0 177.8 L350.0 178.1 L355.0 178.2 L360.0 178.3 L365.0 178.2 L370.0 178.0 L375.0 177.7 L380.0 177.3 L385.0 176.8 L390.0 176.3 L395.0 175.8 L400.0 175.3 L405.0 174.9 L410.0 174.5 L415.0 174.3 L420.0 174.1 L425.0 174.1" fill="none" stroke="#8f7a5e" stroke-width="3.2" stroke-opacity="0.38" stroke-dasharray="70 6" stroke-dashoffset="52"/><path d="M-5.0 174.3 L0.0 174.6 L5.0 174.9 L10.0 175.3 L15.0 175.6 L20.0 175.8 L25.0 175.9 L30.0 175.9 L35.0 175.8 L40.0 175.5 L45.0 175.2 L50.0 174.7 L55.0 174.2 L60.0 173.6 L65.0 173.0 L70.0 172.4 L75.0 171.8 L80.0 171.4 L85.0 171.0 L90.0 170.8 L95.0 170.6 L100.0 170.6 L105.0 170.6 L110.0 170.8 L115.0 171.0 L120.0 171.2 L125.0 171.4 L130.0 171.6 L135.0 171.7 L140.0 171.7 L145.0 171.7 L150.0 171.5 L155.0 171.3 L160.0 171.0 L165.0 170.7 L170.0 170.4 L175.0 170.0 L180.0 169.8 L185.0 169.5 L190.0 169.4 L195.0 169.4 L200.0 169.5 L205.0 169.8 L210.0 170.1 L215.0 170.6 L220.0 171.1 L225.0 171.7 L230.0 172.3 L235.0 172.9 L240.0 173.5 L245.0 173.9 L250.0 174.3 L255.0 174.5 L260.0 174.7 L265.0 174.7 L270.0 174.6 L275.0 174.5 L280.0 174.2 L285.0 174.0 L290.0 173.8 L295.0 173.6 L300.0 173.5 L305.0 173.4 L310.0 173.5 L315.0 173.6 L320.0 173.8 L325.0 174.1 L330.0 174.4 L335.0 174.8 L340.0 175.1 L345.0 175.4 L350.0 175.7 L355.0 175.8 L360.0 175.9 L365.0 175.8 L370.0 175.6 L375.0 175.3 L380.0 174.9 L385.0 174.4 L390.0 173.9 L395.0 173.4 L400.0 172.9 L405.0 172.5 L410.0 172.1 L415.0 171.9 L420.0 171.7 L425.0 171.7" fill="none" stroke="#f4ead8" stroke-width="1.8" stroke-opacity="0.4" stroke-dasharray="71 3" stroke-dashoffset="8"/><path d="M-5.0 186.0 L0.0 185.5 L5.0 185.0 L10.0 184.5 L15.0 183.9 L20.0 183.4 L25.0 183.0 L30.0 182.7 L35.0 182.5 L40.0 182.4 L45.0 182.5 L50.0 182.6 L55.0 182.8 L60.0 183.0 L65.0 183.3 L70.0 183.6 L75.0 183.8 L80.0 184.0 L85.0 184.1 L90.0 184.1 L95.0 184.0 L100.0 183.8 L105.0 183.5 L110.0 183.2 L115.0 182.8 L120.0 182.4 L125.0 182.1 L130.0 181.8 L135.0 181.6 L140.0 181.6 L145.0 181.6 L150.0 181.8 L155.0 182.2 L160.0 182.6 L165.0 183.1 L170.0 183.6 L175.0 184.2 L180.0 184.8 L185.0 185.3 L190.0 185.8 L195.0 186.1 L200.0 186.4 L205.0 186.5 L210.0 186.6 L215.0 186.5 L220.0 186.4 L225.0 186.2 L230.0 186.0 L235.0 185.8 L240.0 185.7 L245.0 185.6 L250.0 185.6 L255.0 185.7 L260.0 186.0 L265.0 186.3 L270.0 186.7 L275.0 187.1 L280.0 187.6 L285.0 188.1 L290.0 188.5 L295.0 188.9 L300.0 189.3 L305.0 189.4 L310.0 189.5 L315.0 189.5 L320.0 189.3 L325.0 189.0 L330.0 188.7 L335.0 188.3 L340.0 187.8 L345.0 187.4 L350.0 187.0 L355.0 186.7 L360.0 186.5 L365.0 186.3 L370.0 186.3 L375.0 186.4 L380.0 186.6 L385.0 186.9 L390.0 187.2 L395.0 187.6 L400.0 187.9 L405.0 188.2 L410.0 188.4 L415.0 188.5 L420.0 188.6 L425.0 188.5" fill="none" stroke="#8f7a5e" stroke-width="3.2" stroke-opacity="0.38" stroke-dasharray="53 4" stroke-dashoffset="31"/><path d="M-5.0 183.6 L0.0 183.1 L5.0 182.6 L10.0 182.1 L15.0 181.5 L20.0 181.0 L25.0 180.6 L30.0 180.3 L35.0 180.1 L40.0 180.0 L45.0 180.1 L50.0 180.2 L55.0 180.4 L60.0 180.6 L65.0 180.9 L70.0 181.2 L75.0 181.4 L80.0 181.6 L85.0 181.7 L90.0 181.7 L95.0 181.6 L100.0 181.4 L105.0 181.1 L110.0 180.8 L115.0 180.4 L120.0 180.0 L125.0 179.7 L130.0 179.4 L135.0 179.2 L140.0 179.2 L145.0 179.2 L150.0 179.4 L155.0 179.8 L160.0 180.2 L165.0 180.7 L170.0 181.2 L175.0 181.8 L180.0 182.4 L185.0 182.9 L190.0 183.4 L195.0 183.7 L200.0 184.0 L205.0 184.1 L210.0 184.2 L215.0 184.1 L220.0 184.0 L225.0 183.8 L230.0 183.6 L235.0 183.4 L240.0 183.3 L245.0 183.2 L250.0 183.2 L255.0 183.3 L260.0 183.6 L265.0 183.9 L270.0 184.3 L275.0 184.7 L280.0 185.2 L285.0 185.7 L290.0 186.1 L295.0 186.5 L300.0 186.9 L305.0 187.0 L310.0 187.1 L315.0 187.1 L320.0 186.9 L325.0 186.6 L330.0 186.3 L335.0 185.9 L340.0 185.4 L345.0 185.0 L350.0 184.6 L355.0 184.3 L360.0 184.1 L365.0 183.9 L370.0 183.9 L375.0 184.0 L380.0 184.2 L385.0 184.5 L390.0 184.8 L395.0 185.2 L400.0 185.5 L405.0 185.8 L410.0 186.0 L415.0 186.1 L420.0 186.2 L425.0 186.1" fill="none" stroke="#f4ead8" stroke-width="1.8" stroke-opacity="0.4" stroke-dasharray="30 6" stroke-dashoffset="6"/><path d="M-5.0 194.1 L0.0 194.3 L5.0 194.5 L10.0 194.7 L15.0 194.9 L20.0 195.0 L25.0 195.1 L30.0 195.1 L35.0 195.1 L40.0 194.9 L45.0 194.8 L50.0 194.5 L55.0 194.3 L60.0 194.0 L65.0 193.7 L70.0 193.4 L75.0 193.2 L80.0 193.0 L85.0 192.9 L90.0 192.8 L95.0 192.8 L100.0 192.9 L105.0 193.1 L110.0 193.3 L115.0 193.6 L120.0 193.9 L125.0 194.2 L130.0 194.5 L135.0 194.9 L140.0 195.1 L145.0 195.3 L150.0 195.5 L155.0 195.6 L160.0 195.7 L165.0 195.6 L170.0 195.6 L175.0 195.5 L180.0 195.3 L185.0 195.2 L190.0 195.1 L195.0 195.0 L200.0 194.9 L205.0 194.9 L210.0 195.0 L215.0 195.2 L220.0 195.4 L225.0 195.6 L230.0 195.9 L235.0 196.3 L240.0 196.7 L245.0 197.0 L250.0 197.4 L255.0 197.8 L260.0 198.0 L265.0 198.3 L270.0 198.4 L275.0 198.5 L280.0 198.5 L285.0 198.4 L290.0 198.3 L295.0 198.1 L300.0 197.9 L305.0 197.7 L310.0 197.4 L315.0 197.2 L320.0 197.0 L325.0 196.9 L330.0 196.8 L335.0 196.8 L340.0 196.8 L345.0 196.9 L350.0 197.0 L355.0 197.2 L360.0 197.4 L365.0 197.6 L370.0 197.7 L375.0 197.9 L380.0 198.0 L385.0 198.0 L390.0 197.9 L395.0 197.8 L400.0 197.6 L405.0 197.4 L410.0 197.1 L415.0 196.7 L420.0 196.3 L425.0 195.9" fill="none" stroke="#8f7a5e" stroke-width="3.2" stroke-opacity="0.38" stroke-dasharray="47 5" stroke-dashoffset="28"/><path d="M-5.0 191.7 L0.0 191.9 L5.0 192.1 L10.0 192.3 L15.0 192.5 L20.0 192.6 L25.0 192.7 L30.0 192.7 L35.0 192.7 L40.0 192.5 L45.0 192.4 L50.0 192.1 L55.0 191.9 L60.0 191.6 L65.0 191.3 L70.0 191.0 L75.0 190.8 L80.0 190.6 L85.0 190.5 L90.0 190.4 L95.0 190.4 L100.0 190.5 L105.0 190.7 L110.0 190.9 L115.0 191.2 L120.0 191.5 L125.0 191.8 L130.0 192.1 L135.0 192.5 L140.0 192.7 L145.0 192.9 L150.0 193.1 L155.0 193.2 L160.0 193.3 L165.0 193.2 L170.0 193.2 L175.0 193.1 L180.0 192.9 L185.0 192.8 L190.0 192.7 L195.0 192.6 L200.0 192.5 L205.0 192.5 L210.0 192.6 L215.0 192.8 L220.0 193.0 L225.0 193.2 L230.0 193.5 L235.0 193.9 L240.0 194.3 L245.0 194.6 L250.0 195.0 L255.0 195.4 L260.0 195.6 L265.0 195.9 L270.0 196.0 L275.0 196.1 L280.0 196.1 L285.0 196.0 L290.0 195.9 L295.0 195.7 L300.0 195.5 L305.0 195.3 L310.0 195.0 L315.0 194.8 L320.0 194.6 L325.0 194.5 L330.0 194.4 L335.0 194.4 L340.0 194.4 L345.0 194.5 L350.0 194.6 L355.0 194.8 L360.0 195.0 L365.0 195.2 L370.0 195.3 L375.0 195.5 L380.0 195.6 L385.0 195.6 L390.0 195.5 L395.0 195.4 L400.0 195.2 L405.0 195.0 L410.0 194.7 L415.0 194.3 L420.0 193.9 L425.0 193.5" fill="none" stroke="#f4ead8" stroke-width="1.8" stroke-opacity="0.4" stroke-dasharray="33 3" stroke-dashoffset="57"/><path d="M-5.0 206.1 L0.0 205.8 L5.0 205.4 L10.0 205.2 L15.0 205.1 L20.0 205.1 L25.0 205.2 L30.0 205.3 L35.0 205.5 L40.0 205.8 L45.0 206.1 L50.0 206.3 L55.0 206.5 L60.0 206.6 L65.0 206.6 L70.0 206.6 L75.0 206.3 L80.0 206.0 L85.0 205.6 L90.0 205.1 L95.0 204.6 L100.0 204.0 L105.0 203.4 L110.0 202.9 L115.0 202.5 L120.0 202.2 L125.0 202.0 L130.0 201.9 L135.0 201.9 L140.0 202.0 L145.0 202.2 L150.0 202.5 L155.0 202.8 L160.0 203.1 L165.0 203.3 L170.0 203.5 L175.0 203.6 L180.0 203.6 L185.0 203.5 L190.0 203.3 L195.0 203.0 L200.0 202.6 L205.0 202.2 L210.0 201.8 L215.0 201.4 L220.0 201.1 L225.0 200.8 L230.0 200.6 L235.0 200.6 L240.0 200.7 L245.0 200.8 L250.0 201.1 L255.0 201.5 L260.0 201.9 L265.0 202.3 L270.0 202.7 L275.0 203.0 L280.0 203.3 L285.0 203.5 L290.0 203.6 L295.0 203.6 L300.0 203.4 L305.0 203.2 L310.0 202.8 L315.0 202.4 L320.0 202.0 L325.0 201.6 L330.0 201.2 L335.0 200.9 L340.0 200.7 L345.0 200.6 L350.0 200.6 L355.0 200.7 L360.0 200.8 L365.0 201.1 L370.0 201.4 L375.0 201.6 L380.0 201.9 L385.0 202.2 L390.0 202.3 L395.0 202.4 L400.0 202.3 L405.0 202.1 L410.0 201.8 L415.0 201.5 L420.0 201.0 L425.0 200.5" fill="none" stroke="#8f7a5e" stroke-width="3.2" stroke-opacity="0.38" stroke-dasharray="74 7" stroke-dashoffset="58"/><path d="M-5.0 203.7 L0.0 203.4 L5.0 203.0 L10.0 202.8 L15.0 202.7 L20.0 202.7 L25.0 202.8 L30.0 202.9 L35.0 203.1 L40.0 203.4 L45.0 203.7 L50.0 203.9 L55.0 204.1 L60.0 204.2 L65.0 204.2 L70.0 204.2 L75.0 203.9 L80.0 203.6 L85.0 203.2 L90.0 202.7 L95.0 202.2 L100.0 201.6 L105.0 201.0 L110.0 200.5 L115.0 200.1 L120.0 199.8 L125.0 199.6 L130.0 199.5 L135.0 199.5 L140.0 199.6 L145.0 199.8 L150.0 200.1 L155.0 200.4 L160.0 200.7 L165.0 200.9 L170.0 201.1 L175.0 201.2 L180.0 201.2 L185.0 201.1 L190.0 200.9 L195.0 200.6 L200.0 200.2 L205.0 199.8 L210.0 199.4 L215.0 199.0 L220.0 198.7 L225.0 198.4 L230.0 198.2 L235.0 198.2 L240.0 198.3 L245.0 198.4 L250.0 198.7 L255.0 199.1 L260.0 199.5 L265.0 199.9 L270.0 200.3 L275.0 200.6 L280.0 200.9 L285.0 201.1 L290.0 201.2 L295.0 201.2 L300.0 201.0 L305.0 200.8 L310.0 200.4 L315.0 200.0 L320.0 199.6 L325.0 199.2 L330.0 198.8 L335.0 198.5 L340.0 198.3 L345.0 198.2 L350.0 198.2 L355.0 198.3 L360.0 198.4 L365.0 198.7 L370.0 199.0 L375.0 199.2 L380.0 199.5 L385.0 199.8 L390.0 199.9 L395.0 200.0 L400.0 199.9 L405.0 199.7 L410.0 199.4 L415.0 199.1 L420.0 198.6 L425.0 198.1" fill="none" stroke="#f4ead8" stroke-width="1.8" stroke-opacity="0.4" stroke-dasharray="34 8" stroke-dashoffset="3"/><path d="M-5.0 208.5 L0.0 208.4 L5.0 208.3 L10.0 208.4 L15.0 208.5 L20.0 208.9 L25.0 209.3 L30.0 209.8 L35.0 210.4 L40.0 211.0 L45.0 211.6 L50.0 212.1 L55.0 212.5 L60.0 212.7 L65.0 212.8 L70.0 212.8 L75.0 212.7 L80.0 212.6 L85.0 212.3 L90.0 212.1 L95.0 212.0 L100.0 211.9 L105.0 211.9 L110.0 212.0 L115.0 212.3 L120.0 212.6 L125.0 213.1 L130.0 213.6 L135.0 214.0 L140.0 214.5 L145.0 214.8 L150.0 215.0 L155.0 215.1 L160.0 215.1 L165.0 214.9 L170.0 214.6 L175.0 214.3 L180.0 213.9 L185.0 213.5 L190.0 213.1 L195.0 212.9 L200.0 212.7 L205.0 212.7 L210.0 212.8 L215.0 213.0 L220.0 213.3 L225.0 213.6 L230.0 213.9 L235.0 214.2 L240.0 214.4 L245.0 214.5 L250.0 214.5 L255.0 214.4 L260.0 214.1 L265.0 213.7 L270.0 213.3 L275.0 212.8 L280.0 212.4 L285.0 212.1 L290.0 211.8 L295.0 211.7 L300.0 211.7 L305.0 211.8 L310.0 212.0 L315.0 212.4 L320.0 212.8 L325.0 213.2 L330.0 213.6 L335.0 213.8 L340.0 214.0 L345.0 214.1 L350.0 214.1 L355.0 213.9 L360.0 213.7 L365.0 213.3 L370.0 213.0 L375.0 212.7 L380.0 212.5 L385.0 212.4 L390.0 212.4 L395.0 212.5 L400.0 212.8 L405.0 213.1 L410.0 213.6 L415.0 214.1 L420.0 214.6 L425.0 215.0" fill="none" stroke="#8f7a5e" stroke-width="3.2" stroke-opacity="0.38" stroke-dasharray="71 5" stroke-dashoffset="14"/><path d="M-5.0 206.1 L0.0 206.0 L5.0 205.9 L10.0 206.0 L15.0 206.1 L20.0 206.5 L25.0 206.9 L30.0 207.4 L35.0 208.0 L40.0 208.6 L45.0 209.2 L50.0 209.7 L55.0 210.1 L60.0 210.3 L65.0 210.4 L70.0 210.4 L75.0 210.3 L80.0 210.2 L85.0 209.9 L90.0 209.7 L95.0 209.6 L100.0 209.5 L105.0 209.5 L110.0 209.6 L115.0 209.9 L120.0 210.2 L125.0 210.7 L130.0 211.2 L135.0 211.6 L140.0 212.1 L145.0 212.4 L150.0 212.6 L155.0 212.7 L160.0 212.7 L165.0 212.5 L170.0 212.2 L175.0 211.9 L180.0 211.5 L185.0 211.1 L190.0 210.7 L195.0 210.5 L200.0 210.3 L205.0 210.3 L210.0 210.4 L215.0 210.6 L220.0 210.9 L225.0 211.2 L230.0 211.5 L235.0 211.8 L240.0 212.0 L245.0 212.1 L250.0 212.1 L255.0 212.0 L260.0 211.7 L265.0 211.3 L270.0 210.9 L275.0 210.4 L280.0 210.0 L285.0 209.7 L290.0 209.4 L295.0 209.3 L300.0 209.3 L305.0 209.4 L310.0 209.6 L315.0 210.0 L320.0 210.4 L325.0 210.8 L330.0 211.2 L335.0 211.4 L340.0 211.6 L345.0 211.7 L350.0 211.7 L355.0 211.5 L360.0 211.3 L365.0 210.9 L370.0 210.6 L375.0 210.3 L380.0 210.1 L385.0 210.0 L390.0 210.0 L395.0 210.1 L400.0 210.4 L405.0 210.7 L410.0 211.2 L415.0 211.7 L420.0 212.2 L425.0 212.6" fill="none" stroke="#f4ead8" stroke-width="1.8" stroke-opacity="0.4" stroke-dasharray="30 7" stroke-dashoffset="51"/><path d="M-5.0 216.6 L0.0 216.5 L5.0 216.4 L10.0 216.2 L15.0 216.1 L20.0 215.9 L25.0 215.7 L30.0 215.6 L35.0 215.6 L40.0 215.7 L45.0 215.8 L50.0 216.0 L55.0 216.3 L60.0 216.7 L65.0 217.2 L70.0 217.8 L75.0 218.4 L80.0 219.0 L85.0 219.6 L90.0 220.1 L95.0 220.6 L100.0 221.1 L105.0 221.4 L110.0 221.7 L115.0 221.8 L120.0 221.9 L125.0 221.8 L130.0 221.6 L135.0 221.4 L140.0 221.1 L145.0 220.8 L150.0 220.4 L155.0 220.1 L160.0 219.8 L165.0 219.6 L170.0 219.4 L175.0 219.2 L180.0 219.2 L185.0 219.2 L190.0 219.2 L195.0 219.4 L200.0 219.5 L205.0 219.7 L210.0 219.9 L215.0 220.0 L220.0 220.1 L225.0 220.2 L230.0 220.2 L235.0 220.1 L240.0 219.9 L245.0 219.7 L250.0 219.4 L255.0 219.1 L260.0 218.7 L265.0 218.4 L270.0 218.0 L275.0 217.7 L280.0 217.5 L285.0 217.4 L290.0 217.3 L295.0 217.3 L300.0 217.5 L305.0 217.8 L310.0 218.1 L315.0 218.6 L320.0 219.1 L325.0 219.7 L330.0 220.3 L335.0 220.9 L340.0 221.5 L345.0 222.0 L350.0 222.5 L355.0 222.9 L360.0 223.2 L365.0 223.4 L370.0 223.5 L375.0 223.6 L380.0 223.6 L385.0 223.5 L390.0 223.4 L395.0 223.2 L400.0 223.1 L405.0 222.9 L410.0 222.9 L415.0 222.8 L420.0 222.8 L425.0 222.9" fill="none" stroke="#8f7a5e" stroke-width="3.2" stroke-opacity="0.38" stroke-dasharray="69 4" stroke-dashoffset="41"/><path d="M-5.0 214.2 L0.0 214.1 L5.0 214.0 L10.0 213.8 L15.0 213.7 L20.0 213.5 L25.0 213.3 L30.0 213.2 L35.0 213.2 L40.0 213.3 L45.0 213.4 L50.0 213.6 L55.0 213.9 L60.0 214.3 L65.0 214.8 L70.0 215.4 L75.0 216.0 L80.0 216.6 L85.0 217.2 L90.0 217.7 L95.0 218.2 L100.0 218.7 L105.0 219.0 L110.0 219.3 L115.0 219.4 L120.0 219.5 L125.0 219.4 L130.0 219.2 L135.0 219.0 L140.0 218.7 L145.0 218.4 L150.0 218.0 L155.0 217.7 L160.0 217.4 L165.0 217.2 L170.0 217.0 L175.0 216.8 L180.0 216.8 L185.0 216.8 L190.0 216.8 L195.0 217.0 L200.0 217.1 L205.0 217.3 L210.0 217.5 L215.0 217.6 L220.0 217.7 L225.0 217.8 L230.0 217.8 L235.0 217.7 L240.0 217.5 L245.0 217.3 L250.0 217.0 L255.0 216.7 L260.0 216.3 L265.0 216.0 L270.0 215.6 L275.0 215.3 L280.0 215.1 L285.0 215.0 L290.0 214.9 L295.0 214.9 L300.0 215.1 L305.0 215.4 L310.0 215.7 L315.0 216.2 L320.0 216.7 L325.0 217.3 L330.0 217.9 L335.0 218.5 L340.0 219.1 L345.0 219.6 L350.0 220.1 L355.0 220.5 L360.0 220.8 L365.0 221.0 L370.0 221.1 L375.0 221.2 L380.0 221.2 L385.0 221.1 L390.0 221.0 L395.0 220.8 L400.0 220.7 L405.0 220.5 L410.0 220.5 L415.0 220.4 L420.0 220.4 L425.0 220.5" fill="none" stroke="#f4ead8" stroke-width="1.8" stroke-opacity="0.4" stroke-dasharray="42 7" stroke-dashoffset="51"/><path d="M-5.0 226.1 L0.0 226.1 L5.0 226.2 L10.0 226.4 L15.0 226.8 L20.0 227.2 L25.0 227.7 L30.0 228.3 L35.0 228.9 L40.0 229.5 L45.0 230.0 L50.0 230.5 L55.0 230.9 L60.0 231.1 L65.0 231.3 L70.0 231.3 L75.0 231.3 L80.0 231.2 L85.0 231.1 L90.0 230.9 L95.0 230.7 L100.0 230.6 L105.0 230.6 L110.0 230.6 L115.0 230.7 L120.0 230.8 L125.0 231.0 L130.0 231.2 L135.0 231.5 L140.0 231.6 L145.0 231.8 L150.0 231.8 L155.0 231.7 L160.0 231.6 L165.0 231.3 L170.0 230.9 L175.0 230.5 L180.0 230.0 L185.0 229.5 L190.0 229.0 L195.0 228.5 L200.0 228.1 L205.0 227.9 L210.0 227.7 L215.0 227.7 L220.0 227.8 L225.0 227.9 L230.0 228.2 L235.0 228.5 L240.0 228.9 L245.0 229.2 L250.0 229.5 L255.0 229.8 L260.0 230.0 L265.0 230.1 L270.0 230.1 L275.0 230.1 L280.0 230.0 L285.0 229.9 L290.0 229.9 L295.0 229.8 L300.0 229.9 L305.0 230.0 L310.0 230.2 L315.0 230.4 L320.0 230.8 L325.0 231.2 L330.0 231.7 L335.0 232.2 L340.0 232.6 L345.0 233.1 L350.0 233.4 L355.0 233.6 L360.0 233.7 L365.0 233.7 L370.0 233.5 L375.0 233.3 L380.0 232.9 L385.0 232.5 L390.0 232.0 L395.0 231.6 L400.0 231.2 L405.0 230.8 L410.0 230.5 L415.0 230.3 L420.0 230.2 L425.0 230.2" fill="none" stroke="#8f7a5e" stroke-width="3.2" stroke-opacity="0.38" stroke-dasharray="78 5" stroke-dashoffset="35"/><path d="M-5.0 223.7 L0.0 223.7 L5.0 223.8 L10.0 224.0 L15.0 224.4 L20.0 224.8 L25.0 225.3 L30.0 225.9 L35.0 226.5 L40.0 227.1 L45.0 227.6 L50.0 228.1 L55.0 228.5 L60.0 228.7 L65.0 228.9 L70.0 228.9 L75.0 228.9 L80.0 228.8 L85.0 228.7 L90.0 228.5 L95.0 228.3 L100.0 228.2 L105.0 228.2 L110.0 228.2 L115.0 228.3 L120.0 228.4 L125.0 228.6 L130.0 228.8 L135.0 229.1 L140.0 229.2 L145.0 229.4 L150.0 229.4 L155.0 229.3 L160.0 229.2 L165.0 228.9 L170.0 228.5 L175.0 228.1 L180.0 227.6 L185.0 227.1 L190.0 226.6 L195.0 226.1 L200.0 225.7 L205.0 225.5 L210.0 225.3 L215.0 225.3 L220.0 225.4 L225.0 225.5 L230.0 225.8 L235.0 226.1 L240.0 226.5 L245.0 226.8 L250.0 227.1 L255.0 227.4 L260.0 227.6 L265.0 227.7 L270.0 227.7 L275.0 227.7 L280.0 227.6 L285.0 227.5 L290.0 227.5 L295.0 227.4 L300.0 227.5 L305.0 227.6 L310.0 227.8 L315.0 228.0 L320.0 228.4 L325.0 228.8 L330.0 229.3 L335.0 229.8 L340.0 230.2 L345.0 230.7 L350.0 231.0 L355.0 231.2 L360.0 231.3 L365.0 231.3 L370.0 231.1 L375.0 230.9 L380.0 230.5 L385.0 230.1 L390.0 229.6 L395.0 229.2 L400.0 228.8 L405.0 228.4 L410.0 228.1 L415.0 227.9 L420.0 227.8 L425.0 227.8" fill="none" stroke="#f4ead8" stroke-width="1.8" stroke-opacity="0.4" stroke-dasharray="31 6" stroke-dashoffset="5"/><path d="M-5.0 239.7 L0.0 239.6 L5.0 239.5 L10.0 239.5 L15.0 239.6 L20.0 239.7 L25.0 240.0 L30.0 240.2 L35.0 240.5 L40.0 240.7 L45.0 240.9 L50.0 241.0 L55.0 240.9 L60.0 240.8 L65.0 240.5 L70.0 240.2 L75.0 239.7 L80.0 239.2 L85.0 238.6 L90.0 238.1 L95.0 237.5 L100.0 237.1 L105.0 236.7 L110.0 236.5 L115.0 236.3 L120.0 236.2 L125.0 236.2 L130.0 236.2 L135.0 236.3 L140.0 236.3 L145.0 236.3 L150.0 236.2 L155.0 236.0 L160.0 235.8 L165.0 235.5 L170.0 235.2 L175.0 234.8 L180.0 234.4 L185.0 234.1 L190.0 233.8 L195.0 233.7 L200.0 233.6 L205.0 233.7 L210.0 233.8 L215.0 234.1 L220.0 234.5 L225.0 234.9 L230.0 235.3 L235.0 235.6 L240.0 236.0 L245.0 236.2 L250.0 236.3 L255.0 236.4 L260.0 236.3 L265.0 236.1 L270.0 235.9 L275.0 235.7 L280.0 235.5 L285.0 235.2 L290.0 235.1 L295.0 235.0 L300.0 235.0 L305.0 235.1 L310.0 235.2 L315.0 235.4 L320.0 235.6 L325.0 235.7 L330.0 235.9 L335.0 235.9 L340.0 235.9 L345.0 235.7 L350.0 235.5 L355.0 235.1 L360.0 234.7 L365.0 234.2 L370.0 233.7 L375.0 233.2 L380.0 232.8 L385.0 232.4 L390.0 232.2 L395.0 232.1 L400.0 232.1 L405.0 232.2 L410.0 232.3 L415.0 232.6 L420.0 232.8 L425.0 233.1" fill="none" stroke="#8f7a5e" stroke-width="3.2" stroke-opacity="0.38" stroke-dasharray="69 5" stroke-dashoffset="38"/><path d="M-5.0 237.3 L0.0 237.2 L5.0 237.1 L10.0 237.1 L15.0 237.2 L20.0 237.3 L25.0 237.6 L30.0 237.8 L35.0 238.1 L40.0 238.3 L45.0 238.5 L50.0 238.6 L55.0 238.5 L60.0 238.4 L65.0 238.1 L70.0 237.8 L75.0 237.3 L80.0 236.8 L85.0 236.2 L90.0 235.7 L95.0 235.1 L100.0 234.7 L105.0 234.3 L110.0 234.1 L115.0 233.9 L120.0 233.8 L125.0 233.8 L130.0 233.8 L135.0 233.9 L140.0 233.9 L145.0 233.9 L150.0 233.8 L155.0 233.6 L160.0 233.4 L165.0 233.1 L170.0 232.8 L175.0 232.4 L180.0 232.0 L185.0 231.7 L190.0 231.4 L195.0 231.3 L200.0 231.2 L205.0 231.3 L210.0 231.4 L215.0 231.7 L220.0 232.1 L225.0 232.5 L230.0 232.9 L235.0 233.2 L240.0 233.6 L245.0 233.8 L250.0 233.9 L255.0 234.0 L260.0 233.9 L265.0 233.7 L270.0 233.5 L275.0 233.3 L280.0 233.1 L285.0 232.8 L290.0 232.7 L295.0 232.6 L300.0 232.6 L305.0 232.7 L310.0 232.8 L315.0 233.0 L320.0 233.2 L325.0 233.3 L330.0 233.5 L335.0 233.5 L340.0 233.5 L345.0 233.3 L350.0 233.1 L355.0 232.7 L360.0 232.3 L365.0 231.8 L370.0 231.3 L375.0 230.8 L380.0 230.4 L385.0 230.0 L390.0 229.8 L395.0 229.7 L400.0 229.7 L405.0 229.8 L410.0 229.9 L415.0 230.2 L420.0 230.4 L425.0 230.7" fill="none" stroke="#f4ead8" stroke-width="1.8" stroke-opacity="0.4" stroke-dasharray="37 8" stroke-dashoffset="55"/><path d="M-5.0 243.5 L0.0 243.3 L5.0 243.2 L10.0 243.2 L15.0 243.3 L20.0 243.6 L25.0 244.0 L30.0 244.4 L35.0 244.9 L40.0 245.4 L45.0 246.0 L50.0 246.5 L55.0 246.9 L60.0 247.2 L65.0 247.4 L70.0 247.5 L75.0 247.6 L80.0 247.5 L85.0 247.3 L90.0 247.1 L95.0 246.8 L100.0 246.6 L105.0 246.4 L110.0 246.2 L115.0 246.2 L120.0 246.2 L125.0 246.4 L130.0 246.6 L135.0 247.0 L140.0 247.4 L145.0 247.9 L150.0 248.5 L155.0 249.0 L160.0 249.5 L165.0 249.9 L170.0 250.2 L175.0 250.4 L180.0 250.5 L185.0 250.4 L190.0 250.3 L195.0 250.0 L200.0 249.7 L205.0 249.3 L210.0 248.8 L215.0 248.4 L220.0 248.1 L225.0 247.8 L230.0 247.5 L235.0 247.4 L240.0 247.4 L245.0 247.5 L250.0 247.7 L255.0 247.9 L260.0 248.2 L265.0 248.5 L270.0 248.8 L275.0 249.0 L280.0 249.2 L285.0 249.3 L290.0 249.2 L295.0 249.0 L300.0 248.8 L305.0 248.4 L310.0 247.9 L315.0 247.4 L320.0 246.9 L325.0 246.3 L330.0 245.8 L335.0 245.4 L340.0 245.0 L345.0 244.8 L350.0 244.7 L355.0 244.7 L360.0 244.8 L365.0 245.0 L370.0 245.3 L375.0 245.6 L380.0 245.9 L385.0 246.3 L390.0 246.6 L395.0 246.8 L400.0 246.9 L405.0 246.9 L410.0 246.8 L415.0 246.6 L420.0 246.3 L425.0 246.0" fill="none" stroke="#8f7a5e" stroke-width="3.2" stroke-opacity="0.38" stroke-dasharray="58 6" stroke-dashoffset="50"/><path d="M-5.0 241.1 L0.0 240.9 L5.0 240.8 L10.0 240.8 L15.0 240.9 L20.0 241.2 L25.0 241.6 L30.0 242.0 L35.0 242.5 L40.0 243.0 L45.0 243.6 L50.0 244.1 L55.0 244.5 L60.0 244.8 L65.0 245.0 L70.0 245.1 L75.0 245.2 L80.0 245.1 L85.0 244.9 L90.0 244.7 L95.0 244.4 L100.0 244.2 L105.0 244.0 L110.0 243.8 L115.0 243.8 L120.0 243.8 L125.0 244.0 L130.0 244.2 L135.0 244.6 L140.0 245.0 L145.0 245.5 L150.0 246.1 L155.0 246.6 L160.0 247.1 L165.0 247.5 L170.0 247.8 L175.0 248.0 L180.0 248.1 L185.0 248.0 L190.0 247.9 L195.0 247.6 L200.0 247.3 L205.0 246.9 L210.0 246.4 L215.0 246.0 L220.0 245.7 L225.0 245.4 L230.0 245.1 L235.0 245.0 L240.0 245.0 L245.0 245.1 L250.0 245.3 L255.0 245.5 L260.0 245.8 L265.0 246.1 L270.0 246.4 L275.0 246.6 L280.0 246.8 L285.0 246.9 L290.0 246.8 L295.0 246.6 L300.0 246.4 L305.0 246.0 L310.0 245.5 L315.0 245.0 L320.0 244.5 L325.0 243.9 L330.0 243.4 L335.0 243.0 L340.0 242.6 L345.0 242.4 L350.0 242.3 L355.0 242.3 L360.0 242.4 L365.0 242.6 L370.0 242.9 L375.0 243.2 L380.0 243.5 L385.0 243.9 L390.0 244.2 L395.0 244.4 L400.0 244.5 L405.0 244.5 L410.0 244.4 L415.0 244.2 L420.0 243.9 L425.0 243.6" fill="none" stroke="#f4ead8" stroke-width="1.8" stroke-opacity="0.4" stroke-dasharray="35 3" stroke-dashoffset="52"/><path d="M-5.0 255.1 L0.0 254.8 L5.0 254.7 L10.0 254.8 L15.0 254.8 L20.0 255.0 L25.0 255.1 L30.0 255.2 L35.0 255.2 L40.0 255.1 L45.0 254.8 L50.0 254.5 L55.0 254.1 L60.0 253.5 L65.0 253.0 L70.0 252.5 L75.0 252.0 L80.0 251.7 L85.0 251.5 L90.0 251.4 L95.0 251.6 L100.0 251.8 L105.0 252.2 L110.0 252.7 L115.0 253.2 L120.0 253.7 L125.0 254.2 L130.0 254.5 L135.0 254.7 L140.0 254.8 L145.0 254.8 L150.0 254.6 L155.0 254.3 L160.0 254.0 L165.0 253.7 L170.0 253.5 L175.0 253.3 L180.0 253.2 L185.0 253.3 L190.0 253.4 L195.0 253.7 L200.0 254.0 L205.0 254.4 L210.0 254.7 L215.0 255.0 L220.0 255.2 L225.0 255.2 L230.0 255.1 L235.0 254.8 L240.0 254.4 L245.0 253.9 L250.0 253.2 L255.0 252.6 L260.0 251.9 L265.0 251.3 L270.0 250.8 L275.0 250.5 L280.0 250.3 L285.0 250.2 L290.0 250.2 L295.0 250.4 L300.0 250.6 L305.0 250.8 L310.0 250.9 L315.0 251.0 L320.0 251.0 L325.0 250.9 L330.0 250.7 L335.0 250.4 L340.0 250.0 L345.0 249.5 L350.0 249.1 L355.0 248.8 L360.0 248.6 L365.0 248.5 L370.0 248.5 L375.0 248.8 L380.0 249.1 L385.0 249.6 L390.0 250.2 L395.0 250.9 L400.0 251.5 L405.0 252.0 L410.0 252.5 L415.0 252.9 L420.0 253.1 L425.0 253.2" fill="none" stroke="#8f7a5e" stroke-width="3.2" stroke-opacity="0.38" stroke-dasharray="89 4" stroke-dashoffset="55"/><path d="M-5.0 252.7 L0.0 252.4 L5.0 252.3 L10.0 252.4 L15.0 252.4 L20.0 252.6 L25.0 252.7 L30.0 252.8 L35.0 252.8 L40.0 252.7 L45.0 252.4 L50.0 252.1 L55.0 251.7 L60.0 251.1 L65.0 250.6 L70.0 250.1 L75.0 249.6 L80.0 249.3 L85.0 249.1 L90.0 249.0 L95.0 249.2 L100.0 249.4 L105.0 249.8 L110.0 250.3 L115.0 250.8 L120.0 251.3 L125.0 251.8 L130.0 252.1 L135.0 252.3 L140.0 252.4 L145.0 252.4 L150.0 252.2 L155.0 251.9 L160.0 251.6 L165.0 251.3 L170.0 251.1 L175.0 250.9 L180.0 250.8 L185.0 250.9 L190.0 251.0 L195.0 251.3 L200.0 251.6 L205.0 252.0 L210.0 252.3 L215.0 252.6 L220.0 252.8 L225.0 252.8 L230.0 252.7 L235.0 252.4 L240.0 252.0 L245.0 251.5 L250.0 250.8 L255.0 250.2 L260.0 249.5 L265.0 248.9 L270.0 248.4 L275.0 248.1 L280.0 247.9 L285.0 247.8 L290.0 247.8 L295.0 248.0 L300.0 248.2 L305.0 248.4 L310.0 248.5 L315.0 248.6 L320.0 248.6 L325.0 248.5 L330.0 248.3 L335.0 248.0 L340.0 247.6 L345.0 247.1 L350.0 246.7 L355.0 246.4 L360.0 246.2 L365.0 246.1 L370.0 246.1 L375.0 246.4 L380.0 246.7 L385.0 247.2 L390.0 247.8 L395.0 248.5 L400.0 249.1 L405.0 249.6 L410.0 250.1 L415.0 250.5 L420.0 250.7 L425.0 250.8" fill="none" stroke="#f4ead8" stroke-width="1.8" stroke-opacity="0.4" stroke-dasharray="51 4" stroke-dashoffset="42"/><path d="M-5.0 261.2 L0.0 261.2 L5.0 261.1 L10.0 260.9 L15.0 260.7 L20.0 260.4 L25.0 260.2 L30.0 260.0 L35.0 259.9 L40.0 260.0 L45.0 260.2 L50.0 260.4 L55.0 260.8 L60.0 261.2 L65.0 261.7 L70.0 262.1 L75.0 262.4 L80.0 262.7 L85.0 262.7 L90.0 262.6 L95.0 262.4 L100.0 262.1 L105.0 261.6 L110.0 261.1 L115.0 260.6 L120.0 260.1 L125.0 259.7 L130.0 259.4 L135.0 259.2 L140.0 259.1 L145.0 259.2 L150.0 259.4 L155.0 259.6 L160.0 259.8 L165.0 260.0 L170.0 260.1 L175.0 260.1 L180.0 260.0 L185.0 259.8 L190.0 259.5 L195.0 259.1 L200.0 258.7 L205.0 258.3 L210.0 257.9 L215.0 257.6 L220.0 257.5 L225.0 257.5 L230.0 257.7 L235.0 258.0 L240.0 258.4 L245.0 258.9 L250.0 259.5 L255.0 260.1 L260.0 260.6 L265.0 261.0 L270.0 261.3 L275.0 261.5 L280.0 261.6 L285.0 261.5 L290.0 261.4 L295.0 261.2 L300.0 261.0 L305.0 260.9 L310.0 260.8 L315.0 260.9 L320.0 261.0 L325.0 261.3 L330.0 261.7 L335.0 262.2 L340.0 262.6 L345.0 263.1 L350.0 263.5 L355.0 263.8 L360.0 263.9 L365.0 263.9 L370.0 263.8 L375.0 263.5 L380.0 263.1 L385.0 262.7 L390.0 262.2 L395.0 261.7 L400.0 261.3 L405.0 261.0 L410.0 260.9 L415.0 260.8 L420.0 260.9 L425.0 261.1" fill="none" stroke="#8f7a5e" stroke-width="3.2" stroke-opacity="0.38" stroke-dasharray="43 4" stroke-dashoffset="7"/><path d="M-5.0 258.8 L0.0 258.8 L5.0 258.7 L10.0 258.5 L15.0 258.3 L20.0 258.0 L25.0 257.8 L30.0 257.6 L35.0 257.5 L40.0 257.6 L45.0 257.8 L50.0 258.0 L55.0 258.4 L60.0 258.8 L65.0 259.3 L70.0 259.7 L75.0 260.0 L80.0 260.3 L85.0 260.3 L90.0 260.2 L95.0 260.0 L100.0 259.7 L105.0 259.2 L110.0 258.7 L115.0 258.2 L120.0 257.7 L125.0 257.3 L130.0 257.0 L135.0 256.8 L140.0 256.7 L145.0 256.8 L150.0 257.0 L155.0 257.2 L160.0 257.4 L165.0 257.6 L170.0 257.7 L175.0 257.7 L180.0 257.6 L185.0 257.4 L190.0 257.1 L195.0 256.7 L200.0 256.3 L205.0 255.9 L210.0 255.5 L215.0 255.2 L220.0 255.1 L225.0 255.1 L230.0 255.3 L235.0 255.6 L240.0 256.0 L245.0 256.5 L250.0 257.1 L255.0 257.7 L260.0 258.2 L265.0 258.6 L270.0 258.9 L275.0 259.1 L280.0 259.2 L285.0 259.1 L290.0 259.0 L295.0 258.8 L300.0 258.6 L305.0 258.5 L310.0 258.4 L315.0 258.5 L320.0 258.6 L325.0 258.9 L330.0 259.3 L335.0 259.8 L340.0 260.2 L345.0 260.7 L350.0 261.1 L355.0 261.4 L360.0 261.5 L365.0 261.5 L370.0 261.4 L375.0 261.1 L380.0 260.7 L385.0 260.3 L390.0 259.8 L395.0 259.3 L400.0 258.9 L405.0 258.6 L410.0 258.5 L415.0 258.4 L420.0 258.5 L425.0 258.7" fill="none" stroke="#f4ead8" stroke-width="1.8" stroke-opacity="0.4" stroke-dasharray="45 3" stroke-dashoffset="16"/><path d="M-5.0 268.0 L0.0 268.0 L5.0 268.0 L10.0 267.8 L15.0 267.5 L20.0 267.2 L25.0 266.9 L30.0 266.5 L35.0 266.2 L40.0 265.9 L45.0 265.8 L50.0 265.7 L55.0 265.8 L60.0 266.0 L65.0 266.3 L70.0 266.8 L75.0 267.3 L80.0 267.9 L85.0 268.4 L90.0 269.0 L95.0 269.5 L100.0 269.9 L105.0 270.2 L110.0 270.4 L115.0 270.5 L120.0 270.4 L125.0 270.3 L130.0 270.1 L135.0 269.8 L140.0 269.5 L145.0 269.3 L150.0 269.1 L155.0 269.0 L160.0 269.1 L165.0 269.2 L170.0 269.4 L175.0 269.8 L180.0 270.3 L185.0 270.8 L190.0 271.3 L195.0 271.9 L200.0 272.4 L205.0 272.8 L210.0 273.2 L215.0 273.4 L220.0 273.5 L225.0 273.5 L230.0 273.3 L235.0 273.1 L240.0 272.8 L245.0 272.4 L250.0 272.0 L255.0 271.6 L260.0 271.3 L265.0 271.1 L270.0 271.0 L275.0 271.0 L280.0 271.1 L285.0 271.3 L290.0 271.6 L295.0 272.0 L300.0 272.4 L305.0 272.8 L310.0 273.2 L315.0 273.5 L320.0 273.7 L325.0 273.9 L330.0 273.8 L335.0 273.7 L340.0 273.4 L345.0 273.1 L350.0 272.7 L355.0 272.2 L360.0 271.8 L365.0 271.4 L370.0 271.0 L375.0 270.8 L380.0 270.6 L385.0 270.6 L390.0 270.7 L395.0 270.9 L400.0 271.3 L405.0 271.7 L410.0 272.1 L415.0 272.5 L420.0 272.9 L425.0 273.3" fill="none" stroke="#8f7a5e" stroke-width="3.2" stroke-opacity="0.38" stroke-dasharray="88 5" stroke-dashoffset="44"/><path d="M-5.0 265.6 L0.0 265.6 L5.0 265.6 L10.0 265.4 L15.0 265.1 L20.0 264.8 L25.0 264.5 L30.0 264.1 L35.0 263.8 L40.0 263.5 L45.0 263.4 L50.0 263.3 L55.0 263.4 L60.0 263.6 L65.0 263.9 L70.0 264.4 L75.0 264.9 L80.0 265.5 L85.0 266.0 L90.0 266.6 L95.0 267.1 L100.0 267.5 L105.0 267.8 L110.0 268.0 L115.0 268.1 L120.0 268.0 L125.0 267.9 L130.0 267.7 L135.0 267.4 L140.0 267.1 L145.0 266.9 L150.0 266.7 L155.0 266.6 L160.0 266.7 L165.0 266.8 L170.0 267.0 L175.0 267.4 L180.0 267.9 L185.0 268.4 L190.0 268.9 L195.0 269.5 L200.0 270.0 L205.0 270.4 L210.0 270.8 L215.0 271.0 L220.0 271.1 L225.0 271.1 L230.0 270.9 L235.0 270.7 L240.0 270.4 L245.0 270.0 L250.0 269.6 L255.0 269.2 L260.0 268.9 L265.0 268.7 L270.0 268.6 L275.0 268.6 L280.0 268.7 L285.0 268.9 L290.0 269.2 L295.0 269.6 L300.0 270.0 L305.0 270.4 L310.0 270.8 L315.0 271.1 L320.0 271.3 L325.0 271.5 L330.0 271.4 L335.0 271.3 L340.0 271.0 L345.0 270.7 L350.0 270.3 L355.0 269.8 L360.0 269.4 L365.0 269.0 L370.0 268.6 L375.0 268.4 L380.0 268.2 L385.0 268.2 L390.0 268.3 L395.0 268.5 L400.0 268.9 L405.0 269.3 L410.0 269.7 L415.0 270.1 L420.0 270.5 L425.0 270.9" fill="none" stroke="#f4ead8" stroke-width="1.8" stroke-opacity="0.4" stroke-dasharray="67 5" stroke-dashoffset="51"/><path d="M-5.0 280.1 L0.0 280.4 L5.0 280.8 L10.0 281.2 L15.0 281.7 L20.0 282.1 L25.0 282.4 L30.0 282.7 L35.0 282.9 L40.0 282.9 L45.0 282.9 L50.0 282.8 L55.0 282.5 L60.0 282.2 L65.0 281.9 L70.0 281.6 L75.0 281.4 L80.0 281.2 L85.0 281.1 L90.0 281.0 L95.0 281.1 L100.0 281.2 L105.0 281.4 L110.0 281.6 L115.0 281.8 L120.0 282.0 L125.0 282.1 L130.0 282.1 L135.0 282.1 L140.0 281.9 L145.0 281.6 L150.0 281.2 L155.0 280.7 L160.0 280.2 L165.0 279.7 L170.0 279.1 L175.0 278.7 L180.0 278.3 L185.0 278.0 L190.0 277.8 L195.0 277.7 L200.0 277.7 L205.0 277.8 L210.0 277.9 L215.0 278.1 L220.0 278.2 L225.0 278.3 L230.0 278.4 L235.0 278.4 L240.0 278.3 L245.0 278.1 L250.0 277.8 L255.0 277.4 L260.0 277.1 L265.0 276.7 L270.0 276.4 L275.0 276.1 L280.0 275.9 L285.0 275.8 L290.0 275.8 L295.0 276.0 L300.0 276.2 L305.0 276.5 L310.0 276.9 L315.0 277.3 L320.0 277.7 L325.0 278.1 L330.0 278.4 L335.0 278.6 L340.0 278.7 L345.0 278.7 L350.0 278.6 L355.0 278.5 L360.0 278.2 L365.0 278.0 L370.0 277.8 L375.0 277.6 L380.0 277.5 L385.0 277.4 L390.0 277.5 L395.0 277.6 L400.0 277.8 L405.0 278.1 L410.0 278.4 L415.0 278.7 L420.0 279.0 L425.0 279.3" fill="none" stroke="#8f7a5e" stroke-width="3.2" stroke-opacity="0.38" stroke-dasharray="48 3" stroke-dashoffset="57"/><path d="M-5.0 277.7 L0.0 278.0 L5.0 278.4 L10.0 278.8 L15.0 279.3 L20.0 279.7 L25.0 280.0 L30.0 280.3 L35.0 280.5 L40.0 280.5 L45.0 280.5 L50.0 280.4 L55.0 280.1 L60.0 279.8 L65.0 279.5 L70.0 279.2 L75.0 279.0 L80.0 278.8 L85.0 278.7 L90.0 278.6 L95.0 278.7 L100.0 278.8 L105.0 279.0 L110.0 279.2 L115.0 279.4 L120.0 279.6 L125.0 279.7 L130.0 279.7 L135.0 279.7 L140.0 279.5 L145.0 279.2 L150.0 278.8 L155.0 278.3 L160.0 277.8 L165.0 277.3 L170.0 276.7 L175.0 276.3 L180.0 275.9 L185.0 275.6 L190.0 275.4 L195.0 275.3 L200.0 275.3 L205.0 275.4 L210.0 275.5 L215.0 275.7 L220.0 275.8 L225.0 275.9 L230.0 276.0 L235.0 276.0 L240.0 275.9 L245.0 275.7 L250.0 275.4 L255.0 275.0 L260.0 274.7 L265.0 274.3 L270.0 274.0 L275.0 273.7 L280.0 273.5 L285.0 273.4 L290.0 273.4 L295.0 273.6 L300.0 273.8 L305.0 274.1 L310.0 274.5 L315.0 274.9 L320.0 275.3 L325.0 275.7 L330.0 276.0 L335.0 276.2 L340.0 276.3 L345.0 276.3 L350.0 276.2 L355.0 276.1 L360.0 275.8 L365.0 275.6 L370.0 275.4 L375.0 275.2 L380.0 275.1 L385.0 275.0 L390.0 275.1 L395.0 275.2 L400.0 275.4 L405.0 275.7 L410.0 276.0 L415.0 276.3 L420.0 276.6 L425.0 276.9" fill="none" stroke="#f4ead8" stroke-width="1.8" stroke-opacity="0.4" stroke-dasharray="38 6" stroke-dashoffset="32"/></g></defs><g clip-path="url(#fL)" opacity="0.38"><use href="#rip2" transform="matrix(0.5259,0.1497,0.2863,1.1856,25.30,193.00)"/></g><g clip-path="url(#fR)" opacity="0.45"><use href="#rip2" transform="matrix(0.5331,-0.1662,0.0400,1.5908,248.00,256.40)"/></g><g clip-path="url(#fT)" opacity="0.12"><use href="#rip2" transform="matrix(0.5329,-0.0671,0.8011,0.2281,25.30,193.00)"/></g><line x1="177.6" y1="533.0" x2="255.0" y2="477.0" stroke="#6a6050" stroke-width="0.9" stroke-opacity="0.5"/><line x1="333.0" y1="532.3" x2="255.0" y2="477.0" stroke="#6a6050" stroke-width="0.9" stroke-opacity="0.45"/><line x1="374.0" y1="383.8" x2="430.3" y2="409.0" stroke="#6a6a6a" stroke-width="0.9" stroke-opacity="0.6"/><line x1="78.0" y1="413.3" x2="132.0" y2="388.0" stroke="#b8622a" stroke-width="0.9" stroke-opacity="0.9"/><line x1="25.3" y1="193.0" x2="248.0" y2="256.4" stroke="#d0721e" stroke-width="0.9" stroke-opacity="0.8"/><line x1="248.0" y1="256.4" x2="473.8" y2="186.0" stroke="#d0721e" stroke-width="0.9" stroke-opacity="0.8"/><line x1="25.3" y1="193.0" x2="251.0" y2="164.6" stroke="#d0721e" stroke-width="0.9" stroke-opacity="0.8"/><line x1="251.0" y1="164.6" x2="473.8" y2="186.0" stroke="#d0721e" stroke-width="0.9" stroke-opacity="0.8"/><line x1="248.0" y1="256.4" x2="256.9" y2="610.2" stroke="#d0721e" stroke-width="0.9" stroke-opacity="0.8"/><line x1="25.3" y1="193.0" x2="85.0" y2="440.2" stroke="#d0721e" stroke-width="0.9" stroke-opacity="0.8"/><line x1="85.0" y1="440.2" x2="256.9" y2="610.2" stroke="#d0721e" stroke-width="0.9" stroke-opacity="0.8"/><line x1="256.9" y1="610.2" x2="428.4" y2="428.9" stroke="#d0721e" stroke-width="0.9" stroke-opacity="0.8"/><line x1="473.8" y1="186.0" x2="428.4" y2="428.9" stroke="#d0721e" stroke-width="0.9" stroke-opacity="0.8"/><g transform="translate(253,331)"><circle r="4.5" fill="none" stroke="#e8e8e8" stroke-width="0.9" stroke-dasharray="1.8 1.5"/><circle r="4.5" fill="none" stroke="#c04040" stroke-width="0.9" stroke-dasharray="1.8 1.5" stroke-dashoffset="1.8"/><path d="M0 -9 V-5.5 M0 5.5 V9 M-9 0 H-5.5 M5.5 0 H9" stroke="#999" stroke-width="0.8"/></g><line x1="488" y1="70.3" x2="488" y2="48.5" stroke="#5583d6" stroke-width="1.4"/><line x1="488" y1="70.3" x2="503.5999999999999" y2="73.7" stroke="#7bc21e" stroke-width="1.4"/><line x1="488" y1="70.3" x2="473" y2="74.7" stroke="#d35a10" stroke-width="1.4"/><circle cx="488" cy="87" r="4" fill="#2f4f86"/><circle cx="473" cy="60.599999999999994" r="4" fill="#4a7a3a"/><circle cx="503.5999999999999" cy="60.2" r="4" fill="#8a4a2a"/><circle cx="488" cy="48.5" r="4.8" fill="#5583d6"/><circle cx="503.5999999999999" cy="73.7" r="4.8" fill="#7bc21e"/><circle cx="473" cy="74.7" r="4.8" fill="#d35a10"/></g></svg>
<div style="left:1058.5px;top:33px;width:220.5px;height:16.5px;background:#303030;border-radius:4px;border-bottom-left-radius:0;border-bottom-right-radius:0"></div>
<div style="left:1065px;top:35.8px;width:19.3px;height:10.8px;background:#242424;border-radius:3px;"></div>
<svg style="position:absolute;left:1066px;top:36px;overflow:visible;" width="13" height="11" viewBox="0 0 13 11"><rect x="1.5" y="1" width="2.5" height="2" fill="#eee"/><path d="M2.5 3 V9 H5 M2.5 6 H5" fill="none" stroke="#ccc" stroke-width="0.7"/><rect x="5.5" y="5" width="4.5" height="2" fill="#eee"/><rect x="5.5" y="8" width="4.5" height="2" fill="#eee"/></svg>
<svg style="position:absolute;left:1078px;top:39px;overflow:visible;" width="6" height="4" viewBox="0 0 6 4"><path d="M0.5 0.8 L3 3.2 L5.5 0.8" fill="none" stroke="#cfcfcf" stroke-width="1"/></svg>
<div style="left:1090px;top:35.8px;width:18.6px;height:10.8px;background:#242424;border-radius:3px;"></div>
<svg style="position:absolute;left:1091px;top:36px;overflow:visible;" width="12" height="11" viewBox="0 0 12 11"><rect x="2.5" y="1" width="7.5" height="7.5" rx="1" fill="none" stroke="#ccc" stroke-width="0.8"/><rect x="1" y="2.5" width="7.5" height="7.5" rx="1" fill="#3a3a3a" stroke="#ccc" stroke-width="0.8"/><path d="M2.5 9 L4.8 5 L7 9 Z" fill="#eee"/></svg>
<svg style="position:absolute;left:1102px;top:39px;overflow:visible;" width="6" height="4" viewBox="0 0 6 4"><path d="M0.5 0.8 L3 3.2 L5.5 0.8" fill="none" stroke="#cfcfcf" stroke-width="1"/></svg>
<div style="left:1126px;top:35.8px;width:72px;height:10.8px;background:#1d1d1d;border-radius:3px;"></div>
<svg style="position:absolute;left:1127px;top:36px;overflow:visible;" width="12" height="11" viewBox="0 0 12 11"><circle cx="7" cy="4.5" r="3" fill="none" stroke="#ccc" stroke-width="0.9"/><path d="M5 6.5 L1.5 10" stroke="#ccc" stroke-width="1"/></svg>
<div style="left:1237.8px;top:35.8px;width:18.8px;height:10.8px;background:#242424;border-radius:3px;"></div>
<svg style="position:absolute;left:1239px;top:36px;overflow:visible;" width="12" height="11" viewBox="0 0 12 11"><path d="M1 1.5 H10 L6.5 5.5 V10 L4.5 8.5 V5.5 Z" fill="none" stroke="#ccc" stroke-width="0.9"/></svg>
<svg style="position:absolute;left:1250px;top:39px;overflow:visible;" width="6" height="4" viewBox="0 0 6 4"><path d="M0.5 0.8 L3 3.2 L5.5 0.8" fill="none" stroke="#cfcfcf" stroke-width="1"/></svg>
<div style="left:1262px;top:35.8px;width:11.7px;height:10.8px;background:#505050;border-radius:3px;"></div>
<svg style="position:absolute;left:1262px;top:36px;overflow:visible;" width="12" height="11" viewBox="0 0 12 11"><rect x="1.5" y="3" width="7" height="7" fill="none" stroke="#ccc" stroke-width="0.8"/><circle cx="8.5" cy="3" r="2.3" fill="#ddd"/></svg>
<div style="left:1058.5px;top:51.4px;width:220.5px;height:13.3px;background:#252525;border-radius:0px;"></div>
<div style="left:1058.5px;top:64.7px;width:220.5px;height:13.3px;background:#2b2b2b;border-radius:0px;"></div>
<div style="left:1058.5px;top:78px;width:220.5px;height:13.3px;background:#252525;border-radius:0px;"></div>
<div style="left:1058.5px;top:91.3px;width:220.5px;height:13.3px;background:#2b2b2b;border-radius:0px;"></div>
<div style="left:1058.5px;top:104.6px;width:220.5px;height:13.3px;background:#252525;border-radius:0px;"></div>
<div style="left:1058.5px;top:117.9px;width:220.5px;height:13.3px;background:#2b2b2b;border-radius:0px;"></div>
<div style="left:1058.5px;top:131.2px;width:220.5px;height:13.3px;background:#252525;border-radius:4px;border-top-left-radius:0;border-top-right-radius:0"></div>
<div style="left:1058.5px;top:91.0px;width:220.5px;height:13.1px;background:#334d80;border-radius:0px;"></div>
<svg style="position:absolute;left:1074px;top:52.5px;overflow:visible;" width="11" height="11" viewBox="0 0 11 11"><rect x="1" y="1" width="9" height="2.5" fill="none" stroke="#ccc" stroke-width="0.8"/><rect x="1.5" y="3.5" width="8" height="6.5" fill="none" stroke="#ccc" stroke-width="0.8"/><rect x="4.5" y="5.5" width="2" height="1.2" fill="#ccc"/></svg>
<div class="t" style="left:1087.8px;top:52.5px;height:12px;line-height:12px;font-size:7.6px;color:#d6d6d6;text-align:left;">Scene Collection</div>
<svg style="position:absolute;left:1075px;top:67px;overflow:visible;" width="6" height="6" viewBox="0 0 6 6"><path d="M0.5 1.5 H5.5 L3 5 Z" fill="#bbb"/></svg>
<div style="left:1088.5px;top:66.5px;width:7.5px;height:8px;background:#e6e6e6;border-radius:1.5px;"></div>
<svg style="position:absolute;left:1088.5px;top:66.5px;overflow:visible;" width="8" height="8" viewBox="0 0 8 8"><path d="M1.5 4 L3.3 6 L6.5 1.8" fill="none" stroke="#222" stroke-width="1.2"/></svg>
<div style="left:1099.5px;top:65.3px;width:12px;height:12px;background:#3f3f3f;border-radius:3px;"></div>
<svg style="position:absolute;left:1100px;top:66px;overflow:visible;" width="11" height="11" viewBox="0 0 11 11"><rect x="1.5" y="1" width="8" height="2.5" fill="none" stroke="#ccc" stroke-width="0.8"/><rect x="2" y="3.5" width="7" height="6" fill="none" stroke="#ccc" stroke-width="0.8"/><rect x="4.5" y="5.5" width="2" height="1.2" fill="#ccc"/></svg>
<div class="t" style="left:1114.7px;top:65.8px;height:12px;line-height:12px;font-size:7.6px;color:#d6d6d6;text-align:left;">Collection</div>
<svg style="position:absolute;left:1088.5px;top:77px;overflow:visible;" width="14" height="40" viewBox="0 0 14 40"><path d="M3 0 V34 M3 7.5 H12 M3 20.8 H10 M3 34 H12" fill="none" stroke="#777" stroke-width="0.8"/><path d="M3 5 L6 7.5 L3 10 Z M3 18.3 L6 20.8 L3 23.3 Z M3 31.5 L6 34 L3 36.5 Z" fill="#bbb"/></svg>
<svg style="position:absolute;left:1100px;top:79px;overflow:visible;" width="12" height="11" viewBox="0 0 12 11"><circle cx="4" cy="3" r="2.3" fill="#e8892c"/><circle cx="8" cy="3" r="2" fill="#e8892c"/><rect x="2" y="5" width="7" height="4.5" fill="#e8892c"/><path d="M9 6 L11 5 V9.5 L9 8.5 Z" fill="#e8892c"/></svg>
<div class="t" style="left:1114.7px;top:79.1px;height:12px;line-height:12px;font-size:7.6px;color:#d6d6d6;text-align:left;">Camera</div>
<div style="left:1154px;top:78.8px;width:13px;height:11.5px;background:#4a4a4a;border-radius:3px;"></div>
<svg style="position:absolute;left:1155px;top:79.5px;overflow:visible;" width="11" height="10" viewBox="0 0 11 10"><circle cx="4" cy="3" r="2.2" fill="none" stroke="#5aaa3a" stroke-width="0.9"/><circle cx="7.5" cy="3" r="2" fill="none" stroke="#5aaa3a" stroke-width="0.9"/><rect x="2" y="5.2" width="6.5" height="4" fill="none" stroke="#5aaa3a" stroke-width="0.9"/></svg>
<div style="left:1099.5px;top:91.6px;width:12.5px;height:11.8px;background:#5680c2;border-radius:2px;"></div>
<svg style="position:absolute;left:1100px;top:92px;overflow:visible;" width="12" height="11" viewBox="0 0 12 11"><path d="M1.5 1.5 H10.5 L6 10 Z" fill="none" stroke="#e8892c" stroke-width="1.5"/></svg>
<div class="t" style="left:1114.7px;top:92.4px;height:12px;line-height:12px;font-size:7.6px;color:#e8a050;text-align:left;">Cube</div>
<div style="left:1145.6px;top:91.6px;width:12.4px;height:11.8px;background:#3d5c94;border-radius:2px;border:0.8px dashed #5a8ad0"></div>
<svg style="position:absolute;left:1146px;top:92px;overflow:visible;" width="12" height="11" viewBox="0 0 12 11"><path d="M1.5 1.5 H10.5 L6 10 Z M1.5 1.5 L6 6 L10.5 1.5 M6 6 V10" fill="none" stroke="#5fb0a0" stroke-width="0.8"/></svg>
<svg style="position:absolute;left:1100px;top:105.5px;overflow:visible;" width="12" height="12" viewBox="0 0 12 12"><circle cx="6" cy="5" r="3.8" fill="#e8892c"/><rect x="4" y="8" width="4" height="3" fill="#e8892c"/><path d="M4.5 4 L6 7 L7.5 4" stroke="#333" stroke-width="0.7" fill="none"/></svg>
<div class="t" style="left:1114.7px;top:105.7px;height:12px;line-height:12px;font-size:7.6px;color:#d6d6d6;text-align:left;">Light</div>
<svg style="position:absolute;left:1146px;top:105.5px;overflow:visible;" width="12" height="12" viewBox="0 0 12 12"><circle cx="6" cy="5.5" r="4" fill="none" stroke="#5aaa3a" stroke-width="0.9"/><rect x="5" y="4.5" width="2" height="2.5" fill="#5aaa3a"/></svg>
<svg style="position:absolute;left:1262px;top:67.3px;overflow:visible;" width="13" height="8" viewBox="0 0 13 8"><path d="M1 4 Q6.5 -1.5 12 4 Q6.5 9.5 1 4 Z" fill="none" stroke="#e6e6e6" stroke-width="0.9"/><circle cx="6.5" cy="4" r="1.9" fill="#e6e6e6"/></svg>
<svg style="position:absolute;left:1262px;top:80.6px;overflow:visible;" width="13" height="8" viewBox="0 0 13 8"><path d="M1 4 Q6.5 -1.5 12 4 Q6.5 9.5 1 4 Z" fill="none" stroke="#e6e6e6" stroke-width="0.9"/><circle cx="6.5" cy="4" r="1.9" fill="#e6e6e6"/></svg>
<svg style="position:absolute;left:1262px;top:93.7px;overflow:visible;" width="13" height="8" viewBox="0 0 13 8"><path d="M1 4 Q6.5 -1.5 12 4 Q6.5 9.5 1 4 Z" fill="none" stroke="#e6e6e6" stroke-width="0.9"/><circle cx="6.5" cy="4" r="1.9" fill="#e6e6e6"/></svg>
<svg style="position:absolute;left:1262px;top:107px;overflow:visible;" width="13" height="8" viewBox="0 0 13 8"><path d="M1 4 Q6.5 -1.5 12 4 Q6.5 9.5 1 4 Z" fill="none" stroke="#e6e6e6" stroke-width="0.9"/><circle cx="6.5" cy="4" r="1.9" fill="#e6e6e6"/></svg>
<div style="left:1058.5px;top:148.5px;width:220.5px;height:16.5px;background:#3d3d3d;border-radius:4px;border-bottom-left-radius:0;border-bottom-right-radius:0"></div>
<div style="left:1065px;top:151.5px;width:19.4px;height:11px;background:#242424;border-radius:3px;"></div>
<svg style="position:absolute;left:1066px;top:152px;overflow:visible;" width="12" height="11" viewBox="0 0 12 11"><rect x="1" y="1.2" width="9" height="3.6" rx="1.8" fill="#eee"/><rect x="5" y="1.9" width="4.5" height="2.2" rx="1.1" fill="#333"/><rect x="1" y="6.2" width="9" height="3.6" rx="1.8" fill="#eee"/><rect x="5.5" y="6.9" width="4" height="2.2" rx="1.1" fill="#333"/></svg>
<svg style="position:absolute;left:1078px;top:155px;overflow:visible;" width="6" height="4" viewBox="0 0 6 4"><path d="M0.5 0.8 L3 3.2 L5.5 0.8" fill="none" stroke="#cfcfcf" stroke-width="1"/></svg>
<svg style="position:absolute;left:1094px;top:151px;overflow:visible;" width="12" height="12" viewBox="0 0 12 12"><rect x="3" y="3" width="6" height="6" fill="#e6e6e6"/><path d="M1 3 V1 H3 M9 1 H11 V3 M11 9 V11 H9 M3 11 H1 V9" fill="none" stroke="#ccc" stroke-width="0.8"/><rect x="4.5" y="4.5" width="3" height="3" fill="#666"/></svg>
<div class="t" style="left:1110px;top:151.5px;height:12px;line-height:12px;font-size:7.6px;color:#d6d6d6;text-align:left;">Cube</div>
<svg style="position:absolute;left:1147px;top:151px;overflow:visible;" width="12" height="12" viewBox="0 0 12 12"><circle cx="6" cy="6" r="4.6" fill="#eee"/><path d="M6 1.4 A4.6 4.6 0 0 0 1.4 6 H6 Z M6 6 L9.5 9 A4.6 4.6 0 0 1 6 10.6 Z" fill="#2a2a2a"/></svg>
<div class="t" style="left:1163px;top:151.5px;height:12px;line-height:12px;font-size:7.6px;color:#d6d6d6;text-align:left;">Material</div>
<svg style="position:absolute;left:1262px;top:150px;overflow:visible;" width="12" height="12" viewBox="0 0 12 12"><path d="M3 10 L5.5 7.5 M4 5 L8 9 M5.5 3.5 L9.5 7.5 M6 4 L8 2 L10.5 4.5 L8.5 6.5" fill="none" stroke="#999" stroke-width="0.9"/></svg>
<div style="left:1058.5px;top:165px;width:18.5px;height:514px;background:#232323;border-radius:0px;border-bottom-left-radius:4px"></div>
<div style="left:1059.7px;top:171.2px;width:17px;height:17px;background:#2a2a2a;border-radius:3px;"></div>
<svg style="position:absolute;left:1061.7px;top:173.2px;overflow:visible;" width="13" height="13" viewBox="0 0 13 13"><path d="M4 1.5 V6.5" stroke="#ddd" stroke-width="1"/><rect x="2.8" y="6.5" width="2.6" height="5" rx="0.8" fill="#eee"/><path d="M9.5 11.5 V5.5 M7.5 1.5 V4 Q9.5 6 11.5 4 V1.5" fill="none" stroke="#eee" stroke-width="1.5"/></svg>
<div style="left:1059.7px;top:194.9px;width:17px;height:17px;background:#2a2a2a;border-radius:3px;"></div>
<svg style="position:absolute;left:1061.7px;top:196.9px;overflow:visible;" width="13" height="13" viewBox="0 0 13 13"><rect x="2" y="4" width="9" height="7" fill="none" stroke="#ddd" stroke-width="1"/><rect x="5" y="2" width="3" height="2" fill="#ddd"/><rect x="8" y="6" width="3" height="3" fill="#ddd"/></svg>
<div style="left:1059.7px;top:213.1px;width:17px;height:17px;background:#2a2a2a;border-radius:3px;"></div>
<svg style="position:absolute;left:1061.7px;top:215.1px;overflow:visible;" width="13" height="13" viewBox="0 0 13 13"><rect x="2" y="2" width="9" height="3" fill="#ddd"/><rect x="3" y="5" width="7" height="6" fill="none" stroke="#ddd" stroke-width="1"/></svg>
<div style="left:1059.7px;top:231.3px;width:17px;height:17px;background:#2a2a2a;border-radius:3px;"></div>
<svg style="position:absolute;left:1061.7px;top:233.3px;overflow:visible;" width="13" height="13" viewBox="0 0 13 13"><rect x="3" y="2" width="8" height="8" rx="1" fill="none" stroke="#ccc" stroke-width="0.9"/><rect x="1.5" y="3.5" width="8" height="8" rx="1" fill="#2a2a2a" stroke="#ccc" stroke-width="0.9"/><path d="M3 10.5 L5.5 6 L8 10.5 Z" fill="#eee"/></svg>
<div style="left:1059.7px;top:250.5px;width:17px;height:17px;background:#2a2a2a;border-radius:3px;"></div>
<svg style="position:absolute;left:1061.7px;top:252.5px;overflow:visible;" width="13" height="13" viewBox="0 0 13 13"><path d="M2.5 10 L4.5 4 L6.5 10 Z" fill="#eee"/><circle cx="8" cy="8.5" r="2.5" fill="none" stroke="#ddd" stroke-width="1"/><circle cx="9" cy="3" r="1.3" fill="#ddd"/></svg>
<div style="left:1059.7px;top:268.5px;width:17px;height:17px;background:#2a2a2a;border-radius:3px;"></div>
<svg style="position:absolute;left:1061.7px;top:270.5px;overflow:visible;" width="13" height="13" viewBox="0 0 13 13"><circle cx="6.5" cy="6.5" r="5" fill="#d07028"/><path d="M3 4 Q5 6 4 9 M7 2 Q9 5 8 7 Q10 9 9.5 11" fill="none" stroke="#333" stroke-width="1"/></svg>
<div style="left:1059.7px;top:293.3px;width:17px;height:17px;background:#2a2a2a;border-radius:3px;"></div>
<svg style="position:absolute;left:1061.7px;top:295.3px;overflow:visible;" width="13" height="13" viewBox="0 0 13 13"><rect x="3.5" y="3.5" width="6" height="6" fill="#e8892c"/><path d="M1.5 3 V1.5 H3 M10 1.5 H11.5 V3 M11.5 10 V11.5 H10 M3 11.5 H1.5 V10" fill="none" stroke="#ccc" stroke-width="0.8"/></svg>
<div style="left:1059.7px;top:312.1px;width:17px;height:17px;background:#2a2a2a;border-radius:3px;"></div>
<svg style="position:absolute;left:1061.7px;top:314.1px;overflow:visible;" width="13" height="13" viewBox="0 0 13 13"><path d="M2.2 10.8 L7 6" stroke="#5a8ad0" stroke-width="2" stroke-linecap="round"/><path d="M6.3 6.5 A3.2 3.2 0 0 1 9 1.8 L8.2 4.2 L9.6 5.1 L11.4 3.6 A3.2 3.2 0 0 1 6.3 6.5 Z" fill="#5a8ad0"/></svg>
<div style="left:1059.7px;top:330.5px;width:17px;height:17px;background:#2a2a2a;border-radius:3px;"></div>
<svg style="position:absolute;left:1061.7px;top:332.5px;overflow:visible;" width="13" height="13" viewBox="0 0 13 13"><path d="M2.5 2.5 L10.5 10.5 M2.5 2.5 H7 M2.5 2.5 V7 M2.5 11 V6" fill="none" stroke="#5a8ad0" stroke-width="1"/><circle cx="2.5" cy="2.5" r="1.3" fill="#5a8ad0"/><circle cx="10.5" cy="10.5" r="1.3" fill="#5a8ad0"/></svg>
<div style="left:1059.7px;top:349.8px;width:17px;height:17px;background:#2a2a2a;border-radius:3px;"></div>
<svg style="position:absolute;left:1061.7px;top:351.8px;overflow:visible;" width="13" height="13" viewBox="0 0 13 13"><circle cx="6.5" cy="6.5" r="4.5" fill="none" stroke="#5a8ad0" stroke-width="1" stroke-dasharray="3 1.5"/><circle cx="6.5" cy="6.5" r="2" fill="#ddd"/></svg>
<div style="left:1059.7px;top:368.6px;width:17px;height:17px;background:#2a2a2a;border-radius:3px;"></div>
<svg style="position:absolute;left:1061.7px;top:370.6px;overflow:visible;" width="13" height="13" viewBox="0 0 13 13"><circle cx="5" cy="8" r="3.5" fill="none" stroke="#5a8ad0" stroke-width="1.2"/><circle cx="8.5" cy="4.5" r="3" fill="#5a8ad0"/></svg>
<div style="left:1059.7px;top:386.5px;width:17px;height:17px;background:#2a2a2a;border-radius:3px;"></div>
<svg style="position:absolute;left:1061.7px;top:388.5px;overflow:visible;" width="13" height="13" viewBox="0 0 13 13"><path d="M2 2.5 H11 L6.5 10.5 Z M2 2.5 L6.5 6.5 L11 2.5" fill="none" stroke="#5fb04a" stroke-width="1.1"/><circle cx="2" cy="2.5" r="1.2" fill="#5a8ad0"/><circle cx="11" cy="2.5" r="1.2" fill="#5a8ad0"/><circle cx="6.5" cy="10.5" r="1.2" fill="#5a8ad0"/></svg>
<div style="left:1059.7px;top:405.5px;width:17.3px;height:17px;background:#3d3d3d;border-radius:3px;border-top-right-radius:0;border-bottom-right-radius:0"></div>
<svg style="position:absolute;left:1061.7px;top:407.3px;overflow:visible;" width="13" height="13" viewBox="0 0 13 13"><circle cx="6.5" cy="6.5" r="5" fill="#e8892c"/><path d="M6.5 1.5 A5 5 0 0 0 1.5 6.5 H6.5 Z M6.5 6.5 L10 10 A5 5 0 0 1 6.5 11.5 Z" fill="#2a2a2a"/></svg>
<div style="left:1077px;top:165px;width:201.5px;height:98px;background:#3d3d3d;border-radius:0px;"></div>
<div style="left:1083px;top:171.4px;width:172px;height:51.3px;background:#282828;border-radius:3px;"></div>
<div style="left:1086.8px;top:174.7px;width:165.2px;height:12px;background:#5b5b5b;border-radius:3px;"></div>
<svg style="position:absolute;left:1088px;top:175px;overflow:visible;" width="12" height="12" viewBox="0 0 12 12"><circle cx="6" cy="6" r="4.5" fill="#b8a890"/><path d="M6 1.5 A4.5 4.5 0 0 0 6 10.5 A3 4.5 0 0 1 6 1.5" fill="#e0d0b8"/></svg>
<div class="t" style="left:1103px;top:175.2px;height:12px;line-height:12px;font-size:7.6px;color:#ffffff;text-align:left;">Material</div>
<svg style="position:absolute;left:1089px;top:211px;overflow:visible;" width="6" height="6" viewBox="0 0 6 6"><path d="M1 0.8 L5 3 L1 5.2 Z" fill="#aaa"/></svg>
<svg style="position:absolute;left:1170px;top:212px;overflow:visible;" width="10" height="5" viewBox="0 0 10 5"><path d="M1 1 H9 M1 3.5 H9" stroke="#888" stroke-width="0.8" stroke-dasharray="1 1"/></svg>
<div style="left:1262px;top:171.3px;width:11.7px;height:12px;background:#4e4e4e;border-radius:3px;border-bottom-left-radius:0;border-bottom-right-radius:0"></div>
<div style="left:1262px;top:184.5px;width:11.7px;height:12px;background:#4e4e4e;border-radius:3px;border-top-left-radius:0;border-top-right-radius:0"></div>
<svg style="position:absolute;left:1262px;top:171.3px;overflow:visible;" width="12" height="26" viewBox="0 0 12 26"><path d="M6 3 V9 M3 6 H9" stroke="#ccc" stroke-width="0.9"/><path d="M3 19.5 H9" stroke="#ccc" stroke-width="0.9"/></svg>
<div style="left:1262px;top:202px;width:11.7px;height:11.7px;background:#282828;border-radius:3px;"></div>
<svg style="position:absolute;left:1265px;top:206px;overflow:visible;" width="6" height="4" viewBox="0 0 6 4"><path d="M0.5 0.8 L3 3.2 L5.5 0.8" fill="none" stroke="#cfcfcf" stroke-width="1"/></svg>
<div style="left:1083px;top:228px;width:20px;height:11.7px;background:#282828;border-radius:3px;border-top-right-radius:0;border-bottom-right-radius:0"></div>
<svg style="position:absolute;left:1084px;top:228.5px;overflow:visible;" width="12" height="11" viewBox="0 0 12 11"><circle cx="5.5" cy="5.5" r="4.3" fill="#eee"/><path d="M5.5 1.2 A4.3 4.3 0 0 0 1.2 5.5 H5.5 Z M5.5 5.5 L8.5 8.5 A4.3 4.3 0 0 1 5.5 9.8 Z" fill="#2a2a2a"/></svg>
<svg style="position:absolute;left:1096px;top:232px;overflow:visible;" width="6" height="4" viewBox="0 0 6 4"><path d="M0.5 0.8 L3 3.2 L5.5 0.8" fill="none" stroke="#cfcfcf" stroke-width="1"/></svg>
<div style="left:1103px;top:228px;width:87px;height:11.7px;background:#1d1d1d;border-radius:0px;"></div>
<div class="t" style="left:1108px;top:228.5px;height:12px;line-height:12px;font-size:7.6px;color:#dedede;text-align:left;">Material</div>
<div style="left:1190px;top:228px;width:57px;height:11.7px;background:#505050;border-radius:3px;border-top-left-radius:0;border-bottom-left-radius:0"></div>
<div class="t" style="left:1190px;top:228.5px;width:17px;height:12px;line-height:12px;font-size:7.6px;color:#999;text-align:center;">2</div>
<svg style="position:absolute;left:1207px;top:228px;overflow:visible;" width="40" height="12" viewBox="0 0 40 12"><path d="M6.5 2 L10 3.2 V6 Q10 9 6.5 10.5 Q3 9 3 6 V3.2 Z" fill="none" stroke="#999" stroke-width="0.9"/><path d="M18 3 H22 L23.5 4.5 V9 H18 Z" fill="none" stroke="#ccc" stroke-width="0.9"/><path d="M16.5 4.5 V10.5 H21" fill="none" stroke="#ccc" stroke-width="0.9"/><path d="M30 3.5 L35 8.5 M35 3.5 L30 8.5" stroke="#ccc" stroke-width="0.9"/></svg>
<div style="left:1254px;top:228px;width:20px;height:11.7px;background:#282828;border-radius:3px;"></div>
<svg style="position:absolute;left:1255px;top:228.5px;overflow:visible;" width="12" height="11" viewBox="0 0 12 11"><path d="M1.5 1.5 H9.5 L5.5 9.5 Z" fill="none" stroke="#ddd" stroke-width="0.9"/><circle cx="1.5" cy="1.5" r="1.2" fill="#eee"/><circle cx="9.5" cy="1.5" r="1.2" fill="#eee"/><circle cx="5.5" cy="9.5" r="1.2" fill="#eee"/></svg>
<svg style="position:absolute;left:1267px;top:232px;overflow:visible;" width="6" height="4" viewBox="0 0 6 4"><path d="M0.5 0.8 L3 3.2 L5.5 0.8" fill="none" stroke="#cfcfcf" stroke-width="1"/></svg>
<div style="left:1083px;top:245px;width:190.7px;height:11.8px;background:#545454;border-radius:3px;"></div>
<div style="left:1146px;top:245px;width:0.8px;height:11.8px;background:#3d3d3d;border-radius:0px;"></div>
<div style="left:1210.5px;top:245px;width:0.8px;height:11.8px;background:#3d3d3d;border-radius:0px;"></div>
<div class="t" style="left:1083px;top:245.5px;width:63px;height:12px;line-height:12px;font-size:7.6px;color:#e0e0e0;text-align:center;">Assign</div>
<div class="t" style="left:1146.8px;top:245.5px;width:63.7px;height:12px;line-height:12px;font-size:7.6px;color:#e0e0e0;text-align:center;">Select</div>
<div class="t" style="left:1211.3px;top:245.5px;width:62.4px;height:12px;line-height:12px;font-size:7.6px;color:#e0e0e0;text-align:center;">Deselect</div>
<div style="left:1077px;top:263px;width:201.5px;height:31px;background:#3d3d3d;border-radius:0px;"></div>
<svg style="position:absolute;left:1083px;top:267px;overflow:visible;" width="6" height="7" viewBox="0 0 6 7"><path d="M1 0.8 L5 3.5 L1 6.2 Z" fill="#aaa"/></svg>
<div class="t" style="left:1092px;top:265.3px;height:12px;line-height:12px;font-size:7.6px;color:#d6d6d6;text-align:left;">Preview</div>
<svg style="position:absolute;left:1083px;top:283px;overflow:visible;" width="7" height="6" viewBox="0 0 7 6"><path d="M0.5 1 H6.5 L3.5 5 Z" fill="#aaa"/></svg>
<div class="t" style="left:1092px;top:281.3px;height:12px;line-height:12px;font-size:7.6px;color:#d6d6d6;text-align:left;">Surface</div>
<svg style="position:absolute;left:1266px;top:268.5px;overflow:visible;" width="10" height="5" viewBox="0 0 10 5"><path d="M0.5 1 H9.5 M0.5 3.5 H9.5" stroke="#777" stroke-width="0.8" stroke-dasharray="1 1"/></svg>
<svg style="position:absolute;left:1266px;top:284.5px;overflow:visible;" width="10" height="5" viewBox="0 0 10 5"><path d="M0.5 1 H9.5 M0.5 3.5 H9.5" stroke="#777" stroke-width="0.8" stroke-dasharray="1 1"/></svg>
<div style="left:1077px;top:294px;width:201.5px;height:385px;background:#373737;border-radius:0px;border-bottom-right-radius:4px"></div>
<div style="left:1083px;top:300.3px;width:191px;height:12.6px;background:#4772b3;border-radius:3px;"></div>
<svg style="position:absolute;left:1085px;top:300.5px;overflow:visible;" width="12" height="12" viewBox="0 0 12 12"><rect x="1" y="1.5" width="6" height="3.5" rx="1" fill="#eee"/><rect x="1" y="7" width="6" height="3.5" rx="1" fill="#eee"/><path d="M7 3.5 H9 V9 H7" fill="none" stroke="#eee" stroke-width="0.7" stroke-dasharray="1 0.8"/></svg>
<div class="t" style="left:1094px;top:301.3px;width:180px;height:12px;line-height:12px;font-size:7.6px;color:#ffffff;text-align:center;">Use Nodes</div>
<div class="t" style="left:1028px;top:325.2px;width:120px;height:12px;line-height:12px;font-size:7.6px;color:#d6d6d6;text-align:right;">Surface</div>
<div style="left:1154.8px;top:324.7px;width:105.79999999999995px;height:11.6px;background:#282828;border-radius:3px;"></div>
<svg style="position:absolute;left:1157.8px;top:327.7px;overflow:visible;" width="6" height="6" viewBox="0 0 6 6"><circle cx="3" cy="3" r="2.2" fill="#63c763"/></svg>
<div class="t" style="left:1167.8px;top:325.0px;height:12px;line-height:12px;font-size:7.6px;color:#dedede;text-align:left;">Principled BSDF</div>
<div style="left:1154.8px;top:348.8px;width:105.79999999999995px;height:11.6px;background:#282828;border-radius:3px;"></div>
<div class="t" style="left:1159.8px;top:349.1px;height:12px;line-height:12px;font-size:7.6px;color:#dedede;text-align:left;">GGX</div>
<svg style="position:absolute;left:1251.6px;top:352.8px;overflow:visible;" width="6" height="4" viewBox="0 0 6 4"><path d="M0.5 0.8 L3 3.2 L5.5 0.8" fill="none" stroke="#cfcfcf" stroke-width="1"/></svg>
<svg style="position:absolute;left:1265px;top:352.3px;overflow:visible;" width="5" height="5" viewBox="0 0 5 5"><circle cx="2.5" cy="2.5" r="1.6" fill="#e8e0d8"/></svg>
<div style="left:1154.8px;top:365px;width:105.79999999999995px;height:11.6px;background:#282828;border-radius:3px;"></div>
<div class="t" style="left:1159.8px;top:365.3px;height:12px;line-height:12px;font-size:7.6px;color:#dedede;text-align:left;">Christensen-Burley</div>
<svg style="position:absolute;left:1251.6px;top:369px;overflow:visible;" width="6" height="4" viewBox="0 0 6 4"><path d="M0.5 0.8 L3 3.2 L5.5 0.8" fill="none" stroke="#cfcfcf" stroke-width="1"/></svg>
<svg style="position:absolute;left:1265px;top:368.5px;overflow:visible;" width="5" height="5" viewBox="0 0 5 5"><circle cx="2.5" cy="2.5" r="1.6" fill="#e8e0d8"/></svg>
<svg style="position:absolute;left:1086px;top:384.5px;overflow:visible;" width="7" height="6" viewBox="0 0 7 6"><path d="M0.5 1 H6.5 L3.5 5 Z" fill="#ddd"/></svg>
<div class="t" style="left:1028px;top:382.2px;width:120px;height:12px;line-height:12px;font-size:7.6px;color:#d6d6d6;text-align:right;">Base Color</div>
<div style="left:1154.8px;top:381.7px;width:105.79999999999995px;height:11.6px;background:#2e2e2e;border-radius:3px;"></div>
<svg style="position:absolute;left:1157.8px;top:384.7px;overflow:visible;" width="6" height="6" viewBox="0 0 6 6"><circle cx="3" cy="3" r="2.2" fill="#a5c73a"/></svg>
<div class="t" style="left:1167.8px;top:382.0px;height:12px;line-height:12px;font-size:7.6px;color:#dedede;text-align:left;">TexturesCom...088_2_M.jpg</div>
<div style="left:1083px;top:398.8px;width:20px;height:11.5px;background:#282828;border-radius:3px;border-top-right-radius:0;border-bottom-right-radius:0"></div>
<svg style="position:absolute;left:1085px;top:399.3px;overflow:visible;" width="11" height="10" viewBox="0 0 11 10"><rect x="1" y="1" width="8" height="8" fill="none" stroke="#ddd" stroke-width="0.9"/><path d="M2 8.5 L5 4 L8 8.5 Z" fill="#eee"/><circle cx="7" cy="3" r="0.9" fill="#f0c090"/></svg>
<svg style="position:absolute;left:1096px;top:402.5px;overflow:visible;" width="6" height="4" viewBox="0 0 6 4"><path d="M0.5 0.8 L3 3.2 L5.5 0.8" fill="none" stroke="#cfcfcf" stroke-width="1"/></svg>
<div style="left:1103.5px;top:398.8px;width:116.5px;height:11.5px;background:#1d1d1d;border-radius:0px;"></div>
<div class="t" style="left:1108px;top:399.1px;height:12px;line-height:12px;font-size:7.6px;color:#dedede;text-align:left;">TexturesCom_SoilBeach0088_...</div>
<div style="left:1220px;top:398.8px;width:54px;height:11.5px;background:#505050;border-radius:3px;border-top-left-radius:0;border-bottom-left-radius:0"></div>
<svg style="position:absolute;left:1220px;top:398.8px;overflow:visible;" width="54" height="12" viewBox="0 0 54 12"><path d="M7 2 L10.5 3.2 V6 Q10.5 9 7 10.5 Q3.5 9 3.5 6 V3.2 Z" fill="none" stroke="#999" stroke-width="0.9"/><path d="M19 3 H23 L24.5 4.5 V9 H19 Z" fill="none" stroke="#ccc" stroke-width="0.9"/><path d="M17.5 4.5 V10.5 H22" fill="none" stroke="#ccc" stroke-width="0.9"/><path d="M29.5 3 H33 L34 4 H38.5 V9.5 H29.5 Z" fill="#dddddd"/><path d="M44 3.5 L50 9.5 M50 3.5 L44 9.5" stroke="#ccc" stroke-width="0.9"/></svg>
<div style="left:1154.8px;top:415px;width:105.79999999999995px;height:11.6px;background:#282828;border-radius:3px;"></div>
<div class="t" style="left:1159.8px;top:415.3px;height:12px;line-height:12px;font-size:7.6px;color:#dedede;text-align:left;">Linear</div>
<svg style="position:absolute;left:1251.6px;top:419px;overflow:visible;" width="6" height="4" viewBox="0 0 6 4"><path d="M0.5 0.8 L3 3.2 L5.5 0.8" fill="none" stroke="#cfcfcf" stroke-width="1"/></svg>
<svg style="position:absolute;left:1265px;top:418.5px;overflow:visible;" width="5" height="5" viewBox="0 0 5 5"><circle cx="2.5" cy="2.5" r="1.6" fill="#e8e0d8"/></svg>
<div style="left:1154.8px;top:432px;width:105.79999999999995px;height:11.6px;background:#282828;border-radius:3px;"></div>
<div class="t" style="left:1159.8px;top:432.3px;height:12px;line-height:12px;font-size:7.6px;color:#dedede;text-align:left;">Flat</div>
<svg style="position:absolute;left:1251.6px;top:436px;overflow:visible;" width="6" height="4" viewBox="0 0 6 4"><path d="M0.5 0.8 L3 3.2 L5.5 0.8" fill="none" stroke="#cfcfcf" stroke-width="1"/></svg>
<svg style="position:absolute;left:1265px;top:435.5px;overflow:visible;" width="5" height="5" viewBox="0 0 5 5"><circle cx="2.5" cy="2.5" r="1.6" fill="#e8e0d8"/></svg>
<div style="left:1154.8px;top:448.7px;width:105.79999999999995px;height:11.6px;background:#282828;border-radius:3px;"></div>
<div class="t" style="left:1159.8px;top:449.0px;height:12px;line-height:12px;font-size:7.6px;color:#dedede;text-align:left;">Repeat</div>
<svg style="position:absolute;left:1251.6px;top:452.7px;overflow:visible;" width="6" height="4" viewBox="0 0 6 4"><path d="M0.5 0.8 L3 3.2 L5.5 0.8" fill="none" stroke="#cfcfcf" stroke-width="1"/></svg>
<svg style="position:absolute;left:1265px;top:452.2px;overflow:visible;" width="5" height="5" viewBox="0 0 5 5"><circle cx="2.5" cy="2.5" r="1.6" fill="#e8e0d8"/></svg>
<div style="left:1160px;top:465px;width:100.59999999999991px;height:11.6px;background:#282828;border-radius:3px;"></div>
<div class="t" style="left:1165px;top:465.3px;height:12px;line-height:12px;font-size:7.6px;color:#dedede;text-align:left;">Single Image</div>
<svg style="position:absolute;left:1251.6px;top:469px;overflow:visible;" width="6" height="4" viewBox="0 0 6 4"><path d="M0.5 0.8 L3 3.2 L5.5 0.8" fill="none" stroke="#cfcfcf" stroke-width="1"/></svg>
<div class="t" style="left:1085px;top:482.5px;height:12px;line-height:12px;font-size:7.6px;color:#d6d6d6;text-align:left;">Color Space</div>
<div style="left:1219px;top:482px;width:41.59999999999991px;height:11.6px;background:#282828;border-radius:3px;"></div>
<div class="t" style="left:1224px;top:482.3px;height:12px;line-height:12px;font-size:7.6px;color:#dedede;text-align:left;">sRGB</div>
<svg style="position:absolute;left:1251.6px;top:486px;overflow:visible;" width="6" height="4" viewBox="0 0 6 4"><path d="M0.5 0.8 L3 3.2 L5.5 0.8" fill="none" stroke="#cfcfcf" stroke-width="1"/></svg>
<div class="t" style="left:1028px;top:499.4px;width:120px;height:12px;line-height:12px;font-size:7.6px;color:#d6d6d6;text-align:right;">Vector</div>
<div style="left:1154.8px;top:498.9px;width:105.79999999999995px;height:11.6px;background:#282828;border-radius:3px;"></div>
<svg style="position:absolute;left:1157.8px;top:501.9px;overflow:visible;" width="6" height="6" viewBox="0 0 6 6"><circle cx="3" cy="3" r="2.2" fill="#5f86d6"/></svg>
<div class="t" style="left:1167.8px;top:499.2px;height:12px;line-height:12px;font-size:7.6px;color:#dedede;text-align:left;">Default</div>
<div class="t" style="left:1028px;top:515.5px;width:120px;height:12px;line-height:12px;font-size:7.6px;color:#d6d6d6;text-align:right;">Subsurface</div>
<div style="left:1154.8px;top:515px;width:12.5px;height:11.8px;background:#282828;border-radius:3px;border-top-right-radius:0;border-bottom-right-radius:0"></div>
<svg style="position:absolute;left:1157.5px;top:518.4px;overflow:visible;" width="6" height="6" viewBox="0 0 6 6"><circle cx="3" cy="2.5" r="2.2" fill="#c7c7c7"/></svg>
<div style="left:1167px;top:515px;width:93.59999999999991px;height:11.8px;background:#545454;border-radius:3px;border-top-left-radius:0;border-bottom-left-radius:0"></div>
<div class="t" style="left:1167px;top:515.4px;width:93.59999999999991px;height:12px;line-height:12px;font-size:7.6px;color:#e6e6e6;text-align:center;">0.000</div>
<svg style="position:absolute;left:1265px;top:518.5px;overflow:visible;" width="5" height="5" viewBox="0 0 5 5"><circle cx="2.5" cy="2.5" r="1.6" fill="#e8e0d8"/></svg>
<div class="t" style="left:1028px;top:532.5px;width:120px;height:12px;line-height:12px;font-size:7.6px;color:#d6d6d6;text-align:right;">Subsurface Radius</div>
<div style="left:1154.8px;top:532px;width:12.5px;height:11.8px;background:#282828;border-radius:3px;"></div>
<svg style="position:absolute;left:1157.5px;top:535.4px;overflow:visible;" width="6" height="6" viewBox="0 0 6 6"><circle cx="3" cy="2.5" r="2.2" fill="#6363c7"/></svg>
<div style="left:1172px;top:532px;width:88.6px;height:38.7px;background:#545454;border-radius:3px;"></div>
<div style="left:1172px;top:544.2px;width:88.6px;height:0.8px;background:#474747;border-radius:0px;"></div>
<div style="left:1172px;top:557.1px;width:88.6px;height:0.8px;background:#474747;border-radius:0px;"></div>
<div class="t" style="left:1172px;top:532.5px;width:88.6px;height:12px;line-height:12px;font-size:7.6px;color:#e6e6e6;text-align:center;">1.000</div>
<div class="t" style="left:1172px;top:545.5px;width:88.6px;height:12px;line-height:12px;font-size:7.6px;color:#e6e6e6;text-align:center;">0.200</div>
<div class="t" style="left:1172px;top:558.5px;width:88.6px;height:12px;line-height:12px;font-size:7.6px;color:#e6e6e6;text-align:center;">0.100</div>
<svg style="position:absolute;left:1265px;top:535.5px;overflow:visible;" width="5" height="5" viewBox="0 0 5 5"><circle cx="2.5" cy="2.5" r="1.6" fill="#e8e0d8"/></svg>
<svg style="position:absolute;left:1265px;top:548.5px;overflow:visible;" width="5" height="5" viewBox="0 0 5 5"><circle cx="2.5" cy="2.5" r="1.6" fill="#e8e0d8"/></svg>
<svg style="position:absolute;left:1265px;top:561.5px;overflow:visible;" width="5" height="5" viewBox="0 0 5 5"><circle cx="2.5" cy="2.5" r="1.6" fill="#e8e0d8"/></svg>
<div class="t" style="left:1028px;top:575.5px;width:120px;height:12px;line-height:12px;font-size:7.6px;color:#d6d6d6;text-align:right;">Subsurface Color</div>
<div style="left:1154.8px;top:575px;width:12.5px;height:11.8px;background:#282828;border-radius:3px;border-top-right-radius:0;border-bottom-right-radius:0"></div>
<svg style="position:absolute;left:1157.5px;top:578.4px;overflow:visible;" width="6" height="6" viewBox="0 0 6 6"><circle cx="3" cy="2.5" r="2.2" fill="#a5c73a"/></svg>
<div style="left:1167px;top:575px;width:93.6px;height:11.8px;background:#e6e6e6;border-radius:3px;border-top-left-radius:0;border-bottom-left-radius:0"></div>
<svg style="position:absolute;left:1265px;top:578.5px;overflow:visible;" width="5" height="5" viewBox="0 0 5 5"><circle cx="2.5" cy="2.5" r="1.6" fill="#e8e0d8"/></svg>
<div class="t" style="left:1028px;top:592.2px;width:120px;height:12px;line-height:12px;font-size:7.6px;color:#d6d6d6;text-align:right;">Metallic</div>
<div style="left:1154.8px;top:591.7px;width:12.5px;height:11.8px;background:#282828;border-radius:3px;border-top-right-radius:0;border-bottom-right-radius:0"></div>
<svg style="position:absolute;left:1157.5px;top:595.1px;overflow:visible;" width="6" height="6" viewBox="0 0 6 6"><circle cx="3" cy="2.5" r="2.2" fill="#c7c7c7"/></svg>
<div style="left:1167px;top:591.7px;width:93.59999999999991px;height:11.8px;background:#545454;border-radius:3px;border-top-left-radius:0;border-bottom-left-radius:0"></div>
<div class="t" style="left:1167px;top:592.1px;width:93.59999999999991px;height:12px;line-height:12px;font-size:7.6px;color:#e6e6e6;text-align:center;">0.000</div>
<svg style="position:absolute;left:1265px;top:595.2px;overflow:visible;" width="5" height="5" viewBox="0 0 5 5"><circle cx="2.5" cy="2.5" r="1.6" fill="#e8e0d8"/></svg>
<div class="t" style="left:1028px;top:608.9px;width:120px;height:12px;line-height:12px;font-size:7.6px;color:#d6d6d6;text-align:right;">Specular</div>
<div style="left:1154.8px;top:608.4px;width:12.5px;height:11.8px;background:#282828;border-radius:3px;border-top-right-radius:0;border-bottom-right-radius:0"></div>
<svg style="position:absolute;left:1157.5px;top:611.8px;overflow:visible;" width="6" height="6" viewBox="0 0 6 6"><circle cx="3" cy="2.5" r="2.2" fill="#c7c7c7"/></svg>
<div style="left:1167px;top:608.4px;width:93.59999999999991px;height:11.8px;background:#545454;border-radius:3px;border-top-left-radius:0;border-bottom-left-radius:0"></div>
<div class="t" style="left:1167px;top:608.8px;width:93.59999999999991px;height:12px;line-height:12px;font-size:7.6px;color:#e6e6e6;text-align:center;">0.000</div>
<svg style="position:absolute;left:1265px;top:611.9px;overflow:visible;" width="5" height="5" viewBox="0 0 5 5"><circle cx="2.5" cy="2.5" r="1.6" fill="#e8e0d8"/></svg>
<div class="t" style="left:1028px;top:625.5px;width:120px;height:12px;line-height:12px;font-size:7.6px;color:#d6d6d6;text-align:right;">Specular Tint</div>
<div style="left:1154.8px;top:625px;width:12.5px;height:11.8px;background:#282828;border-radius:3px;border-top-right-radius:0;border-bottom-right-radius:0"></div>
<svg style="position:absolute;left:1157.5px;top:628.4px;overflow:visible;" width="6" height="6" viewBox="0 0 6 6"><circle cx="3" cy="2.5" r="2.2" fill="#c7c7c7"/></svg>
<div style="left:1167px;top:625px;width:93.59999999999991px;height:11.8px;background:#545454;border-radius:3px;border-top-left-radius:0;border-bottom-left-radius:0"></div>
<div class="t" style="left:1167px;top:625.4px;width:93.59999999999991px;height:12px;line-height:12px;font-size:7.6px;color:#e6e6e6;text-align:center;">0.000</div>
<svg style="position:absolute;left:1265px;top:628.5px;overflow:visible;" width="5" height="5" viewBox="0 0 5 5"><circle cx="2.5" cy="2.5" r="1.6" fill="#e8e0d8"/></svg>
<div class="t" style="left:1028px;top:642.1px;width:120px;height:12px;line-height:12px;font-size:7.6px;color:#d6d6d6;text-align:right;">Roughness</div>
<div style="left:1154.8px;top:641.6px;width:12.5px;height:11.8px;background:#282828;border-radius:3px;border-top-right-radius:0;border-bottom-right-radius:0"></div>
<svg style="position:absolute;left:1157.5px;top:645.0px;overflow:visible;" width="6" height="6" viewBox="0 0 6 6"><circle cx="3" cy="2.5" r="2.2" fill="#c7c7c7"/></svg>
<div style="left:1167px;top:641.6px;width:93.59999999999991px;height:11.8px;background:#4a78be;border-radius:3px;border-top-left-radius:0;border-bottom-left-radius:0"></div>
<div class="t" style="left:1167px;top:642.0px;width:93.59999999999991px;height:12px;line-height:12px;font-size:7.6px;color:#e6e6e6;text-align:center;">1.000</div>
<svg style="position:absolute;left:1265px;top:645.1px;overflow:visible;" width="5" height="5" viewBox="0 0 5 5"><circle cx="2.5" cy="2.5" r="1.6" fill="#e8e0d8"/></svg>
<div class="t" style="left:1028px;top:658.5px;width:120px;height:12px;line-height:12px;font-size:7.6px;color:#d6d6d6;text-align:right;">Anisotropic</div>
<div style="left:1154.8px;top:658px;width:12.5px;height:11.8px;background:#282828;border-radius:3px;border-top-right-radius:0;border-bottom-right-radius:0"></div>
<svg style="position:absolute;left:1157.5px;top:661.4px;overflow:visible;" width="6" height="6" viewBox="0 0 6 6"><circle cx="3" cy="2.5" r="2.2" fill="#c7c7c7"/></svg>
<div style="left:1167px;top:658px;width:93.59999999999991px;height:11.8px;background:#545454;border-radius:3px;border-top-left-radius:0;border-bottom-left-radius:0"></div>
<div class="t" style="left:1167px;top:658.4px;width:93.59999999999991px;height:12px;line-height:12px;font-size:7.6px;color:#e6e6e6;text-align:center;">0.000</div>
<svg style="position:absolute;left:1265px;top:661.5px;overflow:visible;" width="5" height="5" viewBox="0 0 5 5"><circle cx="2.5" cy="2.5" r="1.6" fill="#e8e0d8"/></svg>
<div class="t" style="left:1028px;top:675.5px;width:120px;height:12px;line-height:12px;font-size:7.6px;color:#d6d6d6;text-align:right;">Anisotropic Rotation</div>
<div style="left:1154.8px;top:675px;width:12.5px;height:11.8px;background:#282828;border-radius:3px;border-top-right-radius:0;border-bottom-right-radius:0"></div>
<svg style="position:absolute;left:1157.5px;top:678.4px;overflow:visible;" width="6" height="6" viewBox="0 0 6 6"><circle cx="3" cy="2.5" r="2.2" fill="#c7c7c7"/></svg>
<div style="left:1167px;top:675px;width:93.59999999999991px;height:11.8px;background:#545454;border-radius:3px;border-top-left-radius:0;border-bottom-left-radius:0"></div>
<div class="t" style="left:1167px;top:675.4px;width:93.59999999999991px;height:12px;line-height:12px;font-size:7.6px;color:#e6e6e6;text-align:center;">0.000</div>
<svg style="position:absolute;left:1265px;top:678.5px;overflow:visible;" width="5" height="5" viewBox="0 0 5 5"><circle cx="2.5" cy="2.5" r="1.6" fill="#e8e0d8"/></svg>
<div style="left:0px;top:679px;width:1280px;height:14px;background:#2a2a2a;border-radius:0px;"></div>
<svg style="position:absolute;left:8px;top:681px;overflow:visible;" width="8" height="10" viewBox="0 0 8 10"><rect x="1" y="0.8" width="6" height="8.5" rx="3" fill="none" stroke="#ccc" stroke-width="0.9"/><path d="M4 0.8 V4" stroke="#ccc" stroke-width="0.8"/><path d="M1.5 4 V2.5 Q2 1 4 1 V4 Z" fill="#ddd"/></svg>
<div class="t" style="left:23px;top:680.5px;height:12px;line-height:12px;font-size:7.3px;color:#bdbdbd;text-align:left;">Change Frame</div>
<svg style="position:absolute;left:79px;top:681px;overflow:visible;" width="8" height="10" viewBox="0 0 8 10"><rect x="1" y="0.8" width="6" height="8.5" rx="3" fill="none" stroke="#ccc" stroke-width="0.9"/><path d="M4 0.8 V4" stroke="#ccc" stroke-width="0.8"/><path d="M1.5 4 V2.5 Q2 1 4 1 V4 Z" fill="#ddd"/></svg>
<svg style="position:absolute;left:85px;top:681px;overflow:visible;" width="6" height="8" viewBox="0 0 6 8"><path d="M1 1 Q4 1 4 4" fill="none" stroke="#ccc" stroke-width="0.8"/></svg>
<div class="t" style="left:94px;top:680.5px;height:12px;line-height:12px;font-size:7.3px;color:#bdbdbd;text-align:left;">Box Select</div>
<svg style="position:absolute;left:165.5px;top:681px;overflow:visible;" width="8" height="10" viewBox="0 0 8 10"><rect x="1" y="0.8" width="6" height="8.5" rx="3" fill="none" stroke="#ccc" stroke-width="0.9"/><path d="M4 0.8 V4" stroke="#ccc" stroke-width="0.8"/></svg>
<div class="t" style="left:179.8px;top:680.5px;height:12px;line-height:12px;font-size:7.3px;color:#bdbdbd;text-align:left;">Pan View</div>
<svg style="position:absolute;left:322.5px;top:681px;overflow:visible;" width="8" height="10" viewBox="0 0 8 10"><rect x="1" y="0.8" width="6" height="8.5" rx="3" fill="none" stroke="#ccc" stroke-width="0.9"/><path d="M4 0.8 V4" stroke="#ccc" stroke-width="0.8"/></svg>
<div class="t" style="left:338px;top:680.5px;height:12px;line-height:12px;font-size:7.3px;color:#bdbdbd;text-align:left;">UV Context Menu</div>
<div class="t" style="left:1018px;top:680.5px;width:251px;height:12px;line-height:12px;font-size:7.6px;color:#bdbdbd;text-align:right;letter-spacing:0">Cube | Verts:12/12 | Edges:16/16 | Faces:6/6 | Tris:12 | Objects:1/3 | 2.90.0</div>
</div></body></html>
